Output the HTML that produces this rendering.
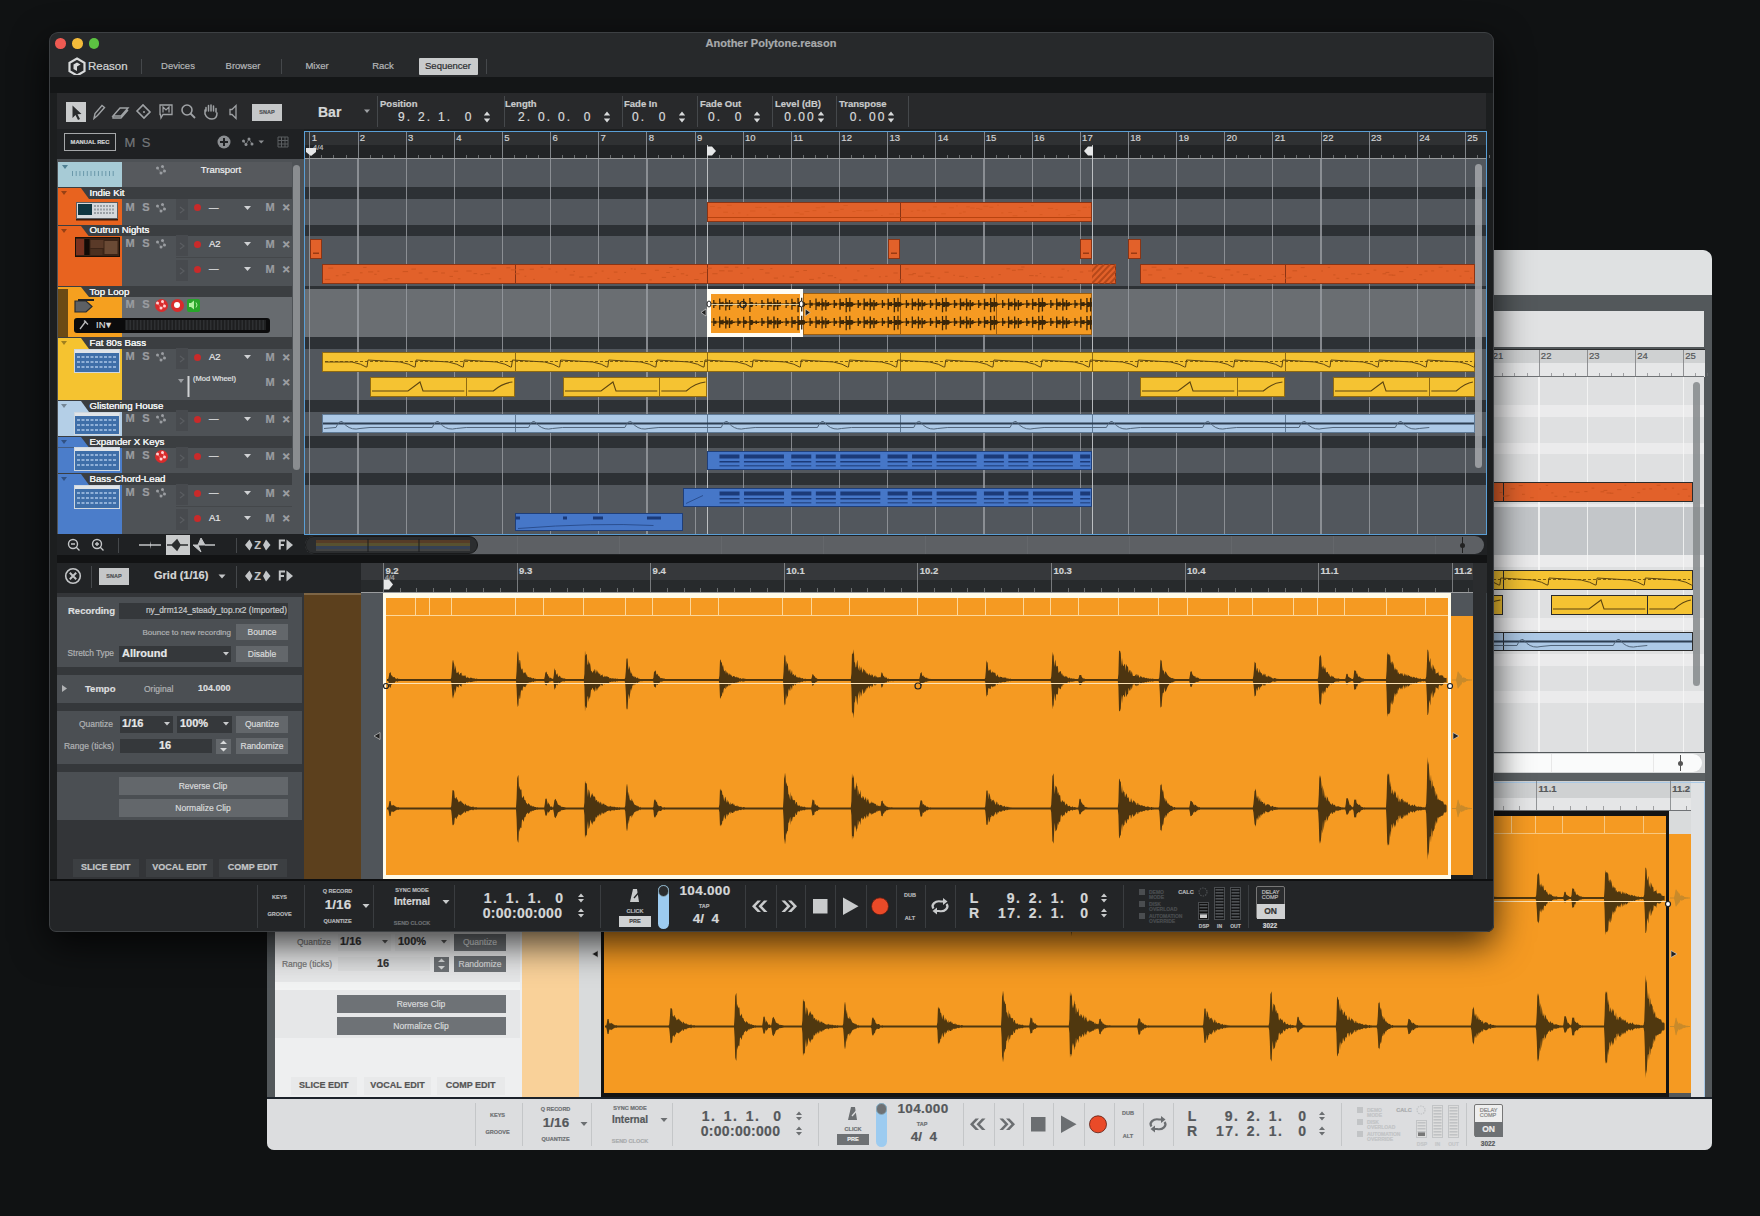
<!DOCTYPE html><html><head><meta charset="utf-8"><style>
*{margin:0;padding:0}
html,body{width:1760px;height:1216px;overflow:hidden;background:#101213;font-family:"Liberation Sans",sans-serif;}
.a{position:absolute}
.t{position:absolute;white-space:nowrap;-webkit-text-stroke:0.2px currentColor}
.t .c{position:absolute;left:0;transform:translateX(-50%);}
.win{position:absolute;overflow:hidden}
</style></head><body><svg width="0" height="0" style="position:absolute;left:0;top:0"><defs><path id="tl" d="M711.1 303.6h380.2v1h-380.2zM711.1 321.6h380.2v1h-380.2zM713.3 300.1h1.3v8.0h-1.3zM714.6 302.8h2v2.9h-2zM713.3 318.1h1.3v8.0h-1.3zM714.6 320.8h2v2.9h-2zM719.2 298.4h1.3v11.3h-1.3zM720.5 302.2h2v4.0h-2zM719.2 316.4h1.3v11.3h-1.3zM720.5 320.2h2v4.0h-2zM721.7 302.3h1.3v3.3h-1.3zM723.0 303.5h2v1.4h-2zM721.7 320.3h1.3v3.3h-1.3zM723.0 321.5h2v1.4h-2zM722.5 301.8h1.3v4.6h-1.3zM723.8 303.3h2v1.8h-2zM722.5 319.8h1.3v4.6h-1.3zM723.8 321.3h2v1.8h-2zM725.3 298.4h1.3v12.1h-1.3zM726.6 302.2h2v4.2h-2zM725.3 316.4h1.3v12.1h-1.3zM726.6 320.2h2v4.2h-2zM729.0 299.9h1.3v10.2h-1.3zM730.3 302.7h2v3.6h-2zM729.0 317.9h1.3v10.2h-1.3zM730.3 320.7h2v3.6h-2zM731.5 302.1h1.3v3.9h-1.3zM732.8 303.4h2v1.6h-2zM731.5 320.1h1.3v3.9h-1.3zM732.8 321.4h2v1.6h-2zM737.5 300.1h1.3v8.0h-1.3zM738.8 302.8h2v2.9h-2zM737.5 318.1h1.3v8.0h-1.3zM738.8 320.8h2v2.9h-2zM743.2 298.8h1.3v11.0h-1.3zM744.5 302.3h2v3.8h-2zM743.2 316.8h1.3v11.0h-1.3zM744.5 320.3h2v3.8h-2zM745.8 302.9h1.3v2.7h-1.3zM747.1 303.6h2v1.2h-2zM745.8 320.9h1.3v2.7h-1.3zM747.1 321.6h2v1.2h-2zM749.4 298.0h1.3v14.0h-1.3zM750.7 302.1h2v4.8h-2zM749.4 316.0h1.3v14.0h-1.3zM750.7 320.1h2v4.8h-2zM752.0 302.5h1.3v3.5h-1.3zM753.3 303.5h2v1.5h-2zM752.0 320.5h1.3v3.5h-1.3zM753.3 321.5h2v1.5h-2zM755.5 302.5h1.3v3.1h-1.3zM756.8 303.5h2v1.3h-2zM755.5 320.5h1.3v3.1h-1.3zM756.8 321.5h2v1.3h-2zM761.4 300.1h1.3v7.8h-1.3zM762.7 302.8h2v2.8h-2zM761.4 318.1h1.3v7.8h-1.3zM762.7 320.8h2v2.8h-2zM767.4 298.6h1.3v11.5h-1.3zM768.7 302.3h2v4.0h-2zM767.4 316.6h1.3v11.5h-1.3zM768.7 320.3h2v4.0h-2zM769.8 302.9h1.3v2.7h-1.3zM771.1 303.6h2v1.2h-2zM769.8 320.9h1.3v2.7h-1.3zM771.1 321.6h2v1.2h-2zM773.4 298.4h1.3v12.1h-1.3zM774.7 302.2h2v4.2h-2zM773.4 316.4h1.3v12.1h-1.3zM774.7 320.2h2v4.2h-2zM777.1 299.9h1.3v10.2h-1.3zM778.4 302.7h2v3.6h-2zM777.1 317.9h1.3v10.2h-1.3zM778.4 320.7h2v3.6h-2zM779.8 302.1h1.3v3.9h-1.3zM781.1 303.4h2v1.6h-2zM779.8 320.1h1.3v3.9h-1.3zM781.1 321.4h2v1.6h-2zM785.6 300.1h1.3v8.0h-1.3zM786.9 302.8h2v2.9h-2zM785.6 318.1h1.3v8.0h-1.3zM786.9 320.8h2v2.9h-2zM791.5 298.8h1.3v11.0h-1.3zM792.8 302.3h2v3.8h-2zM791.5 316.8h1.3v11.0h-1.3zM792.8 320.3h2v3.8h-2zM793.9 302.7h1.3v2.7h-1.3zM795.2 303.6h2v1.2h-2zM793.9 320.7h1.3v2.7h-1.3zM795.2 321.6h2v1.2h-2zM794.6 302.1h1.3v4.2h-1.3zM795.9 303.4h2v1.7h-2zM794.6 320.1h1.3v4.2h-1.3zM795.9 321.4h2v1.7h-2zM797.6 298.2h1.3v14.0h-1.3zM798.9 302.2h2v4.8h-2zM797.6 316.2h1.3v14.0h-1.3zM798.9 320.2h2v4.8h-2zM801.2 297.8h1.3v13.8h-1.3zM802.5 302.0h2v4.7h-2zM801.2 315.8h1.3v13.8h-1.3zM802.5 320.0h2v4.7h-2zM755.8 302.5h1.3v3.5h-1.3zM757.1 303.5h2v1.5h-2zM755.8 320.5h1.3v3.5h-1.3zM757.1 321.5h2v1.5h-2zM761.5 300.1h1.3v8.0h-1.3zM762.8 302.8h2v2.9h-2zM761.5 318.1h1.3v8.0h-1.3zM762.8 320.8h2v2.9h-2zM767.3 298.4h1.3v11.3h-1.3zM768.6 302.2h2v4.0h-2zM767.3 316.4h1.3v11.3h-1.3zM768.6 320.2h2v4.0h-2zM769.9 302.3h1.3v3.3h-1.3zM771.2 303.5h2v1.4h-2zM769.9 320.3h1.3v3.3h-1.3zM771.2 321.5h2v1.4h-2zM770.7 301.8h1.3v4.6h-1.3zM772.0 303.3h2v1.8h-2zM770.7 319.8h1.3v4.6h-1.3zM772.0 321.3h2v1.8h-2zM773.5 298.4h1.3v12.1h-1.3zM774.8 302.2h2v4.2h-2zM773.5 316.4h1.3v12.1h-1.3zM774.8 320.2h2v4.2h-2zM777.2 299.9h1.3v10.2h-1.3zM778.5 302.7h2v3.6h-2zM777.2 317.9h1.3v10.2h-1.3zM778.5 320.7h2v3.6h-2zM779.7 302.1h1.3v3.9h-1.3zM781.0 303.4h2v1.6h-2zM779.7 320.1h1.3v3.9h-1.3zM781.0 321.4h2v1.6h-2zM785.6 300.1h1.3v8.0h-1.3zM786.9 302.8h2v2.9h-2zM785.6 318.1h1.3v8.0h-1.3zM786.9 320.8h2v2.9h-2zM791.4 298.8h1.3v11.0h-1.3zM792.7 302.3h2v3.8h-2zM791.4 316.8h1.3v11.0h-1.3zM792.7 320.3h2v3.8h-2zM793.9 302.9h1.3v2.7h-1.3zM795.2 303.6h2v1.2h-2zM793.9 320.9h1.3v2.7h-1.3zM795.2 321.6h2v1.2h-2zM797.5 298.0h1.3v14.0h-1.3zM798.8 302.1h2v4.8h-2zM797.5 316.0h1.3v14.0h-1.3zM798.8 320.1h2v4.8h-2zM800.1 302.5h1.3v3.5h-1.3zM801.4 303.5h2v1.5h-2zM800.1 320.5h1.3v3.5h-1.3zM801.4 321.5h2v1.5h-2zM803.6 302.5h1.3v3.1h-1.3zM804.9 303.5h2v1.3h-2zM803.6 320.5h1.3v3.1h-1.3zM804.9 321.5h2v1.3h-2zM809.6 300.1h1.3v7.8h-1.3zM810.9 302.8h2v2.8h-2zM809.6 318.1h1.3v7.8h-1.3zM810.9 320.8h2v2.8h-2zM815.5 298.6h1.3v11.5h-1.3zM816.8 302.3h2v4.0h-2zM815.5 316.6h1.3v11.5h-1.3zM816.8 320.3h2v4.0h-2zM818.0 302.9h1.3v2.7h-1.3zM819.3 303.6h2v1.2h-2zM818.0 320.9h1.3v2.7h-1.3zM819.3 321.6h2v1.2h-2zM821.6 298.4h1.3v12.1h-1.3zM822.9 302.2h2v4.2h-2zM821.6 316.4h1.3v12.1h-1.3zM822.9 320.2h2v4.2h-2zM825.3 299.9h1.3v10.2h-1.3zM826.6 302.7h2v3.6h-2zM825.3 317.9h1.3v10.2h-1.3zM826.6 320.7h2v3.6h-2zM828.0 302.1h1.3v3.9h-1.3zM829.3 303.4h2v1.6h-2zM828.0 320.1h1.3v3.9h-1.3zM829.3 321.4h2v1.6h-2zM833.7 300.1h1.3v8.0h-1.3zM835.0 302.8h2v2.9h-2zM833.7 318.1h1.3v8.0h-1.3zM835.0 320.8h2v2.9h-2zM839.6 298.8h1.3v11.0h-1.3zM840.9 302.3h2v3.8h-2zM839.6 316.8h1.3v11.0h-1.3zM840.9 320.3h2v3.8h-2zM842.0 302.7h1.3v2.7h-1.3zM843.3 303.6h2v1.2h-2zM842.0 320.7h1.3v2.7h-1.3zM843.3 321.6h2v1.2h-2zM842.8 302.1h1.3v4.2h-1.3zM844.1 303.4h2v1.7h-2zM842.8 320.1h1.3v4.2h-1.3zM844.1 321.4h2v1.7h-2zM845.7 298.2h1.3v14.0h-1.3zM847.0 302.2h2v4.8h-2zM845.7 316.2h1.3v14.0h-1.3zM847.0 320.2h2v4.8h-2zM849.3 297.8h1.3v13.8h-1.3zM850.6 302.0h2v4.7h-2zM849.3 315.8h1.3v13.8h-1.3zM850.6 320.0h2v4.7h-2zM803.9 302.5h1.3v3.5h-1.3zM805.2 303.5h2v1.5h-2zM803.9 320.5h1.3v3.5h-1.3zM805.2 321.5h2v1.5h-2zM809.6 300.1h1.3v8.0h-1.3zM810.9 302.8h2v2.9h-2zM809.6 318.1h1.3v8.0h-1.3zM810.9 320.8h2v2.9h-2zM815.5 298.4h1.3v11.3h-1.3zM816.8 302.2h2v4.0h-2zM815.5 316.4h1.3v11.3h-1.3zM816.8 320.2h2v4.0h-2zM818.0 302.3h1.3v3.3h-1.3zM819.3 303.5h2v1.4h-2zM818.0 320.3h1.3v3.3h-1.3zM819.3 321.5h2v1.4h-2zM818.8 301.8h1.3v4.6h-1.3zM820.1 303.3h2v1.8h-2zM818.8 319.8h1.3v4.6h-1.3zM820.1 321.3h2v1.8h-2zM821.6 298.4h1.3v12.1h-1.3zM822.9 302.2h2v4.2h-2zM821.6 316.4h1.3v12.1h-1.3zM822.9 320.2h2v4.2h-2zM825.3 299.9h1.3v10.2h-1.3zM826.6 302.7h2v3.6h-2zM825.3 317.9h1.3v10.2h-1.3zM826.6 320.7h2v3.6h-2zM827.8 302.1h1.3v3.9h-1.3zM829.1 303.4h2v1.6h-2zM827.8 320.1h1.3v3.9h-1.3zM829.1 321.4h2v1.6h-2zM833.8 300.1h1.3v8.0h-1.3zM835.1 302.8h2v2.9h-2zM833.8 318.1h1.3v8.0h-1.3zM835.1 320.8h2v2.9h-2zM839.5 298.8h1.3v11.0h-1.3zM840.8 302.3h2v3.8h-2zM839.5 316.8h1.3v11.0h-1.3zM840.8 320.3h2v3.8h-2zM842.1 302.9h1.3v2.7h-1.3zM843.4 303.6h2v1.2h-2zM842.1 320.9h1.3v2.7h-1.3zM843.4 321.6h2v1.2h-2zM845.7 298.0h1.3v14.0h-1.3zM847.0 302.1h2v4.8h-2zM845.7 316.0h1.3v14.0h-1.3zM847.0 320.1h2v4.8h-2zM848.3 302.5h1.3v3.5h-1.3zM849.6 303.5h2v1.5h-2zM848.3 320.5h1.3v3.5h-1.3zM849.6 321.5h2v1.5h-2zM851.8 302.5h1.3v3.1h-1.3zM853.1 303.5h2v1.3h-2zM851.8 320.5h1.3v3.1h-1.3zM853.1 321.5h2v1.3h-2zM857.7 300.1h1.3v7.8h-1.3zM859.0 302.8h2v2.8h-2zM857.7 318.1h1.3v7.8h-1.3zM859.0 320.8h2v2.8h-2zM863.7 298.6h1.3v11.5h-1.3zM865.0 302.3h2v4.0h-2zM863.7 316.6h1.3v11.5h-1.3zM865.0 320.3h2v4.0h-2zM866.1 302.9h1.3v2.7h-1.3zM867.4 303.6h2v1.2h-2zM866.1 320.9h1.3v2.7h-1.3zM867.4 321.6h2v1.2h-2zM869.7 298.4h1.3v12.1h-1.3zM871.0 302.2h2v4.2h-2zM869.7 316.4h1.3v12.1h-1.3zM871.0 320.2h2v4.2h-2zM873.4 299.9h1.3v10.2h-1.3zM874.7 302.7h2v3.6h-2zM873.4 317.9h1.3v10.2h-1.3zM874.7 320.7h2v3.6h-2zM876.1 302.1h1.3v3.9h-1.3zM877.4 303.4h2v1.6h-2zM876.1 320.1h1.3v3.9h-1.3zM877.4 321.4h2v1.6h-2zM881.9 300.1h1.3v8.0h-1.3zM883.2 302.8h2v2.9h-2zM881.9 318.1h1.3v8.0h-1.3zM883.2 320.8h2v2.9h-2zM887.8 298.8h1.3v11.0h-1.3zM889.1 302.3h2v3.8h-2zM887.8 316.8h1.3v11.0h-1.3zM889.1 320.3h2v3.8h-2zM890.2 302.7h1.3v2.7h-1.3zM891.5 303.6h2v1.2h-2zM890.2 320.7h1.3v2.7h-1.3zM891.5 321.6h2v1.2h-2zM890.9 302.1h1.3v4.2h-1.3zM892.2 303.4h2v1.7h-2zM890.9 320.1h1.3v4.2h-1.3zM892.2 321.4h2v1.7h-2zM893.9 298.2h1.3v14.0h-1.3zM895.2 302.2h2v4.8h-2zM893.9 316.2h1.3v14.0h-1.3zM895.2 320.2h2v4.8h-2zM897.5 297.8h1.3v13.8h-1.3zM898.8 302.0h2v4.7h-2zM897.5 315.8h1.3v13.8h-1.3zM898.8 320.0h2v4.7h-2zM852.1 302.5h1.3v3.5h-1.3zM853.4 303.5h2v1.5h-2zM852.1 320.5h1.3v3.5h-1.3zM853.4 321.5h2v1.5h-2zM857.8 300.1h1.3v8.0h-1.3zM859.1 302.8h2v2.9h-2zM857.8 318.1h1.3v8.0h-1.3zM859.1 320.8h2v2.9h-2zM863.6 298.4h1.3v11.3h-1.3zM864.9 302.2h2v4.0h-2zM863.6 316.4h1.3v11.3h-1.3zM864.9 320.2h2v4.0h-2zM866.2 302.3h1.3v3.3h-1.3zM867.5 303.5h2v1.4h-2zM866.2 320.3h1.3v3.3h-1.3zM867.5 321.5h2v1.4h-2zM867.0 301.8h1.3v4.6h-1.3zM868.3 303.3h2v1.8h-2zM867.0 319.8h1.3v4.6h-1.3zM868.3 321.3h2v1.8h-2zM869.8 298.4h1.3v12.1h-1.3zM871.1 302.2h2v4.2h-2zM869.8 316.4h1.3v12.1h-1.3zM871.1 320.2h2v4.2h-2zM873.5 299.9h1.3v10.2h-1.3zM874.8 302.7h2v3.6h-2zM873.5 317.9h1.3v10.2h-1.3zM874.8 320.7h2v3.6h-2zM876.0 302.1h1.3v3.9h-1.3zM877.3 303.4h2v1.6h-2zM876.0 320.1h1.3v3.9h-1.3zM877.3 321.4h2v1.6h-2zM881.9 300.1h1.3v8.0h-1.3zM883.2 302.8h2v2.9h-2zM881.9 318.1h1.3v8.0h-1.3zM883.2 320.8h2v2.9h-2zM887.7 298.8h1.3v11.0h-1.3zM889.0 302.3h2v3.8h-2zM887.7 316.8h1.3v11.0h-1.3zM889.0 320.3h2v3.8h-2zM890.2 302.9h1.3v2.7h-1.3zM891.5 303.6h2v1.2h-2zM890.2 320.9h1.3v2.7h-1.3zM891.5 321.6h2v1.2h-2zM893.8 298.0h1.3v14.0h-1.3zM895.1 302.1h2v4.8h-2zM893.8 316.0h1.3v14.0h-1.3zM895.1 320.1h2v4.8h-2zM896.4 302.5h1.3v3.5h-1.3zM897.7 303.5h2v1.5h-2zM896.4 320.5h1.3v3.5h-1.3zM897.7 321.5h2v1.5h-2zM899.9 302.5h1.3v3.1h-1.3zM901.2 303.5h2v1.3h-2zM899.9 320.5h1.3v3.1h-1.3zM901.2 321.5h2v1.3h-2zM905.9 300.1h1.3v7.8h-1.3zM907.2 302.8h2v2.8h-2zM905.9 318.1h1.3v7.8h-1.3zM907.2 320.8h2v2.8h-2zM911.8 298.6h1.3v11.5h-1.3zM913.1 302.3h2v4.0h-2zM911.8 316.6h1.3v11.5h-1.3zM913.1 320.3h2v4.0h-2zM914.3 302.9h1.3v2.7h-1.3zM915.6 303.6h2v1.2h-2zM914.3 320.9h1.3v2.7h-1.3zM915.6 321.6h2v1.2h-2zM917.9 298.4h1.3v12.1h-1.3zM919.2 302.2h2v4.2h-2zM917.9 316.4h1.3v12.1h-1.3zM919.2 320.2h2v4.2h-2zM921.6 299.9h1.3v10.2h-1.3zM922.9 302.7h2v3.6h-2zM921.6 317.9h1.3v10.2h-1.3zM922.9 320.7h2v3.6h-2zM924.3 302.1h1.3v3.9h-1.3zM925.6 303.4h2v1.6h-2zM924.3 320.1h1.3v3.9h-1.3zM925.6 321.4h2v1.6h-2zM930.0 300.1h1.3v8.0h-1.3zM931.3 302.8h2v2.9h-2zM930.0 318.1h1.3v8.0h-1.3zM931.3 320.8h2v2.9h-2zM935.9 298.8h1.3v11.0h-1.3zM937.2 302.3h2v3.8h-2zM935.9 316.8h1.3v11.0h-1.3zM937.2 320.3h2v3.8h-2zM938.3 302.7h1.3v2.7h-1.3zM939.6 303.6h2v1.2h-2zM938.3 320.7h1.3v2.7h-1.3zM939.6 321.6h2v1.2h-2zM939.1 302.1h1.3v4.2h-1.3zM940.4 303.4h2v1.7h-2zM939.1 320.1h1.3v4.2h-1.3zM940.4 321.4h2v1.7h-2zM942.0 298.2h1.3v14.0h-1.3zM943.3 302.2h2v4.8h-2zM942.0 316.2h1.3v14.0h-1.3zM943.3 320.2h2v4.8h-2zM945.6 297.8h1.3v13.8h-1.3zM946.9 302.0h2v4.7h-2zM945.6 315.8h1.3v13.8h-1.3zM946.9 320.0h2v4.7h-2zM900.2 302.5h1.3v3.5h-1.3zM901.5 303.5h2v1.5h-2zM900.2 320.5h1.3v3.5h-1.3zM901.5 321.5h2v1.5h-2zM905.9 300.1h1.3v8.0h-1.3zM907.2 302.8h2v2.9h-2zM905.9 318.1h1.3v8.0h-1.3zM907.2 320.8h2v2.9h-2zM911.8 298.4h1.3v11.3h-1.3zM913.1 302.2h2v4.0h-2zM911.8 316.4h1.3v11.3h-1.3zM913.1 320.2h2v4.0h-2zM914.3 302.3h1.3v3.3h-1.3zM915.6 303.5h2v1.4h-2zM914.3 320.3h1.3v3.3h-1.3zM915.6 321.5h2v1.4h-2zM915.1 301.8h1.3v4.6h-1.3zM916.4 303.3h2v1.8h-2zM915.1 319.8h1.3v4.6h-1.3zM916.4 321.3h2v1.8h-2zM917.9 298.4h1.3v12.1h-1.3zM919.2 302.2h2v4.2h-2zM917.9 316.4h1.3v12.1h-1.3zM919.2 320.2h2v4.2h-2zM921.6 299.9h1.3v10.2h-1.3zM922.9 302.7h2v3.6h-2zM921.6 317.9h1.3v10.2h-1.3zM922.9 320.7h2v3.6h-2zM924.1 302.1h1.3v3.9h-1.3zM925.4 303.4h2v1.6h-2zM924.1 320.1h1.3v3.9h-1.3zM925.4 321.4h2v1.6h-2zM930.1 300.1h1.3v8.0h-1.3zM931.4 302.8h2v2.9h-2zM930.1 318.1h1.3v8.0h-1.3zM931.4 320.8h2v2.9h-2zM935.8 298.8h1.3v11.0h-1.3zM937.1 302.3h2v3.8h-2zM935.8 316.8h1.3v11.0h-1.3zM937.1 320.3h2v3.8h-2zM938.4 302.9h1.3v2.7h-1.3zM939.7 303.6h2v1.2h-2zM938.4 320.9h1.3v2.7h-1.3zM939.7 321.6h2v1.2h-2zM942.0 298.0h1.3v14.0h-1.3zM943.3 302.1h2v4.8h-2zM942.0 316.0h1.3v14.0h-1.3zM943.3 320.1h2v4.8h-2zM944.6 302.5h1.3v3.5h-1.3zM945.9 303.5h2v1.5h-2zM944.6 320.5h1.3v3.5h-1.3zM945.9 321.5h2v1.5h-2zM948.1 302.5h1.3v3.1h-1.3zM949.4 303.5h2v1.3h-2zM948.1 320.5h1.3v3.1h-1.3zM949.4 321.5h2v1.3h-2zM954.0 300.1h1.3v7.8h-1.3zM955.3 302.8h2v2.8h-2zM954.0 318.1h1.3v7.8h-1.3zM955.3 320.8h2v2.8h-2zM960.0 298.6h1.3v11.5h-1.3zM961.3 302.3h2v4.0h-2zM960.0 316.6h1.3v11.5h-1.3zM961.3 320.3h2v4.0h-2zM962.4 302.9h1.3v2.7h-1.3zM963.7 303.6h2v1.2h-2zM962.4 320.9h1.3v2.7h-1.3zM963.7 321.6h2v1.2h-2zM966.0 298.4h1.3v12.1h-1.3zM967.3 302.2h2v4.2h-2zM966.0 316.4h1.3v12.1h-1.3zM967.3 320.2h2v4.2h-2zM969.7 299.9h1.3v10.2h-1.3zM971.0 302.7h2v3.6h-2zM969.7 317.9h1.3v10.2h-1.3zM971.0 320.7h2v3.6h-2zM972.4 302.1h1.3v3.9h-1.3zM973.7 303.4h2v1.6h-2zM972.4 320.1h1.3v3.9h-1.3zM973.7 321.4h2v1.6h-2zM978.2 300.1h1.3v8.0h-1.3zM979.5 302.8h2v2.9h-2zM978.2 318.1h1.3v8.0h-1.3zM979.5 320.8h2v2.9h-2zM984.1 298.8h1.3v11.0h-1.3zM985.4 302.3h2v3.8h-2zM984.1 316.8h1.3v11.0h-1.3zM985.4 320.3h2v3.8h-2zM986.5 302.7h1.3v2.7h-1.3zM987.8 303.6h2v1.2h-2zM986.5 320.7h1.3v2.7h-1.3zM987.8 321.6h2v1.2h-2zM987.2 302.1h1.3v4.2h-1.3zM988.5 303.4h2v1.7h-2zM987.2 320.1h1.3v4.2h-1.3zM988.5 321.4h2v1.7h-2zM990.2 298.2h1.3v14.0h-1.3zM991.5 302.2h2v4.8h-2zM990.2 316.2h1.3v14.0h-1.3zM991.5 320.2h2v4.8h-2zM993.8 297.8h1.3v13.8h-1.3zM995.1 302.0h2v4.7h-2zM993.8 315.8h1.3v13.8h-1.3zM995.1 320.0h2v4.7h-2zM948.4 302.5h1.3v3.5h-1.3zM949.7 303.5h2v1.5h-2zM948.4 320.5h1.3v3.5h-1.3zM949.7 321.5h2v1.5h-2zM954.1 300.1h1.3v8.0h-1.3zM955.4 302.8h2v2.9h-2zM954.1 318.1h1.3v8.0h-1.3zM955.4 320.8h2v2.9h-2zM959.9 298.4h1.3v11.3h-1.3zM961.2 302.2h2v4.0h-2zM959.9 316.4h1.3v11.3h-1.3zM961.2 320.2h2v4.0h-2zM962.5 302.3h1.3v3.3h-1.3zM963.8 303.5h2v1.4h-2zM962.5 320.3h1.3v3.3h-1.3zM963.8 321.5h2v1.4h-2zM963.3 301.8h1.3v4.6h-1.3zM964.6 303.3h2v1.8h-2zM963.3 319.8h1.3v4.6h-1.3zM964.6 321.3h2v1.8h-2zM966.1 298.4h1.3v12.1h-1.3zM967.4 302.2h2v4.2h-2zM966.1 316.4h1.3v12.1h-1.3zM967.4 320.2h2v4.2h-2zM969.8 299.9h1.3v10.2h-1.3zM971.1 302.7h2v3.6h-2zM969.8 317.9h1.3v10.2h-1.3zM971.1 320.7h2v3.6h-2zM972.3 302.1h1.3v3.9h-1.3zM973.6 303.4h2v1.6h-2zM972.3 320.1h1.3v3.9h-1.3zM973.6 321.4h2v1.6h-2zM978.2 300.1h1.3v8.0h-1.3zM979.5 302.8h2v2.9h-2zM978.2 318.1h1.3v8.0h-1.3zM979.5 320.8h2v2.9h-2zM984.0 298.8h1.3v11.0h-1.3zM985.3 302.3h2v3.8h-2zM984.0 316.8h1.3v11.0h-1.3zM985.3 320.3h2v3.8h-2zM986.5 302.9h1.3v2.7h-1.3zM987.8 303.6h2v1.2h-2zM986.5 320.9h1.3v2.7h-1.3zM987.8 321.6h2v1.2h-2zM990.1 298.0h1.3v14.0h-1.3zM991.4 302.1h2v4.8h-2zM990.1 316.0h1.3v14.0h-1.3zM991.4 320.1h2v4.8h-2zM992.7 302.5h1.3v3.5h-1.3zM994.0 303.5h2v1.5h-2zM992.7 320.5h1.3v3.5h-1.3zM994.0 321.5h2v1.5h-2zM996.2 302.5h1.3v3.1h-1.3zM997.5 303.5h2v1.3h-2zM996.2 320.5h1.3v3.1h-1.3zM997.5 321.5h2v1.3h-2zM1002.2 300.1h1.3v7.8h-1.3zM1003.5 302.8h2v2.8h-2zM1002.2 318.1h1.3v7.8h-1.3zM1003.5 320.8h2v2.8h-2zM1008.1 298.6h1.3v11.5h-1.3zM1009.4 302.3h2v4.0h-2zM1008.1 316.6h1.3v11.5h-1.3zM1009.4 320.3h2v4.0h-2zM1010.6 302.9h1.3v2.7h-1.3zM1011.9 303.6h2v1.2h-2zM1010.6 320.9h1.3v2.7h-1.3zM1011.9 321.6h2v1.2h-2zM1014.2 298.4h1.3v12.1h-1.3zM1015.5 302.2h2v4.2h-2zM1014.2 316.4h1.3v12.1h-1.3zM1015.5 320.2h2v4.2h-2zM1017.9 299.9h1.3v10.2h-1.3zM1019.2 302.7h2v3.6h-2zM1017.9 317.9h1.3v10.2h-1.3zM1019.2 320.7h2v3.6h-2zM1020.6 302.1h1.3v3.9h-1.3zM1021.9 303.4h2v1.6h-2zM1020.6 320.1h1.3v3.9h-1.3zM1021.9 321.4h2v1.6h-2zM1026.3 300.1h1.3v8.0h-1.3zM1027.6 302.8h2v2.9h-2zM1026.3 318.1h1.3v8.0h-1.3zM1027.6 320.8h2v2.9h-2zM1032.2 298.8h1.3v11.0h-1.3zM1033.5 302.3h2v3.8h-2zM1032.2 316.8h1.3v11.0h-1.3zM1033.5 320.3h2v3.8h-2zM1034.6 302.7h1.3v2.7h-1.3zM1035.9 303.6h2v1.2h-2zM1034.6 320.7h1.3v2.7h-1.3zM1035.9 321.6h2v1.2h-2zM1035.4 302.1h1.3v4.2h-1.3zM1036.7 303.4h2v1.7h-2zM1035.4 320.1h1.3v4.2h-1.3zM1036.7 321.4h2v1.7h-2zM1038.3 298.2h1.3v14.0h-1.3zM1039.6 302.2h2v4.8h-2zM1038.3 316.2h1.3v14.0h-1.3zM1039.6 320.2h2v4.8h-2zM1041.9 297.8h1.3v13.8h-1.3zM1043.2 302.0h2v4.7h-2zM1041.9 315.8h1.3v13.8h-1.3zM1043.2 320.0h2v4.7h-2zM996.5 302.5h1.3v3.5h-1.3zM997.8 303.5h2v1.5h-2zM996.5 320.5h1.3v3.5h-1.3zM997.8 321.5h2v1.5h-2zM1002.2 300.1h1.3v8.0h-1.3zM1003.5 302.8h2v2.9h-2zM1002.2 318.1h1.3v8.0h-1.3zM1003.5 320.8h2v2.9h-2zM1008.1 298.4h1.3v11.3h-1.3zM1009.4 302.2h2v4.0h-2zM1008.1 316.4h1.3v11.3h-1.3zM1009.4 320.2h2v4.0h-2zM1010.6 302.3h1.3v3.3h-1.3zM1011.9 303.5h2v1.4h-2zM1010.6 320.3h1.3v3.3h-1.3zM1011.9 321.5h2v1.4h-2zM1011.4 301.8h1.3v4.6h-1.3zM1012.7 303.3h2v1.8h-2zM1011.4 319.8h1.3v4.6h-1.3zM1012.7 321.3h2v1.8h-2zM1014.2 298.4h1.3v12.1h-1.3zM1015.5 302.2h2v4.2h-2zM1014.2 316.4h1.3v12.1h-1.3zM1015.5 320.2h2v4.2h-2zM1017.9 299.9h1.3v10.2h-1.3zM1019.2 302.7h2v3.6h-2zM1017.9 317.9h1.3v10.2h-1.3zM1019.2 320.7h2v3.6h-2zM1020.4 302.1h1.3v3.9h-1.3zM1021.7 303.4h2v1.6h-2zM1020.4 320.1h1.3v3.9h-1.3zM1021.7 321.4h2v1.6h-2zM1026.4 300.1h1.3v8.0h-1.3zM1027.7 302.8h2v2.9h-2zM1026.4 318.1h1.3v8.0h-1.3zM1027.7 320.8h2v2.9h-2zM1032.1 298.8h1.3v11.0h-1.3zM1033.4 302.3h2v3.8h-2zM1032.1 316.8h1.3v11.0h-1.3zM1033.4 320.3h2v3.8h-2zM1034.7 302.9h1.3v2.7h-1.3zM1036.0 303.6h2v1.2h-2zM1034.7 320.9h1.3v2.7h-1.3zM1036.0 321.6h2v1.2h-2zM1038.3 298.0h1.3v14.0h-1.3zM1039.6 302.1h2v4.8h-2zM1038.3 316.0h1.3v14.0h-1.3zM1039.6 320.1h2v4.8h-2zM1040.9 302.5h1.3v3.5h-1.3zM1042.2 303.5h2v1.5h-2zM1040.9 320.5h1.3v3.5h-1.3zM1042.2 321.5h2v1.5h-2zM1044.4 302.5h1.3v3.1h-1.3zM1045.7 303.5h2v1.3h-2zM1044.4 320.5h1.3v3.1h-1.3zM1045.7 321.5h2v1.3h-2zM1050.3 300.1h1.3v7.8h-1.3zM1051.6 302.8h2v2.8h-2zM1050.3 318.1h1.3v7.8h-1.3zM1051.6 320.8h2v2.8h-2zM1056.3 298.6h1.3v11.5h-1.3zM1057.6 302.3h2v4.0h-2zM1056.3 316.6h1.3v11.5h-1.3zM1057.6 320.3h2v4.0h-2zM1058.7 302.9h1.3v2.7h-1.3zM1060.0 303.6h2v1.2h-2zM1058.7 320.9h1.3v2.7h-1.3zM1060.0 321.6h2v1.2h-2zM1062.3 298.4h1.3v12.1h-1.3zM1063.6 302.2h2v4.2h-2zM1062.3 316.4h1.3v12.1h-1.3zM1063.6 320.2h2v4.2h-2zM1066.0 299.9h1.3v10.2h-1.3zM1067.3 302.7h2v3.6h-2zM1066.0 317.9h1.3v10.2h-1.3zM1067.3 320.7h2v3.6h-2zM1068.7 302.1h1.3v3.9h-1.3zM1070.0 303.4h2v1.6h-2zM1068.7 320.1h1.3v3.9h-1.3zM1070.0 321.4h2v1.6h-2zM1074.5 300.1h1.3v8.0h-1.3zM1075.8 302.8h2v2.9h-2zM1074.5 318.1h1.3v8.0h-1.3zM1075.8 320.8h2v2.9h-2zM1080.4 298.8h1.3v11.0h-1.3zM1081.7 302.3h2v3.8h-2zM1080.4 316.8h1.3v11.0h-1.3zM1081.7 320.3h2v3.8h-2zM1082.8 302.7h1.3v2.7h-1.3zM1084.1 303.6h2v1.2h-2zM1082.8 320.7h1.3v2.7h-1.3zM1084.1 321.6h2v1.2h-2zM1083.5 302.1h1.3v4.2h-1.3zM1084.8 303.4h2v1.7h-2zM1083.5 320.1h1.3v4.2h-1.3zM1084.8 321.4h2v1.7h-2zM1086.5 298.2h1.3v14.0h-1.3zM1087.8 302.2h2v4.8h-2zM1086.5 316.2h1.3v14.0h-1.3zM1087.8 320.2h2v4.8h-2zM1090.1 297.8h1.3v13.8h-1.3zM1091.4 302.0h2v4.7h-2zM1090.1 315.8h1.3v13.8h-1.3zM1091.4 320.0h2v4.7h-2zM1044.7 302.5h1.3v3.5h-1.3zM1046.0 303.5h2v1.5h-2zM1044.7 320.5h1.3v3.5h-1.3zM1046.0 321.5h2v1.5h-2zM1050.4 300.1h1.3v8.0h-1.3zM1051.7 302.8h2v2.9h-2zM1050.4 318.1h1.3v8.0h-1.3zM1051.7 320.8h2v2.9h-2zM1056.2 298.4h1.3v11.3h-1.3zM1057.5 302.2h2v4.0h-2zM1056.2 316.4h1.3v11.3h-1.3zM1057.5 320.2h2v4.0h-2zM1058.8 302.3h1.3v3.3h-1.3zM1060.1 303.5h2v1.4h-2zM1058.8 320.3h1.3v3.3h-1.3zM1060.1 321.5h2v1.4h-2zM1059.6 301.8h1.3v4.6h-1.3zM1060.9 303.3h2v1.8h-2zM1059.6 319.8h1.3v4.6h-1.3zM1060.9 321.3h2v1.8h-2zM1062.4 298.4h1.3v12.1h-1.3zM1063.7 302.2h2v4.2h-2zM1062.4 316.4h1.3v12.1h-1.3zM1063.7 320.2h2v4.2h-2zM1066.1 299.9h1.3v10.2h-1.3zM1067.4 302.7h2v3.6h-2zM1066.1 317.9h1.3v10.2h-1.3zM1067.4 320.7h2v3.6h-2zM1068.6 302.1h1.3v3.9h-1.3zM1069.9 303.4h2v1.6h-2zM1068.6 320.1h1.3v3.9h-1.3zM1069.9 321.4h2v1.6h-2zM1074.5 300.1h1.3v8.0h-1.3zM1075.8 302.8h2v2.9h-2zM1074.5 318.1h1.3v8.0h-1.3zM1075.8 320.8h2v2.9h-2zM1080.3 298.8h1.3v11.0h-1.3zM1081.6 302.3h2v3.8h-2zM1080.3 316.8h1.3v11.0h-1.3zM1081.6 320.3h2v3.8h-2zM1082.8 302.9h1.3v2.7h-1.3zM1084.1 303.6h2v1.2h-2zM1082.8 320.9h1.3v2.7h-1.3zM1084.1 321.6h2v1.2h-2zM1086.4 298.0h1.3v14.0h-1.3zM1087.7 302.1h2v4.8h-2zM1086.4 316.0h1.3v14.0h-1.3zM1087.7 320.1h2v4.8h-2zM1089.0 302.5h1.3v3.5h-1.3zM1090.3 303.5h2v1.5h-2zM1089.0 320.5h1.3v3.5h-1.3zM1090.3 321.5h2v1.5h-2z"/><path id="w1" d="M387 680 L387 678.9 387.6 678.9 388.2 678.9 388.8 676.8 389.4 672.9 390 672.7 390.6 672.1 391.2 675.2 391.8 675.6 392.4 675.9 393 677.4 393.6 677 394.2 677.1 394.8 677.2 395.4 678.5 396 678.4 396.6 678.9 397.2 678.3 397.8 678.6 398.4 678.9 399 678.7 399.6 678.9 400.2 678.9 400.8 678.9 401.4 678.9 402 678.9 402.6 678.9 403.2 678.9 403.8 678.9 404.4 678.9 405 678.9 405.6 678.9 406.2 678.9 406.8 678.9 407.4 678.9 408 678.9 408.6 678.9 409.2 678.9 409.8 678.9 410.4 678.9 411 678.9 411.6 678.9 412.2 678.9 412.8 678.9 413.4 678.9 414 678.9 414.6 678.9 415.2 678.9 415.8 678.9 416.4 678.9 417 678.9 417.6 678.9 418.2 678.9 418.8 678.9 419.4 678.9 420 678.9 420.6 678.9 421.2 678.9 421.8 678.9 422.4 678.9 423 678.9 423.6 678.9 424.2 678.9 424.8 678.9 425.4 678.9 426 678.9 426.6 678.9 427.2 678.9 427.8 678.9 428.4 678.9 429 678.9 429.6 678.9 430.2 678.9 430.8 678.9 431.4 678.9 432 678.9 432.6 678.9 433.2 678.9 433.8 678.9 434.4 678.9 435 678.9 435.6 678.9 436.2 678.9 436.8 678.9 437.4 678.9 438 678.9 438.6 678.9 439.2 678.9 439.8 678.9 440.4 678.9 441 678.9 441.6 678.9 442.2 678.9 442.8 678.9 443.4 678.9 444 678.9 444.6 678.9 445.2 678.9 445.8 678.9 446.4 678.9 447 678.9 447.6 678.9 448.2 678.9 448.8 678.9 449.4 678.9 450 678.9 450.6 678.9 451.2 677.9 451.8 671.6 452.4 662.4 453 659.4 453.6 662.2 454.2 664.5 454.8 670.3 455.4 665.3 456 669.8 456.6 673.3 457.2 672.4 457.8 672.7 458.4 671.2 459 674.1 459.6 675 460.2 673 460.8 673.2 461.4 672.4 462 676.4 462.6 675.1 463.2 676.3 463.8 675.3 464.4 676.3 465 674.8 465.6 675.9 466.2 677.5 466.8 677.9 467.4 676.6 468 678.2 468.6 677.5 469.2 677.9 469.8 678.4 470.4 677.5 471 677.7 471.6 677.8 472.2 678.5 472.8 677.9 473.4 678.6 474 678.2 474.6 678.6 475.2 678.7 475.8 678.9 476.4 678.6 477 678.8 477.6 678.9 478.2 678.9 478.8 678.9 479.4 678.9 480 678.9 480.6 678.9 481.2 678.9 481.8 678.9 482.4 678.9 483 678.9 483.6 678.9 484.2 678.9 484.8 678.9 485.4 678.9 486 678.9 486.6 678.9 487.2 678.9 487.8 678.9 488.4 678.9 489 678.9 489.6 678.9 490.2 678.9 490.8 678.9 491.4 678.9 492 678.9 492.6 678.9 493.2 678.9 493.8 678.9 494.4 678.9 495 678.9 495.6 678.9 496.2 678.9 496.8 678.9 497.4 678.9 498 678.9 498.6 678.9 499.2 678.9 499.8 678.9 500.4 678.9 501 678.9 501.6 678.9 502.2 678.9 502.8 678.9 503.4 678.9 504 678.9 504.6 678.9 505.2 678.9 505.8 678.9 506.4 678.9 507 678.9 507.6 678.9 508.2 678.9 508.8 678.9 509.4 678.9 510 678.9 510.6 678.9 511.2 678.9 511.8 678.9 512.4 678.9 513 678.9 513.6 678.9 514.2 678.9 514.8 678.9 515.4 678.9 516 678.9 516.6 671 517.2 655.1 517.8 651 518.4 653 519 664.5 519.6 659.7 520.2 660.4 520.8 667 521.4 669.9 522 668.3 522.6 669.3 523.2 673.8 523.8 672.2 524.4 672.4 525 672.9 525.6 671.9 526.2 675.9 526.8 673.5 527.4 676.5 528 677 528.6 677.1 529.2 677.1 529.8 677.8 530.4 677.3 531 677.5 531.6 677.9 532.2 678.4 532.8 678.2 533.4 678 534 678.2 534.6 678.9 535.2 678.4 535.8 678.9 536.4 678.9 537 678.9 537.6 678.9 538.2 678.9 538.8 678.9 539.4 678.9 540 678.9 540.6 678.9 541.2 678.9 541.8 678.9 542.4 678.9 543 678.9 543.6 678.9 544.2 678.9 544.8 676.4 545.4 672.1 546 672.8 546.6 671.3 547.2 674.5 547.8 674.1 548.4 676.5 549 676.2 549.6 678.2 550.2 678 550.8 677.6 551.4 678.4 552 678.6 552.6 678.9 553.2 678.8 553.8 675.2 554.4 668.1 555 670.2 555.6 670 556.2 674.9 556.8 674.1 557.4 673.3 558 676.2 558.6 676.9 559.2 676.2 559.8 675.4 560.4 676.7 561 678.1 561.6 677.7 562.2 677.8 562.8 678.6 563.4 678.6 564 678.3 564.6 678.4 565.2 678.8 565.8 678.9 566.4 678.9 567 678.9 567.6 678.9 568.2 678.9 568.8 678.9 569.4 678.9 570 678.9 570.6 678.9 571.2 678.9 571.8 678.9 572.4 678.9 573 678.9 573.6 678.9 574.2 678.9 574.8 678.9 575.4 678.9 576 678.9 576.6 678.9 577.2 678.9 577.8 678.9 578.4 678.9 579 678.9 579.6 678.9 580.2 678.9 580.8 678.9 581.4 678.9 582 678.9 582.6 678.9 583.2 678.9 583.8 678.9 584.4 674 585 650.5 585.6 655.7 586.2 654.4 586.8 653.8 587.4 663.8 588 665.3 588.6 659.2 589.2 664.5 589.8 662 590.4 665.5 591 670.7 591.6 670.9 592.2 672.2 592.8 672.7 593.4 670.3 594 671.7 594.6 668.9 595.2 669.8 595.8 674 596.4 669.5 597 673 597.6 670.3 598.2 673.9 598.8 672 599.4 674.5 600 673.3 600.6 676.1 601.2 675.3 601.8 674.9 602.4 674.3 603 676.4 603.6 677.2 604.2 675.6 604.8 677.1 605.4 676.4 606 676.3 606.6 676.6 607.2 676.3 607.8 677.1 608.4 676.9 609 677.3 609.6 678.4 610.2 678.2 610.8 678 611.4 678.6 612 678.4 612.6 678.3 613.2 678.5 613.8 678.6 614.4 678.5 615 678.9 615.6 678.2 616.2 678.8 616.8 678.9 617.4 678.5 618 678.9 618.6 678.9 619.2 678.9 619.8 678.9 620.4 678.9 621 678.9 621.6 678.9 622.2 678.9 622.8 678.9 623.4 678.9 624 678.9 624.6 678.9 625.2 677.8 625.8 671.2 626.4 659.4 627 658.1 627.6 659.1 628.2 667.1 628.8 670.1 629.4 665.8 630 669.4 630.6 672.5 631.2 674.3 631.8 671.9 632.4 676.3 633 675.5 633.6 677.1 634.2 676.1 634.8 677.7 635.4 676.5 636 677.5 636.6 678.4 637.2 677.3 637.8 678 638.4 678.4 639 678.8 639.6 678.7 640.2 678.9 640.8 678.9 641.4 678.9 642 678.9 642.6 678.9 643.2 678.9 643.8 678.9 644.4 678.9 645 678.9 645.6 678.9 646.2 678.9 646.8 678.9 647.4 678.9 648 678.9 648.6 678.9 649.2 678.9 649.8 678.9 650.4 678.9 651 678.9 651.6 678.9 652.2 678.9 652.8 678.9 653.4 678 654 671.9 654.6 671.6 655.2 670.7 655.8 670.6 656.4 674.9 657 673.7 657.6 673.9 658.2 676.3 658.8 675.4 659.4 676.4 660 677.4 660.6 678.2 661.2 678.2 661.8 677.9 662.4 678.3 663 678.6 663.6 678.6 664.2 678.6 664.8 678.7 665.4 678.9 666 678.9 666.6 678.9 667.2 678.9 667.8 678.9 668.4 678.9 669 678.9 669.6 678.9 670.2 678.9 670.8 678.9 671.4 678.9 672 678.9 672.6 678.9 673.2 678.9 673.8 678.9 674.4 678.9 675 678.9 675.6 678.9 676.2 678.9 676.8 678.9 677.4 678.9 678 678.9 678.6 678.9 679.2 678.9 679.8 678.9 680.4 678.9 681 678.9 681.6 678.9 682.2 678.9 682.8 678.9 683.4 678.9 684 678.9 684.6 678.9 685.2 678.9 685.8 678.9 686.4 678.9 687 678.9 687.6 678.9 688.2 678.9 688.8 678.9 689.4 678.9 690 678.9 690.6 678.9 691.2 678.9 691.8 678.9 692.4 678.9 693 678.9 693.6 678.9 694.2 678.9 694.8 678.9 695.4 678.9 696 678.9 696.6 678.9 697.2 678.9 697.8 678.9 698.4 678.9 699 678.9 699.6 678.9 700.2 678.9 700.8 678.9 701.4 678.9 702 678.9 702.6 678.9 703.2 678.9 703.8 678.9 704.4 678.9 705 678.9 705.6 678.9 706.2 678.9 706.8 678.9 707.4 678.9 708 678.9 708.6 678.9 709.2 678.9 709.8 678.9 710.4 678.9 711 678.9 711.6 678.9 712.2 678.9 712.8 678.9 713.4 678.9 714 678.9 714.6 678.9 715.2 678.9 715.8 678.9 716.4 678.9 717 678.9 717.6 678.9 718.2 678.9 718.8 678.9 719.4 675.8 720 659.9 720.6 659.5 721.2 663 721.8 661.6 722.4 666.9 723 664.4 723.6 668.8 724.2 671.4 724.8 670.8 725.4 669.9 726 674.1 726.6 670.8 727.2 673.7 727.8 672.1 728.4 674 729 675.6 729.6 673.1 730.2 675.4 730.8 674 731.4 675.6 732 675.9 732.6 677.2 733.2 676 733.8 675.9 734.4 676.3 735 676.8 735.6 677.4 736.2 676.6 736.8 677.5 737.4 677 738 678.2 738.6 677.3 739.2 678.3 739.8 678.7 740.4 678.1 741 678.6 741.6 678.9 742.2 678.5 742.8 678.4 743.4 678.5 744 678.5 744.6 678.7 745.2 678.9 745.8 678.8 746.4 678.9 747 678.9 747.6 678.9 748.2 678.9 748.8 678.9 749.4 678.9 750 678.9 750.6 678.9 751.2 678.9 751.8 678.9 752.4 678.9 753 678.9 753.6 678.9 754.2 678.9 754.8 678.9 755.4 678.9 756 678.9 756.6 678.9 757.2 678.9 757.8 678.9 758.4 678.9 759 678.9 759.6 678.9 760.2 678.9 760.8 678.9 761.4 678.9 762 678.9 762.6 678.9 763.2 678.9 763.8 678.9 764.4 678.9 765 678.9 765.6 678.9 766.2 678.9 766.8 678.9 767.4 678.9 768 678.9 768.6 678.9 769.2 678.9 769.8 678.9 770.4 678.9 771 678.9 771.6 678.9 772.2 678.9 772.8 678.9 773.4 678.9 774 678.9 774.6 678.9 775.2 678.9 775.8 678.9 776.4 678.9 777 678.9 777.6 678.9 778.2 678.9 778.8 678.9 779.4 678.9 780 678.9 780.6 678.9 781.2 678.9 781.8 678.9 782.4 678.9 783 678.9 783.6 671.6 784.2 657.2 784.8 654.4 785.4 655.9 786 667.1 786.6 660.8 787.2 663.6 787.8 663.7 788.4 669.4 789 671.7 789.6 669.6 790.2 669.3 790.8 674 791.4 672 792 670 792.6 675.2 793.2 674 793.8 674.4 794.4 675.8 795 675.7 795.6 674.2 796.2 677.4 796.8 676.6 797.4 676.9 798 678 798.6 677.6 799.2 676.8 799.8 678 800.4 677.6 801 678.6 801.6 678.2 802.2 678.1 802.8 678.2 803.4 678.9 804 678.8 804.6 678.9 805.2 678.6 805.8 678.9 806.4 678.9 807 678.9 807.6 678.9 808.2 678.9 808.8 678.9 809.4 678.9 810 678.9 810.6 678.9 811.2 678.9 811.8 677.6 812.4 674.2 813 674.2 813.6 675.2 814.2 676.1 814.8 676.6 815.4 677.7 816 677.8 816.6 678.2 817.2 678.8 817.8 678.9 818.4 678.9 819 678.9 819.6 678.9 820.2 678.9 820.8 678.9 821.4 678.9 822 678.9 822.6 678.9 823.2 678.9 823.8 678.9 824.4 678.9 825 678.9 825.6 678.9 826.2 678.9 826.8 678.9 827.4 678.9 828 678.9 828.6 678.9 829.2 678.9 829.8 678.9 830.4 678.9 831 678.9 831.6 678.9 832.2 678.9 832.8 678.9 833.4 678.9 834 678.9 834.6 678.9 835.2 678.9 835.8 678.9 836.4 678.9 837 678.9 837.6 678.9 838.2 678.9 838.8 678.9 839.4 678.9 840 678.9 840.6 678.9 841.2 678.9 841.8 678.9 842.4 678.9 843 678.9 843.6 678.9 844.2 678.9 844.8 678.9 845.4 678.9 846 678.9 846.6 678.9 847.2 678.9 847.8 678.9 848.4 678.9 849 678.9 849.6 678.9 850.2 678.9 850.8 678.9 851.4 673.6 852 652.3 852.6 654.3 853.2 653.4 853.8 649.3 854.4 661.7 855 662.7 855.6 667.4 856.2 666.9 856.8 662.6 857.4 659.8 858 667.3 858.6 670.3 859.2 664.9 859.8 671.1 860.4 669.7 861 666.6 861.6 668.4 862.2 671.2 862.8 672.9 863.4 668.6 864 669.8 864.6 669.9 865.2 673 865.8 670.4 866.4 673 867 674 867.6 673 868.2 675.5 868.8 674.3 869.4 673.1 870 675.3 870.6 675.6 871.2 673.9 871.8 675.9 872.4 674.2 873 675.8 873.6 677.5 874.2 676.6 874.8 675.5 875.4 675.6 876 677.7 876.6 675.9 877.2 677.6 877.8 677.2 878.4 677.3 879 677.5 879.6 677 880.2 677.6 880.8 676.8 881.4 672.5 882 672.5 882.6 673.4 883.2 675.7 883.8 676 884.4 677.7 885 675.9 885.6 678 886.2 677.5 886.8 677.5 887.4 678.9 888 678.7 888.6 678.4 889.2 678.9 889.8 678.9 890.4 678.9 891 678.9 891.6 678.9 892.2 678.9 892.8 678.9 893.4 678.9 894 678.9 894.6 678.9 895.2 678.9 895.8 678.9 896.4 678.9 897 678.9 897.6 678.9 898.2 678.9 898.8 678.9 899.4 678.9 900 678.9 900.6 678.9 901.2 678.9 901.8 678.9 902.4 678.9 903 678.9 903.6 678.9 904.2 678.9 904.8 678.9 905.4 678.9 906 678.9 906.6 678.9 907.2 678.9 907.8 678.9 908.4 678.9 909 678.9 909.6 678.9 910.2 678.9 910.8 678.9 911.4 678.9 912 678.9 912.6 678.9 913.2 678.9 913.8 678.9 914.4 678.9 915 678.9 915.6 678.9 916.2 678.9 916.8 678.9 917.4 678.9 918 678.9 918.6 678.9 919.2 678.9 919.8 676.8 920.4 673.3 921 672.7 921.6 672 922.2 675.8 922.8 676.1 923.4 675.2 924 677.3 924.6 676.4 925.2 677.8 925.8 677.8 926.4 677.8 927 677.6 927.6 678.4 928.2 678.7 928.8 678.5 929.4 678.9 930 678.8 930.6 678.9 931.2 678.9 931.8 678.9 932.4 678.9 933 678.9 933.6 678.9 934.2 678.9 934.8 678.9 935.4 678.9 936 678.9 936.6 678.9 937.2 678.9 937.8 678.9 938.4 678.9 939 678.9 939.6 678.9 940.2 678.9 940.8 678.9 941.4 678.9 942 678.9 942.6 678.9 943.2 678.9 943.8 678.9 944.4 678.9 945 678.9 945.6 678.9 946.2 678.9 946.8 678.9 947.4 678.9 948 678.9 948.6 678.9 949.2 678.9 949.8 678.9 950.4 678.9 951 678.9 951.6 678.9 952.2 678.9 952.8 678.9 953.4 678.9 954 678.9 954.6 678.9 955.2 678.9 955.8 678.9 956.4 678.9 957 678.9 957.6 678.9 958.2 678.9 958.8 678.9 959.4 678.9 960 678.9 960.6 678.9 961.2 678.9 961.8 678.9 962.4 678.9 963 678.9 963.6 678.9 964.2 678.9 964.8 678.9 965.4 678.9 966 678.9 966.6 678.9 967.2 678.9 967.8 678.9 968.4 678.9 969 678.9 969.6 678.9 970.2 678.9 970.8 678.9 971.4 678.9 972 678.9 972.6 678.9 973.2 678.9 973.8 678.9 974.4 678.9 975 678.9 975.6 678.9 976.2 678.9 976.8 678.9 977.4 678.9 978 678.9 978.6 678.9 979.2 678.9 979.8 678.9 980.4 678.9 981 678.9 981.6 678.9 982.2 678.9 982.8 678.9 983.4 678.9 984 678.9 984.6 678.9 985.2 677.9 985.8 671.6 986.4 660.3 987 662.5 987.6 662.2 988.2 669.5 988.8 671 989.4 670.2 990 669.5 990.6 669.5 991.2 673.2 991.8 672.1 992.4 671.2 993 673 993.6 671.9 994.2 673.3 994.8 672.2 995.4 673.2 996 675.7 996.6 676.4 997.2 674.2 997.8 675.3 998.4 677.3 999 676.2 999.6 677.7 1000.2 676.4 1000.8 677 1001.4 677.1 1002 677.1 1002.6 677.8 1003.2 678 1003.8 677.3 1004.4 677.5 1005 677.7 1005.6 677.5 1006.2 677.8 1006.8 678.8 1007.4 678.6 1008 678.3 1008.6 678.7 1009.2 678.8 1009.8 678.9 1010.4 678.6 1011 678.9 1011.6 678.9 1012.2 678.9 1012.8 678.9 1013.4 678.9 1014 678.9 1014.6 678.9 1015.2 678.9 1015.8 678.9 1016.4 678.9 1017 678.9 1017.6 678.9 1018.2 678.9 1018.8 678.9 1019.4 678.9 1020 678.9 1020.6 678.9 1021.2 678.9 1021.8 678.9 1022.4 678.9 1023 678.9 1023.6 678.9 1024.2 678.9 1024.8 678.9 1025.4 678.9 1026 678.9 1026.6 678.9 1027.2 678.9 1027.8 678.9 1028.4 678.9 1029 678.9 1029.6 678.9 1030.2 678.9 1030.8 678.9 1031.4 678.9 1032 678.9 1032.6 678.9 1033.2 678.9 1033.8 678.9 1034.4 678.9 1035 678.9 1035.6 678.9 1036.2 678.9 1036.8 678.9 1037.4 678.9 1038 678.9 1038.6 678.9 1039.2 678.9 1039.8 678.9 1040.4 678.9 1041 678.9 1041.6 678.9 1042.2 678.9 1042.8 678.9 1043.4 678.9 1044 678.9 1044.6 678.9 1045.2 678.9 1045.8 678.9 1046.4 678.9 1047 678.9 1047.6 678.9 1048.2 678.9 1048.8 678.9 1049.4 678.9 1050 678.9 1050.6 678.9 1051.2 677.1 1051.8 668.4 1052.4 651.5 1053 656.2 1053.6 653.6 1054.2 667.1 1054.8 662 1055.4 659.4 1056 665.3 1056.6 666.7 1057.2 666.2 1057.8 665.7 1058.4 672.5 1059 672.7 1059.6 671.6 1060.2 671.6 1060.8 670.8 1061.4 674.7 1062 672.9 1062.6 675 1063.2 676.4 1063.8 675 1064.4 676.6 1065 677.3 1065.6 675.8 1066.2 676.8 1066.8 676.2 1067.4 677.2 1068 678.3 1068.6 678.3 1069.2 677.3 1069.8 678 1070.4 678.7 1071 678.1 1071.6 678.5 1072.2 678.4 1072.8 678.7 1073.4 678.6 1074 678.7 1074.6 678.8 1075.2 678.9 1075.8 678.9 1076.4 678.9 1077 678.9 1077.6 678.9 1078.2 678.9 1078.8 677.6 1079.4 674.9 1080 675.1 1080.6 674.9 1081.2 675.1 1081.8 677.1 1082.4 677.7 1083 678.6 1083.6 678.5 1084.2 678.2 1084.8 678.9 1085.4 678.9 1086 678.9 1086.6 678.9 1087.2 678.9 1087.8 678.9 1088.4 678.9 1089 678.9 1089.6 678.9 1090.2 678.9 1090.8 678.9 1091.4 678.9 1092 678.9 1092.6 678.9 1093.2 678.9 1093.8 678.9 1094.4 678.9 1095 678.9 1095.6 678.9 1096.2 678.9 1096.8 678.9 1097.4 678.9 1098 678.9 1098.6 678.9 1099.2 678.9 1099.8 678.9 1100.4 678.9 1101 678.9 1101.6 678.9 1102.2 678.9 1102.8 678.9 1103.4 678.9 1104 678.9 1104.6 678.9 1105.2 678.9 1105.8 678.9 1106.4 678.9 1107 678.9 1107.6 678.9 1108.2 678.9 1108.8 678.9 1109.4 678.9 1110 678.9 1110.6 678.9 1111.2 678.9 1111.8 678.9 1112.4 678.9 1113 678.9 1113.6 678.9 1114.2 678.9 1114.8 678.9 1115.4 678.9 1116 678.9 1116.6 678.9 1117.2 678.9 1117.8 678.9 1118.4 674 1119 651.3 1119.6 650.4 1120.2 651.3 1120.8 653.6 1121.4 666.4 1122 657.8 1122.6 664 1123.2 665.8 1123.8 666 1124.4 664.3 1125 663.8 1125.6 670.9 1126.2 663.8 1126.8 665.4 1127.4 666.7 1128 666.3 1128.6 672.7 1129.2 671.1 1129.8 669.8 1130.4 670.5 1131 674.2 1131.6 671 1132.2 672.8 1132.8 675.7 1133.4 675.9 1134 676.1 1134.6 676 1135.2 675.6 1135.8 674.4 1136.4 674.1 1137 676.7 1137.6 674.4 1138.2 674.7 1138.8 676 1139.4 677.6 1140 677.5 1140.6 675.8 1141.2 676.5 1141.8 677.1 1142.4 677.9 1143 676.7 1143.6 677.6 1144.2 677.6 1144.8 677.6 1145.4 678.2 1146 677.9 1146.6 677.7 1147.2 678.7 1147.8 678.1 1148.4 678.5 1149 678.2 1149.6 678.9 1150.2 678.4 1150.8 678.7 1151.4 678.9 1152 678.6 1152.6 678.7 1153.2 678.7 1153.8 678.9 1154.4 678.9 1155 678.9 1155.6 678.9 1156.2 678.9 1156.8 678.9 1157.4 678.9 1158 678.9 1158.6 678.9 1159.2 677.8 1159.8 671.2 1160.4 659.4 1161 660.7 1161.6 660.2 1162.2 667.1 1162.8 670.4 1163.4 670.2 1164 671.5 1164.6 674.7 1165.2 671.2 1165.8 671.8 1166.4 672.7 1167 673.9 1167.6 675 1168.2 675.8 1168.8 676.2 1169.4 677.1 1170 677.2 1170.6 677.4 1171.2 678.3 1171.8 678 1172.4 678.3 1173 678.1 1173.6 678.7 1174.2 678.9 1174.8 678.8 1175.4 678.9 1176 678.9 1176.6 678.9 1177.2 678.9 1177.8 678.9 1178.4 678.9 1179 678.9 1179.6 678.9 1180.2 678.9 1180.8 678.9 1181.4 678.9 1182 678.9 1182.6 678.9 1183.2 678.9 1183.8 678.9 1184.4 678.9 1185 678.9 1185.6 678.9 1186.2 678.9 1186.8 678.9 1187.4 678.9 1188 678.9 1188.6 678.9 1189.2 678.9 1189.8 676 1190.4 671.4 1191 671.7 1191.6 670.9 1192.2 673.8 1192.8 675.1 1193.4 675.7 1194 676 1194.6 676.5 1195.2 676.1 1195.8 677.7 1196.4 677.5 1197 677.8 1197.6 677.5 1198.2 677.8 1198.8 678.3 1199.4 678.8 1200 678.9 1200.6 678.8 1201.2 678.9 1201.8 678.9 1202.4 678.9 1203 678.9 1203.6 678.9 1204.2 678.9 1204.8 678.9 1205.4 678.9 1206 678.9 1206.6 678.9 1207.2 678.9 1207.8 678.9 1208.4 678.9 1209 678.9 1209.6 678.9 1210.2 678.9 1210.8 678.9 1211.4 678.9 1212 678.9 1212.6 678.9 1213.2 678.9 1213.8 678.9 1214.4 678.9 1215 678.9 1215.6 678.9 1216.2 678.9 1216.8 678.9 1217.4 678.9 1218 678.9 1218.6 678.9 1219.2 678.9 1219.8 678.9 1220.4 678.9 1221 678.9 1221.6 678.9 1222.2 678.9 1222.8 678.9 1223.4 678.9 1224 678.9 1224.6 678.9 1225.2 678.9 1225.8 678.9 1226.4 678.9 1227 678.9 1227.6 678.9 1228.2 678.9 1228.8 678.9 1229.4 678.9 1230 678.9 1230.6 678.9 1231.2 678.9 1231.8 678.9 1232.4 678.9 1233 678.9 1233.6 678.9 1234.2 678.9 1234.8 678.9 1235.4 678.9 1236 678.9 1236.6 678.9 1237.2 678.9 1237.8 678.9 1238.4 678.9 1239 678.9 1239.6 678.9 1240.2 678.9 1240.8 678.9 1241.4 678.9 1242 678.9 1242.6 678.9 1243.2 678.9 1243.8 678.9 1244.4 678.9 1245 678.9 1245.6 678.9 1246.2 678.9 1246.8 678.9 1247.4 678.9 1248 678.9 1248.6 678.9 1249.2 678.9 1249.8 678.9 1250.4 678.9 1251 678.9 1251.6 678.9 1252.2 678.9 1252.8 678.9 1253.4 675.8 1254 669.5 1254.6 661.5 1255.2 662.9 1255.8 662.5 1256.4 671.4 1257 668.1 1257.6 668.6 1258.2 673 1258.8 671.7 1259.4 668.8 1260 673.2 1260.6 671.3 1261.2 673.4 1261.8 673 1262.4 674.9 1263 675.8 1263.6 673.4 1264.2 675.4 1264.8 673.4 1265.4 674.2 1266 676.9 1266.6 676.4 1267.2 675.8 1267.8 677.6 1268.4 675.8 1269 675.8 1269.6 676.9 1270.2 676.6 1270.8 677.4 1271.4 677.6 1272 677.7 1272.6 678.6 1273.2 678.5 1273.8 678.6 1274.4 678 1275 678 1275.6 678.3 1276.2 678.9 1276.8 678.6 1277.4 678.9 1278 678.8 1278.6 678.9 1279.2 678.9 1279.8 678.9 1280.4 678.9 1281 678.9 1281.6 678.9 1282.2 678.9 1282.8 678.9 1283.4 678.9 1284 678.9 1284.6 678.9 1285.2 678.9 1285.8 678.9 1286.4 678.9 1287 678.9 1287.6 678.9 1288.2 678.9 1288.8 678.9 1289.4 678.9 1290 678.9 1290.6 678.9 1291.2 678.9 1291.8 678.9 1292.4 678.9 1293 678.9 1293.6 678.9 1294.2 678.9 1294.8 678.9 1295.4 678.9 1296 678.9 1296.6 678.9 1297.2 678.9 1297.8 678.9 1298.4 678.9 1299 678.9 1299.6 678.9 1300.2 678.9 1300.8 678.9 1301.4 678.9 1302 678.9 1302.6 678.9 1303.2 678.9 1303.8 678.9 1304.4 678.9 1305 678.9 1305.6 678.9 1306.2 678.9 1306.8 678.9 1307.4 678.9 1308 678.9 1308.6 678.9 1309.2 678.9 1309.8 678.9 1310.4 678.9 1311 678.9 1311.6 678.9 1312.2 678.9 1312.8 678.9 1313.4 678.9 1314 678.9 1314.6 678.9 1315.2 678.9 1315.8 678.9 1316.4 678.9 1317 678.9 1317.6 678.9 1318.2 677.2 1318.8 668.8 1319.4 656.2 1320 656.5 1320.6 654.4 1321.2 657.5 1321.8 667.5 1322.4 665.9 1323 669.7 1323.6 665 1324.2 669.6 1324.8 667.2 1325.4 667.7 1326 672 1326.6 672.5 1327.2 672.1 1327.8 671.7 1328.4 674.4 1329 673.2 1329.6 675.5 1330.2 676.3 1330.8 677.2 1331.4 675.1 1332 677.2 1332.6 676 1333.2 676.4 1333.8 677 1334.4 678 1335 678.1 1335.6 678.4 1336.2 678.6 1336.8 678.4 1337.4 678.7 1338 678.2 1338.6 678.4 1339.2 678.7 1339.8 678.9 1340.4 678.9 1341 678.9 1341.6 678.9 1342.2 678.9 1342.8 678.9 1343.4 678.9 1344 678.9 1344.6 678.9 1345.2 678.9 1345.8 677.2 1346.4 673.7 1347 674 1347.6 673.8 1348.2 676.5 1348.8 677 1349.4 677.2 1350 677.9 1350.6 678 1351.2 678.4 1351.8 678.9 1352.4 678.9 1353 678.9 1353.6 677 1354.2 670.2 1354.8 670.4 1355.4 670.8 1356 670.8 1356.6 674.1 1357.2 673.3 1357.8 675.5 1358.4 677.1 1359 676.6 1359.6 676.3 1360.2 678.1 1360.8 676.8 1361.4 678.5 1362 677.7 1362.6 678.7 1363.2 678.1 1363.8 678.9 1364.4 678.9 1365 678.7 1365.6 678.9 1366.2 678.9 1366.8 678.9 1367.4 678.9 1368 678.9 1368.6 678.9 1369.2 678.9 1369.8 678.9 1370.4 678.9 1371 678.9 1371.6 678.9 1372.2 678.9 1372.8 678.9 1373.4 678.9 1374 678.9 1374.6 678.9 1375.2 678.9 1375.8 678.9 1376.4 678.9 1377 678.9 1377.6 678.9 1378.2 678.9 1378.8 678.9 1379.4 678.9 1380 678.9 1380.6 678.9 1381.2 678.9 1381.8 678.9 1382.4 678.9 1383 678.9 1383.6 678.9 1384.2 678.9 1384.8 678.9 1385.4 678.9 1386 678.9 1386.6 670.7 1387.2 652.1 1387.8 654.7 1388.4 654.5 1389 653.8 1389.6 655.2 1390.2 655.8 1390.8 663.2 1391.4 661.5 1392 665.1 1392.6 661.1 1393.2 662.9 1393.8 665.5 1394.4 670.6 1395 667 1395.6 669.7 1396.2 668.7 1396.8 670.5 1397.4 669.4 1398 674 1398.6 671.7 1399.2 673.9 1399.8 674.3 1400.4 672.7 1401 674.5 1401.6 672.8 1402.2 675 1402.8 672.7 1403.4 675.9 1404 675.8 1404.6 673.1 1405.2 676.1 1405.8 673.8 1406.4 675.9 1407 674.1 1407.6 676.5 1408.2 674.9 1408.8 675.6 1409.4 675.9 1410 676.1 1410.6 677.1 1411.2 676.6 1411.8 676.9 1412.4 678.1 1413 676.6 1413.6 677.3 1414.2 677 1414.8 677.4 1415.4 678.3 1416 677.5 1416.6 677.6 1417.2 678 1417.8 678.4 1418.4 678.5 1419 678.6 1419.6 678.9 1420.2 678.1 1420.8 678.9 1421.4 678.9 1422 678.9 1422.6 678.9 1423.2 678.9 1423.8 678.8 1424.4 678.9 1425 678.9 1425.6 678.8 1426.2 676.7 1426.8 666.8 1427.4 649.7 1428 649.8 1428.6 652.4 1429.2 662.7 1429.8 660.8 1430.4 657.7 1431 669.3 1431.6 667.3 1432.2 664 1432.8 671.1 1433.4 664.7 1434 667.2 1434.6 669.2 1435.2 669.1 1435.8 674 1436.4 673.3 1437 672.9 1437.6 673 1438.2 671.4 1438.8 674.7 1439.4 675.6 1440 675.8 1440.6 674.9 1441.2 675.8 1441.8 674.7 1442.4 675.7 1443 675.6 1443.6 677.5 1444.2 677.8 1444.8 677.8 1445.4 678 1446 677.9 1446.6 677.7 1446.6 682.7 1446 682.4 1445.4 682.3 1444.8 682.5 1444.2 682.5 1443.6 682.8 1443 685 1442.4 684.9 1441.8 686.1 1441.2 684.9 1440.6 685.8 1440 684.8 1439.4 685 1438.8 686.1 1438.2 689.9 1437.6 688.1 1437 688.2 1436.4 687.7 1435.8 687 1435.2 692.6 1434.6 692.4 1434 694.7 1433.4 697.7 1432.8 690.3 1432.2 698.4 1431.6 694.6 1431 692.3 1430.4 705.7 1429.8 702.2 1429.2 700 1428.6 711.8 1428 714.8 1427.4 714.9 1426.8 695.2 1426.2 683.8 1425.6 681.6 1425 681.3 1424.4 681.1 1423.8 681.6 1423.2 681.2 1422.6 681.1 1422 681.2 1421.4 681.5 1420.8 681.2 1420.2 682.5 1419.6 681.4 1419 681.8 1418.4 682 1417.8 682.2 1417.2 682.6 1416.6 683.2 1416 683.3 1415.4 682.2 1414.8 683.4 1414.2 683.9 1413.6 683.6 1413 684.5 1412.4 682.6 1411.8 684.2 1411.2 684.5 1410.6 683.9 1410 685.1 1409.4 685.4 1408.8 685.9 1408.2 686.8 1407.6 684.7 1407 687.8 1406.4 685.4 1405.8 688.2 1405.2 685.1 1404.6 689.2 1404 685.6 1403.4 685.4 1402.8 689.7 1402.2 686.6 1401.6 689.6 1401 687.2 1400.4 689.6 1399.8 687.5 1399.2 688.1 1398.6 691 1398 687.9 1397.4 694.1 1396.8 692.6 1396.2 695 1395.6 693.6 1395 697.3 1394.4 692.4 1393.8 699.1 1393.2 702.7 1392.6 705 1392 699.7 1391.4 704.5 1390.8 702.2 1390.2 712.1 1389.6 712.9 1389 714.6 1388.4 713.7 1387.8 713.5 1387.2 716.9 1386.6 692.3 1386 681.1 1385.4 681.1 1384.8 681.1 1384.2 681.1 1383.6 681.1 1383 681.1 1382.4 681.1 1381.8 681.1 1381.2 681.1 1380.6 681.1 1380 681.1 1379.4 681.1 1378.8 681.1 1378.2 681.1 1377.6 681.1 1377 681.1 1376.4 681.1 1375.8 681.1 1375.2 681.1 1374.6 681.1 1374 681.1 1373.4 681.1 1372.8 681.1 1372.2 681.1 1371.6 681.1 1371 681.1 1370.4 681.1 1369.8 681.1 1369.2 681.1 1368.6 681.1 1368 681.1 1367.4 681.1 1366.8 681.1 1366.2 681.1 1365.6 681.1 1365 681.3 1364.4 681.1 1363.8 681.1 1363.2 681.9 1362.6 681.3 1362 682.3 1361.4 681.5 1360.8 683.2 1360.2 681.9 1359.6 683.7 1359 683.4 1358.4 682.9 1357.8 684.5 1357.2 686.7 1356.6 685.9 1356 689.2 1355.4 689.2 1354.8 689.6 1354.2 689.8 1353.6 683 1353 681.1 1352.4 681.1 1351.8 681.1 1351.2 681.1 1350.6 681.4 1350 681.5 1349.4 682 1348.8 682.1 1348.2 682.5 1347.6 684.4 1347 684.3 1346.4 684.5 1345.8 682 1345.2 681.1 1344.6 681.1 1344 681.1 1343.4 681.1 1342.8 681.1 1342.2 681.1 1341.6 681.1 1341 681.1 1340.4 681.1 1339.8 681.1 1339.2 681.3 1338.6 681.6 1338 681.8 1337.4 681.3 1336.8 681.6 1336.2 681.4 1335.6 681.6 1335 681.9 1334.4 682 1333.8 683 1333.2 683.6 1332.6 684 1332 682.8 1331.4 684.9 1330.8 682.8 1330.2 683.7 1329.6 684.5 1329 686.8 1328.4 685.6 1327.8 688.3 1327.2 687.9 1326.6 687.5 1326 688 1325.4 692.3 1324.8 692.8 1324.2 690.4 1323.6 695 1323 690.3 1322.4 694.1 1321.8 692.5 1321.2 702.5 1320.6 705.6 1320 703.5 1319.4 703.8 1318.8 691.2 1318.2 682.8 1317.6 681.1 1317 681.1 1316.4 681.1 1315.8 681.1 1315.2 681.1 1314.6 681.1 1314 681.1 1313.4 681.1 1312.8 681.1 1312.2 681.1 1311.6 681.1 1311 681.1 1310.4 681.1 1309.8 681.1 1309.2 681.1 1308.6 681.1 1308 681.1 1307.4 681.1 1306.8 681.1 1306.2 681.1 1305.6 681.1 1305 681.1 1304.4 681.1 1303.8 681.1 1303.2 681.1 1302.6 681.1 1302 681.1 1301.4 681.1 1300.8 681.1 1300.2 681.1 1299.6 681.1 1299 681.1 1298.4 681.1 1297.8 681.1 1297.2 681.1 1296.6 681.1 1296 681.1 1295.4 681.1 1294.8 681.1 1294.2 681.1 1293.6 681.1 1293 681.1 1292.4 681.1 1291.8 681.1 1291.2 681.1 1290.6 681.1 1290 681.1 1289.4 681.1 1288.8 681.1 1288.2 681.1 1287.6 681.1 1287 681.1 1286.4 681.1 1285.8 681.1 1285.2 681.1 1284.6 681.1 1284 681.1 1283.4 681.1 1282.8 681.1 1282.2 681.1 1281.6 681.1 1281 681.1 1280.4 681.1 1279.8 681.1 1279.2 681.1 1278.6 681.1 1278 681.1 1277.4 681.1 1276.8 681.3 1276.2 681.1 1275.6 681.5 1275 681.8 1274.4 681.8 1273.8 681.3 1273.2 681.4 1272.6 681.3 1272 682.1 1271.4 682.2 1270.8 682.4 1270.2 683.1 1269.6 682.8 1269 683.8 1268.4 683.8 1267.8 682.2 1267.2 683.8 1266.6 683.2 1266 682.8 1265.4 685.2 1264.8 685.9 1264.2 684.2 1263.6 686 1263 683.8 1262.4 684.6 1261.8 686.4 1261.2 686 1260.6 687.9 1260 686.2 1259.4 690.2 1258.8 687.5 1258.2 686.4 1257.6 690.3 1257 690.7 1256.4 687.7 1255.8 695.9 1255.2 695.5 1254.6 696.7 1254 689.5 1253.4 683.8 1252.8 681.1 1252.2 681.1 1251.6 681.1 1251 681.1 1250.4 681.1 1249.8 681.1 1249.2 681.1 1248.6 681.1 1248 681.1 1247.4 681.1 1246.8 681.1 1246.2 681.1 1245.6 681.1 1245 681.1 1244.4 681.1 1243.8 681.1 1243.2 681.1 1242.6 681.1 1242 681.1 1241.4 681.1 1240.8 681.1 1240.2 681.1 1239.6 681.1 1239 681.1 1238.4 681.1 1237.8 681.1 1237.2 681.1 1236.6 681.1 1236 681.1 1235.4 681.1 1234.8 681.1 1234.2 681.1 1233.6 681.1 1233 681.1 1232.4 681.1 1231.8 681.1 1231.2 681.1 1230.6 681.1 1230 681.1 1229.4 681.1 1228.8 681.1 1228.2 681.1 1227.6 681.1 1227 681.1 1226.4 681.1 1225.8 681.1 1225.2 681.1 1224.6 681.1 1224 681.1 1223.4 681.1 1222.8 681.1 1222.2 681.1 1221.6 681.1 1221 681.1 1220.4 681.1 1219.8 681.1 1219.2 681.1 1218.6 681.1 1218 681.1 1217.4 681.1 1216.8 681.1 1216.2 681.1 1215.6 681.1 1215 681.1 1214.4 681.1 1213.8 681.1 1213.2 681.1 1212.6 681.1 1212 681.1 1211.4 681.1 1210.8 681.1 1210.2 681.1 1209.6 681.1 1209 681.1 1208.4 681.1 1207.8 681.1 1207.2 681.1 1206.6 681.1 1206 681.1 1205.4 681.1 1204.8 681.1 1204.2 681.1 1203.6 681.1 1203 681.1 1202.4 681.1 1201.8 681.1 1201.2 681.1 1200.6 681.1 1200 681.1 1199.4 681.1 1198.8 681.4 1198.2 681.7 1197.6 682 1197 681.8 1196.4 682 1195.8 681.8 1195.2 683.1 1194.6 682.8 1194 683.2 1193.4 683.5 1192.8 683.9 1192.2 684.9 1191.6 687.3 1191 686.6 1190.4 686.9 1189.8 683.2 1189.2 681.1 1188.6 681.1 1188 681.1 1187.4 681.1 1186.8 681.1 1186.2 681.1 1185.6 681.1 1185 681.1 1184.4 681.1 1183.8 681.1 1183.2 681.1 1182.6 681.1 1182 681.1 1181.4 681.1 1180.8 681.1 1180.2 681.1 1179.6 681.1 1179 681.1 1178.4 681.1 1177.8 681.1 1177.2 681.1 1176.6 681.1 1176 681.1 1175.4 681.1 1174.8 681.6 1174.2 681.3 1173.6 681.8 1173 682.6 1172.4 682.3 1171.8 682.8 1171.2 682.3 1170.6 683.6 1170 683.8 1169.4 684 1168.8 685.1 1168.2 685.8 1167.6 686.8 1167 688.3 1166.4 690 1165.8 691.2 1165.2 692 1164.6 687.2 1164 691.6 1163.4 693.3 1162.8 693.1 1162.2 697.6 1161.6 706.9 1161 706.4 1160.4 708.1 1159.8 692 1159.2 683 1158.6 681.1 1158 681.1 1157.4 681.1 1156.8 681.1 1156.2 681.1 1155.6 681.1 1155 681.1 1154.4 681.1 1153.8 681.1 1153.2 681.4 1152.6 681.4 1152 681.5 1151.4 681.1 1150.8 681.4 1150.2 681.7 1149.6 681.1 1149 681.9 1148.4 681.7 1147.8 682.1 1147.2 681.3 1146.6 682.4 1146 682.2 1145.4 682 1144.8 682.6 1144.2 682.5 1143.6 682.6 1143 683.5 1142.4 682.2 1141.8 683.1 1141.2 683.7 1140.6 684.5 1140 682.7 1139.4 682.6 1138.8 684.2 1138.2 685.6 1137.6 685.9 1137 683.5 1136.4 686.3 1135.8 686 1135.2 684.7 1134.6 684.2 1134 684.2 1133.4 684.4 1132.8 684.6 1132.2 687.7 1131.6 689.6 1131 686.1 1130.4 690.1 1129.8 690.9 1129.2 689.5 1128.6 687.8 1128 694.6 1127.4 694.1 1126.8 695.6 1126.2 697.3 1125.6 689.7 1125 697.3 1124.4 696.7 1123.8 695 1123.2 695.2 1122.6 697 1122 703.7 1121.4 694.5 1120.8 708.2 1120.2 710.6 1119.6 711.6 1119 710.6 1118.4 686.4 1117.8 681.1 1117.2 681.1 1116.6 681.1 1116 681.1 1115.4 681.1 1114.8 681.1 1114.2 681.1 1113.6 681.1 1113 681.1 1112.4 681.1 1111.8 681.1 1111.2 681.1 1110.6 681.1 1110 681.1 1109.4 681.1 1108.8 681.1 1108.2 681.1 1107.6 681.1 1107 681.1 1106.4 681.1 1105.8 681.1 1105.2 681.1 1104.6 681.1 1104 681.1 1103.4 681.1 1102.8 681.1 1102.2 681.1 1101.6 681.1 1101 681.1 1100.4 681.1 1099.8 681.1 1099.2 681.1 1098.6 681.1 1098 681.1 1097.4 681.1 1096.8 681.1 1096.2 681.1 1095.6 681.1 1095 681.1 1094.4 681.1 1093.8 681.1 1093.2 681.1 1092.6 681.1 1092 681.1 1091.4 681.1 1090.8 681.1 1090.2 681.1 1089.6 681.1 1089 681.1 1088.4 681.1 1087.8 681.1 1087.2 681.1 1086.6 681.1 1086 681.1 1085.4 681.1 1084.8 681.1 1084.2 681.8 1083.6 681.5 1083 681.4 1082.4 682.3 1081.8 682.9 1081.2 684.9 1080.6 685.1 1080 684.9 1079.4 685.1 1078.8 682.4 1078.2 681.1 1077.6 681.1 1077 681.1 1076.4 681.1 1075.8 681.1 1075.2 681.1 1074.6 681.2 1074 681.3 1073.4 681.4 1072.8 681.4 1072.2 681.7 1071.6 681.5 1071 682 1070.4 681.3 1069.8 682 1069.2 682.8 1068.6 681.8 1068 681.8 1067.4 682.9 1066.8 683.9 1066.2 683.3 1065.6 684.3 1065 682.8 1064.4 683.5 1063.8 685.2 1063.2 683.7 1062.6 685.1 1062 687.3 1061.4 685.5 1060.8 689.5 1060.2 688.7 1059.6 688.7 1059 687.5 1058.4 687.8 1057.8 694.8 1057.2 694.3 1056.6 693.7 1056 695.2 1055.4 701.3 1054.8 698.6 1054.2 693.3 1053.6 707.3 1053 704.6 1052.4 709.4 1051.8 692 1051.2 683 1050.6 681.1 1050 681.1 1049.4 681.1 1048.8 681.1 1048.2 681.1 1047.6 681.1 1047 681.1 1046.4 681.1 1045.8 681.1 1045.2 681.1 1044.6 681.1 1044 681.1 1043.4 681.1 1042.8 681.1 1042.2 681.1 1041.6 681.1 1041 681.1 1040.4 681.1 1039.8 681.1 1039.2 681.1 1038.6 681.1 1038 681.1 1037.4 681.1 1036.8 681.1 1036.2 681.1 1035.6 681.1 1035 681.1 1034.4 681.1 1033.8 681.1 1033.2 681.1 1032.6 681.1 1032 681.1 1031.4 681.1 1030.8 681.1 1030.2 681.1 1029.6 681.1 1029 681.1 1028.4 681.1 1027.8 681.1 1027.2 681.1 1026.6 681.1 1026 681.1 1025.4 681.1 1024.8 681.1 1024.2 681.1 1023.6 681.1 1023 681.1 1022.4 681.1 1021.8 681.1 1021.2 681.1 1020.6 681.1 1020 681.1 1019.4 681.1 1018.8 681.1 1018.2 681.1 1017.6 681.1 1017 681.1 1016.4 681.1 1015.8 681.1 1015.2 681.1 1014.6 681.1 1014 681.1 1013.4 681.1 1012.8 681.1 1012.2 681.1 1011.6 681.1 1011 681.1 1010.4 681.2 1009.8 681.1 1009.2 681.1 1008.6 681.2 1008 681.5 1007.4 681.2 1006.8 681.1 1006.2 681.9 1005.6 682.1 1005 682 1004.4 682.2 1003.8 682.3 1003.2 681.7 1002.6 681.9 1002 682.5 1001.4 682.4 1000.8 682.6 1000.2 683.1 999.6 682 999 683.2 998.4 682.4 997.8 684 997.2 684.9 996.6 683.1 996 683.7 995.4 685.9 994.8 686.7 994.2 685.7 993.6 686.9 993 686 992.4 687.5 991.8 686.8 991.2 685.8 990.6 689 990 689 989.4 688.4 988.8 687.7 988.2 689 987.6 695.3 987 695 986.4 696.9 985.8 687.2 985.2 681.8 984.6 681.1 984 681.1 983.4 681.1 982.8 681.1 982.2 681.1 981.6 681.1 981 681.1 980.4 681.1 979.8 681.1 979.2 681.1 978.6 681.1 978 681.1 977.4 681.1 976.8 681.1 976.2 681.1 975.6 681.1 975 681.1 974.4 681.1 973.8 681.1 973.2 681.1 972.6 681.1 972 681.1 971.4 681.1 970.8 681.1 970.2 681.1 969.6 681.1 969 681.1 968.4 681.1 967.8 681.1 967.2 681.1 966.6 681.1 966 681.1 965.4 681.1 964.8 681.1 964.2 681.1 963.6 681.1 963 681.1 962.4 681.1 961.8 681.1 961.2 681.1 960.6 681.1 960 681.1 959.4 681.1 958.8 681.1 958.2 681.1 957.6 681.1 957 681.1 956.4 681.1 955.8 681.1 955.2 681.1 954.6 681.1 954 681.1 953.4 681.1 952.8 681.1 952.2 681.1 951.6 681.1 951 681.1 950.4 681.1 949.8 681.1 949.2 681.1 948.6 681.1 948 681.1 947.4 681.1 946.8 681.1 946.2 681.1 945.6 681.1 945 681.1 944.4 681.1 943.8 681.1 943.2 681.1 942.6 681.1 942 681.1 941.4 681.1 940.8 681.1 940.2 681.1 939.6 681.1 939 681.1 938.4 681.1 937.8 681.1 937.2 681.1 936.6 681.1 936 681.1 935.4 681.1 934.8 681.1 934.2 681.1 933.6 681.1 933 681.1 932.4 681.1 931.8 681.1 931.2 681.1 930.6 681.1 930 681.1 929.4 681.1 928.8 681.2 928.2 681.1 927.6 681.2 927 681.8 926.4 681.7 925.8 681.7 925.2 681.7 924.6 682.7 924 682 923.4 683.6 922.8 682.9 922.2 683.1 921.6 686 921 685.5 920.4 685 919.8 682.4 919.2 681.1 918.6 681.1 918 681.1 917.4 681.1 916.8 681.1 916.2 681.1 915.6 681.1 915 681.1 914.4 681.1 913.8 681.1 913.2 681.1 912.6 681.1 912 681.1 911.4 681.1 910.8 681.1 910.2 681.1 909.6 681.1 909 681.1 908.4 681.1 907.8 681.1 907.2 681.1 906.6 681.1 906 681.1 905.4 681.1 904.8 681.1 904.2 681.1 903.6 681.1 903 681.1 902.4 681.1 901.8 681.1 901.2 681.1 900.6 681.1 900 681.1 899.4 681.1 898.8 681.1 898.2 681.1 897.6 681.1 897 681.1 896.4 681.1 895.8 681.1 895.2 681.1 894.6 681.1 894 681.1 893.4 681.2 892.8 681.1 892.2 681.3 891.6 681.1 891 681.1 890.4 681.2 889.8 681.1 889.2 681.2 888.6 681.7 888 681.4 887.4 681.1 886.8 682.5 886.2 682.5 885.6 682.2 885 684.1 884.4 682.4 883.8 684 883.2 684.3 882.6 686.6 882 687.5 881.4 687.5 880.8 683.2 880.2 683.1 879.6 683.7 879 683.2 878.4 683.4 877.8 683.4 877.2 682.9 876.6 685.1 876 682.8 875.4 685.5 874.8 685.6 874.2 684.2 873.6 683.2 873 685.3 872.4 687.3 871.8 685.1 871.2 687.6 870.6 685.5 870 685.9 869.4 688.7 868.8 687.1 868.2 685.7 867.6 688.8 867 687.5 866.4 688.7 865.8 692 865.2 688.7 864.6 692.7 864 692.8 863.4 694.2 862.8 688.8 862.2 691 861.6 694.5 861 696.8 860.4 692.9 859.8 691.1 859.2 698.9 858.6 692.1 858 695.9 857.4 705.3 856.8 701.7 856.2 696.4 855.6 695.7 855 701.6 854.4 702.9 853.8 718.4 853.2 713.2 852.6 712.1 852 714.6 851.4 688 850.8 681.1 850.2 681.1 849.6 681.1 849 681.1 848.4 681.1 847.8 681.1 847.2 681.1 846.6 681.1 846 681.1 845.4 681.1 844.8 681.1 844.2 681.1 843.6 681.1 843 681.1 842.4 681.1 841.8 681.1 841.2 681.1 840.6 681.1 840 681.1 839.4 681.1 838.8 681.1 838.2 681.1 837.6 681.1 837 681.1 836.4 681.1 835.8 681.1 835.2 681.1 834.6 681.1 834 681.1 833.4 681.1 832.8 681.1 832.2 681.1 831.6 681.1 831 681.1 830.4 681.1 829.8 681.1 829.2 681.1 828.6 681.1 828 681.1 827.4 681.1 826.8 681.1 826.2 681.1 825.6 681.1 825 681.1 824.4 681.1 823.8 681.1 823.2 681.1 822.6 681.1 822 681.1 821.4 681.1 820.8 681.1 820.2 681.1 819.6 681.1 819 681.1 818.4 681.1 817.8 681.1 817.2 681.2 816.6 681.8 816 682.2 815.4 682.3 814.8 683.4 814.2 683.9 813.6 684.8 813 685.8 812.4 685.8 811.8 682.4 811.2 681.1 810.6 681.1 810 681.1 809.4 681.1 808.8 681.1 808.2 681.1 807.6 681.1 807 681.1 806.4 681.1 805.8 681.1 805.2 681.4 804.6 681.1 804 681.2 803.4 681.1 802.8 681.8 802.2 681.9 801.6 681.8 801 681.4 800.4 682.4 799.8 682 799.2 683.2 798.6 682.4 798 682 797.4 683.1 796.8 683.4 796.2 682.6 795.6 685.8 795 684.3 794.4 684.2 793.8 685.6 793.2 686 792.6 684.8 792 690 791.4 688 790.8 686 790.2 690.7 789.6 690.4 789 688.3 788.4 690.6 787.8 696.3 787.2 696.4 786.6 699.2 786 692.9 785.4 704.1 784.8 705.6 784.2 702.8 783.6 688.4 783 681.1 782.4 681.1 781.8 681.1 781.2 681.1 780.6 681.1 780 681.1 779.4 681.1 778.8 681.1 778.2 681.1 777.6 681.1 777 681.1 776.4 681.1 775.8 681.1 775.2 681.1 774.6 681.1 774 681.1 773.4 681.1 772.8 681.1 772.2 681.1 771.6 681.1 771 681.1 770.4 681.1 769.8 681.1 769.2 681.1 768.6 681.1 768 681.1 767.4 681.1 766.8 681.1 766.2 681.1 765.6 681.1 765 681.1 764.4 681.1 763.8 681.1 763.2 681.1 762.6 681.1 762 681.1 761.4 681.1 760.8 681.1 760.2 681.1 759.6 681.1 759 681.1 758.4 681.1 757.8 681.1 757.2 681.1 756.6 681.1 756 681.1 755.4 681.1 754.8 681.1 754.2 681.1 753.6 681.1 753 681.1 752.4 681.1 751.8 681.1 751.2 681.1 750.6 681.1 750 681.1 749.4 681.1 748.8 681.1 748.2 681.1 747.6 681.1 747 681.1 746.4 681.1 745.8 681.1 745.2 681.1 744.6 681.2 744 681.4 743.4 681.4 742.8 681.5 742.2 681.4 741.6 681.1 741 681.3 740.4 681.7 739.8 681.2 739.2 681.6 738.6 682.4 738 681.6 737.4 682.7 736.8 682.3 736.2 683.1 735.6 682.4 735 682.9 734.4 683.3 733.8 683.7 733.2 683.6 732.6 682.5 732 683.7 731.4 684 730.8 685.4 730.2 684.1 729.6 686.2 729 684 728.4 685.5 727.8 687.1 727.2 685.7 726.6 688.3 726 685.3 725.4 689.2 724.8 688.3 724.2 687.8 723.6 690.1 723 694.1 722.4 691.8 721.8 696.7 721.2 695.4 720.6 698.5 720 698.2 719.4 683.8 718.8 681.1 718.2 681.1 717.6 681.1 717 681.1 716.4 681.1 715.8 681.1 715.2 681.1 714.6 681.1 714 681.1 713.4 681.1 712.8 681.1 712.2 681.1 711.6 681.1 711 681.1 710.4 681.1 709.8 681.1 709.2 681.1 708.6 681.1 708 681.1 707.4 681.1 706.8 681.1 706.2 681.1 705.6 681.1 705 681.1 704.4 681.1 703.8 681.1 703.2 681.1 702.6 681.1 702 681.1 701.4 681.1 700.8 681.1 700.2 681.1 699.6 681.1 699 681.1 698.4 681.1 697.8 681.1 697.2 681.1 696.6 681.1 696 681.1 695.4 681.1 694.8 681.1 694.2 681.1 693.6 681.1 693 681.1 692.4 681.1 691.8 681.1 691.2 681.1 690.6 681.1 690 681.1 689.4 681.1 688.8 681.1 688.2 681.1 687.6 681.1 687 681.1 686.4 681.1 685.8 681.1 685.2 681.1 684.6 681.1 684 681.1 683.4 681.1 682.8 681.1 682.2 681.1 681.6 681.1 681 681.1 680.4 681.1 679.8 681.1 679.2 681.1 678.6 681.1 678 681.1 677.4 681.1 676.8 681.1 676.2 681.1 675.6 681.1 675 681.1 674.4 681.1 673.8 681.1 673.2 681.1 672.6 681.1 672 681.1 671.4 681.1 670.8 681.1 670.2 681.1 669.6 681.1 669 681.1 668.4 681.1 667.8 681.1 667.2 681.1 666.6 681.1 666 681.1 665.4 681.1 664.8 681.1 664.2 681.1 663.6 681.1 663 681.1 662.4 681.4 661.8 681.7 661.2 681.5 660.6 681.4 660 682.1 659.4 682.9 658.8 683.7 658.2 683 657.6 684.9 657 685.1 656.4 684.1 655.8 687.6 655.2 687.5 654.6 686.7 654 686.5 653.4 681.6 652.8 681.1 652.2 681.1 651.6 681.1 651 681.1 650.4 681.1 649.8 681.1 649.2 681.1 648.6 681.1 648 681.1 647.4 681.1 646.8 681.1 646.2 681.1 645.6 681.1 645 681.1 644.4 681.1 643.8 681.1 643.2 681.1 642.6 681.2 642 681.1 641.4 681.3 640.8 681.2 640.2 681.1 639.6 681.8 639 681.6 638.4 682.2 637.8 682.7 637.2 683.7 636.6 682.1 636 683.4 635.4 684.8 634.8 683.1 634.2 685.4 633.6 684 633 686.1 632.4 685.1 631.8 691 631.2 687.8 630.6 690.3 630 694.5 629.4 699.4 628.8 693.5 628.2 697.5 627.6 708.5 627 709.8 626.4 708.1 625.8 692 625.2 683 624.6 681.1 624 681.1 623.4 681.1 622.8 681.1 622.2 681.1 621.6 681.1 621 681.1 620.4 681.1 619.8 681.1 619.2 681.1 618.6 681.1 618 681.1 617.4 681.6 616.8 681.1 616.2 681.3 615.6 681.9 615 681.2 614.4 681.6 613.8 681.5 613.2 681.6 612.6 681.8 612 681.7 611.4 681.5 610.8 682.1 610.2 682 609.6 681.7 609 682.9 608.4 683.3 607.8 683.1 607.2 683.9 606.6 683.7 606 684 605.4 683.8 604.8 683.1 604.2 684.7 603.6 682.9 603 683.8 602.4 686.1 601.8 685.4 601.2 685 600.6 684.1 600 687.1 599.4 685.8 598.8 688.5 598.2 686.5 597.6 690.4 597 687.5 596.4 691.2 595.8 686.5 595.2 690.9 594.6 691.8 594 688.9 593.4 690.4 592.8 687.8 592.2 688.3 591.6 689.7 591 689.9 590.4 695.5 589.8 699.2 589.2 696.6 588.6 702.2 588 695.7 587.4 697.3 586.8 708 586.2 707.4 585.6 705.9 585 711.5 584.4 686.4 583.8 681.1 583.2 681.1 582.6 681.1 582 681.1 581.4 681.1 580.8 681.1 580.2 681.1 579.6 681.1 579 681.1 578.4 681.1 577.8 681.1 577.2 681.1 576.6 681.1 576 681.1 575.4 681.1 574.8 681.1 574.2 681.1 573.6 681.1 573 681.1 572.4 681.1 571.8 681.1 571.2 681.1 570.6 681.1 570 681.1 569.4 681.1 568.8 681.1 568.2 681.1 567.6 681.1 567 681.1 566.4 681.1 565.8 681.1 565.2 681.1 564.6 681.4 564 681.4 563.4 681.2 562.8 681.1 562.2 681.8 561.6 681.9 561 681.5 560.4 682.8 559.8 683.8 559.2 683.1 558.6 682.5 558 683.2 557.4 685.6 556.8 684.9 556.2 684.2 555.6 688.3 555 688.2 554.4 689.9 553.8 684 553.2 681.1 552.6 681.1 552 681.1 551.4 681.1 550.8 681.6 550.2 681.3 549.6 681.2 549 682.5 548.4 682.4 547.8 683.9 547.2 683.6 546.6 685.8 546 684.8 545.4 685.3 544.8 682.4 544.2 681.1 543.6 681.1 543 681.1 542.4 681.1 541.8 681.1 541.2 681.1 540.6 681.1 540 681.1 539.4 681.1 538.8 681.1 538.2 681.1 537.6 681.1 537 681.1 536.4 681.1 535.8 681.1 535.2 681.5 534.6 681.1 534 681.7 533.4 681.9 532.8 681.7 532.2 681.5 531.6 681.9 531 682.3 530.4 682.5 529.8 682 529.2 682.7 528.6 682.7 528 682.8 527.4 683.3 526.8 686 526.2 683.8 525.6 687.5 525 686.6 524.4 687.1 523.8 687.3 523.2 685.8 522.6 689.9 522 690.9 521.4 689.4 520.8 692.1 520.2 698.3 519.6 698.9 519 694.4 518.4 705.2 517.8 707.1 517.2 703.2 516.6 688.4 516 681.1 515.4 681.1 514.8 681.1 514.2 681.1 513.6 681.1 513 681.1 512.4 681.1 511.8 681.1 511.2 681.1 510.6 681.1 510 681.1 509.4 681.1 508.8 681.1 508.2 681.1 507.6 681.1 507 681.1 506.4 681.1 505.8 681.1 505.2 681.1 504.6 681.1 504 681.1 503.4 681.1 502.8 681.1 502.2 681.1 501.6 681.1 501 681.1 500.4 681.1 499.8 681.1 499.2 681.1 498.6 681.1 498 681.1 497.4 681.1 496.8 681.1 496.2 681.1 495.6 681.1 495 681.1 494.4 681.1 493.8 681.1 493.2 681.1 492.6 681.1 492 681.1 491.4 681.1 490.8 681.1 490.2 681.1 489.6 681.1 489 681.1 488.4 681.1 487.8 681.1 487.2 681.1 486.6 681.1 486 681.1 485.4 681.1 484.8 681.1 484.2 681.1 483.6 681.1 483 681.1 482.4 681.1 481.8 681.1 481.2 681.1 480.6 681.1 480 681.1 479.4 681.1 478.8 681.1 478.2 681.1 477.6 681.1 477 681.1 476.4 681.3 475.8 681.1 475.2 681.2 474.6 681.3 474 681.6 473.4 681.3 472.8 681.9 472.2 681.4 471.6 682 471 682.1 470.4 682.2 469.8 681.4 469.2 681.9 468.6 682.3 468 681.6 467.4 683.1 466.8 681.9 466.2 682.3 465.6 683.7 465 684.7 464.4 683.4 463.8 684.2 463.2 683.3 462.6 684.4 462 683.2 461.4 686.9 460.8 686.1 460.2 686.3 459.6 684.5 459 685.3 458.4 687.9 457.8 686.6 457.2 686.9 456.6 686.1 456 689.2 455.4 693.3 454.8 688.8 454.2 694 453.6 696.1 453 698.7 452.4 695.9 451.8 687.6 451.2 681.9 450.6 681.1 450 681.1 449.4 681.1 448.8 681.1 448.2 681.1 447.6 681.1 447 681.1 446.4 681.1 445.8 681.1 445.2 681.1 444.6 681.1 444 681.1 443.4 681.1 442.8 681.1 442.2 681.1 441.6 681.1 441 681.1 440.4 681.1 439.8 681.1 439.2 681.1 438.6 681.1 438 681.1 437.4 681.1 436.8 681.1 436.2 681.1 435.6 681.1 435 681.1 434.4 681.1 433.8 681.1 433.2 681.1 432.6 681.1 432 681.1 431.4 681.1 430.8 681.1 430.2 681.1 429.6 681.1 429 681.1 428.4 681.1 427.8 681.1 427.2 681.1 426.6 681.1 426 681.1 425.4 681.1 424.8 681.1 424.2 681.1 423.6 681.1 423 681.1 422.4 681.1 421.8 681.1 421.2 681.1 420.6 681.1 420 681.1 419.4 681.1 418.8 681.1 418.2 681.1 417.6 681.1 417 681.1 416.4 681.1 415.8 681.1 415.2 681.1 414.6 681.1 414 681.1 413.4 681.1 412.8 681.1 412.2 681.1 411.6 681.1 411 681.1 410.4 681.1 409.8 681.1 409.2 681.1 408.6 681.1 408 681.1 407.4 681.1 406.8 681.1 406.2 681.1 405.6 681.1 405 681.1 404.4 681.1 403.8 681.1 403.2 681.1 402.6 681.1 402 681.1 401.4 681.1 400.8 681.1 400.2 681.1 399.6 681.1 399 681.3 398.4 681.1 397.8 681.4 397.2 681.7 396.6 681.1 396 681.6 395.4 681.5 394.8 682.8 394.2 682.9 393.6 683 393 682.6 392.4 684.1 391.8 684.4 391.2 684.8 390.6 687.9 390 687.3 389.4 687.1 388.8 683.2 388.2 681.1 387.6 681.1 387 681.1Z"/><path id="w2" d="M387 808.5 L387 807.4 387.6 807.4 388.2 807.4 388.8 805.3 389.4 801.3 390 801 390.6 801 391.2 804.8 391.8 805.7 392.4 805 393 805.7 393.6 804.8 394.2 805.5 394.8 806 395.4 806.4 396 806.5 396.6 807.3 397.2 807.1 397.8 807.4 398.4 807.1 399 807.4 399.6 807.4 400.2 807.4 400.8 807.4 401.4 807.4 402 807.4 402.6 807.4 403.2 807.4 403.8 807.4 404.4 807.4 405 807.4 405.6 807.4 406.2 807.4 406.8 807.4 407.4 807.4 408 807.4 408.6 807.4 409.2 807.4 409.8 807.4 410.4 807.4 411 807.4 411.6 807.4 412.2 807.4 412.8 807.4 413.4 807.4 414 807.4 414.6 807.4 415.2 807.4 415.8 807.4 416.4 807.4 417 807.4 417.6 807.4 418.2 807.4 418.8 807.4 419.4 807.4 420 807.4 420.6 807.4 421.2 807.4 421.8 807.4 422.4 807.4 423 807.4 423.6 807.4 424.2 807.4 424.8 807.4 425.4 807.4 426 807.4 426.6 807.4 427.2 807.4 427.8 807.4 428.4 807.4 429 807.4 429.6 807.4 430.2 807.4 430.8 807.4 431.4 807.4 432 807.4 432.6 807.4 433.2 807.4 433.8 807.4 434.4 807.4 435 807.4 435.6 807.4 436.2 807.4 436.8 807.4 437.4 807.4 438 807.4 438.6 807.4 439.2 807.4 439.8 807.4 440.4 807.4 441 807.4 441.6 807.4 442.2 807.4 442.8 807.4 443.4 807.4 444 807.4 444.6 807.4 445.2 807.4 445.8 807.4 446.4 807.4 447 807.4 447.6 807.4 448.2 807.4 448.8 807.4 449.4 807.4 450 807.4 450.6 807.4 451.2 806.4 451.8 800.1 452.4 790.7 453 789.7 453.6 790.6 454.2 791.6 454.8 798 455.4 798.8 456 797.6 456.6 797 457.2 800.5 457.8 798.6 458.4 802.5 459 801.3 459.6 801.7 460.2 801.5 460.8 800.4 461.4 801.6 462 802.7 462.6 802.4 463.2 804.3 463.8 803.3 464.4 805.8 465 803.5 465.6 803.9 466.2 805 466.8 805.6 467.4 805.9 468 804.9 468.6 805.8 469.2 806.7 469.8 805.9 470.4 806.8 471 806.8 471.6 807.1 472.2 807 472.8 806.6 473.4 806.5 474 807.4 474.6 807.3 475.2 807.1 475.8 807.4 476.4 807.1 477 807.4 477.6 807.4 478.2 807.4 478.8 807.4 479.4 807.4 480 807.4 480.6 807.4 481.2 807.4 481.8 807.4 482.4 807.4 483 807.4 483.6 807.4 484.2 807.4 484.8 807.4 485.4 807.4 486 807.4 486.6 807.4 487.2 807.4 487.8 807.4 488.4 807.4 489 807.4 489.6 807.4 490.2 807.4 490.8 807.4 491.4 807.4 492 807.4 492.6 807.4 493.2 807.4 493.8 807.4 494.4 807.4 495 807.4 495.6 807.4 496.2 807.4 496.8 807.4 497.4 807.4 498 807.4 498.6 807.4 499.2 807.4 499.8 807.4 500.4 807.4 501 807.4 501.6 807.4 502.2 807.4 502.8 807.4 503.4 807.4 504 807.4 504.6 807.4 505.2 807.4 505.8 807.4 506.4 807.4 507 807.4 507.6 807.4 508.2 807.4 508.8 807.4 509.4 807.4 510 807.4 510.6 807.4 511.2 807.4 511.8 807.4 512.4 807.4 513 807.4 513.6 807.4 514.2 807.4 514.8 807.4 515.4 807.4 516 807.4 516.6 798 517.2 778.3 517.8 776.3 518.4 775.1 519 789.2 519.6 785.7 520.2 790.4 520.8 788.9 521.4 789.7 522 798 522.6 797.6 523.2 796.7 523.8 795.5 524.4 800.1 525 799.7 525.6 800.8 526.2 802.9 526.8 803.3 527.4 804.4 528 804.3 528.6 802.8 529.2 804.2 529.8 804.6 530.4 806.2 531 804.7 531.6 806 532.2 806.6 532.8 806.2 533.4 806 534 806.9 534.6 806.7 535.2 807.1 535.8 807.1 536.4 807.4 537 807.2 537.6 807.3 538.2 807.4 538.8 807.4 539.4 807.4 540 807.4 540.6 807.4 541.2 807.4 541.8 807.4 542.4 807.4 543 807.4 543.6 807.4 544.2 807.4 544.8 804.1 545.4 798.7 546 798.8 546.6 798.5 547.2 801.6 547.8 804.8 548.4 802.2 549 804 549.6 804.4 550.2 806.6 550.8 806.8 551.4 806.6 552 806.4 552.6 807.4 553.2 807.2 553.8 804.5 554.4 800.3 555 799.4 555.6 798.8 556.2 800.4 556.8 801.3 557.4 803.1 558 804.8 558.6 804.8 559.2 805.2 559.8 805.6 560.4 805.6 561 806.8 561.6 806.7 562.2 806.9 562.8 806.8 563.4 807 564 806.9 564.6 807.3 565.2 807.3 565.8 807.4 566.4 807.4 567 807.4 567.6 807.4 568.2 807.4 568.8 807.4 569.4 807.4 570 807.4 570.6 807.4 571.2 807.4 571.8 807.4 572.4 807.4 573 807.4 573.6 807.4 574.2 807.4 574.8 807.4 575.4 807.4 576 807.4 576.6 807.4 577.2 807.4 577.8 807.4 578.4 807.4 579 807.4 579.6 807.4 580.2 807.4 580.8 807.4 581.4 807.4 582 807.4 582.6 807.4 583.2 807.4 583.8 807.4 584.4 802.5 585 780.7 585.6 783.1 586.2 783.4 586.8 783.2 587.4 791.9 588 796.9 588.6 789.3 589.2 790.5 589.8 793.2 590.4 798.2 591 796.3 591.6 794.6 592.2 792.9 592.8 795.1 593.4 795.9 594 797.2 594.6 795.9 595.2 797.4 595.8 801.1 596.4 799.8 597 800.3 597.6 801.9 598.2 802.6 598.8 800.8 599.4 802.8 600 803.8 600.6 801.6 601.2 802.7 601.8 804.7 602.4 804.6 603 803.1 603.6 804.1 604.2 803.8 604.8 805.3 605.4 804.8 606 804.9 606.6 805.7 607.2 806.2 607.8 806.2 608.4 806.4 609 806.7 609.6 806.6 610.2 805.7 610.8 806.5 611.4 806.8 612 806.5 612.6 806.8 613.2 807.3 613.8 806.4 614.4 806.7 615 807 615.6 807.3 616.2 807.2 616.8 807.2 617.4 807 618 807.4 618.6 807.4 619.2 807.2 619.8 807.3 620.4 807.4 621 807.4 621.6 807.4 622.2 807.4 622.8 807.4 623.4 807.4 624 807.4 624.6 807.4 625.2 805.9 625.8 798.1 626.4 787.1 627 783.6 627.6 787.2 628.2 796.5 628.8 791.4 629.4 797.6 630 800.6 630.6 799.9 631.2 801.3 631.8 798.2 632.4 800.8 633 801.6 633.6 802.8 634.2 804.2 634.8 804.7 635.4 805.2 636 805 636.6 805.7 637.2 806.4 637.8 805.6 638.4 806.3 639 806.9 639.6 807.4 640.2 806.7 640.8 807.4 641.4 807.4 642 807.4 642.6 807.4 643.2 807.4 643.8 807.4 644.4 807.4 645 807.4 645.6 807.4 646.2 807.4 646.8 807.4 647.4 807.4 648 807.4 648.6 807.4 649.2 807.4 649.8 807.4 650.4 807.4 651 807.4 651.6 807.4 652.2 807.4 652.8 807.4 653.4 806.7 654 800.7 654.6 799.6 655.2 799.6 655.8 800.7 656.4 801.8 657 802.3 657.6 804.7 658.2 805.2 658.8 806.2 659.4 806.3 660 805.9 660.6 806.1 661.2 806.1 661.8 807.1 662.4 807.4 663 807.4 663.6 807.4 664.2 807.1 664.8 807.4 665.4 807.4 666 807.4 666.6 807.4 667.2 807.4 667.8 807.4 668.4 807.4 669 807.4 669.6 807.4 670.2 807.4 670.8 807.4 671.4 807.4 672 807.4 672.6 807.4 673.2 807.4 673.8 807.4 674.4 807.4 675 807.4 675.6 807.4 676.2 807.4 676.8 807.4 677.4 807.4 678 807.4 678.6 807.4 679.2 807.4 679.8 807.4 680.4 807.4 681 807.4 681.6 807.4 682.2 807.4 682.8 807.4 683.4 807.4 684 807.4 684.6 807.4 685.2 807.4 685.8 807.4 686.4 807.4 687 807.4 687.6 807.4 688.2 807.4 688.8 807.4 689.4 807.4 690 807.4 690.6 807.4 691.2 807.4 691.8 807.4 692.4 807.4 693 807.4 693.6 807.4 694.2 807.4 694.8 807.4 695.4 807.4 696 807.4 696.6 807.4 697.2 807.4 697.8 807.4 698.4 807.4 699 807.4 699.6 807.4 700.2 807.4 700.8 807.4 701.4 807.4 702 807.4 702.6 807.4 703.2 807.4 703.8 807.4 704.4 807.4 705 807.4 705.6 807.4 706.2 807.4 706.8 807.4 707.4 807.4 708 807.4 708.6 807.4 709.2 807.4 709.8 807.4 710.4 807.4 711 807.4 711.6 807.4 712.2 807.4 712.8 807.4 713.4 807.4 714 807.4 714.6 807.4 715.2 807.4 715.8 807.4 716.4 807.4 717 807.4 717.6 807.4 718.2 807.4 718.8 807.4 719.4 804.3 720 788.6 720.6 790 721.2 791.2 721.8 789.5 722.4 795.1 723 794.4 723.6 797.4 724.2 801.6 724.8 797.9 725.4 796.4 726 799.2 726.6 803 727.2 799.5 727.8 802.5 728.4 801.1 729 803.3 729.6 804.7 730.2 802.1 730.8 805 731.4 804.1 732 803.7 732.6 803.4 733.2 803.4 733.8 805.2 734.4 804.3 735 806.2 735.6 805.7 736.2 806.2 736.8 805.5 737.4 805.6 738 807 738.6 806.1 739.2 806.7 739.8 807.1 740.4 806.9 741 806.5 741.6 807.2 742.2 807.3 742.8 807.4 743.4 807.1 744 807 744.6 807.3 745.2 807.4 745.8 807.4 746.4 807.4 747 807.4 747.6 807.4 748.2 807.4 748.8 807.4 749.4 807.4 750 807.4 750.6 807.4 751.2 807.4 751.8 807.4 752.4 807.4 753 807.4 753.6 807.4 754.2 807.4 754.8 807.4 755.4 807.4 756 807.4 756.6 807.4 757.2 807.4 757.8 807.4 758.4 807.4 759 807.4 759.6 807.4 760.2 807.4 760.8 807.4 761.4 807.4 762 807.4 762.6 807.4 763.2 807.4 763.8 807.4 764.4 807.4 765 807.4 765.6 807.4 766.2 807.4 766.8 807.4 767.4 807.4 768 807.4 768.6 807.4 769.2 807.4 769.8 807.4 770.4 807.4 771 807.4 771.6 807.4 772.2 807.4 772.8 807.4 773.4 807.4 774 807.4 774.6 807.4 775.2 807.4 775.8 807.4 776.4 807.4 777 807.4 777.6 807.4 778.2 807.4 778.8 807.4 779.4 807.4 780 807.4 780.6 807.4 781.2 807.4 781.8 807.4 782.4 807.4 783 807.4 783.6 797.4 784.2 772.7 784.8 778.7 785.4 772.5 786 784.9 786.6 782 787.2 786 787.8 785.7 788.4 794.5 789 794.3 789.6 799 790.2 791.7 790.8 800.5 791.4 795.5 792 795.7 792.6 799.3 793.2 800.5 793.8 799.7 794.4 800.2 795 800.3 795.6 804.6 796.2 802.1 796.8 801.9 797.4 805 798 805.7 798.6 805.8 799.2 805 799.8 806.1 800.4 806.5 801 806.7 801.6 806.3 802.2 806.8 802.8 806.7 803.4 806.7 804 807.2 804.6 806.5 805.2 807 805.8 807.4 806.4 807.4 807 807.2 807.6 807.4 808.2 807.4 808.8 807.4 809.4 807.4 810 807.4 810.6 807.4 811.2 807.4 811.8 804.5 812.4 799.7 813 799.6 813.6 800.5 814.2 800.3 814.8 804.8 815.4 804 816 805.1 816.6 805.7 817.2 805.3 817.8 805.8 818.4 807 819 806.8 819.6 807.4 820.2 807.4 820.8 807.4 821.4 807.4 822 807.4 822.6 807.4 823.2 807.4 823.8 807.4 824.4 807.4 825 807.4 825.6 807.4 826.2 807.4 826.8 807.4 827.4 807.4 828 807.4 828.6 807.4 829.2 807.4 829.8 807.4 830.4 807.4 831 807.4 831.6 807.4 832.2 807.4 832.8 807.4 833.4 807.4 834 807.4 834.6 807.4 835.2 807.4 835.8 807.4 836.4 807.4 837 807.4 837.6 807.4 838.2 807.4 838.8 807.4 839.4 807.4 840 807.4 840.6 807.4 841.2 807.4 841.8 807.4 842.4 807.4 843 807.4 843.6 807.4 844.2 807.4 844.8 807.4 845.4 807.4 846 807.4 846.6 807.4 847.2 807.4 847.8 807.4 848.4 807.4 849 807.4 849.6 807.4 850.2 807.4 850.8 807.4 851.4 800.9 852 773.2 852.6 777.7 853.2 777.8 853.8 774.9 854.4 790.4 855 786.6 855.6 790.2 856.2 781.9 856.8 785.9 857.4 786.3 858 796.6 858.6 789.1 859.2 793.7 859.8 794.6 860.4 789.8 861 796.8 861.6 798 862.2 798.5 862.8 795.7 863.4 796.8 864 798 864.6 800.3 865.2 798.7 865.8 796.4 866.4 802.7 867 797.8 867.6 800.5 868.2 799.1 868.8 802 869.4 804.2 870 801.9 870.6 803.5 871.2 803 871.8 801.2 872.4 802.9 873 802.4 873.6 803.1 874.2 804 874.8 803.3 875.4 803.9 876 804.2 876.6 805.9 877.2 804.6 877.8 806.2 878.4 805.9 879 805.4 879.6 806.2 880.2 806.2 880.8 805.3 881.4 800.9 882 801.1 882.6 800.5 883.2 803.8 883.8 803.2 884.4 804.4 885 806.1 885.6 805.2 886.2 806.5 886.8 806.5 887.4 806.8 888 807.1 888.6 807.3 889.2 807.4 889.8 807.1 890.4 807.4 891 807.3 891.6 807.2 892.2 807.2 892.8 807.4 893.4 807.4 894 807.4 894.6 807.4 895.2 807.4 895.8 807.4 896.4 807.4 897 807.4 897.6 807.4 898.2 807.4 898.8 807.4 899.4 807.4 900 807.4 900.6 807.4 901.2 807.4 901.8 807.4 902.4 807.4 903 807.4 903.6 807.4 904.2 807.4 904.8 807.4 905.4 807.4 906 807.4 906.6 807.4 907.2 807.4 907.8 807.4 908.4 807.4 909 807.4 909.6 807.4 910.2 807.4 910.8 807.4 911.4 807.4 912 807.4 912.6 807.4 913.2 807.4 913.8 807.4 914.4 807.4 915 807.4 915.6 807.4 916.2 807.4 916.8 807.4 917.4 807.4 918 807.4 918.6 807.4 919.2 807.4 919.8 804.9 920.4 801 921 800 921.6 800.4 922.2 801.2 922.8 804.7 923.4 804 924 804.5 924.6 805.6 925.2 805.6 925.8 805.6 926.4 806.8 927 806.9 927.6 806.6 928.2 806.9 928.8 807.4 929.4 807.4 930 807.4 930.6 807.2 931.2 807.4 931.8 807.4 932.4 807.4 933 807.4 933.6 807.4 934.2 807.4 934.8 807.4 935.4 807.4 936 807.4 936.6 807.4 937.2 807.4 937.8 807.4 938.4 807.4 939 807.4 939.6 807.4 940.2 807.4 940.8 807.4 941.4 807.4 942 807.4 942.6 807.4 943.2 807.4 943.8 807.4 944.4 807.4 945 807.4 945.6 807.4 946.2 807.4 946.8 807.4 947.4 807.4 948 807.4 948.6 807.4 949.2 807.4 949.8 807.4 950.4 807.4 951 807.4 951.6 807.4 952.2 807.4 952.8 807.4 953.4 807.4 954 807.4 954.6 807.4 955.2 807.4 955.8 807.4 956.4 807.4 957 807.4 957.6 807.4 958.2 807.4 958.8 807.4 959.4 807.4 960 807.4 960.6 807.4 961.2 807.4 961.8 807.4 962.4 807.4 963 807.4 963.6 807.4 964.2 807.4 964.8 807.4 965.4 807.4 966 807.4 966.6 807.4 967.2 807.4 967.8 807.4 968.4 807.4 969 807.4 969.6 807.4 970.2 807.4 970.8 807.4 971.4 807.4 972 807.4 972.6 807.4 973.2 807.4 973.8 807.4 974.4 807.4 975 807.4 975.6 807.4 976.2 807.4 976.8 807.4 977.4 807.4 978 807.4 978.6 807.4 979.2 807.4 979.8 807.4 980.4 807.4 981 807.4 981.6 807.4 982.2 807.4 982.8 807.4 983.4 807.4 984 807.4 984.6 807.4 985.2 806.4 985.8 800.1 986.4 790.1 987 791.2 987.6 790 988.2 799.6 988.8 792.9 989.4 793.7 990 795.7 990.6 799.2 991.2 799 991.8 801.7 992.4 800 993 800.3 993.6 799.4 994.2 803 994.8 800.6 995.4 804.7 996 804 996.6 801.6 997.2 802.1 997.8 804.9 998.4 803.6 999 805.3 999.6 805.4 1000.2 804.8 1000.8 805.1 1001.4 805.3 1002 805.3 1002.6 806.4 1003.2 806.8 1003.8 805.9 1004.4 805.8 1005 806.4 1005.6 807.2 1006.2 806.2 1006.8 807.3 1007.4 806.9 1008 806.6 1008.6 807.3 1009.2 807.4 1009.8 807.1 1010.4 807.4 1011 807.2 1011.6 807.4 1012.2 807.4 1012.8 807.4 1013.4 807.4 1014 807.4 1014.6 807.4 1015.2 807.4 1015.8 807.4 1016.4 807.4 1017 807.4 1017.6 807.4 1018.2 807.4 1018.8 807.4 1019.4 807.4 1020 807.4 1020.6 807.4 1021.2 807.4 1021.8 807.4 1022.4 807.4 1023 807.4 1023.6 807.4 1024.2 807.4 1024.8 807.4 1025.4 807.4 1026 807.4 1026.6 807.4 1027.2 807.4 1027.8 807.4 1028.4 807.4 1029 807.4 1029.6 807.4 1030.2 807.4 1030.8 807.4 1031.4 807.4 1032 807.4 1032.6 807.4 1033.2 807.4 1033.8 807.4 1034.4 807.4 1035 807.4 1035.6 807.4 1036.2 807.4 1036.8 807.4 1037.4 807.4 1038 807.4 1038.6 807.4 1039.2 807.4 1039.8 807.4 1040.4 807.4 1041 807.4 1041.6 807.4 1042.2 807.4 1042.8 807.4 1043.4 807.4 1044 807.4 1044.6 807.4 1045.2 807.4 1045.8 807.4 1046.4 807.4 1047 807.4 1047.6 807.4 1048.2 807.4 1048.8 807.4 1049.4 807.4 1050 807.4 1050.6 807.4 1051.2 804.8 1051.8 793.7 1052.4 775.9 1053 774.9 1053.6 773.2 1054.2 787.2 1054.8 794.3 1055.4 785.6 1056 786.4 1056.6 786.8 1057.2 788.9 1057.8 794.1 1058.4 791.7 1059 795.9 1059.6 794.5 1060.2 795.6 1060.8 801.4 1061.4 802.4 1062 800.3 1062.6 800.6 1063.2 802 1063.8 801.4 1064.4 801.5 1065 803.4 1065.6 805.5 1066.2 804 1066.8 803.6 1067.4 804.7 1068 806.4 1068.6 806.1 1069.2 805.9 1069.8 805.5 1070.4 807 1071 806.8 1071.6 807.3 1072.2 806.4 1072.8 806.6 1073.4 807.2 1074 807.3 1074.6 807 1075.2 807.1 1075.8 807.4 1076.4 807.4 1077 807.4 1077.6 807.4 1078.2 807.4 1078.8 804.5 1079.4 798.6 1080 799.6 1080.6 798.6 1081.2 801.9 1081.8 802.8 1082.4 803.7 1083 804.7 1083.6 804.8 1084.2 805.3 1084.8 807.1 1085.4 807 1086 806.7 1086.6 807.3 1087.2 807.3 1087.8 807.4 1088.4 807.4 1089 807.4 1089.6 807.4 1090.2 807.4 1090.8 807.4 1091.4 807.4 1092 807.4 1092.6 807.4 1093.2 807.4 1093.8 807.4 1094.4 807.4 1095 807.4 1095.6 807.4 1096.2 807.4 1096.8 807.4 1097.4 807.4 1098 807.4 1098.6 807.4 1099.2 807.4 1099.8 807.4 1100.4 807.4 1101 807.4 1101.6 807.4 1102.2 807.4 1102.8 807.4 1103.4 807.4 1104 807.4 1104.6 807.4 1105.2 807.4 1105.8 807.4 1106.4 807.4 1107 807.4 1107.6 807.4 1108.2 807.4 1108.8 807.4 1109.4 807.4 1110 807.4 1110.6 807.4 1111.2 807.4 1111.8 807.4 1112.4 807.4 1113 807.4 1113.6 807.4 1114.2 807.4 1114.8 807.4 1115.4 807.4 1116 807.4 1116.6 807.4 1117.2 807.4 1117.8 807.4 1118.4 802.1 1119 779.7 1119.6 778.6 1120.2 782.2 1120.8 780.8 1121.4 793.3 1122 784.7 1122.6 793.7 1123.2 789.9 1123.8 792.2 1124.4 791.9 1125 797.4 1125.6 795.4 1126.2 793.2 1126.8 794.6 1127.4 797.5 1128 798.3 1128.6 796.8 1129.2 801 1129.8 802.1 1130.4 802.1 1131 797.9 1131.6 800.1 1132.2 803.1 1132.8 801.8 1133.4 799.9 1134 801.5 1134.6 801.1 1135.2 803.7 1135.8 801.7 1136.4 804.4 1137 805.2 1137.6 802.8 1138.2 803.3 1138.8 805.3 1139.4 804.5 1140 805 1140.6 805.8 1141.2 805 1141.8 805.6 1142.4 805.2 1143 806.3 1143.6 805.9 1144.2 805.8 1144.8 806.3 1145.4 807 1146 806.5 1146.6 806.9 1147.2 806.8 1147.8 806.3 1148.4 806.6 1149 807.2 1149.6 806.9 1150.2 807.4 1150.8 807.2 1151.4 807.1 1152 807.1 1152.6 807.4 1153.2 807.2 1153.8 807.4 1154.4 807.4 1155 807.4 1155.6 807.4 1156.2 807.4 1156.8 807.4 1157.4 807.4 1158 807.4 1158.6 807.4 1159.2 805.9 1159.8 798.1 1160.4 784.5 1161 785.4 1161.6 783.6 1162.2 792.2 1162.8 789.3 1163.4 792 1164 797.5 1164.6 798.5 1165.2 802.1 1165.8 798.5 1166.4 800.4 1167 801.8 1167.6 803.8 1168.2 802.9 1168.8 804.4 1169.4 804.8 1170 805 1170.6 805.9 1171.2 805.7 1171.8 806.1 1172.4 806.4 1173 807 1173.6 807.4 1174.2 807 1174.8 807 1175.4 807.4 1176 807.4 1176.6 807.4 1177.2 807.4 1177.8 807.4 1178.4 807.4 1179 807.4 1179.6 807.4 1180.2 807.4 1180.8 807.4 1181.4 807.4 1182 807.4 1182.6 807.4 1183.2 807.4 1183.8 807.4 1184.4 807.4 1185 807.4 1185.6 807.4 1186.2 807.4 1186.8 807.4 1187.4 807.4 1188 807.4 1188.6 807.4 1189.2 807.4 1189.8 804.9 1190.4 800.8 1191 800.9 1191.6 800.9 1192.2 802.4 1192.8 802 1193.4 804.9 1194 804 1194.6 805.7 1195.2 804.8 1195.8 805 1196.4 805.8 1197 806.6 1197.6 806.5 1198.2 807.4 1198.8 806.7 1199.4 807 1200 807.4 1200.6 807.4 1201.2 807.4 1201.8 807.4 1202.4 807.4 1203 807.4 1203.6 807.4 1204.2 807.4 1204.8 807.4 1205.4 807.4 1206 807.4 1206.6 807.4 1207.2 807.4 1207.8 807.4 1208.4 807.4 1209 807.4 1209.6 807.4 1210.2 807.4 1210.8 807.4 1211.4 807.4 1212 807.4 1212.6 807.4 1213.2 807.4 1213.8 807.4 1214.4 807.4 1215 807.4 1215.6 807.4 1216.2 807.4 1216.8 807.4 1217.4 807.4 1218 807.4 1218.6 807.4 1219.2 807.4 1219.8 807.4 1220.4 807.4 1221 807.4 1221.6 807.4 1222.2 807.4 1222.8 807.4 1223.4 807.4 1224 807.4 1224.6 807.4 1225.2 807.4 1225.8 807.4 1226.4 807.4 1227 807.4 1227.6 807.4 1228.2 807.4 1228.8 807.4 1229.4 807.4 1230 807.4 1230.6 807.4 1231.2 807.4 1231.8 807.4 1232.4 807.4 1233 807.4 1233.6 807.4 1234.2 807.4 1234.8 807.4 1235.4 807.4 1236 807.4 1236.6 807.4 1237.2 807.4 1237.8 807.4 1238.4 807.4 1239 807.4 1239.6 807.4 1240.2 807.4 1240.8 807.4 1241.4 807.4 1242 807.4 1242.6 807.4 1243.2 807.4 1243.8 807.4 1244.4 807.4 1245 807.4 1245.6 807.4 1246.2 807.4 1246.8 807.4 1247.4 807.4 1248 807.4 1248.6 807.4 1249.2 807.4 1249.8 807.4 1250.4 807.4 1251 807.4 1251.6 807.4 1252.2 807.4 1252.8 807.4 1253.4 804.3 1254 798 1254.6 791.1 1255.2 790.4 1255.8 788.4 1256.4 795.4 1257 798.5 1257.6 795.6 1258.2 801.7 1258.8 795.5 1259.4 800.9 1260 797.4 1260.6 802.2 1261.2 800.2 1261.8 802.2 1262.4 802.1 1263 802 1263.6 804.1 1264.2 804.1 1264.8 802.3 1265.4 805.4 1266 805.5 1266.6 804.6 1267.2 804.5 1267.8 804 1268.4 804.4 1269 804.5 1269.6 805.1 1270.2 805.9 1270.8 806.7 1271.4 806.8 1272 805.8 1272.6 806.1 1273.2 806.3 1273.8 807.3 1274.4 806.9 1275 806.7 1275.6 807 1276.2 806.9 1276.8 807.4 1277.4 807.2 1278 807.4 1278.6 807.4 1279.2 807.4 1279.8 807.4 1280.4 807.4 1281 807.4 1281.6 807.4 1282.2 807.4 1282.8 807.4 1283.4 807.4 1284 807.4 1284.6 807.4 1285.2 807.4 1285.8 807.4 1286.4 807.4 1287 807.4 1287.6 807.4 1288.2 807.4 1288.8 807.4 1289.4 807.4 1290 807.4 1290.6 807.4 1291.2 807.4 1291.8 807.4 1292.4 807.4 1293 807.4 1293.6 807.4 1294.2 807.4 1294.8 807.4 1295.4 807.4 1296 807.4 1296.6 807.4 1297.2 807.4 1297.8 807.4 1298.4 807.4 1299 807.4 1299.6 807.4 1300.2 807.4 1300.8 807.4 1301.4 807.4 1302 807.4 1302.6 807.4 1303.2 807.4 1303.8 807.4 1304.4 807.4 1305 807.4 1305.6 807.4 1306.2 807.4 1306.8 807.4 1307.4 807.4 1308 807.4 1308.6 807.4 1309.2 807.4 1309.8 807.4 1310.4 807.4 1311 807.4 1311.6 807.4 1312.2 807.4 1312.8 807.4 1313.4 807.4 1314 807.4 1314.6 807.4 1315.2 807.4 1315.8 807.4 1316.4 807.4 1317 807.4 1317.6 807.4 1318.2 805 1318.8 794.5 1319.4 775 1320 778.3 1320.6 775.3 1321.2 781.8 1321.8 788.7 1322.4 784.9 1323 797.1 1323.6 787.7 1324.2 792.8 1324.8 797.7 1325.4 797.8 1326 794.9 1326.6 801.3 1327.2 796.5 1327.8 798 1328.4 800.4 1329 801.4 1329.6 801.6 1330.2 803.8 1330.8 803.6 1331.4 805.2 1332 803.4 1332.6 803.2 1333.2 805.5 1333.8 804.5 1334.4 804.7 1335 804.9 1335.6 806.5 1336.2 806.5 1336.8 806.4 1337.4 806.5 1338 806 1338.6 806.6 1339.2 806.5 1339.8 807.1 1340.4 806.9 1341 807.1 1341.6 807.4 1342.2 807.4 1342.8 807.3 1343.4 807.4 1344 807.4 1344.6 807.4 1345.2 807.3 1345.8 803.7 1346.4 797.8 1347 798.8 1347.6 797.8 1348.2 799.4 1348.8 801.6 1349.4 804.1 1350 805.4 1350.6 804.6 1351.2 806.3 1351.8 806.6 1352.4 807 1353 807.4 1353.6 805.5 1354.2 799.6 1354.8 799.7 1355.4 799.9 1356 799 1356.6 802.7 1357.2 803.8 1357.8 804 1358.4 804.9 1359 804.7 1359.6 804.5 1360.2 805.2 1360.8 806.4 1361.4 806.7 1362 807 1362.6 807 1363.2 807.4 1363.8 807.4 1364.4 807.3 1365 807.4 1365.6 807.4 1366.2 807.4 1366.8 807.4 1367.4 807.4 1368 807.4 1368.6 807.4 1369.2 807.4 1369.8 807.4 1370.4 807.4 1371 807.4 1371.6 807.4 1372.2 807.4 1372.8 807.4 1373.4 807.4 1374 807.4 1374.6 807.4 1375.2 807.4 1375.8 807.4 1376.4 807.4 1377 807.4 1377.6 807.4 1378.2 807.4 1378.8 807.4 1379.4 807.4 1380 807.4 1380.6 807.4 1381.2 807.4 1381.8 807.4 1382.4 807.4 1383 807.4 1383.6 807.4 1384.2 807.4 1384.8 807.4 1385.4 807.4 1386 807.4 1386.6 797.1 1387.2 776.4 1387.8 773.4 1388.4 774.9 1389 773.1 1389.6 781.7 1390.2 787.5 1390.8 781 1391.4 792.5 1392 793.9 1392.6 789 1393.2 792.4 1393.8 795.2 1394.4 790.3 1395 793.5 1395.6 790.9 1396.2 797 1396.8 797.7 1397.4 798.8 1398 794.1 1398.6 801.4 1399.2 801.8 1399.8 798.3 1400.4 802.5 1401 799 1401.6 799.2 1402.2 798.3 1402.8 800.5 1403.4 800 1404 803.1 1404.6 800.7 1405.2 802.8 1405.8 801 1406.4 803.2 1407 801.4 1407.6 802.5 1408.2 803.9 1408.8 804.9 1409.4 803.4 1410 805.2 1410.6 805.9 1411.2 805.1 1411.8 805.7 1412.4 804.5 1413 805.3 1413.6 806.3 1414.2 804.6 1414.8 804.8 1415.4 806 1416 806.4 1416.6 806.4 1417.2 806.8 1417.8 806.8 1418.4 806.4 1419 806.6 1419.6 807.1 1420.2 806.6 1420.8 806.9 1421.4 806.9 1422 806.8 1422.6 807.4 1423.2 807.4 1423.8 807.1 1424.4 807.4 1425 807.2 1425.6 807.1 1426.2 803.3 1426.8 787.7 1427.4 756.9 1428 765.1 1428.6 761.2 1429.2 772.3 1429.8 780.2 1430.4 780.9 1431 774.4 1431.6 789.2 1432.2 779.4 1432.8 786.6 1433.4 785.4 1434 787.2 1434.6 788.6 1435.2 797.1 1435.8 790.6 1436.4 796.1 1437 793.2 1437.6 800.1 1438.2 798.3 1438.8 799.9 1439.4 800.3 1440 799.4 1440.6 800.7 1441.2 801.1 1441.8 801.2 1442.4 801.5 1443 801.3 1443.6 803 1444.2 805.3 1444.8 803.7 1445.4 804.7 1446 804.5 1446.6 805.7 1446.6 811.3 1446 812.5 1445.4 812.3 1444.8 813.3 1444.2 811.7 1443.6 814 1443 815.7 1442.4 815.5 1441.8 815.8 1441.2 815.9 1440.6 816.3 1440 817.6 1439.4 816.7 1438.8 817.1 1438.2 818.7 1437.6 816.9 1437 823.8 1436.4 820.9 1435.8 826.4 1435.2 819.9 1434.6 828.4 1434 829.8 1433.4 831.6 1432.8 830.4 1432.2 837.6 1431.6 827.8 1431 842.6 1430.4 836.1 1429.8 836.8 1429.2 844.7 1428.6 855.8 1428 851.9 1427.4 860.1 1426.8 829.3 1426.2 813.7 1425.6 810 1425 809.8 1424.4 809.7 1423.8 810 1423.2 809.7 1422.6 809.7 1422 810.3 1421.4 810.2 1420.8 810.2 1420.2 810.5 1419.6 810 1419 810.4 1418.4 810.7 1417.8 810.3 1417.2 810.3 1416.6 810.7 1416 810.8 1415.4 811.2 1414.8 812.3 1414.2 812.6 1413.6 810.8 1413 811.9 1412.4 812.7 1411.8 811.4 1411.2 812.1 1410.6 811.3 1410 811.9 1409.4 813.8 1408.8 812.3 1408.2 813.3 1407.6 814.8 1407 816 1406.4 814 1405.8 816.4 1405.2 814.5 1404.6 816.7 1404 814.2 1403.4 817.5 1402.8 816.9 1402.2 819.3 1401.6 818.3 1401 818.5 1400.4 814.9 1399.8 819.3 1399.2 815.6 1398.6 815.9 1398 823.6 1397.4 818.7 1396.8 819.9 1396.2 820.7 1395.6 827 1395 824.3 1394.4 827.7 1393.8 822.5 1393.2 825.4 1392.6 829.1 1392 823.8 1391.4 825.4 1390.8 837.5 1390.2 830.6 1389.6 836.7 1389 845.7 1388.4 843.9 1387.8 845.4 1387.2 842.3 1386.6 820.5 1386 809.6 1385.4 809.6 1384.8 809.6 1384.2 809.6 1383.6 809.6 1383 809.6 1382.4 809.6 1381.8 809.6 1381.2 809.6 1380.6 809.6 1380 809.6 1379.4 809.6 1378.8 809.6 1378.2 809.6 1377.6 809.6 1377 809.6 1376.4 809.6 1375.8 809.6 1375.2 809.6 1374.6 809.6 1374 809.6 1373.4 809.6 1372.8 809.6 1372.2 809.6 1371.6 809.6 1371 809.6 1370.4 809.6 1369.8 809.6 1369.2 809.6 1368.6 809.6 1368 809.6 1367.4 809.6 1366.8 809.6 1366.2 809.6 1365.6 809.6 1365 809.6 1364.4 809.7 1363.8 809.6 1363.2 809.6 1362.6 810 1362 810 1361.4 810.3 1360.8 810.6 1360.2 811.8 1359.6 812.5 1359 812.3 1358.4 812.1 1357.8 813 1357.2 813.2 1356.6 814.3 1356 818 1355.4 817.1 1354.8 817.3 1354.2 817.4 1353.6 811.5 1353 809.6 1352.4 809.6 1351.8 809.6 1351.2 809.8 1350.6 810.8 1350 810.3 1349.4 811.1 1348.8 812.5 1348.2 813.8 1347.6 814.7 1347 814.2 1346.4 814.7 1345.8 811.3 1345.2 809.6 1344.6 809.6 1344 809.6 1343.4 809.6 1342.8 809.7 1342.2 809.6 1341.6 809.6 1341 809.9 1340.4 810.2 1339.8 810 1339.2 810.6 1338.6 810.5 1338 811.1 1337.4 810.6 1336.8 810.7 1336.2 810.6 1335.6 810.6 1335 812.3 1334.4 812.5 1333.8 812.7 1333.2 811.7 1332.6 814.1 1332 813.9 1331.4 812 1330.8 813.7 1330.2 813.4 1329.6 815.8 1329 816 1328.4 817.1 1327.8 819.6 1327.2 821.1 1326.6 816.1 1326 822.9 1325.4 819.8 1324.8 819.9 1324.2 825.1 1323.6 830.5 1323 820.6 1322.4 833.5 1321.8 829.4 1321.2 836.7 1320.6 843.6 1320 840.5 1319.4 844 1318.8 823.3 1318.2 812.2 1317.6 809.6 1317 809.6 1316.4 809.6 1315.8 809.6 1315.2 809.6 1314.6 809.6 1314 809.6 1313.4 809.6 1312.8 809.6 1312.2 809.6 1311.6 809.6 1311 809.6 1310.4 809.6 1309.8 809.6 1309.2 809.6 1308.6 809.6 1308 809.6 1307.4 809.6 1306.8 809.6 1306.2 809.6 1305.6 809.6 1305 809.6 1304.4 809.6 1303.8 809.6 1303.2 809.6 1302.6 809.6 1302 809.6 1301.4 809.6 1300.8 809.6 1300.2 809.6 1299.6 809.6 1299 809.6 1298.4 809.6 1297.8 809.6 1297.2 809.6 1296.6 809.6 1296 809.6 1295.4 809.6 1294.8 809.6 1294.2 809.6 1293.6 809.6 1293 809.6 1292.4 809.6 1291.8 809.6 1291.2 809.6 1290.6 809.6 1290 809.6 1289.4 809.6 1288.8 809.6 1288.2 809.6 1287.6 809.6 1287 809.6 1286.4 809.6 1285.8 809.6 1285.2 809.6 1284.6 809.6 1284 809.6 1283.4 809.6 1282.8 809.6 1282.2 809.6 1281.6 809.6 1281 809.6 1280.4 809.6 1279.8 809.6 1279.2 809.6 1278.6 809.6 1278 809.6 1277.4 809.7 1276.8 809.6 1276.2 809.9 1275.6 809.8 1275 810.1 1274.4 809.9 1273.8 809.6 1273.2 810.5 1272.6 810.7 1272 810.9 1271.4 810 1270.8 810.2 1270.2 810.9 1269.6 811.6 1269 812.1 1268.4 812.2 1267.8 812.5 1267.2 812.1 1266.6 812 1266 811.2 1265.4 811.3 1264.8 814.2 1264.2 812.5 1263.6 812.4 1263 814.4 1262.4 814.3 1261.8 814.2 1261.2 816 1260.6 814.2 1260 818.5 1259.4 815.3 1258.8 820.2 1258.2 814.7 1257.6 820.2 1257 817.5 1256.4 820.3 1255.8 826.7 1255.2 824.9 1254.6 824.2 1254 818 1253.4 812.3 1252.8 809.6 1252.2 809.6 1251.6 809.6 1251 809.6 1250.4 809.6 1249.8 809.6 1249.2 809.6 1248.6 809.6 1248 809.6 1247.4 809.6 1246.8 809.6 1246.2 809.6 1245.6 809.6 1245 809.6 1244.4 809.6 1243.8 809.6 1243.2 809.6 1242.6 809.6 1242 809.6 1241.4 809.6 1240.8 809.6 1240.2 809.6 1239.6 809.6 1239 809.6 1238.4 809.6 1237.8 809.6 1237.2 809.6 1236.6 809.6 1236 809.6 1235.4 809.6 1234.8 809.6 1234.2 809.6 1233.6 809.6 1233 809.6 1232.4 809.6 1231.8 809.6 1231.2 809.6 1230.6 809.6 1230 809.6 1229.4 809.6 1228.8 809.6 1228.2 809.6 1227.6 809.6 1227 809.6 1226.4 809.6 1225.8 809.6 1225.2 809.6 1224.6 809.6 1224 809.6 1223.4 809.6 1222.8 809.6 1222.2 809.6 1221.6 809.6 1221 809.6 1220.4 809.6 1219.8 809.6 1219.2 809.6 1218.6 809.6 1218 809.6 1217.4 809.6 1216.8 809.6 1216.2 809.6 1215.6 809.6 1215 809.6 1214.4 809.6 1213.8 809.6 1213.2 809.6 1212.6 809.6 1212 809.6 1211.4 809.6 1210.8 809.6 1210.2 809.6 1209.6 809.6 1209 809.6 1208.4 809.6 1207.8 809.6 1207.2 809.6 1206.6 809.6 1206 809.6 1205.4 809.6 1204.8 809.6 1204.2 809.6 1203.6 809.6 1203 809.6 1202.4 809.6 1201.8 809.6 1201.2 809.6 1200.6 809.6 1200 809.6 1199.4 810 1198.8 810.3 1198.2 809.6 1197.6 810.5 1197 810.4 1196.4 811.2 1195.8 812 1195.2 812.2 1194.6 811.3 1194 813 1193.4 812.1 1192.8 815 1192.2 814.6 1191.6 816.1 1191 816.1 1190.4 816.2 1189.8 812.1 1189.2 809.6 1188.6 809.6 1188 809.6 1187.4 809.6 1186.8 809.6 1186.2 809.6 1185.6 809.6 1185 809.6 1184.4 809.6 1183.8 809.6 1183.2 809.6 1182.6 809.6 1182 809.6 1181.4 809.6 1180.8 809.6 1180.2 809.6 1179.6 809.6 1179 809.6 1178.4 809.6 1177.8 809.6 1177.2 809.6 1176.6 809.6 1176 809.6 1175.4 809.6 1174.8 809.8 1174.2 809.9 1173.6 809.6 1173 809.9 1172.4 810.4 1171.8 810.7 1171.2 811 1170.6 810.9 1170 811.8 1169.4 811.9 1168.8 812.3 1168.2 813.7 1167.6 812.9 1167 814.7 1166.4 816 1165.8 817.7 1165.2 814.4 1164.6 817.7 1164 818.6 1163.4 823.7 1162.8 826.2 1162.2 823.5 1161.6 831.5 1161 829.8 1160.4 830.6 1159.8 818.1 1159.2 810.9 1158.6 809.6 1158 809.6 1157.4 809.6 1156.8 809.6 1156.2 809.6 1155.6 809.6 1155 809.6 1154.4 809.6 1153.8 809.6 1153.2 809.8 1152.6 809.6 1152 809.9 1151.4 809.9 1150.8 809.8 1150.2 809.6 1149.6 810.1 1149 809.8 1148.4 810.4 1147.8 810.7 1147.2 810.2 1146.6 810.1 1146 810.5 1145.4 810 1144.8 810.7 1144.2 811.2 1143.6 811.1 1143 810.7 1142.4 811.8 1141.8 811.4 1141.2 812 1140.6 811.2 1140 812 1139.4 812.5 1138.8 811.7 1138.2 813.7 1137.6 814.2 1137 811.8 1136.4 812.6 1135.8 815.3 1135.2 813.3 1134.6 815.9 1134 815.5 1133.4 817.1 1132.8 815.2 1132.2 813.9 1131.6 816.9 1131 819.1 1130.4 814.9 1129.8 814.9 1129.2 816 1128.6 820.2 1128 818.7 1127.4 819.5 1126.8 822.4 1126.2 823.8 1125.6 821.6 1125 819.6 1124.4 825.1 1123.8 824.8 1123.2 827.1 1122.6 823.3 1122 832.3 1121.4 823.7 1120.8 836.2 1120.2 834.8 1119.6 838.4 1119 837.3 1118.4 814.9 1117.8 809.6 1117.2 809.6 1116.6 809.6 1116 809.6 1115.4 809.6 1114.8 809.6 1114.2 809.6 1113.6 809.6 1113 809.6 1112.4 809.6 1111.8 809.6 1111.2 809.6 1110.6 809.6 1110 809.6 1109.4 809.6 1108.8 809.6 1108.2 809.6 1107.6 809.6 1107 809.6 1106.4 809.6 1105.8 809.6 1105.2 809.6 1104.6 809.6 1104 809.6 1103.4 809.6 1102.8 809.6 1102.2 809.6 1101.6 809.6 1101 809.6 1100.4 809.6 1099.8 809.6 1099.2 809.6 1098.6 809.6 1098 809.6 1097.4 809.6 1096.8 809.6 1096.2 809.6 1095.6 809.6 1095 809.6 1094.4 809.6 1093.8 809.6 1093.2 809.6 1092.6 809.6 1092 809.6 1091.4 809.6 1090.8 809.6 1090.2 809.6 1089.6 809.6 1089 809.6 1088.4 809.6 1087.8 809.6 1087.2 809.6 1086.6 809.6 1086 809.6 1085.4 809.6 1084.8 809.6 1084.2 810.4 1083.6 810.7 1083 810.8 1082.4 811.4 1081.8 811.9 1081.2 812.5 1080.6 814.5 1080 813.9 1079.4 814.4 1078.8 810.9 1078.2 809.6 1077.6 809.6 1077 809.6 1076.4 809.6 1075.8 809.6 1075.2 809.9 1074.6 810 1074 809.7 1073.4 809.8 1072.8 810.4 1072.2 810.6 1071.6 809.7 1071 810.2 1070.4 810 1069.8 811.5 1069.2 811.1 1068.6 810.9 1068 810.6 1067.4 812.3 1066.8 813.4 1066.2 813 1065.6 811.5 1065 813.6 1064.4 815.5 1063.8 815.6 1063.2 815 1062.6 816.4 1062 816.7 1061.4 814.6 1060.8 815.6 1060.2 821.4 1059.6 822.5 1059 821.1 1058.4 825.3 1057.8 822.9 1057.2 828.1 1056.6 830.2 1056 830.6 1055.4 831.4 1054.8 822.7 1054.2 829.8 1053.6 843.8 1053 842.1 1052.4 841.1 1051.8 823.3 1051.2 812.2 1050.6 809.6 1050 809.6 1049.4 809.6 1048.8 809.6 1048.2 809.6 1047.6 809.6 1047 809.6 1046.4 809.6 1045.8 809.6 1045.2 809.6 1044.6 809.6 1044 809.6 1043.4 809.6 1042.8 809.6 1042.2 809.6 1041.6 809.6 1041 809.6 1040.4 809.6 1039.8 809.6 1039.2 809.6 1038.6 809.6 1038 809.6 1037.4 809.6 1036.8 809.6 1036.2 809.6 1035.6 809.6 1035 809.6 1034.4 809.6 1033.8 809.6 1033.2 809.6 1032.6 809.6 1032 809.6 1031.4 809.6 1030.8 809.6 1030.2 809.6 1029.6 809.6 1029 809.6 1028.4 809.6 1027.8 809.6 1027.2 809.6 1026.6 809.6 1026 809.6 1025.4 809.6 1024.8 809.6 1024.2 809.6 1023.6 809.6 1023 809.6 1022.4 809.6 1021.8 809.6 1021.2 809.6 1020.6 809.6 1020 809.6 1019.4 809.6 1018.8 809.6 1018.2 809.6 1017.6 809.6 1017 809.6 1016.4 809.6 1015.8 809.6 1015.2 809.6 1014.6 809.6 1014 809.6 1013.4 809.6 1012.8 809.6 1012.2 809.6 1011.6 809.6 1011 809.6 1010.4 809.6 1009.8 809.8 1009.2 809.6 1008.6 809.6 1008 810.2 1007.4 809.9 1006.8 809.6 1006.2 810.6 1005.6 809.7 1005 810.4 1004.4 811 1003.8 810.9 1003.2 810 1002.6 810.4 1002 811.4 1001.4 811.4 1000.8 811.5 1000.2 811.8 999.6 811.3 999 811.4 998.4 812.9 997.8 811.7 997.2 814.3 996.6 814.7 996 812.5 995.4 811.9 994.8 815.7 994.2 813.4 993.6 816.7 993 815.9 992.4 816.2 991.8 814.7 991.2 817.1 990.6 816.9 990 820.1 989.4 821.9 988.8 822.6 988.2 816.6 987.6 825.3 987 824.2 986.4 825.2 985.8 816.1 985.2 810.4 984.6 809.6 984 809.6 983.4 809.6 982.8 809.6 982.2 809.6 981.6 809.6 981 809.6 980.4 809.6 979.8 809.6 979.2 809.6 978.6 809.6 978 809.6 977.4 809.6 976.8 809.6 976.2 809.6 975.6 809.6 975 809.6 974.4 809.6 973.8 809.6 973.2 809.6 972.6 809.6 972 809.6 971.4 809.6 970.8 809.6 970.2 809.6 969.6 809.6 969 809.6 968.4 809.6 967.8 809.6 967.2 809.6 966.6 809.6 966 809.6 965.4 809.6 964.8 809.6 964.2 809.6 963.6 809.6 963 809.6 962.4 809.6 961.8 809.6 961.2 809.6 960.6 809.6 960 809.6 959.4 809.6 958.8 809.6 958.2 809.6 957.6 809.6 957 809.6 956.4 809.6 955.8 809.6 955.2 809.6 954.6 809.6 954 809.6 953.4 809.6 952.8 809.6 952.2 809.6 951.6 809.6 951 809.6 950.4 809.6 949.8 809.6 949.2 809.6 948.6 809.6 948 809.6 947.4 809.6 946.8 809.6 946.2 809.6 945.6 809.6 945 809.6 944.4 809.6 943.8 809.6 943.2 809.6 942.6 809.6 942 809.6 941.4 809.6 940.8 809.6 940.2 809.6 939.6 809.6 939 809.6 938.4 809.6 937.8 809.6 937.2 809.6 936.6 809.6 936 809.6 935.4 809.6 934.8 809.6 934.2 809.6 933.6 809.6 933 809.6 932.4 809.6 931.8 809.6 931.2 809.6 930.6 809.8 930 809.6 929.4 809.6 928.8 809.6 928.2 810.1 927.6 810.4 927 810.1 926.4 810.2 925.8 811.4 925.2 811.4 924.6 811.4 924 812.5 923.4 813 922.8 812.3 922.2 815.8 921.6 816.6 921 817 920.4 816 919.8 812.1 919.2 809.6 918.6 809.6 918 809.6 917.4 809.6 916.8 809.6 916.2 809.6 915.6 809.6 915 809.6 914.4 809.6 913.8 809.6 913.2 809.6 912.6 809.6 912 809.6 911.4 809.6 910.8 809.6 910.2 809.6 909.6 809.6 909 809.6 908.4 809.6 907.8 809.6 907.2 809.6 906.6 809.6 906 809.6 905.4 809.6 904.8 809.6 904.2 809.6 903.6 809.6 903 809.6 902.4 809.6 901.8 809.6 901.2 809.6 900.6 809.6 900 809.6 899.4 809.6 898.8 809.6 898.2 809.6 897.6 809.6 897 809.6 896.4 809.6 895.8 809.6 895.2 809.6 894.6 809.6 894 809.6 893.4 809.6 892.8 809.6 892.2 809.6 891.6 809.6 891 809.6 890.4 809.6 889.8 809.7 889.2 809.6 888.6 809.7 888 809.9 887.4 810.2 886.8 810.2 886.2 810.3 885.6 811.8 885 810.9 884.4 812.6 883.8 813.8 883.2 813.2 882.6 816.5 882 815.9 881.4 816.1 880.8 811.7 880.2 810.5 879.6 810.6 879 811.3 878.4 810.8 877.8 810.6 877.2 812 876.6 810.9 876 812.4 875.4 812.6 874.8 813.1 874.2 812.5 873.6 813.3 873 814 872.4 813.5 871.8 815 871.2 813.5 870.6 813 870 814.4 869.4 812.3 868.8 814.3 868.2 816.9 867.6 815.6 867 818.1 866.4 813.7 865.8 819.3 865.2 817.3 864.6 815.8 864 817.9 863.4 818.9 862.8 819.9 862.2 817.5 861.6 817.9 861 818.9 860.4 825.3 859.8 820.9 859.2 821.8 858.6 825.9 858 819.2 857.4 828.4 856.8 828.8 856.2 832.3 855.6 824.9 855 828.1 854.4 824.7 853.8 838.6 853.2 836 852.6 836.1 852 840.1 851.4 815.3 850.8 809.6 850.2 809.6 849.6 809.6 849 809.6 848.4 809.6 847.8 809.6 847.2 809.6 846.6 809.6 846 809.6 845.4 809.6 844.8 809.6 844.2 809.6 843.6 809.6 843 809.6 842.4 809.6 841.8 809.6 841.2 809.6 840.6 809.6 840 809.6 839.4 809.6 838.8 809.6 838.2 809.6 837.6 809.6 837 809.6 836.4 809.6 835.8 809.6 835.2 809.6 834.6 809.6 834 809.6 833.4 809.6 832.8 809.6 832.2 809.6 831.6 809.6 831 809.6 830.4 809.6 829.8 809.6 829.2 809.6 828.6 809.6 828 809.6 827.4 809.6 826.8 809.6 826.2 809.6 825.6 809.6 825 809.6 824.4 809.6 823.8 809.6 823.2 809.6 822.6 809.6 822 809.6 821.4 809.6 820.8 809.6 820.2 809.6 819.6 809.6 819 809.8 818.4 809.7 817.8 810.7 817.2 811.1 816.6 810.7 816 811.2 815.4 812.1 814.8 811.5 814.2 815.1 813.6 814.9 813 815.6 812.4 815.6 811.8 811.7 811.2 809.6 810.6 809.6 810 809.6 809.4 809.6 808.8 809.6 808.2 809.6 807.6 809.6 807 809.8 806.4 809.6 805.8 809.6 805.2 810 804.6 810.5 804 809.8 803.4 810.3 802.8 810.3 802.2 810.2 801.6 810.7 801 810.3 800.4 810.5 799.8 810.9 799.2 812 798.6 811.2 798 811.3 797.4 812 796.8 815.1 796.2 814.9 795.6 812.4 795 816.7 794.4 816.8 793.8 817.3 793.2 816.5 792.6 817.7 792 821.3 791.4 821.5 790.8 816.5 790.2 825.3 789.6 818 789 822.7 788.4 822.5 787.8 831.3 787.2 831 786.6 835 786 832.1 785.4 844.5 784.8 838.3 784.2 844.3 783.6 819.6 783 809.6 782.4 809.6 781.8 809.6 781.2 809.6 780.6 809.6 780 809.6 779.4 809.6 778.8 809.6 778.2 809.6 777.6 809.6 777 809.6 776.4 809.6 775.8 809.6 775.2 809.6 774.6 809.6 774 809.6 773.4 809.6 772.8 809.6 772.2 809.6 771.6 809.6 771 809.6 770.4 809.6 769.8 809.6 769.2 809.6 768.6 809.6 768 809.6 767.4 809.6 766.8 809.6 766.2 809.6 765.6 809.6 765 809.6 764.4 809.6 763.8 809.6 763.2 809.6 762.6 809.6 762 809.6 761.4 809.6 760.8 809.6 760.2 809.6 759.6 809.6 759 809.6 758.4 809.6 757.8 809.6 757.2 809.6 756.6 809.6 756 809.6 755.4 809.6 754.8 809.6 754.2 809.6 753.6 809.6 753 809.6 752.4 809.6 751.8 809.6 751.2 809.6 750.6 809.6 750 809.6 749.4 809.6 748.8 809.6 748.2 809.6 747.6 809.6 747 809.6 746.4 809.6 745.8 809.6 745.2 809.6 744.6 809.6 744 809.8 743.4 809.7 742.8 809.6 742.2 809.6 741.6 809.7 741 810.3 740.4 809.9 739.8 809.8 739.2 810.1 738.6 810.7 738 809.9 737.4 811.1 736.8 811.2 736.2 810.5 735.6 811 735 810.6 734.4 812.3 733.8 811.5 733.2 813.1 732.6 813.1 732 812.9 731.4 812.5 730.8 811.6 730.2 814.3 729.6 812 729 813.2 728.4 815.2 727.8 814 727.2 816.7 726.6 813.5 726 817 725.4 819.4 724.8 818.1 724.2 814.7 723.6 818.5 723 821.3 722.4 820.6 721.8 825.7 721.2 824.1 720.6 825.3 720 826.5 719.4 812.3 718.8 809.6 718.2 809.6 717.6 809.6 717 809.6 716.4 809.6 715.8 809.6 715.2 809.6 714.6 809.6 714 809.6 713.4 809.6 712.8 809.6 712.2 809.6 711.6 809.6 711 809.6 710.4 809.6 709.8 809.6 709.2 809.6 708.6 809.6 708 809.6 707.4 809.6 706.8 809.6 706.2 809.6 705.6 809.6 705 809.6 704.4 809.6 703.8 809.6 703.2 809.6 702.6 809.6 702 809.6 701.4 809.6 700.8 809.6 700.2 809.6 699.6 809.6 699 809.6 698.4 809.6 697.8 809.6 697.2 809.6 696.6 809.6 696 809.6 695.4 809.6 694.8 809.6 694.2 809.6 693.6 809.6 693 809.6 692.4 809.6 691.8 809.6 691.2 809.6 690.6 809.6 690 809.6 689.4 809.6 688.8 809.6 688.2 809.6 687.6 809.6 687 809.6 686.4 809.6 685.8 809.6 685.2 809.6 684.6 809.6 684 809.6 683.4 809.6 682.8 809.6 682.2 809.6 681.6 809.6 681 809.6 680.4 809.6 679.8 809.6 679.2 809.6 678.6 809.6 678 809.6 677.4 809.6 676.8 809.6 676.2 809.6 675.6 809.6 675 809.6 674.4 809.6 673.8 809.6 673.2 809.6 672.6 809.6 672 809.6 671.4 809.6 670.8 809.6 670.2 809.6 669.6 809.6 669 809.6 668.4 809.6 667.8 809.6 667.2 809.6 666.6 809.6 666 809.6 665.4 809.6 664.8 809.6 664.2 809.9 663.6 809.6 663 809.6 662.4 809.6 661.8 809.9 661.2 810.9 660.6 810.9 660 811.1 659.4 810.7 658.8 810.8 658.2 811.8 657.6 812.3 657 814.7 656.4 815.2 655.8 816.3 655.2 817.4 654.6 817.4 654 816.3 653.4 810.3 652.8 809.6 652.2 809.6 651.6 809.6 651 809.6 650.4 809.6 649.8 809.6 649.2 809.6 648.6 809.6 648 809.6 647.4 809.6 646.8 809.6 646.2 809.6 645.6 809.6 645 809.6 644.4 809.6 643.8 809.6 643.2 809.6 642.6 809.6 642 809.6 641.4 809.6 640.8 809.6 640.2 810.2 639.6 809.6 639 809.9 638.4 810.5 637.8 811.2 637.2 810.5 636.6 811.1 636 811.7 635.4 811.5 634.8 812 634.2 812.5 633.6 813.7 633 814.9 632.4 815.6 631.8 818 631.2 815.1 630.6 816.5 630 815.8 629.4 818.6 628.8 824.3 628.2 819.6 627.6 828.2 627 831.5 626.4 828.2 625.8 818.1 625.2 810.9 624.6 809.6 624 809.6 623.4 809.6 622.8 809.6 622.2 809.6 621.6 809.6 621 809.6 620.4 809.6 619.8 809.8 619.2 809.9 618.6 809.7 618 809.7 617.4 810.1 616.8 809.9 616.2 809.9 615.6 809.8 615 810.1 614.4 810.4 613.8 810.8 613.2 809.8 612.6 810.3 612 810.6 611.4 810.3 610.8 810.7 610.2 811.5 609.6 810.5 609 810.4 608.4 810.8 607.8 810.9 607.2 810.9 606.6 811.5 606 812.3 605.4 812.5 604.8 811.9 604.2 813.5 603.6 813.2 603 814.3 602.4 812.7 601.8 812.5 601.2 814.7 600.6 815.8 600 813.5 599.4 814.5 598.8 816.7 598.2 814.8 597.6 815.5 597 817.2 596.4 817.8 595.8 816.4 595.2 820.3 594.6 821.9 594 820.6 593.4 822 592.8 822.8 592.2 825.1 591.6 823.3 591 821.6 590.4 819.5 589.8 824.9 589.2 827.7 588.6 829 588 820.9 587.4 826.2 586.8 835.5 586.2 835.3 585.6 835.6 585 838.1 584.4 814.9 583.8 809.6 583.2 809.6 582.6 809.6 582 809.6 581.4 809.6 580.8 809.6 580.2 809.6 579.6 809.6 579 809.6 578.4 809.6 577.8 809.6 577.2 809.6 576.6 809.6 576 809.6 575.4 809.6 574.8 809.6 574.2 809.6 573.6 809.6 573 809.6 572.4 809.6 571.8 809.6 571.2 809.6 570.6 809.6 570 809.6 569.4 809.6 568.8 809.6 568.2 809.6 567.6 809.6 567 809.6 566.4 809.6 565.8 809.6 565.2 809.7 564.6 809.7 564 810.1 563.4 810 562.8 810.2 562.2 810.1 561.6 810.3 561 810.2 560.4 811.4 559.8 811.4 559.2 811.8 558.6 812.2 558 812.2 557.4 813.9 556.8 815.7 556.2 816.6 555.6 818.2 555 817.6 554.4 816.7 553.8 812.5 553.2 809.6 552.6 809.6 552 810 551.4 809.9 550.8 809.7 550.2 809.9 549.6 811.5 549 811.8 548.4 813.1 547.8 811.2 547.2 813.5 546.6 815.8 546 815.5 545.4 815.6 544.8 811.7 544.2 809.6 543.6 809.6 543 809.6 542.4 809.6 541.8 809.6 541.2 809.6 540.6 809.6 540 809.6 539.4 809.6 538.8 809.6 538.2 809.6 537.6 809.8 537 809.8 536.4 809.6 535.8 809.9 535.2 809.9 534.6 810.3 534 810.1 533.4 811.1 532.8 810.9 532.2 810.4 531.6 811 531 812.5 530.4 810.8 529.8 812.5 529.2 812.9 528.6 814.3 528 812.8 527.4 812.7 526.8 813.8 526.2 814.3 525.6 816.4 525 817.5 524.4 817.1 523.8 821.9 523.2 820.6 522.6 819.7 522 819.3 521.4 827.8 520.8 828.6 520.2 827.1 519.6 831.9 519 828.3 518.4 842.8 517.8 841.7 517.2 839.6 516.6 819.3 516 809.6 515.4 809.6 514.8 809.6 514.2 809.6 513.6 809.6 513 809.6 512.4 809.6 511.8 809.6 511.2 809.6 510.6 809.6 510 809.6 509.4 809.6 508.8 809.6 508.2 809.6 507.6 809.6 507 809.6 506.4 809.6 505.8 809.6 505.2 809.6 504.6 809.6 504 809.6 503.4 809.6 502.8 809.6 502.2 809.6 501.6 809.6 501 809.6 500.4 809.6 499.8 809.6 499.2 809.6 498.6 809.6 498 809.6 497.4 809.6 496.8 809.6 496.2 809.6 495.6 809.6 495 809.6 494.4 809.6 493.8 809.6 493.2 809.6 492.6 809.6 492 809.6 491.4 809.6 490.8 809.6 490.2 809.6 489.6 809.6 489 809.6 488.4 809.6 487.8 809.6 487.2 809.6 486.6 809.6 486 809.6 485.4 809.6 484.8 809.6 484.2 809.6 483.6 809.6 483 809.6 482.4 809.6 481.8 809.6 481.2 809.6 480.6 809.6 480 809.6 479.4 809.6 478.8 809.6 478.2 809.6 477.6 809.6 477 809.6 476.4 809.8 475.8 809.6 475.2 809.7 474.6 809.6 474 809.6 473.4 810.3 472.8 810.2 472.2 809.8 471.6 809.7 471 810 470.4 810.1 469.8 810.8 469.2 810.1 468.6 810.9 468 811.8 467.4 810.9 466.8 811.1 466.2 811.6 465.6 812.7 465 813 464.4 811 463.8 813.2 463.2 812.3 462.6 814.1 462 813.7 461.4 814.8 460.8 815.8 460.2 814.8 459.6 814.7 459 815 458.4 814 457.8 817.5 457.2 815.7 456.6 818.9 456 818.4 455.4 817.3 454.8 818 454.2 823.8 453.6 824.7 453 825.5 452.4 824.6 451.8 816.1 451.2 810.4 450.6 809.6 450 809.6 449.4 809.6 448.8 809.6 448.2 809.6 447.6 809.6 447 809.6 446.4 809.6 445.8 809.6 445.2 809.6 444.6 809.6 444 809.6 443.4 809.6 442.8 809.6 442.2 809.6 441.6 809.6 441 809.6 440.4 809.6 439.8 809.6 439.2 809.6 438.6 809.6 438 809.6 437.4 809.6 436.8 809.6 436.2 809.6 435.6 809.6 435 809.6 434.4 809.6 433.8 809.6 433.2 809.6 432.6 809.6 432 809.6 431.4 809.6 430.8 809.6 430.2 809.6 429.6 809.6 429 809.6 428.4 809.6 427.8 809.6 427.2 809.6 426.6 809.6 426 809.6 425.4 809.6 424.8 809.6 424.2 809.6 423.6 809.6 423 809.6 422.4 809.6 421.8 809.6 421.2 809.6 420.6 809.6 420 809.6 419.4 809.6 418.8 809.6 418.2 809.6 417.6 809.6 417 809.6 416.4 809.6 415.8 809.6 415.2 809.6 414.6 809.6 414 809.6 413.4 809.6 412.8 809.6 412.2 809.6 411.6 809.6 411 809.6 410.4 809.6 409.8 809.6 409.2 809.6 408.6 809.6 408 809.6 407.4 809.6 406.8 809.6 406.2 809.6 405.6 809.6 405 809.6 404.4 809.6 403.8 809.6 403.2 809.6 402.6 809.6 402 809.6 401.4 809.6 400.8 809.6 400.2 809.6 399.6 809.6 399 809.6 398.4 809.9 397.8 809.6 397.2 809.9 396.6 809.7 396 810.5 395.4 810.6 394.8 811 394.2 811.5 393.6 812.2 393 811.3 392.4 812 391.8 811.3 391.2 812.2 390.6 816 390 816 389.4 815.7 388.8 811.7 388.2 809.6 387.6 809.6 387 809.6Z"/><path id="g1" d="M1452 680 L1452 679.5 1452.8 679.5 1453.6 679.5 1454.4 679.5 1455.2 679.5 1456 679.5 1456.8 676.4 1457.6 671.7 1458.4 671.5 1459.2 673.3 1460 673.8 1460.8 675.3 1461.6 675.6 1462.4 678.1 1463.2 677.6 1464 677.3 1464.8 678.1 1465.6 678.1 1466.4 679.1 1467.2 679 1468 679.3 1468.8 679.2 1469.6 679.3 1470.4 679.5 1471.2 679.5 1472 679.5 1472 680.5 1471.2 680.5 1470.4 680.5 1469.6 680.7 1468.8 680.8 1468 680.7 1467.2 681 1466.4 680.9 1465.6 681.9 1464.8 681.9 1464 682.7 1463.2 682.4 1462.4 681.9 1461.6 684.4 1460.8 684.7 1460 686.2 1459.2 686.7 1458.4 688.5 1457.6 688.3 1456.8 683.6 1456 680.5 1455.2 680.5 1454.4 680.5 1453.6 680.5 1452.8 680.5 1452 680.5Z"/><path id="g2" d="M1452 808.5 L1452 808 1452.8 808 1453.6 808 1454.4 808 1455.2 808 1456 808 1456.8 804.9 1457.6 799.9 1458.4 799.8 1459.2 803 1460 804.6 1460.8 805.9 1461.6 804.7 1462.4 805.7 1463.2 805.6 1464 806.6 1464.8 806.4 1465.6 807.3 1466.4 807 1467.2 807.3 1468 807.7 1468.8 807.7 1469.6 807.8 1470.4 808 1471.2 808 1472 808 1472 809 1471.2 809 1470.4 809 1469.6 809.2 1468.8 809.3 1468 809.3 1467.2 809.7 1466.4 810 1465.6 809.7 1464.8 810.6 1464 810.4 1463.2 811.4 1462.4 811.3 1461.6 812.3 1460.8 811.1 1460 812.4 1459.2 814 1458.4 817.2 1457.6 817.1 1456.8 812.1 1456 809 1455.2 809 1454.4 809 1453.6 809 1452.8 809 1452 809Z"/></defs></svg>
<div class="win" style="left:267px;top:250px;width:1445px;height:900px;border-radius:9px 9px 7px 7px;">
<div class="a" style="left:0;top:0;width:1445px;height:900px;"><div class="a" style="left:0px;top:0px;width:1445px;height:900px;background:#53585b;"></div>
<div class="a" style="left:0px;top:0px;width:1445px;height:45px;background:#dfe1e2;"></div>
<div class="a" style="left:0px;top:45px;width:1445px;height:16px;background:#53585b;"></div>
<div class="a" style="left:8px;top:61px;width:1429px;height:36px;background:#e1e2e3;"></div>
<div class="a" style="left:17px;top:70px;width:20px;height:20px;background:#c9cbcc;"></div>
<svg class="a" style="left:17px;top:70px;" width="20" height="20" viewBox="66 102 20 20"><path d="M72.5 105.5 L72.5 118 L75.5 115 L78 120 L80 119 L77.5 114.3 L81.5 114 Z" fill="#2a2c2e"/></svg>
<svg class="a" style="left:41px;top:71px;" width="16" height="18" viewBox="90 103 16 18"><path d="M94 118.5 L95 113.5 L102 105.5 L104.5 107.5 L97.5 115.5 Z" fill="none" stroke="#6b6e71" stroke-width="1.4"/></svg>
<svg class="a" style="left:62px;top:71px;" width="19" height="18" viewBox="111 103 19 18"><path d="M113 116 L120 108 L128 108 L121 116 Z M113 116 L113 118 L121 118 L128 110" fill="none" stroke="#6b6e71" stroke-width="1.4"/></svg>
<svg class="a" style="left:85px;top:71px;" width="19" height="18" viewBox="134 103 19 18"><path d="M137 111 L143 105 L150 112 L144 118 Z" fill="none" stroke="#6b6e71" stroke-width="1.6"/><circle cx="144" cy="112" r="1" fill="#6b6e71"/></svg>
<svg class="a" style="left:108px;top:71px;" width="19" height="18" viewBox="157 103 19 18"><path d="M160 105 L172 105 L172 114.5 L163 114.5 L161 118 L160.5 114.5 L160 114.5 Z" fill="none" stroke="#6b6e71" stroke-width="1.3"/><path d="M163 112.5 L163 107 L166 110 L169 107 L169 112.5" fill="none" stroke="#6b6e71" stroke-width="1.2"/></svg>
<svg class="a" style="left:131px;top:71px;" width="18" height="18" viewBox="180 103 18 18"><circle cx="187" cy="110" r="5" fill="none" stroke="#6b6e71" stroke-width="1.6"/><path d="M190.5 113.5 L195 118" stroke="#6b6e71" stroke-width="1.8"/></svg>
<svg class="a" style="left:153px;top:71px;" width="19" height="18" viewBox="202 103 19 18"><path d="M206 111 L206 107.5 M208.5 111 L208.5 105.5 M211 111 L211 105 M213.5 111 L213.5 106 M216 112 L216 108.5 M205 110 L205 114 Q207 119 212 119 Q217 119 217 113" fill="none" stroke="#6b6e71" stroke-width="1.5" stroke-linecap="round"/></svg>
<svg class="a" style="left:177px;top:71px;" width="16" height="18" viewBox="226 103 16 18"><path d="M230 109.5 L232 109.5 L236 105.5 L236 118.5 L232 114.5 L230 114.5 Z" fill="none" stroke="#6b6e71" stroke-width="1.3"/></svg>
<div class="a" style="left:203px;top:72px;width:30px;height:16.5px;background:#c5c7c8;"></div>
<div class="t" style="top:77px;font-size:5.5px;line-height:6.6px;height:6.6px;color:#505356;font-weight:700;left:218px;width:0;"><span class="c">SNAP</span></div>
<div class="t" style="top:71.6px;font-size:14px;line-height:16.8px;height:16.8px;color:#333;font-weight:700;left:269px;">Bar</div>
<svg class="a" style="left:313px;top:76px;" width="10" height="6" viewBox="362 108 10 6"><path d="M364 109.5 L370 109.5 L367 113 Z" fill="#6b6e71"/></svg>
<div class="a" style="left:328px;top:64px;width:1px;height:31px;background:#b8babc;"></div>
<div class="a" style="left:454.5px;top:64px;width:1px;height:31px;background:#b8babc;"></div>
<div class="a" style="left:573px;top:64px;width:1px;height:31px;background:#b8babc;"></div>
<div class="a" style="left:648px;top:64px;width:1px;height:31px;background:#b8babc;"></div>
<div class="a" style="left:723px;top:64px;width:1px;height:31px;background:#b8babc;"></div>
<div class="a" style="left:787px;top:64px;width:1px;height:31px;background:#b8babc;"></div>
<div class="a" style="left:859px;top:64px;width:1px;height:31px;background:#b8babc;"></div>
<div class="t" style="top:65.6px;font-size:9.5px;line-height:11.4px;height:11.4px;color:#444;font-weight:700;left:331px;">Position</div>
<div class="t" style="top:65.6px;font-size:9.5px;line-height:11.4px;height:11.4px;color:#444;font-weight:700;left:456px;">Length</div>
<div class="t" style="top:65.6px;font-size:9.5px;line-height:11.4px;height:11.4px;color:#444;font-weight:700;left:575px;">Fade In</div>
<div class="t" style="top:65.6px;font-size:9.5px;line-height:11.4px;height:11.4px;color:#444;font-weight:700;left:651px;">Fade Out</div>
<div class="t" style="top:65.6px;font-size:9.5px;line-height:11.4px;height:11.4px;color:#444;font-weight:700;left:726px;">Level (dB)</div>
<div class="t" style="top:65.6px;font-size:9.5px;line-height:11.4px;height:11.4px;color:#444;font-weight:700;left:790px;">Transpose</div>
<div class="t" style="top:78.1px;font-size:12px;line-height:14.4px;height:14.4px;color:#333;left:356px;width:0;letter-spacing:2px;"><span class="c">9.</span></div>
<div class="t" style="top:78.1px;font-size:12px;line-height:14.4px;height:14.4px;color:#333;left:376px;width:0;letter-spacing:2px;"><span class="c">2.</span></div>
<div class="t" style="top:78.1px;font-size:12px;line-height:14.4px;height:14.4px;color:#333;left:396px;width:0;letter-spacing:2px;"><span class="c">1.</span></div>
<div class="t" style="top:78.1px;font-size:12px;line-height:14.4px;height:14.4px;color:#333;left:420px;width:0;letter-spacing:2px;"><span class="c">0</span></div>
<div class="t" style="top:78.1px;font-size:12px;line-height:14.4px;height:14.4px;color:#333;left:476px;width:0;letter-spacing:2px;"><span class="c">2.</span></div>
<div class="t" style="top:78.1px;font-size:12px;line-height:14.4px;height:14.4px;color:#333;left:496px;width:0;letter-spacing:2px;"><span class="c">0.</span></div>
<div class="t" style="top:78.1px;font-size:12px;line-height:14.4px;height:14.4px;color:#333;left:516px;width:0;letter-spacing:2px;"><span class="c">0.</span></div>
<div class="t" style="top:78.1px;font-size:12px;line-height:14.4px;height:14.4px;color:#333;left:539px;width:0;letter-spacing:2px;"><span class="c">0</span></div>
<div class="t" style="top:78.1px;font-size:12px;line-height:14.4px;height:14.4px;color:#333;left:590px;width:0;letter-spacing:2px;"><span class="c">0.</span></div>
<div class="t" style="top:78.1px;font-size:12px;line-height:14.4px;height:14.4px;color:#333;left:614px;width:0;letter-spacing:2px;"><span class="c">0</span></div>
<div class="t" style="top:78.1px;font-size:12px;line-height:14.4px;height:14.4px;color:#333;left:666px;width:0;letter-spacing:2px;"><span class="c">0.</span></div>
<div class="t" style="top:78.1px;font-size:12px;line-height:14.4px;height:14.4px;color:#333;left:690px;width:0;letter-spacing:2px;"><span class="c">0</span></div>
<div class="t" style="top:78.1px;font-size:12px;line-height:14.4px;height:14.4px;color:#333;left:751px;width:0;letter-spacing:2px;"><span class="c">0.00</span></div>
<div class="t" style="top:78.1px;font-size:12px;line-height:14.4px;height:14.4px;color:#333;left:819px;width:0;letter-spacing:2px;"><span class="c">0. 00</span></div>
<svg class="a" style="left:434px;top:78px;" width="8" height="15" viewBox="483 110 8 15"><path d="M483.8 115.5 L487 111.5 L490.2 115.5 Z M483.8 118.5 L487 122.5 L490.2 118.5 Z" fill="#333"/></svg>
<svg class="a" style="left:553.5px;top:78px;" width="8" height="15" viewBox="602.5 110 8 15"><path d="M603.3 115.5 L606.5 111.5 L609.7 115.5 Z M603.3 118.5 L606.5 122.5 L609.7 118.5 Z" fill="#333"/></svg>
<svg class="a" style="left:628.5px;top:78px;" width="8" height="15" viewBox="677.5 110 8 15"><path d="M678.3 115.5 L681.5 111.5 L684.7 115.5 Z M678.3 118.5 L681.5 122.5 L684.7 118.5 Z" fill="#333"/></svg>
<svg class="a" style="left:704px;top:78px;" width="8" height="15" viewBox="753 110 8 15"><path d="M753.8 115.5 L757 111.5 L760.2 115.5 Z M753.8 118.5 L757 122.5 L760.2 118.5 Z" fill="#333"/></svg>
<svg class="a" style="left:767.5px;top:78px;" width="8" height="15" viewBox="816.5 110 8 15"><path d="M817.3 115.5 L820.5 111.5 L823.7 115.5 Z M817.3 118.5 L820.5 122.5 L823.7 118.5 Z" fill="#333"/></svg>
<svg class="a" style="left:838px;top:78px;" width="8" height="15" viewBox="887 110 8 15"><path d="M887.8 115.5 L891 111.5 L894.2 115.5 Z M887.8 118.5 L891 122.5 L894.2 118.5 Z" fill="#333"/></svg>
<div class="a" style="left:8px;top:97px;width:247px;height:30px;background:#e3e4e5;"></div>
<div class="a" style="left:15px;top:101px;width:52px;height:18px;border:1px solid #a5a7a9;box-sizing:border-box;"></div>
<div class="t" style="top:106.82px;font-size:5.8px;line-height:6.96px;height:6.96px;color:#d0d2d3;font-weight:700;left:41px;width:0;"><span class="c">MANUAL REC</span></div>
<div class="t" style="top:102.7px;font-size:13px;line-height:15.6px;height:15.6px;color:#74777a;left:81px;width:0;"><span class="c">M</span></div>
<div class="t" style="top:102.7px;font-size:13px;line-height:15.6px;height:15.6px;color:#74777a;left:97px;width:0;"><span class="c">S</span></div>
<svg class="a" style="left:165px;top:100px;" width="20" height="20" viewBox="214 132 20 20"><circle cx="224" cy="142" r="6.5" fill="#888"/><path d="M220 142 L228 142 M224 138 L224 146" stroke="#1f2123" stroke-width="2"/></svg>
<svg class="a" style="left:189px;top:102px;" width="30" height="16" viewBox="238 134 30 16"><path d="M243.5 141 L246 144.5 L249 139 L252 144" stroke="#888" stroke-width="0.7" fill="none"/><circle cx="243.5" cy="141" r="1.5" fill="#888"/><circle cx="246" cy="144.5" r="1.5" fill="#888"/><circle cx="249" cy="139" r="1.5" fill="#888"/><circle cx="252" cy="144" r="1.5" fill="#888"/><path d="M258.5 140.5 L264 140.5 L261.2 143.5 Z" fill="#888"/></svg>
<svg class="a" style="left:227px;top:103px;" width="14" height="14" viewBox="276 135 14 14"><path d="M278 137 L288 137 L288 147 L278 147 Z M278 140.5 L288 140.5 M278 144 L288 144 M281.5 137 L281.5 147 M285 137 L285 147" fill="none" stroke="#5b5e61" stroke-width="1"/></svg>
<div class="a" style="left:255px;top:99px;width:1183px;height:28px;background:#e6e7e8;"></div>
<div class="a" style="left:255px;top:99px;width:1183px;height:14px;background:#cfd1d2;"></div>
<div class="a" style="left:256px;top:126px;width:1181px;height:1px;background:#6f7275;"></div>
<div class="a" style="left:256px;top:127px;width:1181px;height:28px;background:#dfe0e1;"></div>
<div class="a" style="left:256px;top:155px;width:1181px;height:12px;background:#ebebec;"></div>
<div class="a" style="left:256px;top:167px;width:1181px;height:25.5px;background:#dfe0e1;"></div>
<div class="a" style="left:256px;top:192.5px;width:1181px;height:11.5px;background:#ebebec;"></div>
<div class="a" style="left:256px;top:204px;width:1181px;height:50px;background:#dfe0e1;"></div>
<div class="a" style="left:256px;top:254px;width:1181px;height:3px;background:#ebebec;"></div>
<div class="a" style="left:256px;top:257px;width:1181px;height:48px;background:#c3c6c9;"></div>
<div class="a" style="left:256px;top:305px;width:1181px;height:12px;background:#ebebec;"></div>
<div class="a" style="left:256px;top:317px;width:1181px;height:51px;background:#dfe0e1;"></div>
<div class="a" style="left:256px;top:368px;width:1181px;height:12px;background:#ebebec;"></div>
<div class="a" style="left:256px;top:380px;width:1181px;height:24px;background:#dfe0e1;"></div>
<div class="a" style="left:256px;top:404px;width:1181px;height:11.5px;background:#ebebec;"></div>
<div class="a" style="left:256px;top:415.5px;width:1181px;height:25.5px;background:#dfe0e1;"></div>
<div class="a" style="left:256px;top:441px;width:1181px;height:12px;background:#ebebec;"></div>
<div class="a" style="left:256px;top:453px;width:1181px;height:49px;background:#dfe0e1;"></div>
<div class="a" style="left:260.3px;top:127px;width:1.2px;height:375px;background:#f7f7f7;opacity:0.8;"></div>
<div class="a" style="left:260.4px;top:100px;width:1px;height:27px;background:#7a7c7e;opacity:0.8;"></div>
<div class="t" style="top:100.3px;font-size:9.5px;line-height:11.4px;height:11.4px;color:#555759;left:262.7px;">1</div>
<div class="a" style="left:272.44px;top:123px;width:1px;height:3px;background:#6f7275;opacity:0.6;"></div>
<div class="a" style="left:284.47px;top:123px;width:1px;height:3px;background:#6f7275;opacity:0.6;"></div>
<div class="a" style="left:296.51px;top:123px;width:1px;height:3px;background:#6f7275;opacity:0.6;"></div>
<div class="a" style="left:308.45px;top:127px;width:1.2px;height:375px;background:#f7f7f7;opacity:0.8;"></div>
<div class="a" style="left:308.55px;top:100px;width:1px;height:27px;background:#7a7c7e;opacity:0.8;"></div>
<div class="t" style="top:100.3px;font-size:9.5px;line-height:11.4px;height:11.4px;color:#555759;left:310.85px;">2</div>
<div class="a" style="left:320.59px;top:123px;width:1px;height:3px;background:#6f7275;opacity:0.6;"></div>
<div class="a" style="left:332.62px;top:123px;width:1px;height:3px;background:#6f7275;opacity:0.6;"></div>
<div class="a" style="left:344.66px;top:123px;width:1px;height:3px;background:#6f7275;opacity:0.6;"></div>
<div class="a" style="left:356.6px;top:127px;width:1.2px;height:375px;background:#f7f7f7;opacity:0.8;"></div>
<div class="a" style="left:356.7px;top:100px;width:1px;height:27px;background:#7a7c7e;opacity:0.8;"></div>
<div class="t" style="top:100.3px;font-size:9.5px;line-height:11.4px;height:11.4px;color:#555759;left:359px;">3</div>
<div class="a" style="left:368.74px;top:123px;width:1px;height:3px;background:#6f7275;opacity:0.6;"></div>
<div class="a" style="left:380.77px;top:123px;width:1px;height:3px;background:#6f7275;opacity:0.6;"></div>
<div class="a" style="left:392.81px;top:123px;width:1px;height:3px;background:#6f7275;opacity:0.6;"></div>
<div class="a" style="left:404.75px;top:127px;width:1.2px;height:375px;background:#f7f7f7;opacity:0.8;"></div>
<div class="a" style="left:404.85px;top:100px;width:1px;height:27px;background:#7a7c7e;opacity:0.8;"></div>
<div class="t" style="top:100.3px;font-size:9.5px;line-height:11.4px;height:11.4px;color:#555759;left:407.15px;">4</div>
<div class="a" style="left:416.89px;top:123px;width:1px;height:3px;background:#6f7275;opacity:0.6;"></div>
<div class="a" style="left:428.92px;top:123px;width:1px;height:3px;background:#6f7275;opacity:0.6;"></div>
<div class="a" style="left:440.96px;top:123px;width:1px;height:3px;background:#6f7275;opacity:0.6;"></div>
<div class="a" style="left:452.9px;top:127px;width:1.2px;height:375px;background:#f7f7f7;opacity:0.8;"></div>
<div class="a" style="left:453px;top:100px;width:1px;height:27px;background:#7a7c7e;opacity:0.8;"></div>
<div class="t" style="top:100.3px;font-size:9.5px;line-height:11.4px;height:11.4px;color:#555759;left:455.3px;">5</div>
<div class="a" style="left:465.04px;top:123px;width:1px;height:3px;background:#6f7275;opacity:0.6;"></div>
<div class="a" style="left:477.08px;top:123px;width:1px;height:3px;background:#6f7275;opacity:0.6;"></div>
<div class="a" style="left:489.11px;top:123px;width:1px;height:3px;background:#6f7275;opacity:0.6;"></div>
<div class="a" style="left:501.05px;top:127px;width:1.2px;height:375px;background:#f7f7f7;opacity:0.8;"></div>
<div class="a" style="left:501.15px;top:100px;width:1px;height:27px;background:#7a7c7e;opacity:0.8;"></div>
<div class="t" style="top:100.3px;font-size:9.5px;line-height:11.4px;height:11.4px;color:#555759;left:503.45px;">6</div>
<div class="a" style="left:513.19px;top:123px;width:1px;height:3px;background:#6f7275;opacity:0.6;"></div>
<div class="a" style="left:525.23px;top:123px;width:1px;height:3px;background:#6f7275;opacity:0.6;"></div>
<div class="a" style="left:537.26px;top:123px;width:1px;height:3px;background:#6f7275;opacity:0.6;"></div>
<div class="a" style="left:549.2px;top:127px;width:1.2px;height:375px;background:#f7f7f7;opacity:0.8;"></div>
<div class="a" style="left:549.3px;top:100px;width:1px;height:27px;background:#7a7c7e;opacity:0.8;"></div>
<div class="t" style="top:100.3px;font-size:9.5px;line-height:11.4px;height:11.4px;color:#555759;left:551.6px;">7</div>
<div class="a" style="left:561.34px;top:123px;width:1px;height:3px;background:#6f7275;opacity:0.6;"></div>
<div class="a" style="left:573.38px;top:123px;width:1px;height:3px;background:#6f7275;opacity:0.6;"></div>
<div class="a" style="left:585.41px;top:123px;width:1px;height:3px;background:#6f7275;opacity:0.6;"></div>
<div class="a" style="left:597.35px;top:127px;width:1.2px;height:375px;background:#f7f7f7;opacity:0.8;"></div>
<div class="a" style="left:597.45px;top:100px;width:1px;height:27px;background:#7a7c7e;opacity:0.8;"></div>
<div class="t" style="top:100.3px;font-size:9.5px;line-height:11.4px;height:11.4px;color:#555759;left:599.75px;">8</div>
<div class="a" style="left:609.49px;top:123px;width:1px;height:3px;background:#6f7275;opacity:0.6;"></div>
<div class="a" style="left:621.53px;top:123px;width:1px;height:3px;background:#6f7275;opacity:0.6;"></div>
<div class="a" style="left:633.56px;top:123px;width:1px;height:3px;background:#6f7275;opacity:0.6;"></div>
<div class="a" style="left:645.5px;top:127px;width:1.2px;height:375px;background:#f7f7f7;opacity:0.8;"></div>
<div class="a" style="left:645.6px;top:100px;width:1px;height:27px;background:#7a7c7e;opacity:0.8;"></div>
<div class="t" style="top:100.3px;font-size:9.5px;line-height:11.4px;height:11.4px;color:#555759;left:647.9px;">9</div>
<div class="a" style="left:657.64px;top:123px;width:1px;height:3px;background:#6f7275;opacity:0.6;"></div>
<div class="a" style="left:669.67px;top:123px;width:1px;height:3px;background:#6f7275;opacity:0.6;"></div>
<div class="a" style="left:681.71px;top:123px;width:1px;height:3px;background:#6f7275;opacity:0.6;"></div>
<div class="a" style="left:693.65px;top:127px;width:1.2px;height:375px;background:#f7f7f7;opacity:0.8;"></div>
<div class="a" style="left:693.75px;top:100px;width:1px;height:27px;background:#7a7c7e;opacity:0.8;"></div>
<div class="t" style="top:100.3px;font-size:9.5px;line-height:11.4px;height:11.4px;color:#555759;left:696.05px;">10</div>
<div class="a" style="left:705.79px;top:123px;width:1px;height:3px;background:#6f7275;opacity:0.6;"></div>
<div class="a" style="left:717.83px;top:123px;width:1px;height:3px;background:#6f7275;opacity:0.6;"></div>
<div class="a" style="left:729.86px;top:123px;width:1px;height:3px;background:#6f7275;opacity:0.6;"></div>
<div class="a" style="left:741.8px;top:127px;width:1.2px;height:375px;background:#f7f7f7;opacity:0.8;"></div>
<div class="a" style="left:741.9px;top:100px;width:1px;height:27px;background:#7a7c7e;opacity:0.8;"></div>
<div class="t" style="top:100.3px;font-size:9.5px;line-height:11.4px;height:11.4px;color:#555759;left:744.2px;">11</div>
<div class="a" style="left:753.94px;top:123px;width:1px;height:3px;background:#6f7275;opacity:0.6;"></div>
<div class="a" style="left:765.98px;top:123px;width:1px;height:3px;background:#6f7275;opacity:0.6;"></div>
<div class="a" style="left:778.01px;top:123px;width:1px;height:3px;background:#6f7275;opacity:0.6;"></div>
<div class="a" style="left:789.95px;top:127px;width:1.2px;height:375px;background:#f7f7f7;opacity:0.8;"></div>
<div class="a" style="left:790.05px;top:100px;width:1px;height:27px;background:#7a7c7e;opacity:0.8;"></div>
<div class="t" style="top:100.3px;font-size:9.5px;line-height:11.4px;height:11.4px;color:#555759;left:792.35px;">12</div>
<div class="a" style="left:802.09px;top:123px;width:1px;height:3px;background:#6f7275;opacity:0.6;"></div>
<div class="a" style="left:814.12px;top:123px;width:1px;height:3px;background:#6f7275;opacity:0.6;"></div>
<div class="a" style="left:826.16px;top:123px;width:1px;height:3px;background:#6f7275;opacity:0.6;"></div>
<div class="a" style="left:838.1px;top:127px;width:1.2px;height:375px;background:#f7f7f7;opacity:0.8;"></div>
<div class="a" style="left:838.2px;top:100px;width:1px;height:27px;background:#7a7c7e;opacity:0.8;"></div>
<div class="t" style="top:100.3px;font-size:9.5px;line-height:11.4px;height:11.4px;color:#555759;left:840.5px;">13</div>
<div class="a" style="left:850.24px;top:123px;width:1px;height:3px;background:#6f7275;opacity:0.6;"></div>
<div class="a" style="left:862.27px;top:123px;width:1px;height:3px;background:#6f7275;opacity:0.6;"></div>
<div class="a" style="left:874.31px;top:123px;width:1px;height:3px;background:#6f7275;opacity:0.6;"></div>
<div class="a" style="left:886.25px;top:127px;width:1.2px;height:375px;background:#f7f7f7;opacity:0.8;"></div>
<div class="a" style="left:886.35px;top:100px;width:1px;height:27px;background:#7a7c7e;opacity:0.8;"></div>
<div class="t" style="top:100.3px;font-size:9.5px;line-height:11.4px;height:11.4px;color:#555759;left:888.65px;">14</div>
<div class="a" style="left:898.39px;top:123px;width:1px;height:3px;background:#6f7275;opacity:0.6;"></div>
<div class="a" style="left:910.42px;top:123px;width:1px;height:3px;background:#6f7275;opacity:0.6;"></div>
<div class="a" style="left:922.46px;top:123px;width:1px;height:3px;background:#6f7275;opacity:0.6;"></div>
<div class="a" style="left:934.4px;top:127px;width:1.2px;height:375px;background:#f7f7f7;opacity:0.8;"></div>
<div class="a" style="left:934.5px;top:100px;width:1px;height:27px;background:#7a7c7e;opacity:0.8;"></div>
<div class="t" style="top:100.3px;font-size:9.5px;line-height:11.4px;height:11.4px;color:#555759;left:936.8px;">15</div>
<div class="a" style="left:946.54px;top:123px;width:1px;height:3px;background:#6f7275;opacity:0.6;"></div>
<div class="a" style="left:958.58px;top:123px;width:1px;height:3px;background:#6f7275;opacity:0.6;"></div>
<div class="a" style="left:970.61px;top:123px;width:1px;height:3px;background:#6f7275;opacity:0.6;"></div>
<div class="a" style="left:982.55px;top:127px;width:1.2px;height:375px;background:#f7f7f7;opacity:0.8;"></div>
<div class="a" style="left:982.65px;top:100px;width:1px;height:27px;background:#7a7c7e;opacity:0.8;"></div>
<div class="t" style="top:100.3px;font-size:9.5px;line-height:11.4px;height:11.4px;color:#555759;left:984.95px;">16</div>
<div class="a" style="left:994.69px;top:123px;width:1px;height:3px;background:#6f7275;opacity:0.6;"></div>
<div class="a" style="left:1006.73px;top:123px;width:1px;height:3px;background:#6f7275;opacity:0.6;"></div>
<div class="a" style="left:1018.76px;top:123px;width:1px;height:3px;background:#6f7275;opacity:0.6;"></div>
<div class="a" style="left:1030.7px;top:127px;width:1.2px;height:375px;background:#f7f7f7;opacity:0.8;"></div>
<div class="a" style="left:1030.8px;top:100px;width:1px;height:27px;background:#7a7c7e;opacity:0.8;"></div>
<div class="t" style="top:100.3px;font-size:9.5px;line-height:11.4px;height:11.4px;color:#555759;left:1033.1px;">17</div>
<div class="a" style="left:1042.84px;top:123px;width:1px;height:3px;background:#6f7275;opacity:0.6;"></div>
<div class="a" style="left:1054.88px;top:123px;width:1px;height:3px;background:#6f7275;opacity:0.6;"></div>
<div class="a" style="left:1066.91px;top:123px;width:1px;height:3px;background:#6f7275;opacity:0.6;"></div>
<div class="a" style="left:1078.85px;top:127px;width:1.2px;height:375px;background:#f7f7f7;opacity:0.8;"></div>
<div class="a" style="left:1078.95px;top:100px;width:1px;height:27px;background:#7a7c7e;opacity:0.8;"></div>
<div class="t" style="top:100.3px;font-size:9.5px;line-height:11.4px;height:11.4px;color:#555759;left:1081.25px;">18</div>
<div class="a" style="left:1090.99px;top:123px;width:1px;height:3px;background:#6f7275;opacity:0.6;"></div>
<div class="a" style="left:1103.02px;top:123px;width:1px;height:3px;background:#6f7275;opacity:0.6;"></div>
<div class="a" style="left:1115.06px;top:123px;width:1px;height:3px;background:#6f7275;opacity:0.6;"></div>
<div class="a" style="left:1127px;top:127px;width:1.2px;height:375px;background:#f7f7f7;opacity:0.8;"></div>
<div class="a" style="left:1127.1px;top:100px;width:1px;height:27px;background:#7a7c7e;opacity:0.8;"></div>
<div class="t" style="top:100.3px;font-size:9.5px;line-height:11.4px;height:11.4px;color:#555759;left:1129.4px;">19</div>
<div class="a" style="left:1139.14px;top:123px;width:1px;height:3px;background:#6f7275;opacity:0.6;"></div>
<div class="a" style="left:1151.17px;top:123px;width:1px;height:3px;background:#6f7275;opacity:0.6;"></div>
<div class="a" style="left:1163.21px;top:123px;width:1px;height:3px;background:#6f7275;opacity:0.6;"></div>
<div class="a" style="left:1175.15px;top:127px;width:1.2px;height:375px;background:#f7f7f7;opacity:0.8;"></div>
<div class="a" style="left:1175.25px;top:100px;width:1px;height:27px;background:#7a7c7e;opacity:0.8;"></div>
<div class="t" style="top:100.3px;font-size:9.5px;line-height:11.4px;height:11.4px;color:#555759;left:1177.55px;">20</div>
<div class="a" style="left:1187.29px;top:123px;width:1px;height:3px;background:#6f7275;opacity:0.6;"></div>
<div class="a" style="left:1199.33px;top:123px;width:1px;height:3px;background:#6f7275;opacity:0.6;"></div>
<div class="a" style="left:1211.36px;top:123px;width:1px;height:3px;background:#6f7275;opacity:0.6;"></div>
<div class="a" style="left:1223.3px;top:127px;width:1.2px;height:375px;background:#f7f7f7;opacity:0.8;"></div>
<div class="a" style="left:1223.4px;top:100px;width:1px;height:27px;background:#7a7c7e;opacity:0.8;"></div>
<div class="t" style="top:100.3px;font-size:9.5px;line-height:11.4px;height:11.4px;color:#555759;left:1225.7px;">21</div>
<div class="a" style="left:1235.44px;top:123px;width:1px;height:3px;background:#6f7275;opacity:0.6;"></div>
<div class="a" style="left:1247.48px;top:123px;width:1px;height:3px;background:#6f7275;opacity:0.6;"></div>
<div class="a" style="left:1259.51px;top:123px;width:1px;height:3px;background:#6f7275;opacity:0.6;"></div>
<div class="a" style="left:1271.45px;top:127px;width:1.2px;height:375px;background:#f7f7f7;opacity:0.8;"></div>
<div class="a" style="left:1271.55px;top:100px;width:1px;height:27px;background:#7a7c7e;opacity:0.8;"></div>
<div class="t" style="top:100.3px;font-size:9.5px;line-height:11.4px;height:11.4px;color:#555759;left:1273.85px;">22</div>
<div class="a" style="left:1283.59px;top:123px;width:1px;height:3px;background:#6f7275;opacity:0.6;"></div>
<div class="a" style="left:1295.62px;top:123px;width:1px;height:3px;background:#6f7275;opacity:0.6;"></div>
<div class="a" style="left:1307.66px;top:123px;width:1px;height:3px;background:#6f7275;opacity:0.6;"></div>
<div class="a" style="left:1319.6px;top:127px;width:1.2px;height:375px;background:#f7f7f7;opacity:0.8;"></div>
<div class="a" style="left:1319.7px;top:100px;width:1px;height:27px;background:#7a7c7e;opacity:0.8;"></div>
<div class="t" style="top:100.3px;font-size:9.5px;line-height:11.4px;height:11.4px;color:#555759;left:1322px;">23</div>
<div class="a" style="left:1331.74px;top:123px;width:1px;height:3px;background:#6f7275;opacity:0.6;"></div>
<div class="a" style="left:1343.77px;top:123px;width:1px;height:3px;background:#6f7275;opacity:0.6;"></div>
<div class="a" style="left:1355.81px;top:123px;width:1px;height:3px;background:#6f7275;opacity:0.6;"></div>
<div class="a" style="left:1367.75px;top:127px;width:1.2px;height:375px;background:#f7f7f7;opacity:0.8;"></div>
<div class="a" style="left:1367.85px;top:100px;width:1px;height:27px;background:#7a7c7e;opacity:0.8;"></div>
<div class="t" style="top:100.3px;font-size:9.5px;line-height:11.4px;height:11.4px;color:#555759;left:1370.15px;">24</div>
<div class="a" style="left:1379.89px;top:123px;width:1px;height:3px;background:#6f7275;opacity:0.6;"></div>
<div class="a" style="left:1391.92px;top:123px;width:1px;height:3px;background:#6f7275;opacity:0.6;"></div>
<div class="a" style="left:1403.96px;top:123px;width:1px;height:3px;background:#6f7275;opacity:0.6;"></div>
<div class="a" style="left:1415.9px;top:127px;width:1.2px;height:375px;background:#f7f7f7;opacity:0.8;"></div>
<div class="a" style="left:1416px;top:100px;width:1px;height:27px;background:#7a7c7e;opacity:0.8;"></div>
<div class="t" style="top:100.3px;font-size:9.5px;line-height:11.4px;height:11.4px;color:#555759;left:1418.3px;">25</div>
<div class="a" style="left:1428.04px;top:123px;width:1px;height:3px;background:#6f7275;opacity:0.6;"></div>
<div class="a" style="left:1440.08px;top:123px;width:1px;height:3px;background:#6f7275;opacity:0.6;"></div>
<div class="a" style="left:1452.11px;top:123px;width:1px;height:3px;background:#6f7275;opacity:0.6;"></div>
<div class="t" style="top:111px;font-size:7.5px;line-height:9px;height:9px;color:#666;left:264px;">4/4</div>
<div class="a" style="left:657.64px;top:113px;width:1.2px;height:389px;background:#fff;opacity:0.85;"></div>
<div class="a" style="left:1042.84px;top:113px;width:1.2px;height:389px;background:#fff;opacity:0.85;"></div>
<svg class="a" style="left:651.14px;top:112px;" width="20" height="14" viewBox="700.14 144 20 14"><path d="M707.1375 146.5 L712.1375 146.5 L716.1375 151 L712.1375 155.5 L707.1375 155.5 Z" fill="#444"/></svg>
<svg class="a" style="left:1030.34px;top:112px;" width="20" height="14" viewBox="1079.34 144 20 14"><path d="M1093.3375 146.5 L1088.3375 146.5 L1084.3375 151 L1088.3375 155.5 L1093.3375 155.5 Z" fill="#444"/></svg>
<svg class="a" style="left:256px;top:112px;" width="15" height="14" viewBox="305 144 15 14"><path d="M306 148 L316 148 L316 152 L311 156 L306 152 Z" fill="#444"/></svg>
<div class="a" style="left:1425.5px;top:132px;width:7.5px;height:304px;background:#85888b;border-radius:4px;opacity:0.85;"></div>
<div class="a" style="left:255px;top:98.5px;width:1183px;height:1px;background:#2a2b2c;"></div>
<div class="a" style="left:658.14px;top:169.5px;width:385.2px;height:20.5px;background:#e2612a;box-sizing:border-box;border:1px solid #2b2b2b;"></div>
<div class="a" style="left:850.74px;top:169.5px;width:1px;height:20.5px;background:#2b2b2b;"></div>
<div class="a" style="left:659.14px;top:185px;width:383.2px;height:1.3px;background:#b8430f;"></div>
<svg class="a" style="left:658.14px;top:169.5px;" width="385.2" height="20.5" viewBox="707.14 201.5 385.2 20.5"><rect x="710.1" y="205.5" width="4.9" height="1" fill="#d85a22"/><rect x="717.7" y="206.8" width="3.5" height="1" fill="#d85a22"/><rect x="723.4" y="211.2" width="4.7" height="1" fill="#d85a22"/><rect x="727.0" y="204.3" width="4.8" height="1" fill="#d85a22"/><rect x="732.6" y="212.4" width="1.5" height="1" fill="#d85a22"/><rect x="738.2" y="211.9" width="2.4" height="1" fill="#d85a22"/><rect x="746.9" y="213.9" width="1.6" height="1" fill="#d85a22"/><rect x="750.1" y="210.0" width="5.3" height="1" fill="#d85a22"/><rect x="755.4" y="206.4" width="3.2" height="1" fill="#d85a22"/><rect x="758.5" y="206.4" width="3.3" height="1" fill="#d85a22"/><rect x="764.5" y="206.6" width="2.4" height="1" fill="#d85a22"/><rect x="768.8" y="209.1" width="2.7" height="1" fill="#d85a22"/><rect x="772.0" y="213.2" width="3.7" height="1" fill="#d85a22"/><rect x="778.8" y="206.0" width="5.5" height="1" fill="#d85a22"/><rect x="787.0" y="205.3" width="2.8" height="1" fill="#d85a22"/><rect x="794.3" y="211.8" width="5.2" height="1" fill="#d85a22"/><rect x="799.8" y="213.1" width="4.2" height="1" fill="#d85a22"/><rect x="804.6" y="210.5" width="5.0" height="1" fill="#d85a22"/><rect x="812.7" y="209.6" width="3.9" height="1" fill="#d85a22"/><rect x="815.9" y="206.7" width="4.7" height="1" fill="#d85a22"/><rect x="821.4" y="205.9" width="3.7" height="1" fill="#d85a22"/><rect x="828.6" y="211.4" width="3.0" height="1" fill="#d85a22"/><rect x="834.3" y="209.6" width="4.6" height="1" fill="#d85a22"/><rect x="840.4" y="208.3" width="3.5" height="1" fill="#d85a22"/><rect x="843.6" y="204.5" width="4.3" height="1" fill="#d85a22"/><rect x="852.5" y="210.5" width="3.1" height="1" fill="#d85a22"/><rect x="856.5" y="209.5" width="5.4" height="1" fill="#d85a22"/><rect x="864.1" y="209.9" width="4.9" height="1" fill="#d85a22"/><rect x="868.5" y="209.7" width="5.3" height="1" fill="#d85a22"/><rect x="875.0" y="209.1" width="2.6" height="1" fill="#d85a22"/><rect x="881.3" y="214.5" width="1.5" height="1" fill="#d85a22"/><rect x="889.0" y="213.0" width="5.0" height="1" fill="#d85a22"/><rect x="896.4" y="212.9" width="3.6" height="1" fill="#d85a22"/><rect x="902.8" y="208.7" width="1.7" height="1" fill="#d85a22"/><rect x="911.0" y="210.3" width="2.3" height="1" fill="#d85a22"/><rect x="917.0" y="209.3" width="2.9" height="1" fill="#d85a22"/><rect x="922.1" y="209.9" width="4.0" height="1" fill="#d85a22"/><rect x="928.8" y="209.0" width="1.6" height="1" fill="#d85a22"/><rect x="933.2" y="205.9" width="3.8" height="1" fill="#d85a22"/><rect x="941.3" y="212.8" width="4.7" height="1" fill="#d85a22"/><rect x="949.2" y="206.8" width="4.9" height="1" fill="#d85a22"/><rect x="956.3" y="204.9" width="1.6" height="1" fill="#d85a22"/><rect x="959.3" y="212.3" width="2.5" height="1" fill="#d85a22"/><rect x="963.0" y="210.9" width="2.9" height="1" fill="#d85a22"/><rect x="966.4" y="205.8" width="3.6" height="1" fill="#d85a22"/><rect x="970.4" y="207.0" width="4.3" height="1" fill="#d85a22"/><rect x="976.2" y="207.5" width="3.4" height="1" fill="#d85a22"/><rect x="979.3" y="208.3" width="3.2" height="1" fill="#d85a22"/><rect x="983.4" y="205.2" width="5.1" height="1" fill="#d85a22"/><rect x="989.5" y="206.3" width="3.9" height="1" fill="#d85a22"/><rect x="997.4" y="204.2" width="1.6" height="1" fill="#d85a22"/><rect x="1001.3" y="211.9" width="2.1" height="1" fill="#d85a22"/><rect x="1008.5" y="211.5" width="3.7" height="1" fill="#d85a22"/><rect x="1012.8" y="214.7" width="4.7" height="1" fill="#d85a22"/><rect x="1018.9" y="206.5" width="4.1" height="1" fill="#d85a22"/><rect x="1024.3" y="210.3" width="2.8" height="1" fill="#d85a22"/><rect x="1031.1" y="204.6" width="2.7" height="1" fill="#d85a22"/><rect x="1039.9" y="213.6" width="2.7" height="1" fill="#d85a22"/><rect x="1048.0" y="207.4" width="5.3" height="1" fill="#d85a22"/><rect x="1055.5" y="208.6" width="2.5" height="1" fill="#d85a22"/><rect x="1058.5" y="213.7" width="1.7" height="1" fill="#d85a22"/><rect x="1066.5" y="214.6" width="3.8" height="1" fill="#d85a22"/><rect x="1070.5" y="213.5" width="5.4" height="1" fill="#d85a22"/><rect x="1077.7" y="209.6" width="3.0" height="1" fill="#d85a22"/><rect x="1082.8" y="206.3" width="4.2" height="1" fill="#d85a22"/><rect x="1088.4" y="206.1" width="1.9" height="1" fill="#d85a22"/></svg>
<div class="a" style="left:260.9px;top:206.5px;width:12.2px;height:20px;background:#e2612a;box-sizing:border-box;border:1px solid #2b2b2b;"></div>
<svg class="a" style="left:260.9px;top:206.5px;" width="12" height="20" viewBox="309.9 238.5 12 20"><rect x="312.9" y="252" width="6" height="1.5" fill="#9a3a12"/></svg>
<div class="a" style="left:838.7px;top:206.5px;width:12.2px;height:20px;background:#e2612a;box-sizing:border-box;border:1px solid #2b2b2b;"></div>
<svg class="a" style="left:838.7px;top:206.5px;" width="12" height="20" viewBox="887.7 238.5 12 20"><rect x="890.6999999999999" y="252" width="6" height="1.5" fill="#9a3a12"/></svg>
<div class="a" style="left:1031.3px;top:206.5px;width:12.2px;height:20px;background:#e2612a;box-sizing:border-box;border:1px solid #2b2b2b;"></div>
<svg class="a" style="left:1031.3px;top:206.5px;" width="12" height="20" viewBox="1080.3 238.5 12 20"><rect x="1083.3" y="252" width="6" height="1.5" fill="#9a3a12"/></svg>
<div class="a" style="left:1079.45px;top:206.5px;width:12.2px;height:20px;background:#e2612a;box-sizing:border-box;border:1px solid #2b2b2b;"></div>
<svg class="a" style="left:1079.45px;top:206.5px;" width="12" height="20" viewBox="1128.45 238.5 12 20"><rect x="1131.4499999999998" y="252" width="6" height="1.5" fill="#9a3a12"/></svg>
<div class="a" style="left:272.94px;top:231.5px;width:794.47px;height:20px;background:#e2612a;box-sizing:border-box;border:1px solid #2b2b2b;"></div>
<div class="a" style="left:465.54px;top:231.5px;width:1px;height:20px;background:#2b2b2b;"></div>
<div class="a" style="left:658.14px;top:231.5px;width:1px;height:20px;background:#2b2b2b;"></div>
<div class="a" style="left:850.74px;top:231.5px;width:1px;height:20px;background:#2b2b2b;"></div>
<svg class="a" style="left:272.94px;top:231.5px;" width="794.47" height="20" viewBox="321.94 263.5 794.47 20"><rect x="324.9" y="278.4" width="5.3" height="1" fill="#cc5520"/><rect x="328.3" y="267.1" width="4.8" height="1" fill="#cc5520"/><rect x="335.7" y="274.7" width="2.7" height="1" fill="#cc5520"/><rect x="342.3" y="273.9" width="3.8" height="1" fill="#cc5520"/><rect x="346.3" y="271.6" width="3.1" height="1" fill="#cc5520"/><rect x="353.6" y="278.9" width="5.3" height="1" fill="#cc5520"/><rect x="359.9" y="271.8" width="2.6" height="1" fill="#cc5520"/><rect x="363.1" y="266.4" width="3.4" height="1" fill="#cc5520"/><rect x="368.0" y="270.9" width="5.1" height="1" fill="#cc5520"/><rect x="374.2" y="273.3" width="2.4" height="1" fill="#cc5520"/><rect x="377.3" y="270.2" width="2.0" height="1" fill="#cc5520"/><rect x="383.4" y="279.0" width="4.2" height="1" fill="#cc5520"/><rect x="387.5" y="277.6" width="4.7" height="1" fill="#cc5520"/><rect x="394.9" y="277.8" width="4.6" height="1" fill="#cc5520"/><rect x="402.6" y="270.6" width="5.4" height="1" fill="#cc5520"/><rect x="411.4" y="268.1" width="4.5" height="1" fill="#cc5520"/><rect x="418.7" y="272.0" width="3.6" height="1" fill="#cc5520"/><rect x="424.6" y="278.0" width="3.5" height="1" fill="#cc5520"/><rect x="432.6" y="270.6" width="5.0" height="1" fill="#cc5520"/><rect x="441.0" y="272.0" width="3.8" height="1" fill="#cc5520"/><rect x="449.5" y="275.4" width="3.4" height="1" fill="#cc5520"/><rect x="453.8" y="270.2" width="4.3" height="1" fill="#cc5520"/><rect x="457.8" y="277.8" width="2.6" height="1" fill="#cc5520"/><rect x="466.3" y="270.0" width="5.3" height="1" fill="#cc5520"/><rect x="473.5" y="272.6" width="3.6" height="1" fill="#cc5520"/><rect x="480.5" y="273.6" width="2.7" height="1" fill="#cc5520"/><rect x="484.7" y="272.7" width="5.2" height="1" fill="#cc5520"/><rect x="491.4" y="267.0" width="4.8" height="1" fill="#cc5520"/><rect x="498.8" y="277.8" width="2.3" height="1" fill="#cc5520"/><rect x="506.3" y="266.8" width="4.1" height="1" fill="#cc5520"/><rect x="510.9" y="268.9" width="5.0" height="1" fill="#cc5520"/><rect x="514.5" y="272.8" width="4.9" height="1" fill="#cc5520"/><rect x="519.0" y="268.7" width="5.0" height="1" fill="#cc5520"/><rect x="524.5" y="275.3" width="1.6" height="1" fill="#cc5520"/><rect x="529.7" y="268.2" width="4.2" height="1" fill="#cc5520"/><rect x="533.2" y="278.4" width="1.6" height="1" fill="#cc5520"/><rect x="540.6" y="266.3" width="2.5" height="1" fill="#cc5520"/><rect x="548.5" y="268.0" width="2.2" height="1" fill="#cc5520"/><rect x="555.6" y="271.0" width="1.7" height="1" fill="#cc5520"/><rect x="564.6" y="268.0" width="1.6" height="1" fill="#cc5520"/><rect x="569.6" y="274.0" width="4.5" height="1" fill="#cc5520"/><rect x="573.3" y="270.4" width="1.6" height="1" fill="#cc5520"/><rect x="579.0" y="276.0" width="4.5" height="1" fill="#cc5520"/><rect x="587.4" y="275.8" width="4.9" height="1" fill="#cc5520"/><rect x="594.6" y="272.1" width="2.4" height="1" fill="#cc5520"/><rect x="601.6" y="270.1" width="1.9" height="1" fill="#cc5520"/><rect x="607.3" y="277.4" width="2.0" height="1" fill="#cc5520"/><rect x="613.8" y="271.1" width="3.6" height="1" fill="#cc5520"/><rect x="617.7" y="278.5" width="2.5" height="1" fill="#cc5520"/><rect x="624.3" y="271.5" width="1.6" height="1" fill="#cc5520"/><rect x="630.7" y="267.8" width="1.7" height="1" fill="#cc5520"/><rect x="633.9" y="268.1" width="1.9" height="1" fill="#cc5520"/><rect x="640.7" y="272.6" width="5.4" height="1" fill="#cc5520"/><rect x="649.3" y="278.9" width="2.4" height="1" fill="#cc5520"/><rect x="654.9" y="269.3" width="3.9" height="1" fill="#cc5520"/><rect x="661.7" y="276.4" width="4.3" height="1" fill="#cc5520"/><rect x="666.2" y="271.5" width="3.6" height="1" fill="#cc5520"/><rect x="669.3" y="266.5" width="3.1" height="1" fill="#cc5520"/><rect x="672.9" y="275.4" width="2.5" height="1" fill="#cc5520"/><rect x="676.5" y="268.4" width="2.4" height="1" fill="#cc5520"/><rect x="680.8" y="272.8" width="3.4" height="1" fill="#cc5520"/><rect x="685.7" y="274.3" width="2.3" height="1" fill="#cc5520"/><rect x="694.1" y="278.5" width="4.4" height="1" fill="#cc5520"/><rect x="699.7" y="272.6" width="3.8" height="1" fill="#cc5520"/><rect x="703.0" y="271.4" width="3.6" height="1" fill="#cc5520"/><rect x="707.1" y="267.2" width="4.7" height="1" fill="#cc5520"/><rect x="712.3" y="272.7" width="5.2" height="1" fill="#cc5520"/><rect x="719.0" y="269.8" width="5.4" height="1" fill="#cc5520"/><rect x="724.2" y="266.2" width="4.2" height="1" fill="#cc5520"/><rect x="727.8" y="270.0" width="4.9" height="1" fill="#cc5520"/><rect x="734.9" y="266.2" width="3.3" height="1" fill="#cc5520"/><rect x="740.3" y="272.3" width="2.3" height="1" fill="#cc5520"/><rect x="746.9" y="267.0" width="2.6" height="1" fill="#cc5520"/><rect x="752.1" y="278.2" width="1.8" height="1" fill="#cc5520"/><rect x="759.6" y="268.5" width="3.8" height="1" fill="#cc5520"/><rect x="765.0" y="272.0" width="4.5" height="1" fill="#cc5520"/><rect x="770.3" y="267.6" width="2.0" height="1" fill="#cc5520"/><rect x="773.8" y="277.1" width="4.1" height="1" fill="#cc5520"/><rect x="782.6" y="275.0" width="1.6" height="1" fill="#cc5520"/><rect x="789.5" y="276.1" width="4.4" height="1" fill="#cc5520"/><rect x="795.5" y="270.6" width="3.3" height="1" fill="#cc5520"/><rect x="803.3" y="269.5" width="3.6" height="1" fill="#cc5520"/><rect x="809.2" y="278.4" width="4.7" height="1" fill="#cc5520"/><rect x="817.8" y="276.9" width="2.7" height="1" fill="#cc5520"/><rect x="822.2" y="272.4" width="2.5" height="1" fill="#cc5520"/><rect x="827.7" y="274.8" width="5.2" height="1" fill="#cc5520"/><rect x="834.2" y="276.6" width="1.9" height="1" fill="#cc5520"/><rect x="839.4" y="279.0" width="2.1" height="1" fill="#cc5520"/><rect x="844.9" y="266.9" width="1.8" height="1" fill="#cc5520"/><rect x="853.3" y="278.9" width="4.1" height="1" fill="#cc5520"/><rect x="857.0" y="269.9" width="2.4" height="1" fill="#cc5520"/><rect x="864.0" y="274.9" width="3.3" height="1" fill="#cc5520"/><rect x="870.2" y="267.5" width="3.7" height="1" fill="#cc5520"/><rect x="878.9" y="275.8" width="1.9" height="1" fill="#cc5520"/><rect x="885.0" y="275.3" width="2.5" height="1" fill="#cc5520"/><rect x="893.4" y="272.0" width="4.3" height="1" fill="#cc5520"/><rect x="898.8" y="278.9" width="4.6" height="1" fill="#cc5520"/><rect x="905.2" y="267.9" width="3.3" height="1" fill="#cc5520"/><rect x="908.4" y="273.7" width="5.0" height="1" fill="#cc5520"/><rect x="912.5" y="272.6" width="3.4" height="1" fill="#cc5520"/><rect x="917.9" y="275.2" width="5.2" height="1" fill="#cc5520"/><rect x="925.1" y="272.1" width="5.3" height="1" fill="#cc5520"/><rect x="930.1" y="275.7" width="4.1" height="1" fill="#cc5520"/><rect x="937.7" y="277.1" width="2.4" height="1" fill="#cc5520"/><rect x="944.4" y="271.2" width="4.2" height="1" fill="#cc5520"/><rect x="953.3" y="274.3" width="1.5" height="1" fill="#cc5520"/><rect x="959.1" y="275.3" width="5.0" height="1" fill="#cc5520"/><rect x="966.0" y="276.6" width="1.6" height="1" fill="#cc5520"/><rect x="974.6" y="275.5" width="3.9" height="1" fill="#cc5520"/><rect x="983.1" y="277.5" width="1.9" height="1" fill="#cc5520"/><rect x="991.0" y="276.0" width="2.3" height="1" fill="#cc5520"/><rect x="998.4" y="273.6" width="2.3" height="1" fill="#cc5520"/><rect x="1006.3" y="267.8" width="3.9" height="1" fill="#cc5520"/><rect x="1011.9" y="269.3" width="3.8" height="1" fill="#cc5520"/><rect x="1017.7" y="268.7" width="5.4" height="1" fill="#cc5520"/><rect x="1021.1" y="266.0" width="3.4" height="1" fill="#cc5520"/><rect x="1029.1" y="274.6" width="4.5" height="1" fill="#cc5520"/><rect x="1035.0" y="274.8" width="2.8" height="1" fill="#cc5520"/><rect x="1039.6" y="272.5" width="1.6" height="1" fill="#cc5520"/><rect x="1043.1" y="275.8" width="2.2" height="1" fill="#cc5520"/><rect x="1050.6" y="276.2" width="3.1" height="1" fill="#cc5520"/><rect x="1057.7" y="276.2" width="5.0" height="1" fill="#cc5520"/><rect x="1061.5" y="268.1" width="3.0" height="1" fill="#cc5520"/><rect x="1067.3" y="269.8" width="1.5" height="1" fill="#cc5520"/><rect x="1073.6" y="278.6" width="3.0" height="1" fill="#cc5520"/><rect x="1079.8" y="271.0" width="3.3" height="1" fill="#cc5520"/><rect x="1088.1" y="270.0" width="4.1" height="1" fill="#cc5520"/></svg>
<svg class="a" style="left:1043.34px;top:231.5px;" width="24.07" height="20" viewBox="1092.34 263.5 24.07 20"><path d="M1074.3375 283 L1092.3375 264" stroke="#b5481a" stroke-width="2"/><path d="M1080.3375 283 L1098.3375 264" stroke="#b5481a" stroke-width="2"/><path d="M1086.3375 283 L1104.3375 264" stroke="#b5481a" stroke-width="2"/><path d="M1092.3375 283 L1110.3375 264" stroke="#b5481a" stroke-width="2"/><path d="M1098.3375 283 L1116.3375 264" stroke="#b5481a" stroke-width="2"/><path d="M1104.3375 283 L1122.3375 264" stroke="#b5481a" stroke-width="2"/><path d="M1110.3375 283 L1128.3375 264" stroke="#b5481a" stroke-width="2"/><path d="M1116.3375 283 L1134.3375 264" stroke="#b5481a" stroke-width="2"/></svg>
<div class="a" style="left:1091.49px;top:231.5px;width:334.51px;height:20px;background:#e2612a;box-sizing:border-box;border:1px solid #2b2b2b;"></div>
<div class="a" style="left:1235.94px;top:231.5px;width:1px;height:20px;background:#2b2b2b;"></div>
<svg class="a" style="left:1091.49px;top:231.5px;" width="334.51" height="20" viewBox="1140.49 263.5 334.51 20"><rect x="1143.5" y="269.1" width="3.7" height="1" fill="#cc5520"/><rect x="1148.7" y="273.9" width="4.0" height="1" fill="#cc5520"/><rect x="1152.1" y="266.2" width="4.8" height="1" fill="#cc5520"/><rect x="1156.7" y="269.0" width="5.5" height="1" fill="#cc5520"/><rect x="1162.5" y="276.9" width="3.4" height="1" fill="#cc5520"/><rect x="1169.3" y="268.0" width="4.0" height="1" fill="#cc5520"/><rect x="1177.5" y="272.8" width="4.5" height="1" fill="#cc5520"/><rect x="1184.5" y="266.8" width="4.5" height="1" fill="#cc5520"/><rect x="1191.1" y="269.9" width="1.6" height="1" fill="#cc5520"/><rect x="1199.3" y="272.1" width="4.4" height="1" fill="#cc5520"/><rect x="1207.6" y="275.3" width="5.2" height="1" fill="#cc5520"/><rect x="1212.9" y="276.4" width="3.3" height="1" fill="#cc5520"/><rect x="1221.5" y="277.4" width="1.9" height="1" fill="#cc5520"/><rect x="1225.4" y="268.8" width="5.4" height="1" fill="#cc5520"/><rect x="1231.0" y="274.1" width="2.7" height="1" fill="#cc5520"/><rect x="1237.0" y="271.0" width="2.9" height="1" fill="#cc5520"/><rect x="1243.5" y="273.6" width="5.1" height="1" fill="#cc5520"/><rect x="1250.6" y="278.1" width="4.9" height="1" fill="#cc5520"/><rect x="1259.6" y="274.7" width="2.2" height="1" fill="#cc5520"/><rect x="1267.7" y="278.5" width="5.1" height="1" fill="#cc5520"/><rect x="1274.1" y="275.3" width="2.3" height="1" fill="#cc5520"/><rect x="1282.1" y="273.5" width="2.6" height="1" fill="#cc5520"/><rect x="1285.5" y="277.1" width="5.5" height="1" fill="#cc5520"/><rect x="1289.0" y="276.4" width="3.1" height="1" fill="#cc5520"/><rect x="1293.0" y="269.8" width="4.6" height="1" fill="#cc5520"/><rect x="1301.2" y="266.6" width="4.0" height="1" fill="#cc5520"/><rect x="1304.5" y="275.3" width="2.8" height="1" fill="#cc5520"/><rect x="1312.7" y="278.7" width="3.5" height="1" fill="#cc5520"/><rect x="1321.7" y="270.0" width="1.8" height="1" fill="#cc5520"/><rect x="1328.3" y="266.4" width="2.3" height="1" fill="#cc5520"/><rect x="1333.8" y="273.9" width="2.1" height="1" fill="#cc5520"/><rect x="1337.0" y="277.3" width="2.8" height="1" fill="#cc5520"/><rect x="1345.8" y="277.7" width="3.0" height="1" fill="#cc5520"/><rect x="1351.6" y="272.8" width="4.1" height="1" fill="#cc5520"/><rect x="1358.1" y="273.3" width="4.0" height="1" fill="#cc5520"/><rect x="1366.8" y="272.6" width="3.2" height="1" fill="#cc5520"/><rect x="1374.1" y="269.1" width="2.7" height="1" fill="#cc5520"/><rect x="1383.0" y="272.8" width="3.7" height="1" fill="#cc5520"/><rect x="1386.0" y="271.4" width="3.8" height="1" fill="#cc5520"/><rect x="1389.1" y="274.0" width="4.0" height="1" fill="#cc5520"/><rect x="1392.5" y="274.2" width="3.4" height="1" fill="#cc5520"/><rect x="1399.6" y="270.6" width="4.3" height="1" fill="#cc5520"/><rect x="1407.0" y="266.3" width="1.7" height="1" fill="#cc5520"/><rect x="1414.1" y="278.5" width="2.5" height="1" fill="#cc5520"/><rect x="1419.8" y="273.7" width="2.8" height="1" fill="#cc5520"/><rect x="1425.0" y="270.1" width="3.0" height="1" fill="#cc5520"/><rect x="1431.6" y="269.9" width="3.0" height="1" fill="#cc5520"/><rect x="1439.2" y="266.3" width="3.8" height="1" fill="#cc5520"/><rect x="1446.6" y="270.0" width="2.4" height="1" fill="#cc5520"/><rect x="1454.4" y="269.1" width="2.2" height="1" fill="#cc5520"/><rect x="1460.0" y="275.1" width="1.9" height="1" fill="#cc5520"/><rect x="1465.0" y="270.3" width="4.8" height="1" fill="#cc5520"/><rect x="1470.6" y="277.1" width="2.2" height="1" fill="#cc5520"/></svg>
<div class="a" style="left:272.94px;top:320px;width:1153.06px;height:19.5px;background:#f5c332;box-sizing:border-box;border:1px solid #2b2b2b;"></div>
<div class="a" style="left:465.54px;top:320px;width:1px;height:19.5px;background:#2b2b2b;"></div>
<div class="a" style="left:658.14px;top:320px;width:1px;height:19.5px;background:#2b2b2b;"></div>
<div class="a" style="left:850.74px;top:320px;width:1px;height:19.5px;background:#2b2b2b;"></div>
<div class="a" style="left:1043.34px;top:320px;width:1px;height:19.5px;background:#2b2b2b;"></div>
<div class="a" style="left:1235.94px;top:320px;width:1px;height:19.5px;background:#2b2b2b;"></div>
<svg class="a" style="left:272.94px;top:320px;" width="1153.06" height="19.5" viewBox="321.94 352 1153.06 19.5"><path d="M324.9375 361.5 L1472 361.5" stroke="#7a5c10" stroke-width="1" stroke-dasharray="3 2"/><path d="M324.9375 362 L351.9375 362 Q361.9375 364 365.9375 367 L366.9375 367 L367.9375 360 L400.0875 362 Q410.0875 364 414.0875 367 L415.0875 367 L416.0875 360 L448.23749999999995 362 Q458.23749999999995 364 462.23749999999995 367 L463.23749999999995 367 L464.23749999999995 360 L496.38749999999993 362 Q506.38749999999993 364 510.38749999999993 367 L511.38749999999993 367 L512.3874999999999 360 L544.5374999999999 362 Q554.5374999999999 364 558.5374999999999 367 L559.5374999999999 367 L560.5374999999999 360 L592.6874999999999 362 Q602.6874999999999 364 606.6874999999999 367 L607.6874999999999 367 L608.6874999999999 360 L640.8374999999999 362 Q650.8374999999999 364 654.8374999999999 367 L655.8374999999999 367 L656.8374999999999 360 L688.9874999999998 362 Q698.9874999999998 364 702.9874999999998 367 L703.9874999999998 367 L704.9874999999998 360 L737.1374999999998 362 Q747.1374999999998 364 751.1374999999998 367 L752.1374999999998 367 L753.1374999999998 360 L785.2874999999998 362 Q795.2874999999998 364 799.2874999999998 367 L800.2874999999998 367 L801.2874999999998 360 L833.4374999999998 362 Q843.4374999999998 364 847.4374999999998 367 L848.4374999999998 367 L849.4374999999998 360 L881.5874999999997 362 Q891.5874999999997 364 895.5874999999997 367 L896.5874999999997 367 L897.5874999999997 360 L929.7374999999997 362 Q939.7374999999997 364 943.7374999999997 367 L944.7374999999997 367 L945.7374999999997 360 L977.8874999999997 362 Q987.8874999999997 364 991.8874999999997 367 L992.8874999999997 367 L993.8874999999997 360 L1026.0374999999997 362 Q1036.0374999999997 364 1040.0374999999997 367 L1041.0374999999997 367 L1042.0374999999997 360 L1074.1874999999998 362 Q1084.1874999999998 364 1088.1874999999998 367 L1089.1874999999998 367 L1090.1874999999998 360 L1122.3374999999999 362 Q1132.3374999999999 364 1136.3374999999999 367 L1137.3374999999999 367 L1138.3374999999999 360 L1170.4875 362 Q1180.4875 364 1184.4875 367 L1185.4875 367 L1186.4875 360 L1218.6375 362 Q1228.6375 364 1232.6375 367 L1233.6375 367 L1234.6375 360 L1266.7875000000001 362 Q1276.7875000000001 364 1280.7875000000001 367 L1281.7875000000001 367 L1282.7875000000001 360 L1314.9375000000002 362 Q1324.9375000000002 364 1328.9375000000002 367 L1329.9375000000002 367 L1330.9375000000002 360 L1363.0875000000003 362 Q1373.0875000000003 364 1377.0875000000003 367 L1378.0875000000003 367 L1379.0875000000003 360 L1411.2375000000004 362 Q1421.2375000000004 364 1425.2375000000004 367 L1426.2375000000004 367 L1427.2375000000004 360 L1459.3875000000005 362 Q1469.3875000000005 364 1473.3875000000005 367 L1474.3875000000005 367 L1475.3875000000005 360" fill="none" stroke="#5d4510" stroke-width="1"/></svg>
<div class="a" style="left:321.09px;top:345px;width:144.45px;height:19.5px;background:#f5c332;box-sizing:border-box;border:1px solid #2b2b2b;"></div>
<div class="a" style="left:417.39px;top:345px;width:1px;height:19.5px;background:#2b2b2b;"></div>
<svg class="a" style="left:321.09px;top:345px;" width="144.45" height="19.5" viewBox="370.09 377 144.45 19.5"><path d="M372.0875 391 L408.0875 391 L420.0875 382 L423.0875 391 L464.38749999999993 391" fill="none" stroke="#5d4510" stroke-width="1.1"/><path d="M468.38749999999993 391 L493.38749999999993 391 Q502.38749999999993 383 512.5374999999999 382" fill="none" stroke="#5d4510" stroke-width="1.1"/></svg>
<div class="a" style="left:513.69px;top:345px;width:144.45px;height:19.5px;background:#f5c332;box-sizing:border-box;border:1px solid #2b2b2b;"></div>
<div class="a" style="left:609.99px;top:345px;width:1px;height:19.5px;background:#2b2b2b;"></div>
<svg class="a" style="left:513.69px;top:345px;" width="144.45" height="19.5" viewBox="562.69 377 144.45 19.5"><path d="M564.6875 391 L600.6875 391 L612.6875 382 L615.6875 391 L656.9875 391" fill="none" stroke="#5d4510" stroke-width="1.1"/><path d="M660.9875 391 L685.9875 391 Q694.9875 383 705.1375 382" fill="none" stroke="#5d4510" stroke-width="1.1"/></svg>
<div class="a" style="left:1091.49px;top:345px;width:144.45px;height:19.5px;background:#f5c332;box-sizing:border-box;border:1px solid #2b2b2b;"></div>
<div class="a" style="left:1187.79px;top:345px;width:1px;height:19.5px;background:#2b2b2b;"></div>
<svg class="a" style="left:1091.49px;top:345px;" width="144.45" height="19.5" viewBox="1140.49 377 144.45 19.5"><path d="M1142.4875 391 L1178.4875 391 L1190.4875 382 L1193.4875 391 L1234.7875 391" fill="none" stroke="#5d4510" stroke-width="1.1"/><path d="M1238.7875 391 L1263.7875 391 Q1272.7875 383 1282.9375 382" fill="none" stroke="#5d4510" stroke-width="1.1"/></svg>
<div class="a" style="left:1284.09px;top:345px;width:141.91px;height:19.5px;background:#f5c332;box-sizing:border-box;border:1px solid #2b2b2b;"></div>
<div class="a" style="left:1380.39px;top:345px;width:1px;height:19.5px;background:#2b2b2b;"></div>
<svg class="a" style="left:1284.09px;top:345px;" width="141.91" height="19.5" viewBox="1333.09 377 141.91 19.5"><path d="M1335.0875 391 L1371.0875 391 L1383.0875 382 L1386.0875 391 L1427.3874999999998 391" fill="none" stroke="#5d4510" stroke-width="1.1"/><path d="M1431.3874999999998 391 L1456.3874999999998 391 Q1465.3874999999998 383 1473 382" fill="none" stroke="#5d4510" stroke-width="1.1"/></svg>
<div class="a" style="left:272.94px;top:381.5px;width:1153.06px;height:19px;background:#adc9e6;box-sizing:border-box;border:1px solid #2b2b2b;"></div>
<div class="a" style="left:465.54px;top:381.5px;width:1px;height:19px;background:#2b2b2b;"></div>
<div class="a" style="left:658.14px;top:381.5px;width:1px;height:19px;background:#2b2b2b;"></div>
<div class="a" style="left:850.74px;top:381.5px;width:1px;height:19px;background:#2b2b2b;"></div>
<div class="a" style="left:1043.34px;top:381.5px;width:1px;height:19px;background:#2b2b2b;"></div>
<div class="a" style="left:1235.94px;top:381.5px;width:1px;height:19px;background:#2b2b2b;"></div>
<svg class="a" style="left:272.94px;top:381.5px;" width="1153.06" height="19" viewBox="321.94 413.5 1153.06 19"><rect x="322.9375" y="422" width="1151.0625" height="2" fill="#2e3f52"/><path d="M323.9375 428 L335.9375 427 Q338.9375 420 341.9375 421 L345.9375 425 Q351.9375 430 359.9375 428 L369.9375 427 L432.2375 427 Q435.2375 420 438.2375 421 L442.2375 425 Q448.2375 430 456.2375 428 L466.2375 427 L528.5375 427 Q531.5375 420 534.5375 421 L538.5375 425 Q544.5375 430 552.5375 428 L562.5375 427 L624.8375 427 Q627.8375 420 630.8375 421 L634.8375 425 Q640.8375 430 648.8375 428 L658.8375 427 L721.1374999999999 427 Q724.1374999999999 420 727.1374999999999 421 L731.1374999999999 425 Q737.1374999999999 430 745.1374999999999 428 L755.1374999999999 427 L817.4374999999999 427 Q820.4374999999999 420 823.4374999999999 421 L827.4374999999999 425 Q833.4374999999999 430 841.4374999999999 428 L851.4374999999999 427 L913.7374999999998 427 Q916.7374999999998 420 919.7374999999998 421 L923.7374999999998 425 Q929.7374999999998 430 937.7374999999998 428 L947.7374999999998 427 L1010.0374999999998 427 Q1013.0374999999998 420 1016.0374999999998 421 L1020.0374999999998 425 Q1026.0375 430 1034.0375 428 L1044.0375 427 L1106.3374999999999 427 Q1109.3374999999999 420 1112.3374999999999 421 L1116.3374999999999 425 Q1122.3374999999999 430 1130.3374999999999 428 L1140.3374999999999 427 L1202.6374999999998 427 Q1205.6374999999998 420 1208.6374999999998 421 L1212.6374999999998 425 Q1218.6374999999998 430 1226.6374999999998 428 L1236.6374999999998 427 L1298.9374999999998 427 Q1301.9374999999998 420 1304.9374999999998 421 L1308.9374999999998 425 Q1314.9374999999998 430 1322.9374999999998 428 L1332.9374999999998 427 L1395.2374999999997 427 Q1398.2374999999997 420 1401.2374999999997 421 L1405.2374999999997 425 Q1411.2374999999997 430 1419.2374999999997 428 L1429.2374999999997 427" fill="none" stroke="#51657a" stroke-width="1"/></svg>
<div class="a" style="left:658.14px;top:418.5px;width:385.2px;height:19.5px;background:#4677c8;box-sizing:border-box;border:1px solid #2b2b2b;"></div>
<svg class="a" style="left:658.14px;top:418.5px;" width="385.2" height="19.5" viewBox="707.14 450.5 385.2 19.5"><rect x="719.6" y="454.0" width="20.0" height="4" fill="#1b3a78"/><rect x="719.6" y="460.5" width="20.0" height="1.5" fill="#1b3a78"/><rect x="719.6" y="464.5" width="20.0" height="1.5" fill="#2a4e90"/><rect x="744.1" y="454.0" width="40.0" height="4" fill="#1b3a78"/><rect x="744.1" y="460.5" width="40.0" height="1.5" fill="#1b3a78"/><rect x="744.1" y="464.5" width="40.0" height="1.5" fill="#2a4e90"/><rect x="791.4" y="454.0" width="20.0" height="4" fill="#1b3a78"/><rect x="791.4" y="460.5" width="20.0" height="1.5" fill="#1b3a78"/><rect x="791.4" y="464.5" width="20.0" height="1.5" fill="#2a4e90"/><rect x="815.9" y="454.0" width="20.0" height="4" fill="#1b3a78"/><rect x="815.9" y="460.5" width="20.0" height="1.5" fill="#1b3a78"/><rect x="815.9" y="464.5" width="20.0" height="1.5" fill="#2a4e90"/><rect x="840.4" y="454.0" width="40.0" height="4" fill="#1b3a78"/><rect x="840.4" y="460.5" width="40.0" height="1.5" fill="#1b3a78"/><rect x="840.4" y="464.5" width="40.0" height="1.5" fill="#2a4e90"/><rect x="887.7" y="454.0" width="20.0" height="4" fill="#1b3a78"/><rect x="887.7" y="460.5" width="20.0" height="1.5" fill="#1b3a78"/><rect x="887.7" y="464.5" width="20.0" height="1.5" fill="#2a4e90"/><rect x="912.2" y="454.0" width="20.0" height="4" fill="#1b3a78"/><rect x="912.2" y="460.5" width="20.0" height="1.5" fill="#1b3a78"/><rect x="912.2" y="464.5" width="20.0" height="1.5" fill="#2a4e90"/><rect x="936.7" y="454.0" width="40.0" height="4" fill="#1b3a78"/><rect x="936.7" y="460.5" width="40.0" height="1.5" fill="#1b3a78"/><rect x="936.7" y="464.5" width="40.0" height="1.5" fill="#2a4e90"/><rect x="984.0" y="454.0" width="20.0" height="4" fill="#1b3a78"/><rect x="984.0" y="460.5" width="20.0" height="1.5" fill="#1b3a78"/><rect x="984.0" y="464.5" width="20.0" height="1.5" fill="#2a4e90"/><rect x="1008.5" y="454.0" width="20.0" height="4" fill="#1b3a78"/><rect x="1008.5" y="460.5" width="20.0" height="1.5" fill="#1b3a78"/><rect x="1008.5" y="464.5" width="20.0" height="1.5" fill="#2a4e90"/><rect x="1033.0" y="454.0" width="40.0" height="4" fill="#1b3a78"/><rect x="1033.0" y="460.5" width="40.0" height="1.5" fill="#1b3a78"/><rect x="1033.0" y="464.5" width="40.0" height="1.5" fill="#2a4e90"/><rect x="1080.3" y="454.0" width="10.0" height="4" fill="#1b3a78"/><rect x="1080.3" y="460.5" width="10.0" height="1.5" fill="#1b3a78"/><rect x="1080.3" y="464.5" width="10.0" height="1.5" fill="#2a4e90"/></svg>
<div class="a" style="left:634.06px;top:455.5px;width:409.28px;height:19.5px;background:#4677c8;box-sizing:border-box;border:1px solid #2b2b2b;"></div>
<svg class="a" style="left:634.06px;top:455.5px;" width="409.28" height="19.5" viewBox="683.06 487.5 409.28 19.5"><rect x="719.6" y="491.0" width="20.0" height="4" fill="#1b3a78"/><rect x="719.6" y="497.5" width="20.0" height="1.5" fill="#1b3a78"/><rect x="719.6" y="501.5" width="20.0" height="1.5" fill="#2a4e90"/><rect x="744.1" y="491.0" width="40.0" height="4" fill="#1b3a78"/><rect x="744.1" y="497.5" width="40.0" height="1.5" fill="#1b3a78"/><rect x="744.1" y="501.5" width="40.0" height="1.5" fill="#2a4e90"/><rect x="791.4" y="491.0" width="20.0" height="4" fill="#1b3a78"/><rect x="791.4" y="497.5" width="20.0" height="1.5" fill="#1b3a78"/><rect x="791.4" y="501.5" width="20.0" height="1.5" fill="#2a4e90"/><rect x="815.9" y="491.0" width="20.0" height="4" fill="#1b3a78"/><rect x="815.9" y="497.5" width="20.0" height="1.5" fill="#1b3a78"/><rect x="815.9" y="501.5" width="20.0" height="1.5" fill="#2a4e90"/><rect x="840.4" y="491.0" width="40.0" height="4" fill="#1b3a78"/><rect x="840.4" y="497.5" width="40.0" height="1.5" fill="#1b3a78"/><rect x="840.4" y="501.5" width="40.0" height="1.5" fill="#2a4e90"/><rect x="887.7" y="491.0" width="20.0" height="4" fill="#1b3a78"/><rect x="887.7" y="497.5" width="20.0" height="1.5" fill="#1b3a78"/><rect x="887.7" y="501.5" width="20.0" height="1.5" fill="#2a4e90"/><rect x="912.2" y="491.0" width="20.0" height="4" fill="#1b3a78"/><rect x="912.2" y="497.5" width="20.0" height="1.5" fill="#1b3a78"/><rect x="912.2" y="501.5" width="20.0" height="1.5" fill="#2a4e90"/><rect x="936.7" y="491.0" width="40.0" height="4" fill="#1b3a78"/><rect x="936.7" y="497.5" width="40.0" height="1.5" fill="#1b3a78"/><rect x="936.7" y="501.5" width="40.0" height="1.5" fill="#2a4e90"/><rect x="984.0" y="491.0" width="20.0" height="4" fill="#1b3a78"/><rect x="984.0" y="497.5" width="20.0" height="1.5" fill="#1b3a78"/><rect x="984.0" y="501.5" width="20.0" height="1.5" fill="#2a4e90"/><rect x="1008.5" y="491.0" width="20.0" height="4" fill="#1b3a78"/><rect x="1008.5" y="497.5" width="20.0" height="1.5" fill="#1b3a78"/><rect x="1008.5" y="501.5" width="20.0" height="1.5" fill="#2a4e90"/><rect x="1033.0" y="491.0" width="40.0" height="4" fill="#1b3a78"/><rect x="1033.0" y="497.5" width="40.0" height="1.5" fill="#1b3a78"/><rect x="1033.0" y="501.5" width="40.0" height="1.5" fill="#2a4e90"/><rect x="1080.3" y="491.0" width="10.0" height="4" fill="#1b3a78"/><rect x="1080.3" y="497.5" width="10.0" height="1.5" fill="#1b3a78"/><rect x="1080.3" y="501.5" width="10.0" height="1.5" fill="#2a4e90"/><path d="M686.0625 503 L703.0625 495" stroke="#2a4e90" stroke-width="1"/></svg>
<div class="a" style="left:465.54px;top:480.5px;width:168.53px;height:18.5px;background:#4677c8;box-sizing:border-box;border:1px solid #2b2b2b;"></div>
<svg class="a" style="left:465.54px;top:480.5px;" width="168.53" height="18.5" viewBox="514.54 512.5 168.53 18.5"><rect x="515.5374999999999" y="516" width="4" height="3" fill="#1b3a78"/><rect x="562.5374999999999" y="516" width="4" height="3" fill="#1b3a78"/><rect x="592.5374999999999" y="516" width="10" height="3" fill="#1b3a78"/><rect x="646.5374999999999" y="516" width="14" height="3" fill="#1b3a78"/><path d="M517.5374999999999 528 Q594.5374999999999 522 653.0625 525" fill="none" stroke="#2a4e90"/></svg>
<div class="a" style="left:754.44px;top:260.5px;width:288.9px;height:42.5px;background:#f59a22;box-sizing:border-box;border:1px solid #9b5d10;"></div>
<div class="a" style="left:850.74px;top:260.5px;width:1px;height:42.5px;background:#9b5d10;"></div>
<div class="a" style="left:947.04px;top:260.5px;width:1px;height:42.5px;background:#9b5d10;"></div>
<div class="a" style="left:658.14px;top:257px;width:96.3px;height:48px;background:#fffdf5;"></div>
<div class="a" style="left:662.14px;top:261.5px;width:88.8px;height:39px;background:#f59a22;"></div>
<svg class="a" style="left:658.14px;top:257px;" width="385.2" height="48" viewBox="707.14 289 385.2 48"><use href="#tl" fill="#3b2608"/><line x1="711.1375" y1="304.5" x2="800.4375" y2="304.5" stroke="#fff3c4" stroke-width="0.8"/></svg>
<svg class="a" style="left:650.14px;top:264px;" width="112.3" height="22" viewBox="699.14 296 112.3 22"><ellipse cx="709.1375" cy="304" rx="2" ry="3" fill="#fff" stroke="#222" stroke-width="1"/><circle cx="743.1375" cy="304.5" r="3" fill="none" stroke="#222" stroke-width="1.2"/><ellipse cx="801.4375" cy="304" rx="2" ry="3" fill="#fff" stroke="#222" stroke-width="1"/><path d="M701.1375 312.5 L706.1375 309 L706.1375 316 Z" fill="#222" stroke="#ddd" stroke-width="0.6"/><path d="M810.4375 312.5 L805.4375 309 L805.4375 316 Z" fill="#222" stroke="#ddd" stroke-width="0.6"/></svg>
<div class="a" style="left:8px;top:127px;width:247px;height:375px;background:#d9dadc;"></div>
<div class="a" style="left:9px;top:130px;width:64px;height:25px;background:#c7dde4;"></div>
<div class="a" style="left:73px;top:130px;width:170px;height:25px;background:#d3d5d7;"></div>
<svg class="a" style="left:11px;top:131px;" width="60" height="17" viewBox="60 163 60 17"><path d="M62 165 L68 165 L65 169 Z" fill="#4f7f93"/><rect x="72.0" y="171" width="1" height="5" fill="#6a98aa"/><rect x="75.7" y="171" width="1" height="5" fill="#6a98aa"/><rect x="79.4" y="171" width="1" height="5" fill="#6a98aa"/><rect x="83.1" y="171" width="1" height="5" fill="#6a98aa"/><rect x="86.8" y="171" width="1" height="5" fill="#6a98aa"/><rect x="90.5" y="171" width="1" height="5" fill="#6a98aa"/><rect x="94.2" y="171" width="1" height="5" fill="#6a98aa"/><rect x="97.9" y="171" width="1" height="5" fill="#6a98aa"/><rect x="101.6" y="171" width="1" height="5" fill="#6a98aa"/><rect x="105.30000000000001" y="171" width="1" height="5" fill="#6a98aa"/><rect x="109.0" y="171" width="1" height="5" fill="#6a98aa"/><rect x="112.7" y="171" width="1" height="5" fill="#6a98aa"/></svg>
<div class="t" style="top:131.8px;font-size:9.5px;line-height:11.4px;height:11.4px;color:#333;left:172px;width:0;"><span class="c">Transport</span></div>
<svg class="a" style="left:106px;top:131.5px;" width="12" height="12" viewBox="155 163.5 12 12"><path d="M157.5 167.5 L161 172.5 L164.5 170.5 L162.5 166.0" stroke="#888" stroke-width="0.6" fill="none" opacity="0.6"/><circle cx="157.5" cy="167.5" r="1.5" fill="#888"/><circle cx="161" cy="172.5" r="1.5" fill="#888"/><circle cx="164.5" cy="170.5" r="1.5" fill="#888"/><circle cx="162.5" cy="166.0" r="1.5" fill="#888"/></svg>
<div class="a" style="left:9px;top:155px;width:234px;height:12px;background:#c9cbcd;"></div>
<div class="a" style="left:9px;top:167px;width:64px;height:25.5px;background:#e8631f;"></div>
<svg class="a" style="left:9px;top:155px;" width="42" height="12" viewBox="58 187 42 12"><path d="M58 188 L81 188 L89 199 L58 199 Z" fill="#e8631f"/><path d="M61 191 L67 191 L64 195 Z" fill="rgba(0,0,0,0.35)"/></svg>
<div class="t" style="top:154.98px;font-size:9.7px;line-height:11.64px;height:11.64px;color:#333;left:40.5px;text-shadow:0 0 0.4px #333;">Indie Kit</div>
<div class="a" style="left:73px;top:167px;width:170px;height:25.5px;background:#d9dadc;"></div>
<div class="a" style="left:27px;top:170px;width:42px;height:16.5px;background:#d5d9dc;border:1px solid #5a5e62;box-sizing:border-box;box-shadow:0 1.5px 0 #3a1a0a;"></div>
<div class="a" style="left:28.5px;top:172px;width:14.5px;height:10.5px;background:#0f3540;"></div>
<svg class="a" style="left:44px;top:171px;" width="24" height="14" viewBox="93 203 24 14"><rect x="94" y="205.0" width="2" height="2" fill="#9aa0a5"/><rect x="94" y="208.5" width="2" height="2" fill="#9aa0a5"/><rect x="94" y="212.0" width="2" height="2" fill="#9aa0a5"/><rect x="97" y="205.0" width="2" height="2" fill="#9aa0a5"/><rect x="97" y="208.5" width="2" height="2" fill="#9aa0a5"/><rect x="97" y="212.0" width="2" height="2" fill="#9aa0a5"/><rect x="100" y="205.0" width="2" height="2" fill="#9aa0a5"/><rect x="100" y="208.5" width="2" height="2" fill="#9aa0a5"/><rect x="100" y="212.0" width="2" height="2" fill="#9aa0a5"/><rect x="103" y="205.0" width="2" height="2" fill="#9aa0a5"/><rect x="103" y="208.5" width="2" height="2" fill="#9aa0a5"/><rect x="103" y="212.0" width="2" height="2" fill="#9aa0a5"/><rect x="106" y="205.0" width="2" height="2" fill="#9aa0a5"/><rect x="106" y="208.5" width="2" height="2" fill="#9aa0a5"/><rect x="106" y="212.0" width="2" height="2" fill="#9aa0a5"/><rect x="109" y="205.0" width="2" height="2" fill="#9aa0a5"/><rect x="109" y="208.5" width="2" height="2" fill="#9aa0a5"/><rect x="109" y="212.0" width="2" height="2" fill="#9aa0a5"/><rect x="112" y="205.0" width="2" height="2" fill="#9aa0a5"/><rect x="112" y="208.5" width="2" height="2" fill="#9aa0a5"/><rect x="112" y="212.0" width="2" height="2" fill="#9aa0a5"/></svg>
<div class="t" style="top:168.9px;font-size:11px;line-height:13.2px;height:13.2px;color:#888;font-weight:700;left:81px;width:0;"><span class="c">M</span></div>
<div class="t" style="top:168.9px;font-size:11px;line-height:13.2px;height:13.2px;color:#888;font-weight:700;left:97px;width:0;"><span class="c">S</span></div>
<svg class="a" style="left:106px;top:169.5px;" width="12" height="12" viewBox="155 201.5 12 12"><path d="M157.5 205.5 L161 210.5 L164.5 208.5 L162.5 204.0" stroke="#888" stroke-width="0.6" fill="none" opacity="0.6"/><circle cx="157.5" cy="205.5" r="1.5" fill="#888"/><circle cx="161" cy="210.5" r="1.5" fill="#888"/><circle cx="164.5" cy="208.5" r="1.5" fill="#888"/><circle cx="162.5" cy="204.0" r="1.5" fill="#888"/></svg>
<div class="a" style="left:126.5px;top:166.5px;width:12px;height:21px;background:#ccc;"></div>
<svg class="a" style="left:127px;top:166.5px;" width="12" height="21" viewBox="176 198.5 12 21"><path d="M180 206.5 L184 209.5 L180 212.5" fill="none" stroke="#5a5d61" stroke-width="1.2"/></svg>
<div class="a" style="left:145px;top:172px;width:7px;height:7px;background:#c92a2a;border-radius:50%;"></div>
<div class="t" style="top:169.8px;font-size:9.5px;line-height:11.4px;height:11.4px;color:#e6e7e8;left:160px;">&#8212;</div>
<svg class="a" style="left:194px;top:172.5px;" width="9" height="6" viewBox="243 204.5 9 6"><path d="M244 205.5 L251 205.5 L247.5 209.5 Z" fill="#d0d2d4"/></svg>
<div class="t" style="top:169.4px;font-size:11px;line-height:13.2px;height:13.2px;color:#888;font-weight:700;left:221px;width:0;"><span class="c">M</span></div>
<div class="t" style="top:170px;font-size:10px;line-height:12px;height:12px;color:#888;font-weight:700;left:237px;width:0;"><span class="c">&#10005;</span></div>
<div class="a" style="left:9px;top:192.5px;width:234px;height:11.5px;background:#c9cbcd;"></div>
<div class="a" style="left:9px;top:204px;width:64px;height:50px;background:#e8631f;"></div>
<svg class="a" style="left:9px;top:192.5px;" width="42" height="11.5" viewBox="58 224.5 42 11.5"><path d="M58 225.5 L81 225.5 L89 236 L58 236 Z" fill="#e8631f"/><path d="M61 228.5 L67 228.5 L64 232.5 Z" fill="rgba(0,0,0,0.35)"/></svg>
<div class="t" style="top:192.48px;font-size:9.7px;line-height:11.64px;height:11.64px;color:#333;left:40.5px;text-shadow:0 0 0.4px #333;">Outrun Nights</div>
<div class="a" style="left:73px;top:204px;width:170px;height:50px;background:#d9dadc;"></div>
<div class="a" style="left:25.5px;top:205px;width:45px;height:20px;background:#3b2417;border:1px solid #1a1008;box-sizing:border-box;"></div>
<svg class="a" style="left:25.5px;top:205px;" width="45" height="20" viewBox="74.5 237 45 20"><rect x="76" y="239" width="1" height="16" fill="#b8402a"/><rect x="78" y="239" width="1" height="16" fill="#b8402a"/><rect x="80" y="239" width="1" height="16" fill="#b8402a"/><rect x="82" y="239" width="1" height="16" fill="#b8402a"/><rect x="84" y="239" width="5" height="16" fill="#120a06"/><rect x="90" y="240" width="13" height="8" fill="#5a3a28"/><rect x="104" y="241" width="13" height="13" fill="#6a4a35"/><rect x="90" y="249" width="12" height="6" fill="#4a3020"/></svg>
<div class="t" style="top:205.4px;font-size:11px;line-height:13.2px;height:13.2px;color:#888;font-weight:700;left:81px;width:0;"><span class="c">M</span></div>
<div class="t" style="top:205.4px;font-size:11px;line-height:13.2px;height:13.2px;color:#888;font-weight:700;left:97px;width:0;"><span class="c">S</span></div>
<svg class="a" style="left:106px;top:206px;" width="12" height="12" viewBox="155 238 12 12"><path d="M157.5 242 L161 247 L164.5 245 L162.5 240.5" stroke="#888" stroke-width="0.6" fill="none" opacity="0.6"/><circle cx="157.5" cy="242" r="1.5" fill="#888"/><circle cx="161" cy="247" r="1.5" fill="#888"/><circle cx="164.5" cy="245" r="1.5" fill="#888"/><circle cx="162.5" cy="240.5" r="1.5" fill="#888"/></svg>
<div class="a" style="left:126.5px;top:203px;width:12px;height:21px;background:#ccc;"></div>
<svg class="a" style="left:127px;top:203px;" width="12" height="21" viewBox="176 235 12 21"><path d="M180 243 L184 246 L180 249" fill="none" stroke="#5a5d61" stroke-width="1.2"/></svg>
<div class="a" style="left:145px;top:208.5px;width:7px;height:7px;background:#c92a2a;border-radius:50%;"></div>
<div class="t" style="top:206.3px;font-size:9.5px;line-height:11.4px;height:11.4px;color:#e6e7e8;left:160px;">A2</div>
<svg class="a" style="left:194px;top:209px;" width="9" height="6" viewBox="243 241 9 6"><path d="M244 242 L251 242 L247.5 246 Z" fill="#d0d2d4"/></svg>
<div class="t" style="top:205.9px;font-size:11px;line-height:13.2px;height:13.2px;color:#888;font-weight:700;left:221px;width:0;"><span class="c">M</span></div>
<div class="t" style="top:206.5px;font-size:10px;line-height:12px;height:12px;color:#888;font-weight:700;left:237px;width:0;"><span class="c">&#10005;</span></div>
<div class="a" style="left:126.5px;top:228px;width:12px;height:21px;background:#ccc;"></div>
<svg class="a" style="left:127px;top:228px;" width="12" height="21" viewBox="176 260 12 21"><path d="M180 268 L184 271 L180 274" fill="none" stroke="#5a5d61" stroke-width="1.2"/></svg>
<div class="a" style="left:127px;top:225px;width:116px;height:1px;background:#44474a;"></div>
<div class="a" style="left:145px;top:233.5px;width:7px;height:7px;background:#c92a2a;border-radius:50%;"></div>
<div class="t" style="top:231.3px;font-size:9.5px;line-height:11.4px;height:11.4px;color:#e6e7e8;left:160px;">&#8212;</div>
<svg class="a" style="left:194px;top:234px;" width="9" height="6" viewBox="243 266 9 6"><path d="M244 267 L251 267 L247.5 271 Z" fill="#d0d2d4"/></svg>
<div class="t" style="top:230.9px;font-size:11px;line-height:13.2px;height:13.2px;color:#888;font-weight:700;left:221px;width:0;"><span class="c">M</span></div>
<div class="t" style="top:231.5px;font-size:10px;line-height:12px;height:12px;color:#888;font-weight:700;left:237px;width:0;"><span class="c">&#10005;</span></div>
<div class="a" style="left:9px;top:254px;width:234px;height:11px;background:#c9cbcd;"></div>
<div class="a" style="left:9px;top:265px;width:64px;height:40px;background:#f5a01f;"></div>
<svg class="a" style="left:9px;top:254px;" width="42" height="11" viewBox="58 286 42 11"><path d="M58 287 L81 287 L89 297 L58 297 Z" fill="#f5a01f"/><path d="M61 290 L67 290 L64 294 Z" fill="rgba(0,0,0,0.35)"/></svg>
<div class="t" style="top:253.98px;font-size:9.7px;line-height:11.64px;height:11.64px;color:#333;left:40.5px;text-shadow:0 0 0.4px #333;">Top Loop</div>
<div class="a" style="left:73px;top:265px;width:170px;height:40px;background:#c5c8ca;"></div>
<div class="a" style="left:9px;top:257px;width:10px;height:48px;background:#6b4a14;"></div>
<svg class="a" style="left:21px;top:265px;" width="30" height="19" viewBox="70 297 30 19"><path d="M75 301 L86 301 L92 306.5 L86 312 L75 312 Z" fill="#5d6064" stroke="#2a2c2e" stroke-width="1.2"/><rect x="78" y="299" width="16" height="2" fill="#222"/></svg>
<div class="t" style="top:266.4px;font-size:11px;line-height:13.2px;height:13.2px;color:#888;font-weight:700;left:81px;width:0;"><span class="c">M</span></div>
<div class="t" style="top:266.4px;font-size:11px;line-height:13.2px;height:13.2px;color:#888;font-weight:700;left:97px;width:0;"><span class="c">S</span></div>
<div class="a" style="left:105.5px;top:266.5px;width:13px;height:13px;background:#d92b2b;border-radius:50%;"></div>
<svg class="a" style="left:106px;top:267px;" width="12" height="12" viewBox="155 299 12 12"><path d="M157.5 303 L161 308 L164.5 306 L162.5 301.5" stroke="#ffd0d0" stroke-width="0.6" fill="none" opacity="0.6"/><circle cx="157.5" cy="303" r="1.5" fill="#ffd0d0"/><circle cx="161" cy="308" r="1.5" fill="#ffd0d0"/><circle cx="164.5" cy="306" r="1.5" fill="#ffd0d0"/><circle cx="162.5" cy="301.5" r="1.5" fill="#ffd0d0"/></svg>
<div class="a" style="left:121.5px;top:266.5px;width:13px;height:13px;background:#d92b2b;border-radius:50%;"></div>
<div class="a" style="left:125px;top:270px;width:6px;height:6px;background:#fff;border-radius:50%;"></div>
<div class="a" style="left:137.5px;top:266.5px;width:13.5px;height:13px;background:#27a52a;border-radius:2px;"></div>
<svg class="a" style="left:137px;top:266px;" width="14" height="14" viewBox="186 298 14 14"><path d="M189 303 L191 303 L194 300.5 L194 309.5 L191 307 L189 307 Z" fill="#aef0a0"/><path d="M196 302.5 Q198 305 196 307.5" stroke="#aef0a0" fill="none"/></svg>
<div class="a" style="left:25px;top:285.5px;width:196px;height:15px;background:#0b0b0c;border-radius:3px;"></div>
<svg class="a" style="left:27px;top:286px;" width="20" height="14" viewBox="76 318 20 14"><path d="M80 329 L86 321 M84 320.5 L88 324.5" stroke="#bbb" stroke-width="1.3"/></svg>
<div class="t" style="top:287.3px;font-size:9.5px;line-height:11.4px;height:11.4px;color:#d8d8d8;left:47px;">IN&#9662;</div>
<div class="a" style="left:76px;top:288px;width:141px;height:10px;background:#1e1f20;"></div>
<svg class="a" style="left:76px;top:288px;" width="141" height="10" viewBox="125 320 141 10"><rect x="126.0" y="320" width="1.5" height="10" fill="#2e3032"/><rect x="129.5" y="320" width="1.5" height="10" fill="#2e3032"/><rect x="133.0" y="320" width="1.5" height="10" fill="#2e3032"/><rect x="136.5" y="320" width="1.5" height="10" fill="#2e3032"/><rect x="140.0" y="320" width="1.5" height="10" fill="#2e3032"/><rect x="143.5" y="320" width="1.5" height="10" fill="#2e3032"/><rect x="147.0" y="320" width="1.5" height="10" fill="#2e3032"/><rect x="150.5" y="320" width="1.5" height="10" fill="#2e3032"/><rect x="154.0" y="320" width="1.5" height="10" fill="#2e3032"/><rect x="157.5" y="320" width="1.5" height="10" fill="#2e3032"/><rect x="161.0" y="320" width="1.5" height="10" fill="#2e3032"/><rect x="164.5" y="320" width="1.5" height="10" fill="#2e3032"/><rect x="168.0" y="320" width="1.5" height="10" fill="#2e3032"/><rect x="171.5" y="320" width="1.5" height="10" fill="#2e3032"/><rect x="175.0" y="320" width="1.5" height="10" fill="#2e3032"/><rect x="178.5" y="320" width="1.5" height="10" fill="#2e3032"/><rect x="182.0" y="320" width="1.5" height="10" fill="#2e3032"/><rect x="185.5" y="320" width="1.5" height="10" fill="#2e3032"/><rect x="189.0" y="320" width="1.5" height="10" fill="#2e3032"/><rect x="192.5" y="320" width="1.5" height="10" fill="#2e3032"/><rect x="196.0" y="320" width="1.5" height="10" fill="#2e3032"/><rect x="199.5" y="320" width="1.5" height="10" fill="#2e3032"/><rect x="203.0" y="320" width="1.5" height="10" fill="#2e3032"/><rect x="206.5" y="320" width="1.5" height="10" fill="#2e3032"/><rect x="210.0" y="320" width="1.5" height="10" fill="#2e3032"/><rect x="213.5" y="320" width="1.5" height="10" fill="#2e3032"/><rect x="217.0" y="320" width="1.5" height="10" fill="#2e3032"/><rect x="220.5" y="320" width="1.5" height="10" fill="#2e3032"/><rect x="224.0" y="320" width="1.5" height="10" fill="#2e3032"/><rect x="227.5" y="320" width="1.5" height="10" fill="#2e3032"/><rect x="231.0" y="320" width="1.5" height="10" fill="#2e3032"/><rect x="234.5" y="320" width="1.5" height="10" fill="#2e3032"/><rect x="238.0" y="320" width="1.5" height="10" fill="#2e3032"/><rect x="241.5" y="320" width="1.5" height="10" fill="#2e3032"/><rect x="245.0" y="320" width="1.5" height="10" fill="#2e3032"/><rect x="248.5" y="320" width="1.5" height="10" fill="#2e3032"/><rect x="252.0" y="320" width="1.5" height="10" fill="#2e3032"/><rect x="255.5" y="320" width="1.5" height="10" fill="#2e3032"/><rect x="259.0" y="320" width="1.5" height="10" fill="#2e3032"/><rect x="262.5" y="320" width="1.5" height="10" fill="#2e3032"/></svg>
<div class="a" style="left:9px;top:305px;width:234px;height:12px;background:#c9cbcd;"></div>
<div class="a" style="left:9px;top:317px;width:64px;height:51px;background:#f5c330;"></div>
<svg class="a" style="left:9px;top:305px;" width="42" height="12" viewBox="58 337 42 12"><path d="M58 338 L81 338 L89 349 L58 349 Z" fill="#f5c330"/><path d="M61 341 L67 341 L64 345 Z" fill="rgba(0,0,0,0.35)"/></svg>
<div class="t" style="top:304.98px;font-size:9.7px;line-height:11.64px;height:11.64px;color:#333;left:40.5px;text-shadow:0 0 0.4px #333;">Fat 80s Bass</div>
<div class="a" style="left:73px;top:317px;width:170px;height:51px;background:#d9dadc;"></div>
<div class="a" style="left:25px;top:316.5px;width:45.5px;height:24px;background:#3e6ea8;border:1px solid #d0d8e0;box-sizing:border-box;"></div>
<svg class="a" style="left:25px;top:316.5px;" width="46" height="24" viewBox="74 348.5 46 24"><rect x="75" y="349.5" width="44" height="3" fill="#e0e4e8"/><rect x="77.0" y="355.5" width="3" height="2" fill="#8fb0d8"/><rect x="77.0" y="360.5" width="3" height="2" fill="#8fb0d8"/><rect x="77.0" y="365.5" width="3" height="2" fill="#8fb0d8"/><rect x="81.5" y="355.5" width="3" height="2" fill="#8fb0d8"/><rect x="81.5" y="360.5" width="3" height="2" fill="#8fb0d8"/><rect x="81.5" y="365.5" width="3" height="2" fill="#8fb0d8"/><rect x="86.0" y="355.5" width="3" height="2" fill="#8fb0d8"/><rect x="86.0" y="360.5" width="3" height="2" fill="#8fb0d8"/><rect x="86.0" y="365.5" width="3" height="2" fill="#8fb0d8"/><rect x="90.5" y="355.5" width="3" height="2" fill="#8fb0d8"/><rect x="90.5" y="360.5" width="3" height="2" fill="#8fb0d8"/><rect x="90.5" y="365.5" width="3" height="2" fill="#8fb0d8"/><rect x="95.0" y="355.5" width="3" height="2" fill="#8fb0d8"/><rect x="95.0" y="360.5" width="3" height="2" fill="#8fb0d8"/><rect x="95.0" y="365.5" width="3" height="2" fill="#8fb0d8"/><rect x="99.5" y="355.5" width="3" height="2" fill="#8fb0d8"/><rect x="99.5" y="360.5" width="3" height="2" fill="#8fb0d8"/><rect x="99.5" y="365.5" width="3" height="2" fill="#8fb0d8"/><rect x="104.0" y="355.5" width="3" height="2" fill="#8fb0d8"/><rect x="104.0" y="360.5" width="3" height="2" fill="#8fb0d8"/><rect x="104.0" y="365.5" width="3" height="2" fill="#8fb0d8"/><rect x="108.5" y="355.5" width="3" height="2" fill="#8fb0d8"/><rect x="108.5" y="360.5" width="3" height="2" fill="#8fb0d8"/><rect x="108.5" y="365.5" width="3" height="2" fill="#8fb0d8"/><rect x="113.0" y="355.5" width="3" height="2" fill="#8fb0d8"/><rect x="113.0" y="360.5" width="3" height="2" fill="#8fb0d8"/><rect x="113.0" y="365.5" width="3" height="2" fill="#8fb0d8"/></svg>
<div class="t" style="top:318.4px;font-size:11px;line-height:13.2px;height:13.2px;color:#888;font-weight:700;left:81px;width:0;"><span class="c">M</span></div>
<div class="t" style="top:318.4px;font-size:11px;line-height:13.2px;height:13.2px;color:#888;font-weight:700;left:97px;width:0;"><span class="c">S</span></div>
<svg class="a" style="left:106px;top:319px;" width="12" height="12" viewBox="155 351 12 12"><path d="M157.5 355 L161 360 L164.5 358 L162.5 353.5" stroke="#888" stroke-width="0.6" fill="none" opacity="0.6"/><circle cx="157.5" cy="355" r="1.5" fill="#888"/><circle cx="161" cy="360" r="1.5" fill="#888"/><circle cx="164.5" cy="358" r="1.5" fill="#888"/><circle cx="162.5" cy="353.5" r="1.5" fill="#888"/></svg>
<div class="a" style="left:126.5px;top:316px;width:12px;height:21px;background:#ccc;"></div>
<svg class="a" style="left:127px;top:316px;" width="12" height="21" viewBox="176 348 12 21"><path d="M180 356 L184 359 L180 362" fill="none" stroke="#5a5d61" stroke-width="1.2"/></svg>
<div class="a" style="left:145px;top:321.5px;width:7px;height:7px;background:#c92a2a;border-radius:50%;"></div>
<div class="t" style="top:319.3px;font-size:9.5px;line-height:11.4px;height:11.4px;color:#e6e7e8;left:160px;">A2</div>
<svg class="a" style="left:194px;top:322px;" width="9" height="6" viewBox="243 354 9 6"><path d="M244 355 L251 355 L247.5 359 Z" fill="#d0d2d4"/></svg>
<div class="t" style="top:318.9px;font-size:11px;line-height:13.2px;height:13.2px;color:#888;font-weight:700;left:221px;width:0;"><span class="c">M</span></div>
<div class="t" style="top:319.5px;font-size:10px;line-height:12px;height:12px;color:#888;font-weight:700;left:237px;width:0;"><span class="c">&#10005;</span></div>
<svg class="a" style="left:127px;top:344px;" width="24" height="22" viewBox="176 376 24 22"><path d="M178 379 L184 379 L181 383 Z" fill="#888"/><rect x="187.5" y="375" width="2" height="22" fill="#d0d2d4"/></svg>
<div class="t" style="top:341.5px;font-size:7.5px;line-height:9px;height:9px;color:#e0e2e3;left:144px;">(Mod Wheel)</div>
<div class="t" style="top:343.9px;font-size:11px;line-height:13.2px;height:13.2px;color:#888;font-weight:700;left:221px;width:0;"><span class="c">M</span></div>
<div class="t" style="top:344.5px;font-size:10px;line-height:12px;height:12px;color:#888;font-weight:700;left:237px;width:0;"><span class="c">&#10005;</span></div>
<div class="a" style="left:9px;top:368px;width:234px;height:12px;background:#c9cbcd;"></div>
<div class="a" style="left:9px;top:380px;width:64px;height:24px;background:#b4cfe7;"></div>
<svg class="a" style="left:9px;top:368px;" width="42" height="12" viewBox="58 400 42 12"><path d="M58 401 L81 401 L89 412 L58 412 Z" fill="#b4cfe7"/><path d="M61 404 L67 404 L64 408 Z" fill="rgba(0,0,0,0.35)"/></svg>
<div class="t" style="top:367.98px;font-size:9.7px;line-height:11.64px;height:11.64px;color:#333;left:40.5px;text-shadow:0 0 0.4px #333;">Glistening House</div>
<div class="a" style="left:73px;top:380px;width:170px;height:24px;background:#d9dadc;"></div>
<div class="a" style="left:25px;top:379.5px;width:45.5px;height:23.5px;background:#3e6ea8;border:1px solid #d0d8e0;box-sizing:border-box;"></div>
<svg class="a" style="left:25px;top:379.5px;" width="46" height="24" viewBox="74 411.5 46 24"><rect x="75" y="412.5" width="44" height="3" fill="#e0e4e8"/><rect x="77.0" y="418.5" width="3" height="2" fill="#8fb0d8"/><rect x="77.0" y="423.5" width="3" height="2" fill="#8fb0d8"/><rect x="77.0" y="428.5" width="3" height="2" fill="#8fb0d8"/><rect x="81.5" y="418.5" width="3" height="2" fill="#8fb0d8"/><rect x="81.5" y="423.5" width="3" height="2" fill="#8fb0d8"/><rect x="81.5" y="428.5" width="3" height="2" fill="#8fb0d8"/><rect x="86.0" y="418.5" width="3" height="2" fill="#8fb0d8"/><rect x="86.0" y="423.5" width="3" height="2" fill="#8fb0d8"/><rect x="86.0" y="428.5" width="3" height="2" fill="#8fb0d8"/><rect x="90.5" y="418.5" width="3" height="2" fill="#8fb0d8"/><rect x="90.5" y="423.5" width="3" height="2" fill="#8fb0d8"/><rect x="90.5" y="428.5" width="3" height="2" fill="#8fb0d8"/><rect x="95.0" y="418.5" width="3" height="2" fill="#8fb0d8"/><rect x="95.0" y="423.5" width="3" height="2" fill="#8fb0d8"/><rect x="95.0" y="428.5" width="3" height="2" fill="#8fb0d8"/><rect x="99.5" y="418.5" width="3" height="2" fill="#8fb0d8"/><rect x="99.5" y="423.5" width="3" height="2" fill="#8fb0d8"/><rect x="99.5" y="428.5" width="3" height="2" fill="#8fb0d8"/><rect x="104.0" y="418.5" width="3" height="2" fill="#8fb0d8"/><rect x="104.0" y="423.5" width="3" height="2" fill="#8fb0d8"/><rect x="104.0" y="428.5" width="3" height="2" fill="#8fb0d8"/><rect x="108.5" y="418.5" width="3" height="2" fill="#8fb0d8"/><rect x="108.5" y="423.5" width="3" height="2" fill="#8fb0d8"/><rect x="108.5" y="428.5" width="3" height="2" fill="#8fb0d8"/><rect x="113.0" y="418.5" width="3" height="2" fill="#8fb0d8"/><rect x="113.0" y="423.5" width="3" height="2" fill="#8fb0d8"/><rect x="113.0" y="428.5" width="3" height="2" fill="#8fb0d8"/></svg>
<div class="t" style="top:380.4px;font-size:11px;line-height:13.2px;height:13.2px;color:#888;font-weight:700;left:81px;width:0;"><span class="c">M</span></div>
<div class="t" style="top:380.4px;font-size:11px;line-height:13.2px;height:13.2px;color:#888;font-weight:700;left:97px;width:0;"><span class="c">S</span></div>
<svg class="a" style="left:106px;top:381px;" width="12" height="12" viewBox="155 413 12 12"><path d="M157.5 417 L161 422 L164.5 420 L162.5 415.5" stroke="#888" stroke-width="0.6" fill="none" opacity="0.6"/><circle cx="157.5" cy="417" r="1.5" fill="#888"/><circle cx="161" cy="422" r="1.5" fill="#888"/><circle cx="164.5" cy="420" r="1.5" fill="#888"/><circle cx="162.5" cy="415.5" r="1.5" fill="#888"/></svg>
<div class="a" style="left:126.5px;top:378px;width:12px;height:21px;background:#ccc;"></div>
<svg class="a" style="left:127px;top:378px;" width="12" height="21" viewBox="176 410 12 21"><path d="M180 418 L184 421 L180 424" fill="none" stroke="#5a5d61" stroke-width="1.2"/></svg>
<div class="a" style="left:145px;top:383.5px;width:7px;height:7px;background:#c92a2a;border-radius:50%;"></div>
<div class="t" style="top:381.3px;font-size:9.5px;line-height:11.4px;height:11.4px;color:#e6e7e8;left:160px;">&#8212;</div>
<svg class="a" style="left:194px;top:384px;" width="9" height="6" viewBox="243 416 9 6"><path d="M244 417 L251 417 L247.5 421 Z" fill="#d0d2d4"/></svg>
<div class="t" style="top:380.9px;font-size:11px;line-height:13.2px;height:13.2px;color:#888;font-weight:700;left:221px;width:0;"><span class="c">M</span></div>
<div class="t" style="top:381.5px;font-size:10px;line-height:12px;height:12px;color:#888;font-weight:700;left:237px;width:0;"><span class="c">&#10005;</span></div>
<div class="a" style="left:9px;top:404px;width:234px;height:11.5px;background:#c9cbcd;"></div>
<div class="a" style="left:9px;top:415.5px;width:64px;height:25.5px;background:#4b7dca;"></div>
<svg class="a" style="left:9px;top:404px;" width="42" height="11.5" viewBox="58 436 42 11.5"><path d="M58 437 L81 437 L89 447.5 L58 447.5 Z" fill="#4b7dca"/><path d="M61 440 L67 440 L64 444 Z" fill="rgba(0,0,0,0.35)"/></svg>
<div class="t" style="top:403.98px;font-size:9.7px;line-height:11.64px;height:11.64px;color:#333;left:40.5px;text-shadow:0 0 0.4px #333;">Expander X Keys</div>
<div class="a" style="left:73px;top:415.5px;width:170px;height:25.5px;background:#d9dadc;"></div>
<div class="a" style="left:25px;top:415px;width:45.5px;height:24px;background:#3e6ea8;border:1px solid #d0d8e0;box-sizing:border-box;"></div>
<svg class="a" style="left:25px;top:415px;" width="46" height="24" viewBox="74 447 46 24"><rect x="75" y="448.0" width="44" height="3" fill="#e0e4e8"/><rect x="77.0" y="454.0" width="3" height="2" fill="#8fb0d8"/><rect x="77.0" y="459.0" width="3" height="2" fill="#8fb0d8"/><rect x="77.0" y="464.0" width="3" height="2" fill="#8fb0d8"/><rect x="81.5" y="454.0" width="3" height="2" fill="#8fb0d8"/><rect x="81.5" y="459.0" width="3" height="2" fill="#8fb0d8"/><rect x="81.5" y="464.0" width="3" height="2" fill="#8fb0d8"/><rect x="86.0" y="454.0" width="3" height="2" fill="#8fb0d8"/><rect x="86.0" y="459.0" width="3" height="2" fill="#8fb0d8"/><rect x="86.0" y="464.0" width="3" height="2" fill="#8fb0d8"/><rect x="90.5" y="454.0" width="3" height="2" fill="#8fb0d8"/><rect x="90.5" y="459.0" width="3" height="2" fill="#8fb0d8"/><rect x="90.5" y="464.0" width="3" height="2" fill="#8fb0d8"/><rect x="95.0" y="454.0" width="3" height="2" fill="#8fb0d8"/><rect x="95.0" y="459.0" width="3" height="2" fill="#8fb0d8"/><rect x="95.0" y="464.0" width="3" height="2" fill="#8fb0d8"/><rect x="99.5" y="454.0" width="3" height="2" fill="#8fb0d8"/><rect x="99.5" y="459.0" width="3" height="2" fill="#8fb0d8"/><rect x="99.5" y="464.0" width="3" height="2" fill="#8fb0d8"/><rect x="104.0" y="454.0" width="3" height="2" fill="#8fb0d8"/><rect x="104.0" y="459.0" width="3" height="2" fill="#8fb0d8"/><rect x="104.0" y="464.0" width="3" height="2" fill="#8fb0d8"/><rect x="108.5" y="454.0" width="3" height="2" fill="#8fb0d8"/><rect x="108.5" y="459.0" width="3" height="2" fill="#8fb0d8"/><rect x="108.5" y="464.0" width="3" height="2" fill="#8fb0d8"/><rect x="113.0" y="454.0" width="3" height="2" fill="#8fb0d8"/><rect x="113.0" y="459.0" width="3" height="2" fill="#8fb0d8"/><rect x="113.0" y="464.0" width="3" height="2" fill="#8fb0d8"/></svg>
<div class="t" style="top:417.4px;font-size:11px;line-height:13.2px;height:13.2px;color:#888;font-weight:700;left:81px;width:0;"><span class="c">M</span></div>
<div class="t" style="top:417.4px;font-size:11px;line-height:13.2px;height:13.2px;color:#888;font-weight:700;left:97px;width:0;"><span class="c">S</span></div>
<div class="a" style="left:105.5px;top:417.5px;width:13px;height:13px;background:#d92b2b;border-radius:50%;"></div>
<svg class="a" style="left:106px;top:418px;" width="12" height="12" viewBox="155 450 12 12"><path d="M157.5 454 L161 459 L164.5 457 L162.5 452.5" stroke="#ffd0d0" stroke-width="0.6" fill="none" opacity="0.6"/><circle cx="157.5" cy="454" r="1.5" fill="#ffd0d0"/><circle cx="161" cy="459" r="1.5" fill="#ffd0d0"/><circle cx="164.5" cy="457" r="1.5" fill="#ffd0d0"/><circle cx="162.5" cy="452.5" r="1.5" fill="#ffd0d0"/></svg>
<div class="a" style="left:126.5px;top:415px;width:12px;height:21px;background:#ccc;"></div>
<svg class="a" style="left:127px;top:415px;" width="12" height="21" viewBox="176 447 12 21"><path d="M180 455 L184 458 L180 461" fill="none" stroke="#5a5d61" stroke-width="1.2"/></svg>
<div class="a" style="left:145px;top:420.5px;width:7px;height:7px;background:#c92a2a;border-radius:50%;"></div>
<div class="t" style="top:418.3px;font-size:9.5px;line-height:11.4px;height:11.4px;color:#e6e7e8;left:160px;">&#8212;</div>
<svg class="a" style="left:194px;top:421px;" width="9" height="6" viewBox="243 453 9 6"><path d="M244 454 L251 454 L247.5 458 Z" fill="#d0d2d4"/></svg>
<div class="t" style="top:417.9px;font-size:11px;line-height:13.2px;height:13.2px;color:#888;font-weight:700;left:221px;width:0;"><span class="c">M</span></div>
<div class="t" style="top:418.5px;font-size:10px;line-height:12px;height:12px;color:#888;font-weight:700;left:237px;width:0;"><span class="c">&#10005;</span></div>
<div class="a" style="left:9px;top:441px;width:234px;height:12px;background:#c9cbcd;"></div>
<div class="a" style="left:9px;top:453px;width:64px;height:49px;background:#4b7dca;"></div>
<svg class="a" style="left:9px;top:441px;" width="42" height="12" viewBox="58 473 42 12"><path d="M58 474 L81 474 L89 485 L58 485 Z" fill="#4b7dca"/><path d="M61 477 L67 477 L64 481 Z" fill="rgba(0,0,0,0.35)"/></svg>
<div class="t" style="top:440.98px;font-size:9.7px;line-height:11.64px;height:11.64px;color:#333;left:40.5px;text-shadow:0 0 0.4px #333;">Bass-Chord-Lead</div>
<div class="a" style="left:73px;top:453px;width:170px;height:49px;background:#d9dadc;"></div>
<div class="a" style="left:25px;top:452.5px;width:45.5px;height:24px;background:#3e6ea8;border:1px solid #d0d8e0;box-sizing:border-box;"></div>
<svg class="a" style="left:25px;top:452.5px;" width="46" height="24" viewBox="74 484.5 46 24"><rect x="75" y="485.5" width="44" height="3" fill="#e0e4e8"/><rect x="77.0" y="491.5" width="3" height="2" fill="#8fb0d8"/><rect x="77.0" y="496.5" width="3" height="2" fill="#8fb0d8"/><rect x="77.0" y="501.5" width="3" height="2" fill="#8fb0d8"/><rect x="81.5" y="491.5" width="3" height="2" fill="#8fb0d8"/><rect x="81.5" y="496.5" width="3" height="2" fill="#8fb0d8"/><rect x="81.5" y="501.5" width="3" height="2" fill="#8fb0d8"/><rect x="86.0" y="491.5" width="3" height="2" fill="#8fb0d8"/><rect x="86.0" y="496.5" width="3" height="2" fill="#8fb0d8"/><rect x="86.0" y="501.5" width="3" height="2" fill="#8fb0d8"/><rect x="90.5" y="491.5" width="3" height="2" fill="#8fb0d8"/><rect x="90.5" y="496.5" width="3" height="2" fill="#8fb0d8"/><rect x="90.5" y="501.5" width="3" height="2" fill="#8fb0d8"/><rect x="95.0" y="491.5" width="3" height="2" fill="#8fb0d8"/><rect x="95.0" y="496.5" width="3" height="2" fill="#8fb0d8"/><rect x="95.0" y="501.5" width="3" height="2" fill="#8fb0d8"/><rect x="99.5" y="491.5" width="3" height="2" fill="#8fb0d8"/><rect x="99.5" y="496.5" width="3" height="2" fill="#8fb0d8"/><rect x="99.5" y="501.5" width="3" height="2" fill="#8fb0d8"/><rect x="104.0" y="491.5" width="3" height="2" fill="#8fb0d8"/><rect x="104.0" y="496.5" width="3" height="2" fill="#8fb0d8"/><rect x="104.0" y="501.5" width="3" height="2" fill="#8fb0d8"/><rect x="108.5" y="491.5" width="3" height="2" fill="#8fb0d8"/><rect x="108.5" y="496.5" width="3" height="2" fill="#8fb0d8"/><rect x="108.5" y="501.5" width="3" height="2" fill="#8fb0d8"/><rect x="113.0" y="491.5" width="3" height="2" fill="#8fb0d8"/><rect x="113.0" y="496.5" width="3" height="2" fill="#8fb0d8"/><rect x="113.0" y="501.5" width="3" height="2" fill="#8fb0d8"/></svg>
<div class="t" style="top:454.4px;font-size:11px;line-height:13.2px;height:13.2px;color:#888;font-weight:700;left:81px;width:0;"><span class="c">M</span></div>
<div class="t" style="top:454.4px;font-size:11px;line-height:13.2px;height:13.2px;color:#888;font-weight:700;left:97px;width:0;"><span class="c">S</span></div>
<svg class="a" style="left:106px;top:455px;" width="12" height="12" viewBox="155 487 12 12"><path d="M157.5 491 L161 496 L164.5 494 L162.5 489.5" stroke="#888" stroke-width="0.6" fill="none" opacity="0.6"/><circle cx="157.5" cy="491" r="1.5" fill="#888"/><circle cx="161" cy="496" r="1.5" fill="#888"/><circle cx="164.5" cy="494" r="1.5" fill="#888"/><circle cx="162.5" cy="489.5" r="1.5" fill="#888"/></svg>
<div class="a" style="left:126.5px;top:452px;width:12px;height:21px;background:#ccc;"></div>
<svg class="a" style="left:127px;top:452px;" width="12" height="21" viewBox="176 484 12 21"><path d="M180 492 L184 495 L180 498" fill="none" stroke="#5a5d61" stroke-width="1.2"/></svg>
<div class="a" style="left:145px;top:457.5px;width:7px;height:7px;background:#c92a2a;border-radius:50%;"></div>
<div class="t" style="top:455.3px;font-size:9.5px;line-height:11.4px;height:11.4px;color:#e6e7e8;left:160px;">&#8212;</div>
<svg class="a" style="left:194px;top:458px;" width="9" height="6" viewBox="243 490 9 6"><path d="M244 491 L251 491 L247.5 495 Z" fill="#d0d2d4"/></svg>
<div class="t" style="top:454.9px;font-size:11px;line-height:13.2px;height:13.2px;color:#888;font-weight:700;left:221px;width:0;"><span class="c">M</span></div>
<div class="t" style="top:455.5px;font-size:10px;line-height:12px;height:12px;color:#888;font-weight:700;left:237px;width:0;"><span class="c">&#10005;</span></div>
<div class="a" style="left:126.5px;top:477px;width:12px;height:21px;background:#ccc;"></div>
<svg class="a" style="left:127px;top:477px;" width="12" height="21" viewBox="176 509 12 21"><path d="M180 517 L184 520 L180 523" fill="none" stroke="#5a5d61" stroke-width="1.2"/></svg>
<div class="a" style="left:127px;top:474px;width:116px;height:1px;background:#44474a;"></div>
<div class="a" style="left:145px;top:482.5px;width:7px;height:7px;background:#c92a2a;border-radius:50%;"></div>
<div class="t" style="top:480.3px;font-size:9.5px;line-height:11.4px;height:11.4px;color:#e6e7e8;left:160px;">A1</div>
<svg class="a" style="left:194px;top:483px;" width="9" height="6" viewBox="243 515 9 6"><path d="M244 516 L251 516 L247.5 520 Z" fill="#d0d2d4"/></svg>
<div class="t" style="top:479.9px;font-size:11px;line-height:13.2px;height:13.2px;color:#888;font-weight:700;left:221px;width:0;"><span class="c">M</span></div>
<div class="t" style="top:480.5px;font-size:10px;line-height:12px;height:12px;color:#888;font-weight:700;left:237px;width:0;"><span class="c">&#10005;</span></div>
<div class="a" style="left:243.5px;top:133px;width:7.5px;height:305px;background:#8a8d90;border-radius:4px;"></div>
<div class="a" style="left:8px;top:502px;width:247px;height:21px;background:#d5d7d8;"></div>
<div class="a" style="left:255px;top:503px;width:1183px;height:20px;background:#d5d7d8;"></div>
<div class="a" style="left:256px;top:503.5px;width:1179px;height:18.5px;background:#fafbfb;border-radius:9px;"></div>
<div class="a" style="left:468px;top:504px;width:1px;height:18px;background:#e8e8e8;"></div>
<div class="a" style="left:570px;top:504px;width:1px;height:18px;background:#e8e8e8;"></div>
<div class="a" style="left:672px;top:504px;width:1px;height:18px;background:#e8e8e8;"></div>
<div class="a" style="left:774px;top:504px;width:1px;height:18px;background:#e8e8e8;"></div>
<div class="a" style="left:876px;top:504px;width:1px;height:18px;background:#e8e8e8;"></div>
<div class="a" style="left:978px;top:504px;width:1px;height:18px;background:#e8e8e8;"></div>
<div class="a" style="left:1080px;top:504px;width:1px;height:18px;background:#e8e8e8;"></div>
<div class="a" style="left:1182px;top:504px;width:1px;height:18px;background:#e8e8e8;"></div>
<div class="a" style="left:1284px;top:504px;width:1px;height:18px;background:#e8e8e8;"></div>
<div class="a" style="left:1386px;top:504px;width:1px;height:18px;background:#e8e8e8;"></div>
<div class="a" style="left:1412.5px;top:505px;width:1px;height:16px;background:#555;"></div>
<div class="a" style="left:1410.5px;top:511px;width:5px;height:5px;background:#555;border-radius:50%;"></div>
<div class="a" style="left:256px;top:503.5px;width:173px;height:18.5px;background:#c8cacc;border-radius:9px;border:1.5px solid #191a1b;box-sizing:border-box;"></div>
<svg class="a" style="left:261px;top:507px;" width="164" height="13" viewBox="310 539 164 13"><g opacity="0.55"><rect x="316" y="540" width="154" height="3" fill="#7a4a22"/><rect x="316" y="543" width="154" height="3" fill="#7d7031"/><rect x="316" y="546" width="154" height="3" fill="#3f5272"/><rect x="316" y="549" width="154" height="2" fill="#555"/><line x1="368" y1="539" x2="368" y2="552" stroke="#111"/><line x1="419" y1="539" x2="419" y2="552" stroke="#111"/></g></svg>
<svg class="a" style="left:17px;top:504px;" width="42" height="18" viewBox="66 536 42 18"><circle cx="73" cy="544" r="4.5" fill="none" stroke="#6b6e71" stroke-width="1.4"/><path d="M76 547 L79.5 550.5 M71 544 L75 544" stroke="#6b6e71" stroke-width="1.4"/><circle cx="97" cy="544" r="4.5" fill="none" stroke="#6b6e71" stroke-width="1.4"/><path d="M100 547 L103.5 550.5 M95 544 L99 544 M97 542 L97 546" stroke="#6b6e71" stroke-width="1.4"/></svg>
<div class="a" style="left:69px;top:506px;width:1px;height:15px;background:#b8babc;"></div>
<div class="a" style="left:116.5px;top:503px;width:24.5px;height:20px;background:#c9cbcc;"></div>
<svg class="a" style="left:89px;top:504px;" width="80" height="18" viewBox="138 536 80 18"><path d="M139 545 L161 545" stroke="#6b6e71" stroke-width="1.5"/><path d="M150 541 L151 545 L150 549 Z" fill="#6b6e71"/><path d="M167 545 L188 545 M172 545 L177 540 L180 545 L177 550 Z" stroke="#2a2c2e" fill="#2a2c2e" stroke-width="1.5"/><path d="M193 545 L215 545 L205 545 L201 538 L198 545 L201 552 Z" fill="#6b6e71" stroke="#6b6e71" stroke-width="1"/></svg>
<div class="a" style="left:187px;top:506px;width:1px;height:15px;background:#b8babc;"></div>
<div class="a" style="left:8px;top:523px;width:1430px;height:7.5px;background:#5b6063;"></div>
<div class="a" style="left:8px;top:530.5px;width:304px;height:30.5px;background:#dcdddf;"></div>
<svg class="a" style="left:14px;top:534px;" width="20" height="20" viewBox="63 566 20 20"><circle cx="73" cy="576" r="7.3" fill="none" stroke="#6b6e71" stroke-width="1.6"/><path d="M69.8 572.8 L76.2 579.2 M76.2 572.8 L69.8 579.2" stroke="#6b6e71" stroke-width="2"/></svg>
<div class="a" style="left:41.5px;top:534px;width:1px;height:22px;background:#b8babc;"></div>
<div class="a" style="left:50px;top:536px;width:30px;height:16.5px;background:#c5c7c8;"></div>
<div class="t" style="top:541px;font-size:5.5px;line-height:6.6px;height:6.6px;color:#505356;font-weight:700;left:65px;width:0;"><span class="c">SNAP</span></div>
<div class="t" style="top:537.4px;font-size:11px;line-height:13.2px;height:13.2px;color:#333;font-weight:700;left:105px;">Grid (1/16)</div>
<svg class="a" style="left:168px;top:541px;" width="10" height="6" viewBox="217 573 10 6"><path d="M218.5 574.5 L225.5 574.5 L222 578.5 Z" fill="#6b6e71"/></svg>
<div class="a" style="left:187px;top:534px;width:1px;height:22px;background:#b8babc;"></div>
<svg class="a" style="left:194px;top:506px;" width="53" height="14" viewBox="243 538 53 14"><path d="M245 545 L249.5 539.5 L252.5 545 L249.5 550.5 Z M270.5 545 L266 539.5 L263 545 L266 550.5 Z" fill="#6b6e71"/><path d="M279.8 549.5 L279.8 540.5 L285 540.5 M279.8 545 L284 545" fill="none" stroke="#6b6e71" stroke-width="2"/><path d="M286.5 539.5 L293 545 L286.5 550.5 Z" fill="#6b6e71"/></svg>
<div class="t" style="top:506.7px;font-size:11px;line-height:13.2px;height:13.2px;color:#6b6e71;font-weight:700;left:208.7px;width:0;"><span class="c">Z</span></div>
<svg class="a" style="left:194px;top:537px;" width="53" height="14" viewBox="243 569 53 14"><path d="M245 576 L249.5 570.5 L252.5 576 L249.5 581.5 Z M270.5 576 L266 570.5 L263 576 L266 581.5 Z" fill="#6b6e71"/><path d="M279.8 580.5 L279.8 571.5 L285 571.5 M279.8 576 L284 576" fill="none" stroke="#6b6e71" stroke-width="2"/><path d="M286.5 570.5 L293 576 L286.5 581.5 Z" fill="#6b6e71"/></svg>
<div class="t" style="top:537.7px;font-size:11px;line-height:13.2px;height:13.2px;color:#6b6e71;font-weight:700;left:208.7px;width:0;"><span class="c">Z</span></div>
<div class="a" style="left:312px;top:531px;width:1112px;height:30px;background:#e5e6e7;"></div>
<div class="a" style="left:312px;top:531px;width:1112px;height:17px;background:#cfd1d2;"></div>
<div class="a" style="left:312px;top:560px;width:1112px;height:1px;background:#6f7275;"></div>
<div class="a" style="left:1424px;top:530.5px;width:14px;height:317.5px;background:#dfe1e3;"></div>
<div class="a" style="left:312px;top:531.5px;width:1126px;height:1.5px;background:#a9c9e6;"></div>
<div class="a" style="left:1436.5px;top:531.5px;width:1.5px;height:316.5px;background:#a9c9e6;"></div>
<div class="a" style="left:333.9px;top:531px;width:1px;height:30px;background:#6f7275;opacity:0.7;"></div>
<div class="t" style="top:533.3px;font-size:9.5px;line-height:11.4px;height:11.4px;color:#555759;font-weight:700;left:336.4px;">9.2</div>
<div class="a" style="left:350.6px;top:556px;width:1px;height:4px;background:#6f7275;opacity:0.6;"></div>
<div class="a" style="left:367.3px;top:556px;width:1px;height:4px;background:#6f7275;opacity:0.6;"></div>
<div class="a" style="left:384px;top:556px;width:1px;height:4px;background:#6f7275;opacity:0.6;"></div>
<div class="a" style="left:400.7px;top:556px;width:1px;height:4px;background:#6f7275;opacity:0.6;"></div>
<div class="a" style="left:417.4px;top:556px;width:1px;height:4px;background:#6f7275;opacity:0.6;"></div>
<div class="a" style="left:434.1px;top:556px;width:1px;height:4px;background:#6f7275;opacity:0.6;"></div>
<div class="a" style="left:450.8px;top:556px;width:1px;height:4px;background:#6f7275;opacity:0.6;"></div>
<div class="a" style="left:467.5px;top:531px;width:1px;height:30px;background:#6f7275;opacity:0.7;"></div>
<div class="t" style="top:533.3px;font-size:9.5px;line-height:11.4px;height:11.4px;color:#555759;font-weight:700;left:470px;">9.3</div>
<div class="a" style="left:484.2px;top:556px;width:1px;height:4px;background:#6f7275;opacity:0.6;"></div>
<div class="a" style="left:500.9px;top:556px;width:1px;height:4px;background:#6f7275;opacity:0.6;"></div>
<div class="a" style="left:517.6px;top:556px;width:1px;height:4px;background:#6f7275;opacity:0.6;"></div>
<div class="a" style="left:534.3px;top:556px;width:1px;height:4px;background:#6f7275;opacity:0.6;"></div>
<div class="a" style="left:551px;top:556px;width:1px;height:4px;background:#6f7275;opacity:0.6;"></div>
<div class="a" style="left:567.7px;top:556px;width:1px;height:4px;background:#6f7275;opacity:0.6;"></div>
<div class="a" style="left:584.4px;top:556px;width:1px;height:4px;background:#6f7275;opacity:0.6;"></div>
<div class="a" style="left:601.1px;top:531px;width:1px;height:30px;background:#6f7275;opacity:0.7;"></div>
<div class="t" style="top:533.3px;font-size:9.5px;line-height:11.4px;height:11.4px;color:#555759;font-weight:700;left:603.6px;">9.4</div>
<div class="a" style="left:617.8px;top:556px;width:1px;height:4px;background:#6f7275;opacity:0.6;"></div>
<div class="a" style="left:634.5px;top:556px;width:1px;height:4px;background:#6f7275;opacity:0.6;"></div>
<div class="a" style="left:651.2px;top:556px;width:1px;height:4px;background:#6f7275;opacity:0.6;"></div>
<div class="a" style="left:667.9px;top:556px;width:1px;height:4px;background:#6f7275;opacity:0.6;"></div>
<div class="a" style="left:684.6px;top:556px;width:1px;height:4px;background:#6f7275;opacity:0.6;"></div>
<div class="a" style="left:701.3px;top:556px;width:1px;height:4px;background:#6f7275;opacity:0.6;"></div>
<div class="a" style="left:718px;top:556px;width:1px;height:4px;background:#6f7275;opacity:0.6;"></div>
<div class="a" style="left:734.7px;top:531px;width:1px;height:30px;background:#6f7275;opacity:0.7;"></div>
<div class="t" style="top:533.3px;font-size:9.5px;line-height:11.4px;height:11.4px;color:#555759;font-weight:700;left:737.2px;">10.1</div>
<div class="a" style="left:751.4px;top:556px;width:1px;height:4px;background:#6f7275;opacity:0.6;"></div>
<div class="a" style="left:768.1px;top:556px;width:1px;height:4px;background:#6f7275;opacity:0.6;"></div>
<div class="a" style="left:784.8px;top:556px;width:1px;height:4px;background:#6f7275;opacity:0.6;"></div>
<div class="a" style="left:801.5px;top:556px;width:1px;height:4px;background:#6f7275;opacity:0.6;"></div>
<div class="a" style="left:818.2px;top:556px;width:1px;height:4px;background:#6f7275;opacity:0.6;"></div>
<div class="a" style="left:834.9px;top:556px;width:1px;height:4px;background:#6f7275;opacity:0.6;"></div>
<div class="a" style="left:851.6px;top:556px;width:1px;height:4px;background:#6f7275;opacity:0.6;"></div>
<div class="a" style="left:868.3px;top:531px;width:1px;height:30px;background:#6f7275;opacity:0.7;"></div>
<div class="t" style="top:533.3px;font-size:9.5px;line-height:11.4px;height:11.4px;color:#555759;font-weight:700;left:870.8px;">10.2</div>
<div class="a" style="left:885px;top:556px;width:1px;height:4px;background:#6f7275;opacity:0.6;"></div>
<div class="a" style="left:901.7px;top:556px;width:1px;height:4px;background:#6f7275;opacity:0.6;"></div>
<div class="a" style="left:918.4px;top:556px;width:1px;height:4px;background:#6f7275;opacity:0.6;"></div>
<div class="a" style="left:935.1px;top:556px;width:1px;height:4px;background:#6f7275;opacity:0.6;"></div>
<div class="a" style="left:951.8px;top:556px;width:1px;height:4px;background:#6f7275;opacity:0.6;"></div>
<div class="a" style="left:968.5px;top:556px;width:1px;height:4px;background:#6f7275;opacity:0.6;"></div>
<div class="a" style="left:985.2px;top:556px;width:1px;height:4px;background:#6f7275;opacity:0.6;"></div>
<div class="a" style="left:1001.9px;top:531px;width:1px;height:30px;background:#6f7275;opacity:0.7;"></div>
<div class="t" style="top:533.3px;font-size:9.5px;line-height:11.4px;height:11.4px;color:#555759;font-weight:700;left:1004.4px;">10.3</div>
<div class="a" style="left:1018.6px;top:556px;width:1px;height:4px;background:#6f7275;opacity:0.6;"></div>
<div class="a" style="left:1035.3px;top:556px;width:1px;height:4px;background:#6f7275;opacity:0.6;"></div>
<div class="a" style="left:1052px;top:556px;width:1px;height:4px;background:#6f7275;opacity:0.6;"></div>
<div class="a" style="left:1068.7px;top:556px;width:1px;height:4px;background:#6f7275;opacity:0.6;"></div>
<div class="a" style="left:1085.4px;top:556px;width:1px;height:4px;background:#6f7275;opacity:0.6;"></div>
<div class="a" style="left:1102.1px;top:556px;width:1px;height:4px;background:#6f7275;opacity:0.6;"></div>
<div class="a" style="left:1118.8px;top:556px;width:1px;height:4px;background:#6f7275;opacity:0.6;"></div>
<div class="a" style="left:1135.5px;top:531px;width:1px;height:30px;background:#6f7275;opacity:0.7;"></div>
<div class="t" style="top:533.3px;font-size:9.5px;line-height:11.4px;height:11.4px;color:#555759;font-weight:700;left:1138px;">10.4</div>
<div class="a" style="left:1152.2px;top:556px;width:1px;height:4px;background:#6f7275;opacity:0.6;"></div>
<div class="a" style="left:1168.9px;top:556px;width:1px;height:4px;background:#6f7275;opacity:0.6;"></div>
<div class="a" style="left:1185.6px;top:556px;width:1px;height:4px;background:#6f7275;opacity:0.6;"></div>
<div class="a" style="left:1202.3px;top:556px;width:1px;height:4px;background:#6f7275;opacity:0.6;"></div>
<div class="a" style="left:1219px;top:556px;width:1px;height:4px;background:#6f7275;opacity:0.6;"></div>
<div class="a" style="left:1235.7px;top:556px;width:1px;height:4px;background:#6f7275;opacity:0.6;"></div>
<div class="a" style="left:1252.4px;top:556px;width:1px;height:4px;background:#6f7275;opacity:0.6;"></div>
<div class="a" style="left:1269.1px;top:531px;width:1px;height:30px;background:#6f7275;opacity:0.7;"></div>
<div class="t" style="top:533.3px;font-size:9.5px;line-height:11.4px;height:11.4px;color:#555759;font-weight:700;left:1271.6px;">11.1</div>
<div class="a" style="left:1285.8px;top:556px;width:1px;height:4px;background:#6f7275;opacity:0.6;"></div>
<div class="a" style="left:1302.5px;top:556px;width:1px;height:4px;background:#6f7275;opacity:0.6;"></div>
<div class="a" style="left:1319.2px;top:556px;width:1px;height:4px;background:#6f7275;opacity:0.6;"></div>
<div class="a" style="left:1335.9px;top:556px;width:1px;height:4px;background:#6f7275;opacity:0.6;"></div>
<div class="a" style="left:1352.6px;top:556px;width:1px;height:4px;background:#6f7275;opacity:0.6;"></div>
<div class="a" style="left:1369.3px;top:556px;width:1px;height:4px;background:#6f7275;opacity:0.6;"></div>
<div class="a" style="left:1386px;top:556px;width:1px;height:4px;background:#6f7275;opacity:0.6;"></div>
<div class="a" style="left:1402.7px;top:531px;width:1px;height:30px;background:#6f7275;opacity:0.7;"></div>
<div class="t" style="top:533.3px;font-size:9.5px;line-height:11.4px;height:11.4px;color:#555759;font-weight:700;left:1405.2px;">11.2</div>
<div class="a" style="left:1419.4px;top:556px;width:1px;height:4px;background:#6f7275;opacity:0.6;"></div>
<div class="t" style="top:542.3px;font-size:7px;line-height:8.4px;height:8.4px;color:#666;left:336px;">4/4</div>
<svg class="a" style="left:334px;top:546px;" width="14" height="13" viewBox="383 578 14 13"><path d="M384 579.5 L389 579.5 L393 584.5 L389 589.5 L384 589.5 Z" fill="#333"/></svg>
<div class="a" style="left:8px;top:561px;width:247px;height:287px;background:#eeeff0;"></div>
<div class="a" style="left:8px;top:564.5px;width:245px;height:70px;background:#e6e7e8;"></div>
<div class="a" style="left:8px;top:634.5px;width:245px;height:8.5px;background:#f2f3f3;"></div>
<div class="a" style="left:8px;top:643px;width:245px;height:27.5px;background:#e6e7e8;"></div>
<div class="a" style="left:8px;top:670.5px;width:245px;height:8px;background:#f2f3f3;"></div>
<div class="a" style="left:8px;top:678.5px;width:245px;height:53.5px;background:#e6e7e8;"></div>
<div class="a" style="left:8px;top:732px;width:245px;height:8px;background:#f2f3f3;"></div>
<div class="a" style="left:8px;top:740px;width:245px;height:48px;background:#e6e7e8;"></div>
<div class="t" style="top:572.8px;font-size:9.5px;line-height:11.4px;height:11.4px;color:#444;font-weight:700;left:19px;">Recording</div>
<div class="a" style="left:70px;top:571px;width:169px;height:15.5px;background:#dfe0e1;"></div>
<div class="t" style="top:573.82px;font-size:8.3px;line-height:9.96px;height:9.96px;color:#555;right:1207px;">ny_drm124_steady_top.rx2 (Imported)</div>
<div class="t" style="top:595.5px;font-size:8px;line-height:9.6px;height:9.6px;color:#777;right:1263px;">Bounce to new recording</div>
<div class="a" style="left:187px;top:592px;width:52px;height:16px;background:#6e7276;"></div>
<div class="t" style="top:595.2px;font-size:8.5px;line-height:10.2px;height:10.2px;color:#d8dadb;left:213px;width:0;"><span class="c">Bounce</span></div>
<div class="t" style="top:617.32px;font-size:8.3px;line-height:9.96px;height:9.96px;color:#777;right:1380px;">Stretch Type</div>
<div class="a" style="left:70px;top:613.8px;width:112px;height:16.2px;background:#dfe0e1;"></div>
<div class="t" style="top:615.2px;font-size:11px;line-height:13.2px;height:13.2px;color:#333;font-weight:700;left:73px;">Allround</div>
<svg class="a" style="left:172px;top:619px;" width="10" height="6" viewBox="221 651 10 6"><path d="M223 652 L229 652 L226 655.5 Z" fill="#555"/></svg>
<div class="a" style="left:187px;top:614px;width:52px;height:16px;background:#6e7276;"></div>
<div class="t" style="top:617.2px;font-size:8.5px;line-height:10.2px;height:10.2px;color:#d8dadb;left:213px;width:0;"><span class="c">Disable</span></div>
<svg class="a" style="left:11px;top:652px;" width="8" height="8" viewBox="60 684 8 8"><path d="M62 685 L67 688.5 L62 692 Z" fill="#777"/></svg>
<div class="t" style="top:650.8px;font-size:9.5px;line-height:11.4px;height:11.4px;color:#444;font-weight:700;left:36px;">Tempo</div>
<div class="t" style="top:651.9px;font-size:8.5px;line-height:10.2px;height:10.2px;color:#777;left:95px;">Original</div>
<div class="t" style="top:651.1px;font-size:9px;line-height:10.8px;height:10.8px;color:#444;font-weight:700;left:149px;">104.000</div>
<div class="t" style="top:687.3px;font-size:8.5px;line-height:10.2px;height:10.2px;color:#777;right:1381px;">Quantize</div>
<div class="a" style="left:70.5px;top:684px;width:53.5px;height:16.5px;background:#dfe0e1;"></div>
<div class="t" style="top:685.4px;font-size:11px;line-height:13.2px;height:13.2px;color:#333;font-weight:700;left:73px;">1/16</div>
<svg class="a" style="left:114px;top:689px;" width="8" height="6" viewBox="163 721 8 6"><path d="M164 722 L170 722 L167 725.5 Z" fill="#555"/></svg>
<div class="a" style="left:128.3px;top:684px;width:54.7px;height:16.5px;background:#dfe0e1;"></div>
<div class="t" style="top:685.4px;font-size:11px;line-height:13.2px;height:13.2px;color:#333;font-weight:700;left:131px;">100%</div>
<svg class="a" style="left:173px;top:689px;" width="8" height="6" viewBox="222 721 8 6"><path d="M223 722 L229 722 L226 725.5 Z" fill="#555"/></svg>
<div class="a" style="left:186.5px;top:684px;width:52.5px;height:16.5px;background:#6e7276;"></div>
<div class="t" style="top:687.3px;font-size:8.5px;line-height:10.2px;height:10.2px;color:#d8dadb;left:213px;width:0;"><span class="c">Quantize</span></div>
<div class="t" style="top:708.9px;font-size:8.5px;line-height:10.2px;height:10.2px;color:#777;right:1380px;">Range (ticks)</div>
<div class="a" style="left:70.5px;top:707px;width:92.5px;height:13.5px;background:#dfe0e1;"></div>
<div class="t" style="top:706.9px;font-size:11px;line-height:13.2px;height:13.2px;color:#333;font-weight:700;left:116px;width:0;"><span class="c">16</span></div>
<div class="a" style="left:167px;top:706.5px;width:15px;height:15px;background:#6e7276;"></div>
<svg class="a" style="left:167px;top:706px;" width="15" height="16" viewBox="216 738 15 16"><path d="M220 744 L223.5 740.5 L227 744 Z M220 748 L223.5 751.5 L227 748 Z" fill="#d8dadb"/></svg>
<div class="a" style="left:186.5px;top:706px;width:52.5px;height:16px;background:#6e7276;"></div>
<div class="t" style="top:708.9px;font-size:8.5px;line-height:10.2px;height:10.2px;color:#d8dadb;left:213px;width:0;"><span class="c">Randomize</span></div>
<div class="a" style="left:70px;top:744.5px;width:169px;height:18px;background:#6e7276;"></div>
<div class="t" style="top:748.9px;font-size:8.5px;line-height:10.2px;height:10.2px;color:#d8dadb;left:154px;width:0;"><span class="c">Reverse Clip</span></div>
<div class="a" style="left:70px;top:767px;width:169px;height:17.5px;background:#6e7276;"></div>
<div class="t" style="top:770.9px;font-size:8.5px;line-height:10.2px;height:10.2px;color:#d8dadb;left:154px;width:0;"><span class="c">Normalize Clip</span></div>
<div class="a" style="left:23.6px;top:827px;width:66.4px;height:18px;background:#e8e9ea;"></div>
<div class="t" style="top:830.1px;font-size:9px;line-height:10.8px;height:10.8px;color:#555;font-weight:700;left:56.8px;width:0;"><span class="c">SLICE EDIT</span></div>
<div class="a" style="left:97px;top:827px;width:67px;height:18px;background:#e8e9ea;"></div>
<div class="t" style="top:830.1px;font-size:9px;line-height:10.8px;height:10.8px;color:#555;font-weight:700;left:130.5px;width:0;"><span class="c">VOCAL EDIT</span></div>
<div class="a" style="left:169.7px;top:827px;width:68px;height:18px;background:#e8e9ea;"></div>
<div class="t" style="top:830.1px;font-size:9px;line-height:10.8px;height:10.8px;color:#555;font-weight:700;left:203.7px;width:0;"><span class="c">COMP EDIT</span></div>
<div class="a" style="left:255px;top:561px;width:57px;height:287px;background:#f9d199;"></div>
<div class="a" style="left:312px;top:561px;width:22px;height:287px;background:#d9dbdc;"></div>
<div class="a" style="left:1402px;top:561px;width:22px;height:22.5px;background:#d9dbdc;"></div>
<div class="a" style="left:1402px;top:583.5px;width:21.5px;height:259.5px;background:#f59a22;"></div>
<div class="a" style="left:334px;top:561px;width:1068px;height:286px;background:#141414;"></div>
<div class="a" style="left:337px;top:565.5px;width:1062px;height:277.5px;background:#f59a22;"></div>
<div class="a" style="left:337px;top:582.5px;width:1062px;height:1.2px;background:#f8c77e;"></div>
<div class="a" style="left:365.5px;top:566px;width:1px;height:17px;background:#f8c77e;"></div>
<div class="a" style="left:380px;top:566px;width:1px;height:17px;background:#f8c77e;"></div>
<div class="a" style="left:402px;top:566px;width:1px;height:17px;background:#f8c77e;"></div>
<div class="a" style="left:466px;top:566px;width:1px;height:17px;background:#f8c77e;"></div>
<div class="a" style="left:494px;top:566px;width:1px;height:17px;background:#f8c77e;"></div>
<div class="a" style="left:534px;top:566px;width:1px;height:17px;background:#f8c77e;"></div>
<div class="a" style="left:575.5px;top:566px;width:1px;height:17px;background:#f8c77e;"></div>
<div class="a" style="left:603px;top:566px;width:1px;height:17px;background:#f8c77e;"></div>
<div class="a" style="left:641px;top:566px;width:1px;height:17px;background:#f8c77e;"></div>
<div class="a" style="left:669px;top:566px;width:1px;height:17px;background:#f8c77e;"></div>
<div class="a" style="left:733px;top:566px;width:1px;height:17px;background:#f8c77e;"></div>
<div class="a" style="left:761.6px;top:566px;width:1px;height:17px;background:#f8c77e;"></div>
<div class="a" style="left:800px;top:566px;width:1px;height:17px;background:#f8c77e;"></div>
<div class="a" style="left:868px;top:566px;width:1px;height:17px;background:#f8c77e;"></div>
<div class="a" style="left:908px;top:566px;width:1px;height:17px;background:#f8c77e;"></div>
<div class="a" style="left:936px;top:566px;width:1px;height:17px;background:#f8c77e;"></div>
<div class="a" style="left:974px;top:566px;width:1px;height:17px;background:#f8c77e;"></div>
<div class="a" style="left:1001px;top:566px;width:1px;height:17px;background:#f8c77e;"></div>
<div class="a" style="left:1029px;top:566px;width:1px;height:17px;background:#f8c77e;"></div>
<div class="a" style="left:1069px;top:566px;width:1px;height:17px;background:#f8c77e;"></div>
<div class="a" style="left:1109px;top:566px;width:1px;height:17px;background:#f8c77e;"></div>
<div class="a" style="left:1138px;top:566px;width:1px;height:17px;background:#f8c77e;"></div>
<div class="a" style="left:1179px;top:566px;width:1px;height:17px;background:#f8c77e;"></div>
<div class="a" style="left:1203px;top:566px;width:1px;height:17px;background:#f8c77e;"></div>
<div class="a" style="left:1244px;top:566px;width:1px;height:17px;background:#f8c77e;"></div>
<div class="a" style="left:1268px;top:566px;width:1px;height:17px;background:#f8c77e;"></div>
<div class="a" style="left:1295px;top:566px;width:1px;height:17px;background:#f8c77e;"></div>
<div class="a" style="left:1337px;top:566px;width:1px;height:17px;background:#f8c77e;"></div>
<div class="a" style="left:1376px;top:566px;width:1px;height:17px;background:#f8c77e;"></div>
<svg class="a" style="left:334px;top:562px;" width="1090" height="285" viewBox="383 594 1090 285"><use href="#w1" fill="#50380f"/><use href="#w2" fill="#50380f"/><use href="#g1" fill="#c98a2a"/><use href="#g2" fill="#c98a2a"/><rect x="386" y="683" width="1062" height="1" fill="#fde3b5"/></svg>
<svg class="a" style="left:321px;top:648px;" width="1092" height="65" viewBox="370 680 1092 65"><circle cx="386" cy="686" r="2.5" fill="none" stroke="#222" stroke-width="1.2"/><circle cx="918" cy="686" r="3" fill="none" stroke="#222" stroke-width="1.2"/><circle cx="1450" cy="686" r="2.5" fill="#fff" stroke="#222" stroke-width="1.2"/><path d="M374 736 L380 732.5 L380 739.5 Z" fill="#222" stroke="#ddd" stroke-width="0.6"/><path d="M1459 736 L1453 732.5 L1453 739.5 Z" fill="#222" stroke="#ddd" stroke-width="0.6"/></svg>
<div class="a" style="left:0px;top:847px;width:1445px;height:2px;background:#1c222a;"></div>
<div class="a" style="left:0px;top:849px;width:1445px;height:1px;background:#8fb3d3;"></div>
<div class="a" style="left:0px;top:849px;width:1445px;height:51px;background:#dcdddf;"></div>
<div class="a" style="left:207.7px;top:853px;width:1px;height:43px;background:#c4c6c8;"></div>
<div class="a" style="left:254.6px;top:853px;width:1px;height:43px;background:#c4c6c8;"></div>
<div class="a" style="left:323.6px;top:853px;width:1px;height:43px;background:#c4c6c8;"></div>
<div class="a" style="left:404.5px;top:853px;width:1px;height:43px;background:#c4c6c8;"></div>
<div class="a" style="left:551px;top:853px;width:1px;height:43px;background:#c4c6c8;"></div>
<div class="a" style="left:695.8px;top:853px;width:1px;height:43px;background:#c4c6c8;"></div>
<div class="a" style="left:726.5px;top:853px;width:1px;height:43px;background:#c4c6c8;"></div>
<div class="a" style="left:756px;top:853px;width:1px;height:43px;background:#c4c6c8;"></div>
<div class="a" style="left:786px;top:853px;width:1px;height:43px;background:#c4c6c8;"></div>
<div class="a" style="left:816.5px;top:853px;width:1px;height:43px;background:#c4c6c8;"></div>
<div class="a" style="left:846.6px;top:853px;width:1px;height:43px;background:#c4c6c8;"></div>
<div class="a" style="left:876.2px;top:853px;width:1px;height:43px;background:#c4c6c8;"></div>
<div class="a" style="left:906px;top:853px;width:1px;height:43px;background:#c4c6c8;"></div>
<div class="a" style="left:1074.4px;top:853px;width:1px;height:43px;background:#c4c6c8;"></div>
<div class="a" style="left:1198.6px;top:853px;width:1px;height:43px;background:#c4c6c8;"></div>
<div class="t" style="top:861.7px;font-size:5.5px;line-height:6.6px;height:6.6px;color:#6e7174;font-weight:700;left:230.5px;width:0;"><span class="c">KEYS</span></div>
<div class="t" style="top:879.2px;font-size:5.5px;line-height:6.6px;height:6.6px;color:#6e7174;font-weight:700;left:230.5px;width:0;"><span class="c">GROOVE</span></div>
<div class="t" style="top:856px;font-size:5.5px;line-height:6.6px;height:6.6px;color:#6e7174;font-weight:700;left:288.5px;width:0;"><span class="c">Q RECORD</span></div>
<div class="t" style="top:865.4px;font-size:13.5px;line-height:16.2px;height:16.2px;color:#55585b;font-weight:700;left:289px;width:0;"><span class="c">1/16</span></div>
<div class="t" style="top:885.7px;font-size:5.5px;line-height:6.6px;height:6.6px;color:#6e7174;font-weight:700;left:288.5px;width:0;"><span class="c">QUANTIZE</span></div>
<svg class="a" style="left:312px;top:870px;" width="10" height="7" viewBox="361 902 10 7"><path d="M362.5 904 L369.5 904 L366 908 Z" fill="#6b6e71"/></svg>
<div class="t" style="top:854.7px;font-size:5.5px;line-height:6.6px;height:6.6px;color:#6e7174;font-weight:700;left:363px;width:0;"><span class="c">SYNC MODE</span></div>
<div class="t" style="top:863.5px;font-size:10px;line-height:12px;height:12px;color:#55585b;font-weight:700;left:363px;width:0;"><span class="c">Internal</span></div>
<div class="t" style="top:887.7px;font-size:5.5px;line-height:6.6px;height:6.6px;color:#a9abad;font-weight:700;left:363px;width:0;"><span class="c">SEND CLOCK</span></div>
<svg class="a" style="left:392px;top:866px;" width="10" height="7" viewBox="441 898 10 7"><path d="M442.5 900 L449.5 900 L446 904 Z" fill="#6b6e71"/></svg>
<div class="t" style="top:857.6px;font-size:14px;line-height:16.8px;height:16.8px;color:#55585b;font-weight:700;left:442px;width:0;letter-spacing:1.5px;"><span class="c">1.</span></div>
<div class="t" style="top:857.6px;font-size:14px;line-height:16.8px;height:16.8px;color:#55585b;font-weight:700;left:464px;width:0;letter-spacing:1.5px;"><span class="c">1.</span></div>
<div class="t" style="top:857.6px;font-size:14px;line-height:16.8px;height:16.8px;color:#55585b;font-weight:700;left:486px;width:0;letter-spacing:1.5px;"><span class="c">1.</span></div>
<div class="t" style="top:857.6px;font-size:14px;line-height:16.8px;height:16.8px;color:#55585b;font-weight:700;left:511px;width:0;letter-spacing:1.5px;"><span class="c">0</span></div>
<div class="t" style="top:872.6px;font-size:14px;line-height:16.8px;height:16.8px;color:#55585b;font-weight:700;left:473.5px;width:0;letter-spacing:0.3px;"><span class="c">0:00:00:000</span></div>
<svg class="a" style="left:526px;top:860px;" width="12" height="12" viewBox="575 892 12 12"><path d="M578 897 L581 893.5 L584 897 Z M578 899 L581 902.5 L584 899 Z" fill="#6b6e71"/></svg>
<svg class="a" style="left:526px;top:875px;" width="12" height="12" viewBox="575 907 12 12"><path d="M578 912 L581 908.5 L584 912 Z M578 914 L581 917.5 L584 914 Z" fill="#6b6e71"/></svg>
<svg class="a" style="left:577px;top:854px;" width="18" height="18" viewBox="626 886 18 18"><path d="M630 902 L633 889 L637 889 L639 902 Z" fill="#6b6e71"/><path d="M634 898 L641 890" stroke="#dcdddf" stroke-width="1.3"/></svg>
<div class="t" style="top:875.5px;font-size:5.5px;line-height:6.6px;height:6.6px;color:#6e7174;font-weight:700;left:586px;width:0;"><span class="c">CLICK</span></div>
<div class="a" style="left:570px;top:884px;width:32px;height:11px;background:#6e7174;"></div>
<div class="t" style="top:886.4px;font-size:5.5px;line-height:6.6px;height:6.6px;color:#eee;font-weight:700;left:586px;width:0;"><span class="c">PRE</span></div>
<div class="a" style="left:609.3px;top:853px;width:11.2px;height:44px;background:#9ccbf0;border-radius:6px;"></div>
<div class="a" style="left:609.3px;top:853px;width:11.2px;height:11.5px;background:#6e7174;border-radius:6px;border:1px solid #8ab;box-sizing:border-box;"></div>
<div class="t" style="top:851.2px;font-size:13.5px;line-height:16.2px;height:16.2px;color:#55585b;font-weight:700;left:656px;width:0;letter-spacing:0.3px;"><span class="c">104.000</span></div>
<div class="t" style="top:871px;font-size:5.5px;line-height:6.6px;height:6.6px;color:#6e7174;font-weight:700;left:655px;width:0;"><span class="c">TAP</span></div>
<div class="t" style="top:879.2px;font-size:13.5px;line-height:16.2px;height:16.2px;color:#55585b;font-weight:700;left:657px;width:0;"><span class="c">4/&nbsp; 4</span></div>
<svg class="a" style="left:699px;top:861px;" width="212" height="27" viewBox="748 893 212 27"><path d="M752 906.3 L757.5 900.5 L761 900.5 L755.5 906.3 L761 912 L757.5 912 Z M758.5 906.3 L764 900.5 L767.5 900.5 L762 906.3 L767.5 912 L764 912 Z" fill="#6b6e71"/><path d="M797 906.3 L791.5 900.5 L788 900.5 L793.5 906.3 L788 912 L791.5 912 Z M790.5 906.3 L785 900.5 L781.5 900.5 L787 906.3 L781.5 912 L785 912 Z" fill="#6b6e71"/><rect x="813" y="899" width="14.5" height="14.5" fill="#6b6e71"/><path d="M843 897.5 L858.5 906.3 L843 915 Z" fill="#6b6e71"/><circle cx="880" cy="906.3" r="8.5" fill="#ea4a28" stroke="#5a1a10" stroke-width="0.8"/><path d="M933.5 908.5 A6.5 4.8 0 0 1 941 901.5 L944 901.5" fill="none" stroke="#6b6e71" stroke-width="2.2"/><path d="M943 898 L947.5 901.5 L943 905 Z" fill="#6b6e71"/><path d="M946.5 904 A6.5 4.8 0 0 1 939 911 L936 911" fill="none" stroke="#6b6e71" stroke-width="2.2"/><path d="M937 907.5 L932.5 911 L937 914.5 Z" fill="#6b6e71"/></svg>
<div class="t" style="top:860.2px;font-size:5.5px;line-height:6.6px;height:6.6px;color:#6e7174;font-weight:700;left:861px;width:0;"><span class="c">DUB</span></div>
<div class="t" style="top:883.2px;font-size:5.5px;line-height:6.6px;height:6.6px;color:#6e7174;font-weight:700;left:861px;width:0;"><span class="c">ALT</span></div>
<div class="t" style="top:857.6px;font-size:14px;line-height:16.8px;height:16.8px;color:#55585b;font-weight:700;left:925px;width:0;"><span class="c">L</span></div>
<div class="t" style="top:872.6px;font-size:14px;line-height:16.8px;height:16.8px;color:#55585b;font-weight:700;left:925px;width:0;"><span class="c">R</span></div>
<div class="t" style="top:857.6px;font-size:14px;line-height:16.8px;height:16.8px;color:#55585b;font-weight:700;left:965px;width:0;letter-spacing:1.5px;"><span class="c">9.</span></div>
<div class="t" style="top:857.6px;font-size:14px;line-height:16.8px;height:16.8px;color:#55585b;font-weight:700;left:987px;width:0;letter-spacing:1.5px;"><span class="c">2.</span></div>
<div class="t" style="top:857.6px;font-size:14px;line-height:16.8px;height:16.8px;color:#55585b;font-weight:700;left:1009px;width:0;letter-spacing:1.5px;"><span class="c">1.</span></div>
<div class="t" style="top:857.6px;font-size:14px;line-height:16.8px;height:16.8px;color:#55585b;font-weight:700;left:1036px;width:0;letter-spacing:1.5px;"><span class="c">0</span></div>
<div class="t" style="top:872.6px;font-size:14px;line-height:16.8px;height:16.8px;color:#55585b;font-weight:700;left:961px;width:0;letter-spacing:1.5px;"><span class="c">17.</span></div>
<div class="t" style="top:872.6px;font-size:14px;line-height:16.8px;height:16.8px;color:#55585b;font-weight:700;left:987px;width:0;letter-spacing:1.5px;"><span class="c">2.</span></div>
<div class="t" style="top:872.6px;font-size:14px;line-height:16.8px;height:16.8px;color:#55585b;font-weight:700;left:1009px;width:0;letter-spacing:1.5px;"><span class="c">1.</span></div>
<div class="t" style="top:872.6px;font-size:14px;line-height:16.8px;height:16.8px;color:#55585b;font-weight:700;left:1036px;width:0;letter-spacing:1.5px;"><span class="c">0</span></div>
<svg class="a" style="left:1049px;top:860px;" width="12" height="12" viewBox="1098 892 12 12"><path d="M1101 897 L1104 893.5 L1107 897 Z M1101 899 L1104 902.5 L1107 899 Z" fill="#6b6e71"/></svg>
<svg class="a" style="left:1049px;top:875px;" width="12" height="12" viewBox="1098 907 12 12"><path d="M1101 912 L1104 908.5 L1107 912 Z M1101 914 L1104 917.5 L1107 914 Z" fill="#6b6e71"/></svg>
<div class="a" style="left:1090px;top:857px;width:6px;height:6px;background:#c2c4c6;"></div>
<div class="a" style="left:1090px;top:869px;width:6px;height:6px;background:#c2c4c6;"></div>
<div class="a" style="left:1090px;top:881px;width:6px;height:6px;background:#c2c4c6;"></div>
<div class="t" style="top:858px;font-size:5px;line-height:6px;height:6px;color:#c2c4c6;font-weight:700;left:1100px;line-height:5px;">DEMO<br>MODE</div>
<div class="t" style="top:870px;font-size:5px;line-height:6px;height:6px;color:#c2c4c6;font-weight:700;left:1100px;line-height:5px;">DISK<br>OVERLOAD</div>
<div class="t" style="top:882px;font-size:5px;line-height:6px;height:6px;color:#c2c4c6;font-weight:700;left:1100px;line-height:5px;">AUTOMATION<br>OVERRIDE</div>
<div class="t" style="top:857.2px;font-size:5.5px;line-height:6.6px;height:6.6px;color:#a9abad;font-weight:700;left:1137px;width:0;"><span class="c">CALC</span></div>
<svg class="a" style="left:1148px;top:854px;" width="12" height="12" viewBox="1197 886 12 12"><circle cx="1203" cy="892" r="4" fill="none" stroke="#c2c4c6" stroke-width="1.2" stroke-dasharray="1.5 1"/></svg>
<div class="a" style="left:1149px;top:870px;width:11px;height:18px;background:#ddd;border:1px solid #c2c4c6;box-sizing:border-box;"></div>
<div class="a" style="left:1151px;top:882px;width:7px;height:4px;background:#777;"></div>
<div class="a" style="left:1165px;top:855px;width:11px;height:33px;background:#ddd;border:1px solid #c2c4c6;box-sizing:border-box;"></div>
<div class="a" style="left:1181px;top:855px;width:11px;height:33px;background:#ddd;border:1px solid #c2c4c6;box-sizing:border-box;"></div>
<svg class="a" style="left:1149px;top:854px;" width="44" height="35" viewBox="1198 886 44 35"><rect x="1215.5" y="889" width="8" height="1.6" fill="#c0c2c4"/><rect x="1231.5" y="889" width="8" height="1.6" fill="#c0c2c4"/><rect x="1215.5" y="892" width="8" height="1.6" fill="#c0c2c4"/><rect x="1231.5" y="892" width="8" height="1.6" fill="#c0c2c4"/><rect x="1215.5" y="895" width="8" height="1.6" fill="#c0c2c4"/><rect x="1231.5" y="895" width="8" height="1.6" fill="#c0c2c4"/><rect x="1215.5" y="898" width="8" height="1.6" fill="#c0c2c4"/><rect x="1231.5" y="898" width="8" height="1.6" fill="#c0c2c4"/><rect x="1215.5" y="901" width="8" height="1.6" fill="#c0c2c4"/><rect x="1231.5" y="901" width="8" height="1.6" fill="#c0c2c4"/><rect x="1215.5" y="904" width="8" height="1.6" fill="#c0c2c4"/><rect x="1231.5" y="904" width="8" height="1.6" fill="#c0c2c4"/><rect x="1215.5" y="907" width="8" height="1.6" fill="#c0c2c4"/><rect x="1231.5" y="907" width="8" height="1.6" fill="#c0c2c4"/><rect x="1215.5" y="910" width="8" height="1.6" fill="#c0c2c4"/><rect x="1231.5" y="910" width="8" height="1.6" fill="#c0c2c4"/><rect x="1215.5" y="913" width="8" height="1.6" fill="#c0c2c4"/><rect x="1231.5" y="913" width="8" height="1.6" fill="#c0c2c4"/><rect x="1215.5" y="916" width="8" height="1.6" fill="#c0c2c4"/><rect x="1231.5" y="916" width="8" height="1.6" fill="#c0c2c4"/><rect x="1199.5" y="904" width="8" height="1.5" fill="#c0c2c4"/><rect x="1199.5" y="907" width="8" height="1.5" fill="#c0c2c4"/><rect x="1199.5" y="910" width="8" height="1.5" fill="#c0c2c4"/><rect x="1199.5" y="913" width="8" height="1.5" fill="#c0c2c4"/></svg>
<div class="t" style="top:890.5px;font-size:5px;line-height:6px;height:6px;color:#c4c6c8;font-weight:700;left:1155px;width:0;"><span class="c">DSP</span></div>
<div class="t" style="top:890.5px;font-size:5px;line-height:6px;height:6px;color:#c4c6c8;font-weight:700;left:1170.5px;width:0;"><span class="c">IN</span></div>
<div class="t" style="top:890.5px;font-size:5px;line-height:6px;height:6px;color:#c4c6c8;font-weight:700;left:1186.5px;width:0;"><span class="c">OUT</span></div>
<div class="a" style="left:1206.8px;top:854px;width:29.6px;height:33px;background:#eee;border:1px solid #777;border-radius:2px;box-sizing:border-box;"></div>
<div class="a" style="left:1207.5px;top:871.5px;width:28.2px;height:15px;background:#6e7174;"></div>
<div class="t" style="top:857.7px;font-size:5.5px;line-height:6.6px;height:6.6px;color:#888;left:1221.5px;width:0;line-height:5.5px;"><span class="c">DELAY<br>COMP</span></div>
<div class="t" style="top:874.2px;font-size:8.5px;line-height:10.2px;height:10.2px;color:#eee;font-weight:700;left:1221.5px;width:0;"><span class="c">ON</span></div>
<div class="t" style="top:889.6px;font-size:6.5px;line-height:7.8px;height:7.8px;color:#55585b;font-weight:700;left:1221px;width:0;"><span class="c">3022</span></div></div></div>
<div class="win" style="left:49px;top:32px;width:1445px;height:900px;border-radius:9px 9px 7px 7px;box-shadow:0 12px 36px rgba(0,0,0,0.75);">
<div class="a" style="left:0px;top:0px;width:1445px;height:900px;background:#1c1e1f;"></div>
<div class="a" style="left:0px;top:0px;width:1445px;height:45px;background:#27292b;"></div>
<div class="a" style="left:6.4px;top:6.1px;width:10.6px;height:10.6px;background:#ee5a52;border-radius:50%;"></div>
<div class="a" style="left:23.1px;top:6.1px;width:10.6px;height:10.6px;background:#f4bb3a;border-radius:50%;"></div>
<div class="a" style="left:39.7px;top:6.1px;width:10.6px;height:10.6px;background:#5cc342;border-radius:50%;"></div>
<div class="t" style="top:4.9px;font-size:11px;line-height:13.2px;height:13.2px;color:#a8aaac;font-weight:700;left:722px;width:0;"><span class="c">Another Polytone.reason</span></div>
<svg class="a" style="left:19px;top:25px;" width="18" height="18" viewBox="68 57 18 18"><path d="M77 58.5 L84.5 62.8 L84.5 71.2 L77 75.5 L69.5 71.2 L69.5 62.8 Z" fill="none" stroke="#d8dadb" stroke-width="2.2"/><path d="M73.5 64.5 L77 62.5 L80.5 64.5 L77 66.5 L77 71 L73.5 69 Z" fill="#d8dadb"/></svg>
<div class="t" style="top:27.6px;font-size:11.5px;line-height:13.8px;height:13.8px;color:#d4d6d7;left:39px;">Reason</div>
<div class="a" style="left:91.5px;top:27px;width:1px;height:15px;background:#45484b;"></div>
<div class="a" style="left:232px;top:27px;width:1px;height:15px;background:#45484b;"></div>
<div class="a" style="left:437px;top:27px;width:1px;height:15px;background:#45484b;"></div>
<div class="t" style="top:28.3px;font-size:9.5px;line-height:11.4px;height:11.4px;color:#b5b7b9;left:129px;width:0;"><span class="c">Devices</span></div>
<div class="t" style="top:28.3px;font-size:9.5px;line-height:11.4px;height:11.4px;color:#b5b7b9;left:194px;width:0;"><span class="c">Browser</span></div>
<div class="t" style="top:28.3px;font-size:9.5px;line-height:11.4px;height:11.4px;color:#b5b7b9;left:268px;width:0;"><span class="c">Mixer</span></div>
<div class="t" style="top:28.3px;font-size:9.5px;line-height:11.4px;height:11.4px;color:#b5b7b9;left:334px;width:0;"><span class="c">Rack</span></div>
<div class="a" style="left:369.5px;top:26px;width:59px;height:16.5px;background:#c9cbcc;border-radius:1px;"></div>
<div class="t" style="top:28.3px;font-size:9.5px;line-height:11.4px;height:11.4px;color:#2b2d2f;left:399px;width:0;"><span class="c">Sequencer</span></div>
<div class="a" style="left:0px;top:45px;width:1445px;height:16px;background:#141617;"></div>
<div class="a" style="left:8px;top:61px;width:1429px;height:36px;background:#28292b;"></div>
<div class="a" style="left:17px;top:70px;width:20px;height:20px;background:#c9cbcc;"></div>
<svg class="a" style="left:17px;top:70px;" width="20" height="20" viewBox="66 102 20 20"><path d="M72.5 105.5 L72.5 118 L75.5 115 L78 120 L80 119 L77.5 114.3 L81.5 114 Z" fill="#2a2c2e"/></svg>
<svg class="a" style="left:41px;top:71px;" width="16" height="18" viewBox="90 103 16 18"><path d="M94 118.5 L95 113.5 L102 105.5 L104.5 107.5 L97.5 115.5 Z" fill="none" stroke="#9fa2a5" stroke-width="1.4"/></svg>
<svg class="a" style="left:62px;top:71px;" width="19" height="18" viewBox="111 103 19 18"><path d="M113 116 L120 108 L128 108 L121 116 Z M113 116 L113 118 L121 118 L128 110" fill="none" stroke="#9fa2a5" stroke-width="1.4"/></svg>
<svg class="a" style="left:85px;top:71px;" width="19" height="18" viewBox="134 103 19 18"><path d="M137 111 L143 105 L150 112 L144 118 Z" fill="none" stroke="#9fa2a5" stroke-width="1.6"/><circle cx="144" cy="112" r="1" fill="#9fa2a5"/></svg>
<svg class="a" style="left:108px;top:71px;" width="19" height="18" viewBox="157 103 19 18"><path d="M160 105 L172 105 L172 114.5 L163 114.5 L161 118 L160.5 114.5 L160 114.5 Z" fill="none" stroke="#9fa2a5" stroke-width="1.3"/><path d="M163 112.5 L163 107 L166 110 L169 107 L169 112.5" fill="none" stroke="#9fa2a5" stroke-width="1.2"/></svg>
<svg class="a" style="left:131px;top:71px;" width="18" height="18" viewBox="180 103 18 18"><circle cx="187" cy="110" r="5" fill="none" stroke="#9fa2a5" stroke-width="1.6"/><path d="M190.5 113.5 L195 118" stroke="#9fa2a5" stroke-width="1.8"/></svg>
<svg class="a" style="left:153px;top:71px;" width="19" height="18" viewBox="202 103 19 18"><path d="M206 111 L206 107.5 M208.5 111 L208.5 105.5 M211 111 L211 105 M213.5 111 L213.5 106 M216 112 L216 108.5 M205 110 L205 114 Q207 119 212 119 Q217 119 217 113" fill="none" stroke="#9fa2a5" stroke-width="1.5" stroke-linecap="round"/></svg>
<svg class="a" style="left:177px;top:71px;" width="16" height="18" viewBox="226 103 16 18"><path d="M230 109.5 L232 109.5 L236 105.5 L236 118.5 L232 114.5 L230 114.5 Z" fill="none" stroke="#9fa2a5" stroke-width="1.3"/></svg>
<div class="a" style="left:203px;top:72px;width:30px;height:16.5px;background:#c5c7c8;"></div>
<div class="t" style="top:77px;font-size:5.5px;line-height:6.6px;height:6.6px;color:#505356;font-weight:700;left:218px;width:0;"><span class="c">SNAP</span></div>
<div class="t" style="top:71.6px;font-size:14px;line-height:16.8px;height:16.8px;color:#d5d7d8;font-weight:700;left:269px;">Bar</div>
<svg class="a" style="left:313px;top:76px;" width="10" height="6" viewBox="362 108 10 6"><path d="M364 109.5 L370 109.5 L367 113 Z" fill="#9fa2a5"/></svg>
<div class="a" style="left:328px;top:64px;width:1px;height:31px;background:#45484b;"></div>
<div class="a" style="left:454.5px;top:64px;width:1px;height:31px;background:#45484b;"></div>
<div class="a" style="left:573px;top:64px;width:1px;height:31px;background:#45484b;"></div>
<div class="a" style="left:648px;top:64px;width:1px;height:31px;background:#45484b;"></div>
<div class="a" style="left:723px;top:64px;width:1px;height:31px;background:#45484b;"></div>
<div class="a" style="left:787px;top:64px;width:1px;height:31px;background:#45484b;"></div>
<div class="a" style="left:859px;top:64px;width:1px;height:31px;background:#45484b;"></div>
<div class="t" style="top:65.6px;font-size:9.5px;line-height:11.4px;height:11.4px;color:#c9cbcc;font-weight:700;left:331px;">Position</div>
<div class="t" style="top:65.6px;font-size:9.5px;line-height:11.4px;height:11.4px;color:#c9cbcc;font-weight:700;left:456px;">Length</div>
<div class="t" style="top:65.6px;font-size:9.5px;line-height:11.4px;height:11.4px;color:#c9cbcc;font-weight:700;left:575px;">Fade In</div>
<div class="t" style="top:65.6px;font-size:9.5px;line-height:11.4px;height:11.4px;color:#c9cbcc;font-weight:700;left:651px;">Fade Out</div>
<div class="t" style="top:65.6px;font-size:9.5px;line-height:11.4px;height:11.4px;color:#c9cbcc;font-weight:700;left:726px;">Level (dB)</div>
<div class="t" style="top:65.6px;font-size:9.5px;line-height:11.4px;height:11.4px;color:#c9cbcc;font-weight:700;left:790px;">Transpose</div>
<div class="t" style="top:78.1px;font-size:12px;line-height:14.4px;height:14.4px;color:#d8dadb;left:356px;width:0;letter-spacing:2px;"><span class="c">9.</span></div>
<div class="t" style="top:78.1px;font-size:12px;line-height:14.4px;height:14.4px;color:#d8dadb;left:376px;width:0;letter-spacing:2px;"><span class="c">2.</span></div>
<div class="t" style="top:78.1px;font-size:12px;line-height:14.4px;height:14.4px;color:#d8dadb;left:396px;width:0;letter-spacing:2px;"><span class="c">1.</span></div>
<div class="t" style="top:78.1px;font-size:12px;line-height:14.4px;height:14.4px;color:#d8dadb;left:420px;width:0;letter-spacing:2px;"><span class="c">0</span></div>
<div class="t" style="top:78.1px;font-size:12px;line-height:14.4px;height:14.4px;color:#d8dadb;left:476px;width:0;letter-spacing:2px;"><span class="c">2.</span></div>
<div class="t" style="top:78.1px;font-size:12px;line-height:14.4px;height:14.4px;color:#d8dadb;left:496px;width:0;letter-spacing:2px;"><span class="c">0.</span></div>
<div class="t" style="top:78.1px;font-size:12px;line-height:14.4px;height:14.4px;color:#d8dadb;left:516px;width:0;letter-spacing:2px;"><span class="c">0.</span></div>
<div class="t" style="top:78.1px;font-size:12px;line-height:14.4px;height:14.4px;color:#d8dadb;left:539px;width:0;letter-spacing:2px;"><span class="c">0</span></div>
<div class="t" style="top:78.1px;font-size:12px;line-height:14.4px;height:14.4px;color:#d8dadb;left:590px;width:0;letter-spacing:2px;"><span class="c">0.</span></div>
<div class="t" style="top:78.1px;font-size:12px;line-height:14.4px;height:14.4px;color:#d8dadb;left:614px;width:0;letter-spacing:2px;"><span class="c">0</span></div>
<div class="t" style="top:78.1px;font-size:12px;line-height:14.4px;height:14.4px;color:#d8dadb;left:666px;width:0;letter-spacing:2px;"><span class="c">0.</span></div>
<div class="t" style="top:78.1px;font-size:12px;line-height:14.4px;height:14.4px;color:#d8dadb;left:690px;width:0;letter-spacing:2px;"><span class="c">0</span></div>
<div class="t" style="top:78.1px;font-size:12px;line-height:14.4px;height:14.4px;color:#d8dadb;left:751px;width:0;letter-spacing:2px;"><span class="c">0.00</span></div>
<div class="t" style="top:78.1px;font-size:12px;line-height:14.4px;height:14.4px;color:#d8dadb;left:819px;width:0;letter-spacing:2px;"><span class="c">0. 00</span></div>
<svg class="a" style="left:434px;top:78px;" width="8" height="15" viewBox="483 110 8 15"><path d="M483.8 115.5 L487 111.5 L490.2 115.5 Z M483.8 118.5 L487 122.5 L490.2 118.5 Z" fill="#d8dadb"/></svg>
<svg class="a" style="left:553.5px;top:78px;" width="8" height="15" viewBox="602.5 110 8 15"><path d="M603.3 115.5 L606.5 111.5 L609.7 115.5 Z M603.3 118.5 L606.5 122.5 L609.7 118.5 Z" fill="#d8dadb"/></svg>
<svg class="a" style="left:628.5px;top:78px;" width="8" height="15" viewBox="677.5 110 8 15"><path d="M678.3 115.5 L681.5 111.5 L684.7 115.5 Z M678.3 118.5 L681.5 122.5 L684.7 118.5 Z" fill="#d8dadb"/></svg>
<svg class="a" style="left:704px;top:78px;" width="8" height="15" viewBox="753 110 8 15"><path d="M753.8 115.5 L757 111.5 L760.2 115.5 Z M753.8 118.5 L757 122.5 L760.2 118.5 Z" fill="#d8dadb"/></svg>
<svg class="a" style="left:767.5px;top:78px;" width="8" height="15" viewBox="816.5 110 8 15"><path d="M817.3 115.5 L820.5 111.5 L823.7 115.5 Z M817.3 118.5 L820.5 122.5 L823.7 118.5 Z" fill="#d8dadb"/></svg>
<svg class="a" style="left:838px;top:78px;" width="8" height="15" viewBox="887 110 8 15"><path d="M887.8 115.5 L891 111.5 L894.2 115.5 Z M887.8 118.5 L891 122.5 L894.2 118.5 Z" fill="#d8dadb"/></svg>
<div class="a" style="left:8px;top:97px;width:247px;height:30px;background:#1f2123;"></div>
<div class="a" style="left:15px;top:101px;width:52px;height:18px;border:1px solid #a5a7a9;box-sizing:border-box;"></div>
<div class="t" style="top:106.82px;font-size:5.8px;line-height:6.96px;height:6.96px;color:#d0d2d3;font-weight:700;left:41px;width:0;"><span class="c">MANUAL REC</span></div>
<div class="t" style="top:102.7px;font-size:13px;line-height:15.6px;height:15.6px;color:#74777a;left:81px;width:0;"><span class="c">M</span></div>
<div class="t" style="top:102.7px;font-size:13px;line-height:15.6px;height:15.6px;color:#74777a;left:97px;width:0;"><span class="c">S</span></div>
<svg class="a" style="left:165px;top:100px;" width="20" height="20" viewBox="214 132 20 20"><circle cx="224" cy="142" r="6.5" fill="#8b8e91"/><path d="M220 142 L228 142 M224 138 L224 146" stroke="#1f2123" stroke-width="2"/></svg>
<svg class="a" style="left:189px;top:102px;" width="30" height="16" viewBox="238 134 30 16"><path d="M243.5 141 L246 144.5 L249 139 L252 144" stroke="#8b8e91" stroke-width="0.7" fill="none"/><circle cx="243.5" cy="141" r="1.5" fill="#8b8e91"/><circle cx="246" cy="144.5" r="1.5" fill="#8b8e91"/><circle cx="249" cy="139" r="1.5" fill="#8b8e91"/><circle cx="252" cy="144" r="1.5" fill="#8b8e91"/><path d="M258.5 140.5 L264 140.5 L261.2 143.5 Z" fill="#8b8e91"/></svg>
<svg class="a" style="left:227px;top:103px;" width="14" height="14" viewBox="276 135 14 14"><path d="M278 137 L288 137 L288 147 L278 147 Z M278 140.5 L288 140.5 M278 144 L288 144 M281.5 137 L281.5 147 M285 137 L285 147" fill="none" stroke="#5b5e61" stroke-width="1"/></svg>
<div class="a" style="left:255px;top:99px;width:1183px;height:28px;background:#222426;"></div>
<div class="a" style="left:255px;top:99px;width:1183px;height:14px;background:#2f3133;"></div>
<div class="a" style="left:256px;top:126px;width:1181px;height:1px;background:#9a9c9e;"></div>
<div class="a" style="left:256px;top:127px;width:1181px;height:28px;background:#52575d;"></div>
<div class="a" style="left:256px;top:155px;width:1181px;height:12px;background:#2d3135;"></div>
<div class="a" style="left:256px;top:167px;width:1181px;height:25.5px;background:#52575d;"></div>
<div class="a" style="left:256px;top:192.5px;width:1181px;height:11.5px;background:#2d3135;"></div>
<div class="a" style="left:256px;top:204px;width:1181px;height:50px;background:#52575d;"></div>
<div class="a" style="left:256px;top:254px;width:1181px;height:3px;background:#2d3135;"></div>
<div class="a" style="left:256px;top:257px;width:1181px;height:48px;background:#6a6e72;"></div>
<div class="a" style="left:256px;top:305px;width:1181px;height:12px;background:#2d3135;"></div>
<div class="a" style="left:256px;top:317px;width:1181px;height:51px;background:#52575d;"></div>
<div class="a" style="left:256px;top:368px;width:1181px;height:12px;background:#2d3135;"></div>
<div class="a" style="left:256px;top:380px;width:1181px;height:24px;background:#52575d;"></div>
<div class="a" style="left:256px;top:404px;width:1181px;height:11.5px;background:#2d3135;"></div>
<div class="a" style="left:256px;top:415.5px;width:1181px;height:25.5px;background:#52575d;"></div>
<div class="a" style="left:256px;top:441px;width:1181px;height:12px;background:#2d3135;"></div>
<div class="a" style="left:256px;top:453px;width:1181px;height:49px;background:#52575d;"></div>
<div class="a" style="left:260.3px;top:127px;width:1.2px;height:375px;background:#9a9ea2;opacity:0.8;"></div>
<div class="a" style="left:260.4px;top:100px;width:1px;height:27px;background:#9a9ea2;opacity:0.8;"></div>
<div class="t" style="top:100.3px;font-size:9.5px;line-height:11.4px;height:11.4px;color:#d0d2d3;left:262.7px;">1</div>
<div class="a" style="left:272.44px;top:123px;width:1px;height:3px;background:#9a9c9e;opacity:0.6;"></div>
<div class="a" style="left:284.47px;top:123px;width:1px;height:3px;background:#9a9c9e;opacity:0.6;"></div>
<div class="a" style="left:296.51px;top:123px;width:1px;height:3px;background:#9a9c9e;opacity:0.6;"></div>
<div class="a" style="left:308.45px;top:127px;width:1.2px;height:375px;background:#9a9ea2;opacity:0.8;"></div>
<div class="a" style="left:308.55px;top:100px;width:1px;height:27px;background:#9a9ea2;opacity:0.8;"></div>
<div class="t" style="top:100.3px;font-size:9.5px;line-height:11.4px;height:11.4px;color:#d0d2d3;left:310.85px;">2</div>
<div class="a" style="left:320.59px;top:123px;width:1px;height:3px;background:#9a9c9e;opacity:0.6;"></div>
<div class="a" style="left:332.62px;top:123px;width:1px;height:3px;background:#9a9c9e;opacity:0.6;"></div>
<div class="a" style="left:344.66px;top:123px;width:1px;height:3px;background:#9a9c9e;opacity:0.6;"></div>
<div class="a" style="left:356.6px;top:127px;width:1.2px;height:375px;background:#9a9ea2;opacity:0.8;"></div>
<div class="a" style="left:356.7px;top:100px;width:1px;height:27px;background:#9a9ea2;opacity:0.8;"></div>
<div class="t" style="top:100.3px;font-size:9.5px;line-height:11.4px;height:11.4px;color:#d0d2d3;left:359px;">3</div>
<div class="a" style="left:368.74px;top:123px;width:1px;height:3px;background:#9a9c9e;opacity:0.6;"></div>
<div class="a" style="left:380.77px;top:123px;width:1px;height:3px;background:#9a9c9e;opacity:0.6;"></div>
<div class="a" style="left:392.81px;top:123px;width:1px;height:3px;background:#9a9c9e;opacity:0.6;"></div>
<div class="a" style="left:404.75px;top:127px;width:1.2px;height:375px;background:#9a9ea2;opacity:0.8;"></div>
<div class="a" style="left:404.85px;top:100px;width:1px;height:27px;background:#9a9ea2;opacity:0.8;"></div>
<div class="t" style="top:100.3px;font-size:9.5px;line-height:11.4px;height:11.4px;color:#d0d2d3;left:407.15px;">4</div>
<div class="a" style="left:416.89px;top:123px;width:1px;height:3px;background:#9a9c9e;opacity:0.6;"></div>
<div class="a" style="left:428.92px;top:123px;width:1px;height:3px;background:#9a9c9e;opacity:0.6;"></div>
<div class="a" style="left:440.96px;top:123px;width:1px;height:3px;background:#9a9c9e;opacity:0.6;"></div>
<div class="a" style="left:452.9px;top:127px;width:1.2px;height:375px;background:#9a9ea2;opacity:0.8;"></div>
<div class="a" style="left:453px;top:100px;width:1px;height:27px;background:#9a9ea2;opacity:0.8;"></div>
<div class="t" style="top:100.3px;font-size:9.5px;line-height:11.4px;height:11.4px;color:#d0d2d3;left:455.3px;">5</div>
<div class="a" style="left:465.04px;top:123px;width:1px;height:3px;background:#9a9c9e;opacity:0.6;"></div>
<div class="a" style="left:477.08px;top:123px;width:1px;height:3px;background:#9a9c9e;opacity:0.6;"></div>
<div class="a" style="left:489.11px;top:123px;width:1px;height:3px;background:#9a9c9e;opacity:0.6;"></div>
<div class="a" style="left:501.05px;top:127px;width:1.2px;height:375px;background:#9a9ea2;opacity:0.8;"></div>
<div class="a" style="left:501.15px;top:100px;width:1px;height:27px;background:#9a9ea2;opacity:0.8;"></div>
<div class="t" style="top:100.3px;font-size:9.5px;line-height:11.4px;height:11.4px;color:#d0d2d3;left:503.45px;">6</div>
<div class="a" style="left:513.19px;top:123px;width:1px;height:3px;background:#9a9c9e;opacity:0.6;"></div>
<div class="a" style="left:525.23px;top:123px;width:1px;height:3px;background:#9a9c9e;opacity:0.6;"></div>
<div class="a" style="left:537.26px;top:123px;width:1px;height:3px;background:#9a9c9e;opacity:0.6;"></div>
<div class="a" style="left:549.2px;top:127px;width:1.2px;height:375px;background:#9a9ea2;opacity:0.8;"></div>
<div class="a" style="left:549.3px;top:100px;width:1px;height:27px;background:#9a9ea2;opacity:0.8;"></div>
<div class="t" style="top:100.3px;font-size:9.5px;line-height:11.4px;height:11.4px;color:#d0d2d3;left:551.6px;">7</div>
<div class="a" style="left:561.34px;top:123px;width:1px;height:3px;background:#9a9c9e;opacity:0.6;"></div>
<div class="a" style="left:573.38px;top:123px;width:1px;height:3px;background:#9a9c9e;opacity:0.6;"></div>
<div class="a" style="left:585.41px;top:123px;width:1px;height:3px;background:#9a9c9e;opacity:0.6;"></div>
<div class="a" style="left:597.35px;top:127px;width:1.2px;height:375px;background:#9a9ea2;opacity:0.8;"></div>
<div class="a" style="left:597.45px;top:100px;width:1px;height:27px;background:#9a9ea2;opacity:0.8;"></div>
<div class="t" style="top:100.3px;font-size:9.5px;line-height:11.4px;height:11.4px;color:#d0d2d3;left:599.75px;">8</div>
<div class="a" style="left:609.49px;top:123px;width:1px;height:3px;background:#9a9c9e;opacity:0.6;"></div>
<div class="a" style="left:621.53px;top:123px;width:1px;height:3px;background:#9a9c9e;opacity:0.6;"></div>
<div class="a" style="left:633.56px;top:123px;width:1px;height:3px;background:#9a9c9e;opacity:0.6;"></div>
<div class="a" style="left:645.5px;top:127px;width:1.2px;height:375px;background:#9a9ea2;opacity:0.8;"></div>
<div class="a" style="left:645.6px;top:100px;width:1px;height:27px;background:#9a9ea2;opacity:0.8;"></div>
<div class="t" style="top:100.3px;font-size:9.5px;line-height:11.4px;height:11.4px;color:#d0d2d3;left:647.9px;">9</div>
<div class="a" style="left:657.64px;top:123px;width:1px;height:3px;background:#9a9c9e;opacity:0.6;"></div>
<div class="a" style="left:669.67px;top:123px;width:1px;height:3px;background:#9a9c9e;opacity:0.6;"></div>
<div class="a" style="left:681.71px;top:123px;width:1px;height:3px;background:#9a9c9e;opacity:0.6;"></div>
<div class="a" style="left:693.65px;top:127px;width:1.2px;height:375px;background:#9a9ea2;opacity:0.8;"></div>
<div class="a" style="left:693.75px;top:100px;width:1px;height:27px;background:#9a9ea2;opacity:0.8;"></div>
<div class="t" style="top:100.3px;font-size:9.5px;line-height:11.4px;height:11.4px;color:#d0d2d3;left:696.05px;">10</div>
<div class="a" style="left:705.79px;top:123px;width:1px;height:3px;background:#9a9c9e;opacity:0.6;"></div>
<div class="a" style="left:717.83px;top:123px;width:1px;height:3px;background:#9a9c9e;opacity:0.6;"></div>
<div class="a" style="left:729.86px;top:123px;width:1px;height:3px;background:#9a9c9e;opacity:0.6;"></div>
<div class="a" style="left:741.8px;top:127px;width:1.2px;height:375px;background:#9a9ea2;opacity:0.8;"></div>
<div class="a" style="left:741.9px;top:100px;width:1px;height:27px;background:#9a9ea2;opacity:0.8;"></div>
<div class="t" style="top:100.3px;font-size:9.5px;line-height:11.4px;height:11.4px;color:#d0d2d3;left:744.2px;">11</div>
<div class="a" style="left:753.94px;top:123px;width:1px;height:3px;background:#9a9c9e;opacity:0.6;"></div>
<div class="a" style="left:765.98px;top:123px;width:1px;height:3px;background:#9a9c9e;opacity:0.6;"></div>
<div class="a" style="left:778.01px;top:123px;width:1px;height:3px;background:#9a9c9e;opacity:0.6;"></div>
<div class="a" style="left:789.95px;top:127px;width:1.2px;height:375px;background:#9a9ea2;opacity:0.8;"></div>
<div class="a" style="left:790.05px;top:100px;width:1px;height:27px;background:#9a9ea2;opacity:0.8;"></div>
<div class="t" style="top:100.3px;font-size:9.5px;line-height:11.4px;height:11.4px;color:#d0d2d3;left:792.35px;">12</div>
<div class="a" style="left:802.09px;top:123px;width:1px;height:3px;background:#9a9c9e;opacity:0.6;"></div>
<div class="a" style="left:814.12px;top:123px;width:1px;height:3px;background:#9a9c9e;opacity:0.6;"></div>
<div class="a" style="left:826.16px;top:123px;width:1px;height:3px;background:#9a9c9e;opacity:0.6;"></div>
<div class="a" style="left:838.1px;top:127px;width:1.2px;height:375px;background:#9a9ea2;opacity:0.8;"></div>
<div class="a" style="left:838.2px;top:100px;width:1px;height:27px;background:#9a9ea2;opacity:0.8;"></div>
<div class="t" style="top:100.3px;font-size:9.5px;line-height:11.4px;height:11.4px;color:#d0d2d3;left:840.5px;">13</div>
<div class="a" style="left:850.24px;top:123px;width:1px;height:3px;background:#9a9c9e;opacity:0.6;"></div>
<div class="a" style="left:862.27px;top:123px;width:1px;height:3px;background:#9a9c9e;opacity:0.6;"></div>
<div class="a" style="left:874.31px;top:123px;width:1px;height:3px;background:#9a9c9e;opacity:0.6;"></div>
<div class="a" style="left:886.25px;top:127px;width:1.2px;height:375px;background:#9a9ea2;opacity:0.8;"></div>
<div class="a" style="left:886.35px;top:100px;width:1px;height:27px;background:#9a9ea2;opacity:0.8;"></div>
<div class="t" style="top:100.3px;font-size:9.5px;line-height:11.4px;height:11.4px;color:#d0d2d3;left:888.65px;">14</div>
<div class="a" style="left:898.39px;top:123px;width:1px;height:3px;background:#9a9c9e;opacity:0.6;"></div>
<div class="a" style="left:910.42px;top:123px;width:1px;height:3px;background:#9a9c9e;opacity:0.6;"></div>
<div class="a" style="left:922.46px;top:123px;width:1px;height:3px;background:#9a9c9e;opacity:0.6;"></div>
<div class="a" style="left:934.4px;top:127px;width:1.2px;height:375px;background:#9a9ea2;opacity:0.8;"></div>
<div class="a" style="left:934.5px;top:100px;width:1px;height:27px;background:#9a9ea2;opacity:0.8;"></div>
<div class="t" style="top:100.3px;font-size:9.5px;line-height:11.4px;height:11.4px;color:#d0d2d3;left:936.8px;">15</div>
<div class="a" style="left:946.54px;top:123px;width:1px;height:3px;background:#9a9c9e;opacity:0.6;"></div>
<div class="a" style="left:958.58px;top:123px;width:1px;height:3px;background:#9a9c9e;opacity:0.6;"></div>
<div class="a" style="left:970.61px;top:123px;width:1px;height:3px;background:#9a9c9e;opacity:0.6;"></div>
<div class="a" style="left:982.55px;top:127px;width:1.2px;height:375px;background:#9a9ea2;opacity:0.8;"></div>
<div class="a" style="left:982.65px;top:100px;width:1px;height:27px;background:#9a9ea2;opacity:0.8;"></div>
<div class="t" style="top:100.3px;font-size:9.5px;line-height:11.4px;height:11.4px;color:#d0d2d3;left:984.95px;">16</div>
<div class="a" style="left:994.69px;top:123px;width:1px;height:3px;background:#9a9c9e;opacity:0.6;"></div>
<div class="a" style="left:1006.73px;top:123px;width:1px;height:3px;background:#9a9c9e;opacity:0.6;"></div>
<div class="a" style="left:1018.76px;top:123px;width:1px;height:3px;background:#9a9c9e;opacity:0.6;"></div>
<div class="a" style="left:1030.7px;top:127px;width:1.2px;height:375px;background:#9a9ea2;opacity:0.8;"></div>
<div class="a" style="left:1030.8px;top:100px;width:1px;height:27px;background:#9a9ea2;opacity:0.8;"></div>
<div class="t" style="top:100.3px;font-size:9.5px;line-height:11.4px;height:11.4px;color:#d0d2d3;left:1033.1px;">17</div>
<div class="a" style="left:1042.84px;top:123px;width:1px;height:3px;background:#9a9c9e;opacity:0.6;"></div>
<div class="a" style="left:1054.88px;top:123px;width:1px;height:3px;background:#9a9c9e;opacity:0.6;"></div>
<div class="a" style="left:1066.91px;top:123px;width:1px;height:3px;background:#9a9c9e;opacity:0.6;"></div>
<div class="a" style="left:1078.85px;top:127px;width:1.2px;height:375px;background:#9a9ea2;opacity:0.8;"></div>
<div class="a" style="left:1078.95px;top:100px;width:1px;height:27px;background:#9a9ea2;opacity:0.8;"></div>
<div class="t" style="top:100.3px;font-size:9.5px;line-height:11.4px;height:11.4px;color:#d0d2d3;left:1081.25px;">18</div>
<div class="a" style="left:1090.99px;top:123px;width:1px;height:3px;background:#9a9c9e;opacity:0.6;"></div>
<div class="a" style="left:1103.02px;top:123px;width:1px;height:3px;background:#9a9c9e;opacity:0.6;"></div>
<div class="a" style="left:1115.06px;top:123px;width:1px;height:3px;background:#9a9c9e;opacity:0.6;"></div>
<div class="a" style="left:1127px;top:127px;width:1.2px;height:375px;background:#9a9ea2;opacity:0.8;"></div>
<div class="a" style="left:1127.1px;top:100px;width:1px;height:27px;background:#9a9ea2;opacity:0.8;"></div>
<div class="t" style="top:100.3px;font-size:9.5px;line-height:11.4px;height:11.4px;color:#d0d2d3;left:1129.4px;">19</div>
<div class="a" style="left:1139.14px;top:123px;width:1px;height:3px;background:#9a9c9e;opacity:0.6;"></div>
<div class="a" style="left:1151.17px;top:123px;width:1px;height:3px;background:#9a9c9e;opacity:0.6;"></div>
<div class="a" style="left:1163.21px;top:123px;width:1px;height:3px;background:#9a9c9e;opacity:0.6;"></div>
<div class="a" style="left:1175.15px;top:127px;width:1.2px;height:375px;background:#9a9ea2;opacity:0.8;"></div>
<div class="a" style="left:1175.25px;top:100px;width:1px;height:27px;background:#9a9ea2;opacity:0.8;"></div>
<div class="t" style="top:100.3px;font-size:9.5px;line-height:11.4px;height:11.4px;color:#d0d2d3;left:1177.55px;">20</div>
<div class="a" style="left:1187.29px;top:123px;width:1px;height:3px;background:#9a9c9e;opacity:0.6;"></div>
<div class="a" style="left:1199.33px;top:123px;width:1px;height:3px;background:#9a9c9e;opacity:0.6;"></div>
<div class="a" style="left:1211.36px;top:123px;width:1px;height:3px;background:#9a9c9e;opacity:0.6;"></div>
<div class="a" style="left:1223.3px;top:127px;width:1.2px;height:375px;background:#9a9ea2;opacity:0.8;"></div>
<div class="a" style="left:1223.4px;top:100px;width:1px;height:27px;background:#9a9ea2;opacity:0.8;"></div>
<div class="t" style="top:100.3px;font-size:9.5px;line-height:11.4px;height:11.4px;color:#d0d2d3;left:1225.7px;">21</div>
<div class="a" style="left:1235.44px;top:123px;width:1px;height:3px;background:#9a9c9e;opacity:0.6;"></div>
<div class="a" style="left:1247.48px;top:123px;width:1px;height:3px;background:#9a9c9e;opacity:0.6;"></div>
<div class="a" style="left:1259.51px;top:123px;width:1px;height:3px;background:#9a9c9e;opacity:0.6;"></div>
<div class="a" style="left:1271.45px;top:127px;width:1.2px;height:375px;background:#9a9ea2;opacity:0.8;"></div>
<div class="a" style="left:1271.55px;top:100px;width:1px;height:27px;background:#9a9ea2;opacity:0.8;"></div>
<div class="t" style="top:100.3px;font-size:9.5px;line-height:11.4px;height:11.4px;color:#d0d2d3;left:1273.85px;">22</div>
<div class="a" style="left:1283.59px;top:123px;width:1px;height:3px;background:#9a9c9e;opacity:0.6;"></div>
<div class="a" style="left:1295.62px;top:123px;width:1px;height:3px;background:#9a9c9e;opacity:0.6;"></div>
<div class="a" style="left:1307.66px;top:123px;width:1px;height:3px;background:#9a9c9e;opacity:0.6;"></div>
<div class="a" style="left:1319.6px;top:127px;width:1.2px;height:375px;background:#9a9ea2;opacity:0.8;"></div>
<div class="a" style="left:1319.7px;top:100px;width:1px;height:27px;background:#9a9ea2;opacity:0.8;"></div>
<div class="t" style="top:100.3px;font-size:9.5px;line-height:11.4px;height:11.4px;color:#d0d2d3;left:1322px;">23</div>
<div class="a" style="left:1331.74px;top:123px;width:1px;height:3px;background:#9a9c9e;opacity:0.6;"></div>
<div class="a" style="left:1343.77px;top:123px;width:1px;height:3px;background:#9a9c9e;opacity:0.6;"></div>
<div class="a" style="left:1355.81px;top:123px;width:1px;height:3px;background:#9a9c9e;opacity:0.6;"></div>
<div class="a" style="left:1367.75px;top:127px;width:1.2px;height:375px;background:#9a9ea2;opacity:0.8;"></div>
<div class="a" style="left:1367.85px;top:100px;width:1px;height:27px;background:#9a9ea2;opacity:0.8;"></div>
<div class="t" style="top:100.3px;font-size:9.5px;line-height:11.4px;height:11.4px;color:#d0d2d3;left:1370.15px;">24</div>
<div class="a" style="left:1379.89px;top:123px;width:1px;height:3px;background:#9a9c9e;opacity:0.6;"></div>
<div class="a" style="left:1391.92px;top:123px;width:1px;height:3px;background:#9a9c9e;opacity:0.6;"></div>
<div class="a" style="left:1403.96px;top:123px;width:1px;height:3px;background:#9a9c9e;opacity:0.6;"></div>
<div class="a" style="left:1415.9px;top:127px;width:1.2px;height:375px;background:#9a9ea2;opacity:0.8;"></div>
<div class="a" style="left:1416px;top:100px;width:1px;height:27px;background:#9a9ea2;opacity:0.8;"></div>
<div class="t" style="top:100.3px;font-size:9.5px;line-height:11.4px;height:11.4px;color:#d0d2d3;left:1418.3px;">25</div>
<div class="a" style="left:1428.04px;top:123px;width:1px;height:3px;background:#9a9c9e;opacity:0.6;"></div>
<div class="a" style="left:1440.08px;top:123px;width:1px;height:3px;background:#9a9c9e;opacity:0.6;"></div>
<div class="a" style="left:1452.11px;top:123px;width:1px;height:3px;background:#9a9c9e;opacity:0.6;"></div>
<div class="t" style="top:111px;font-size:7.5px;line-height:9px;height:9px;color:#bbb;left:264px;">4/4</div>
<div class="a" style="left:657.64px;top:113px;width:1.2px;height:389px;background:#cfd1d3;opacity:0.85;"></div>
<div class="a" style="left:1042.84px;top:113px;width:1.2px;height:389px;background:#cfd1d3;opacity:0.85;"></div>
<svg class="a" style="left:651.14px;top:112px;" width="20" height="14" viewBox="700.14 144 20 14"><path d="M707.1375 146.5 L712.1375 146.5 L716.1375 151 L712.1375 155.5 L707.1375 155.5 Z" fill="#e6e7e8"/></svg>
<svg class="a" style="left:1030.34px;top:112px;" width="20" height="14" viewBox="1079.34 144 20 14"><path d="M1093.3375 146.5 L1088.3375 146.5 L1084.3375 151 L1088.3375 155.5 L1093.3375 155.5 Z" fill="#e6e7e8"/></svg>
<svg class="a" style="left:256px;top:112px;" width="15" height="14" viewBox="305 144 15 14"><path d="M306 148 L316 148 L316 152 L311 156 L306 152 Z" fill="#e6e7e8"/></svg>
<div class="a" style="left:1425.5px;top:132px;width:7.5px;height:304px;background:#a4a7aa;border-radius:4px;opacity:0.85;"></div>
<div class="a" style="left:254.5px;top:98.5px;width:1183px;height:404.5px;box-sizing:border-box;border:1.6px solid #5a9fd6;"></div>
<div class="a" style="left:658.14px;top:169.5px;width:385.2px;height:20.5px;background:#e2612a;box-sizing:border-box;border:1px solid #8a3414;"></div>
<div class="a" style="left:850.74px;top:169.5px;width:1px;height:20.5px;background:#8a3414;"></div>
<div class="a" style="left:659.14px;top:185px;width:383.2px;height:1.3px;background:#b8430f;"></div>
<svg class="a" style="left:658.14px;top:169.5px;" width="385.2" height="20.5" viewBox="707.14 201.5 385.2 20.5"><rect x="710.1" y="205.5" width="4.9" height="1" fill="#d85a22"/><rect x="717.7" y="206.8" width="3.5" height="1" fill="#d85a22"/><rect x="723.4" y="211.2" width="4.7" height="1" fill="#d85a22"/><rect x="727.0" y="204.3" width="4.8" height="1" fill="#d85a22"/><rect x="732.6" y="212.4" width="1.5" height="1" fill="#d85a22"/><rect x="738.2" y="211.9" width="2.4" height="1" fill="#d85a22"/><rect x="746.9" y="213.9" width="1.6" height="1" fill="#d85a22"/><rect x="750.1" y="210.0" width="5.3" height="1" fill="#d85a22"/><rect x="755.4" y="206.4" width="3.2" height="1" fill="#d85a22"/><rect x="758.5" y="206.4" width="3.3" height="1" fill="#d85a22"/><rect x="764.5" y="206.6" width="2.4" height="1" fill="#d85a22"/><rect x="768.8" y="209.1" width="2.7" height="1" fill="#d85a22"/><rect x="772.0" y="213.2" width="3.7" height="1" fill="#d85a22"/><rect x="778.8" y="206.0" width="5.5" height="1" fill="#d85a22"/><rect x="787.0" y="205.3" width="2.8" height="1" fill="#d85a22"/><rect x="794.3" y="211.8" width="5.2" height="1" fill="#d85a22"/><rect x="799.8" y="213.1" width="4.2" height="1" fill="#d85a22"/><rect x="804.6" y="210.5" width="5.0" height="1" fill="#d85a22"/><rect x="812.7" y="209.6" width="3.9" height="1" fill="#d85a22"/><rect x="815.9" y="206.7" width="4.7" height="1" fill="#d85a22"/><rect x="821.4" y="205.9" width="3.7" height="1" fill="#d85a22"/><rect x="828.6" y="211.4" width="3.0" height="1" fill="#d85a22"/><rect x="834.3" y="209.6" width="4.6" height="1" fill="#d85a22"/><rect x="840.4" y="208.3" width="3.5" height="1" fill="#d85a22"/><rect x="843.6" y="204.5" width="4.3" height="1" fill="#d85a22"/><rect x="852.5" y="210.5" width="3.1" height="1" fill="#d85a22"/><rect x="856.5" y="209.5" width="5.4" height="1" fill="#d85a22"/><rect x="864.1" y="209.9" width="4.9" height="1" fill="#d85a22"/><rect x="868.5" y="209.7" width="5.3" height="1" fill="#d85a22"/><rect x="875.0" y="209.1" width="2.6" height="1" fill="#d85a22"/><rect x="881.3" y="214.5" width="1.5" height="1" fill="#d85a22"/><rect x="889.0" y="213.0" width="5.0" height="1" fill="#d85a22"/><rect x="896.4" y="212.9" width="3.6" height="1" fill="#d85a22"/><rect x="902.8" y="208.7" width="1.7" height="1" fill="#d85a22"/><rect x="911.0" y="210.3" width="2.3" height="1" fill="#d85a22"/><rect x="917.0" y="209.3" width="2.9" height="1" fill="#d85a22"/><rect x="922.1" y="209.9" width="4.0" height="1" fill="#d85a22"/><rect x="928.8" y="209.0" width="1.6" height="1" fill="#d85a22"/><rect x="933.2" y="205.9" width="3.8" height="1" fill="#d85a22"/><rect x="941.3" y="212.8" width="4.7" height="1" fill="#d85a22"/><rect x="949.2" y="206.8" width="4.9" height="1" fill="#d85a22"/><rect x="956.3" y="204.9" width="1.6" height="1" fill="#d85a22"/><rect x="959.3" y="212.3" width="2.5" height="1" fill="#d85a22"/><rect x="963.0" y="210.9" width="2.9" height="1" fill="#d85a22"/><rect x="966.4" y="205.8" width="3.6" height="1" fill="#d85a22"/><rect x="970.4" y="207.0" width="4.3" height="1" fill="#d85a22"/><rect x="976.2" y="207.5" width="3.4" height="1" fill="#d85a22"/><rect x="979.3" y="208.3" width="3.2" height="1" fill="#d85a22"/><rect x="983.4" y="205.2" width="5.1" height="1" fill="#d85a22"/><rect x="989.5" y="206.3" width="3.9" height="1" fill="#d85a22"/><rect x="997.4" y="204.2" width="1.6" height="1" fill="#d85a22"/><rect x="1001.3" y="211.9" width="2.1" height="1" fill="#d85a22"/><rect x="1008.5" y="211.5" width="3.7" height="1" fill="#d85a22"/><rect x="1012.8" y="214.7" width="4.7" height="1" fill="#d85a22"/><rect x="1018.9" y="206.5" width="4.1" height="1" fill="#d85a22"/><rect x="1024.3" y="210.3" width="2.8" height="1" fill="#d85a22"/><rect x="1031.1" y="204.6" width="2.7" height="1" fill="#d85a22"/><rect x="1039.9" y="213.6" width="2.7" height="1" fill="#d85a22"/><rect x="1048.0" y="207.4" width="5.3" height="1" fill="#d85a22"/><rect x="1055.5" y="208.6" width="2.5" height="1" fill="#d85a22"/><rect x="1058.5" y="213.7" width="1.7" height="1" fill="#d85a22"/><rect x="1066.5" y="214.6" width="3.8" height="1" fill="#d85a22"/><rect x="1070.5" y="213.5" width="5.4" height="1" fill="#d85a22"/><rect x="1077.7" y="209.6" width="3.0" height="1" fill="#d85a22"/><rect x="1082.8" y="206.3" width="4.2" height="1" fill="#d85a22"/><rect x="1088.4" y="206.1" width="1.9" height="1" fill="#d85a22"/></svg>
<div class="a" style="left:260.9px;top:206.5px;width:12.2px;height:20px;background:#e2612a;box-sizing:border-box;border:1px solid #8a3414;"></div>
<svg class="a" style="left:260.9px;top:206.5px;" width="12" height="20" viewBox="309.9 238.5 12 20"><rect x="312.9" y="252" width="6" height="1.5" fill="#9a3a12"/></svg>
<div class="a" style="left:838.7px;top:206.5px;width:12.2px;height:20px;background:#e2612a;box-sizing:border-box;border:1px solid #8a3414;"></div>
<svg class="a" style="left:838.7px;top:206.5px;" width="12" height="20" viewBox="887.7 238.5 12 20"><rect x="890.6999999999999" y="252" width="6" height="1.5" fill="#9a3a12"/></svg>
<div class="a" style="left:1031.3px;top:206.5px;width:12.2px;height:20px;background:#e2612a;box-sizing:border-box;border:1px solid #8a3414;"></div>
<svg class="a" style="left:1031.3px;top:206.5px;" width="12" height="20" viewBox="1080.3 238.5 12 20"><rect x="1083.3" y="252" width="6" height="1.5" fill="#9a3a12"/></svg>
<div class="a" style="left:1079.45px;top:206.5px;width:12.2px;height:20px;background:#e2612a;box-sizing:border-box;border:1px solid #8a3414;"></div>
<svg class="a" style="left:1079.45px;top:206.5px;" width="12" height="20" viewBox="1128.45 238.5 12 20"><rect x="1131.4499999999998" y="252" width="6" height="1.5" fill="#9a3a12"/></svg>
<div class="a" style="left:272.94px;top:231.5px;width:794.47px;height:20px;background:#e2612a;box-sizing:border-box;border:1px solid #8a3414;"></div>
<div class="a" style="left:465.54px;top:231.5px;width:1px;height:20px;background:#8a3414;"></div>
<div class="a" style="left:658.14px;top:231.5px;width:1px;height:20px;background:#8a3414;"></div>
<div class="a" style="left:850.74px;top:231.5px;width:1px;height:20px;background:#8a3414;"></div>
<svg class="a" style="left:272.94px;top:231.5px;" width="794.47" height="20" viewBox="321.94 263.5 794.47 20"><rect x="324.9" y="278.4" width="5.3" height="1" fill="#cc5520"/><rect x="328.3" y="267.1" width="4.8" height="1" fill="#cc5520"/><rect x="335.7" y="274.7" width="2.7" height="1" fill="#cc5520"/><rect x="342.3" y="273.9" width="3.8" height="1" fill="#cc5520"/><rect x="346.3" y="271.6" width="3.1" height="1" fill="#cc5520"/><rect x="353.6" y="278.9" width="5.3" height="1" fill="#cc5520"/><rect x="359.9" y="271.8" width="2.6" height="1" fill="#cc5520"/><rect x="363.1" y="266.4" width="3.4" height="1" fill="#cc5520"/><rect x="368.0" y="270.9" width="5.1" height="1" fill="#cc5520"/><rect x="374.2" y="273.3" width="2.4" height="1" fill="#cc5520"/><rect x="377.3" y="270.2" width="2.0" height="1" fill="#cc5520"/><rect x="383.4" y="279.0" width="4.2" height="1" fill="#cc5520"/><rect x="387.5" y="277.6" width="4.7" height="1" fill="#cc5520"/><rect x="394.9" y="277.8" width="4.6" height="1" fill="#cc5520"/><rect x="402.6" y="270.6" width="5.4" height="1" fill="#cc5520"/><rect x="411.4" y="268.1" width="4.5" height="1" fill="#cc5520"/><rect x="418.7" y="272.0" width="3.6" height="1" fill="#cc5520"/><rect x="424.6" y="278.0" width="3.5" height="1" fill="#cc5520"/><rect x="432.6" y="270.6" width="5.0" height="1" fill="#cc5520"/><rect x="441.0" y="272.0" width="3.8" height="1" fill="#cc5520"/><rect x="449.5" y="275.4" width="3.4" height="1" fill="#cc5520"/><rect x="453.8" y="270.2" width="4.3" height="1" fill="#cc5520"/><rect x="457.8" y="277.8" width="2.6" height="1" fill="#cc5520"/><rect x="466.3" y="270.0" width="5.3" height="1" fill="#cc5520"/><rect x="473.5" y="272.6" width="3.6" height="1" fill="#cc5520"/><rect x="480.5" y="273.6" width="2.7" height="1" fill="#cc5520"/><rect x="484.7" y="272.7" width="5.2" height="1" fill="#cc5520"/><rect x="491.4" y="267.0" width="4.8" height="1" fill="#cc5520"/><rect x="498.8" y="277.8" width="2.3" height="1" fill="#cc5520"/><rect x="506.3" y="266.8" width="4.1" height="1" fill="#cc5520"/><rect x="510.9" y="268.9" width="5.0" height="1" fill="#cc5520"/><rect x="514.5" y="272.8" width="4.9" height="1" fill="#cc5520"/><rect x="519.0" y="268.7" width="5.0" height="1" fill="#cc5520"/><rect x="524.5" y="275.3" width="1.6" height="1" fill="#cc5520"/><rect x="529.7" y="268.2" width="4.2" height="1" fill="#cc5520"/><rect x="533.2" y="278.4" width="1.6" height="1" fill="#cc5520"/><rect x="540.6" y="266.3" width="2.5" height="1" fill="#cc5520"/><rect x="548.5" y="268.0" width="2.2" height="1" fill="#cc5520"/><rect x="555.6" y="271.0" width="1.7" height="1" fill="#cc5520"/><rect x="564.6" y="268.0" width="1.6" height="1" fill="#cc5520"/><rect x="569.6" y="274.0" width="4.5" height="1" fill="#cc5520"/><rect x="573.3" y="270.4" width="1.6" height="1" fill="#cc5520"/><rect x="579.0" y="276.0" width="4.5" height="1" fill="#cc5520"/><rect x="587.4" y="275.8" width="4.9" height="1" fill="#cc5520"/><rect x="594.6" y="272.1" width="2.4" height="1" fill="#cc5520"/><rect x="601.6" y="270.1" width="1.9" height="1" fill="#cc5520"/><rect x="607.3" y="277.4" width="2.0" height="1" fill="#cc5520"/><rect x="613.8" y="271.1" width="3.6" height="1" fill="#cc5520"/><rect x="617.7" y="278.5" width="2.5" height="1" fill="#cc5520"/><rect x="624.3" y="271.5" width="1.6" height="1" fill="#cc5520"/><rect x="630.7" y="267.8" width="1.7" height="1" fill="#cc5520"/><rect x="633.9" y="268.1" width="1.9" height="1" fill="#cc5520"/><rect x="640.7" y="272.6" width="5.4" height="1" fill="#cc5520"/><rect x="649.3" y="278.9" width="2.4" height="1" fill="#cc5520"/><rect x="654.9" y="269.3" width="3.9" height="1" fill="#cc5520"/><rect x="661.7" y="276.4" width="4.3" height="1" fill="#cc5520"/><rect x="666.2" y="271.5" width="3.6" height="1" fill="#cc5520"/><rect x="669.3" y="266.5" width="3.1" height="1" fill="#cc5520"/><rect x="672.9" y="275.4" width="2.5" height="1" fill="#cc5520"/><rect x="676.5" y="268.4" width="2.4" height="1" fill="#cc5520"/><rect x="680.8" y="272.8" width="3.4" height="1" fill="#cc5520"/><rect x="685.7" y="274.3" width="2.3" height="1" fill="#cc5520"/><rect x="694.1" y="278.5" width="4.4" height="1" fill="#cc5520"/><rect x="699.7" y="272.6" width="3.8" height="1" fill="#cc5520"/><rect x="703.0" y="271.4" width="3.6" height="1" fill="#cc5520"/><rect x="707.1" y="267.2" width="4.7" height="1" fill="#cc5520"/><rect x="712.3" y="272.7" width="5.2" height="1" fill="#cc5520"/><rect x="719.0" y="269.8" width="5.4" height="1" fill="#cc5520"/><rect x="724.2" y="266.2" width="4.2" height="1" fill="#cc5520"/><rect x="727.8" y="270.0" width="4.9" height="1" fill="#cc5520"/><rect x="734.9" y="266.2" width="3.3" height="1" fill="#cc5520"/><rect x="740.3" y="272.3" width="2.3" height="1" fill="#cc5520"/><rect x="746.9" y="267.0" width="2.6" height="1" fill="#cc5520"/><rect x="752.1" y="278.2" width="1.8" height="1" fill="#cc5520"/><rect x="759.6" y="268.5" width="3.8" height="1" fill="#cc5520"/><rect x="765.0" y="272.0" width="4.5" height="1" fill="#cc5520"/><rect x="770.3" y="267.6" width="2.0" height="1" fill="#cc5520"/><rect x="773.8" y="277.1" width="4.1" height="1" fill="#cc5520"/><rect x="782.6" y="275.0" width="1.6" height="1" fill="#cc5520"/><rect x="789.5" y="276.1" width="4.4" height="1" fill="#cc5520"/><rect x="795.5" y="270.6" width="3.3" height="1" fill="#cc5520"/><rect x="803.3" y="269.5" width="3.6" height="1" fill="#cc5520"/><rect x="809.2" y="278.4" width="4.7" height="1" fill="#cc5520"/><rect x="817.8" y="276.9" width="2.7" height="1" fill="#cc5520"/><rect x="822.2" y="272.4" width="2.5" height="1" fill="#cc5520"/><rect x="827.7" y="274.8" width="5.2" height="1" fill="#cc5520"/><rect x="834.2" y="276.6" width="1.9" height="1" fill="#cc5520"/><rect x="839.4" y="279.0" width="2.1" height="1" fill="#cc5520"/><rect x="844.9" y="266.9" width="1.8" height="1" fill="#cc5520"/><rect x="853.3" y="278.9" width="4.1" height="1" fill="#cc5520"/><rect x="857.0" y="269.9" width="2.4" height="1" fill="#cc5520"/><rect x="864.0" y="274.9" width="3.3" height="1" fill="#cc5520"/><rect x="870.2" y="267.5" width="3.7" height="1" fill="#cc5520"/><rect x="878.9" y="275.8" width="1.9" height="1" fill="#cc5520"/><rect x="885.0" y="275.3" width="2.5" height="1" fill="#cc5520"/><rect x="893.4" y="272.0" width="4.3" height="1" fill="#cc5520"/><rect x="898.8" y="278.9" width="4.6" height="1" fill="#cc5520"/><rect x="905.2" y="267.9" width="3.3" height="1" fill="#cc5520"/><rect x="908.4" y="273.7" width="5.0" height="1" fill="#cc5520"/><rect x="912.5" y="272.6" width="3.4" height="1" fill="#cc5520"/><rect x="917.9" y="275.2" width="5.2" height="1" fill="#cc5520"/><rect x="925.1" y="272.1" width="5.3" height="1" fill="#cc5520"/><rect x="930.1" y="275.7" width="4.1" height="1" fill="#cc5520"/><rect x="937.7" y="277.1" width="2.4" height="1" fill="#cc5520"/><rect x="944.4" y="271.2" width="4.2" height="1" fill="#cc5520"/><rect x="953.3" y="274.3" width="1.5" height="1" fill="#cc5520"/><rect x="959.1" y="275.3" width="5.0" height="1" fill="#cc5520"/><rect x="966.0" y="276.6" width="1.6" height="1" fill="#cc5520"/><rect x="974.6" y="275.5" width="3.9" height="1" fill="#cc5520"/><rect x="983.1" y="277.5" width="1.9" height="1" fill="#cc5520"/><rect x="991.0" y="276.0" width="2.3" height="1" fill="#cc5520"/><rect x="998.4" y="273.6" width="2.3" height="1" fill="#cc5520"/><rect x="1006.3" y="267.8" width="3.9" height="1" fill="#cc5520"/><rect x="1011.9" y="269.3" width="3.8" height="1" fill="#cc5520"/><rect x="1017.7" y="268.7" width="5.4" height="1" fill="#cc5520"/><rect x="1021.1" y="266.0" width="3.4" height="1" fill="#cc5520"/><rect x="1029.1" y="274.6" width="4.5" height="1" fill="#cc5520"/><rect x="1035.0" y="274.8" width="2.8" height="1" fill="#cc5520"/><rect x="1039.6" y="272.5" width="1.6" height="1" fill="#cc5520"/><rect x="1043.1" y="275.8" width="2.2" height="1" fill="#cc5520"/><rect x="1050.6" y="276.2" width="3.1" height="1" fill="#cc5520"/><rect x="1057.7" y="276.2" width="5.0" height="1" fill="#cc5520"/><rect x="1061.5" y="268.1" width="3.0" height="1" fill="#cc5520"/><rect x="1067.3" y="269.8" width="1.5" height="1" fill="#cc5520"/><rect x="1073.6" y="278.6" width="3.0" height="1" fill="#cc5520"/><rect x="1079.8" y="271.0" width="3.3" height="1" fill="#cc5520"/><rect x="1088.1" y="270.0" width="4.1" height="1" fill="#cc5520"/></svg>
<svg class="a" style="left:1043.34px;top:231.5px;" width="24.07" height="20" viewBox="1092.34 263.5 24.07 20"><path d="M1074.3375 283 L1092.3375 264" stroke="#b5481a" stroke-width="2"/><path d="M1080.3375 283 L1098.3375 264" stroke="#b5481a" stroke-width="2"/><path d="M1086.3375 283 L1104.3375 264" stroke="#b5481a" stroke-width="2"/><path d="M1092.3375 283 L1110.3375 264" stroke="#b5481a" stroke-width="2"/><path d="M1098.3375 283 L1116.3375 264" stroke="#b5481a" stroke-width="2"/><path d="M1104.3375 283 L1122.3375 264" stroke="#b5481a" stroke-width="2"/><path d="M1110.3375 283 L1128.3375 264" stroke="#b5481a" stroke-width="2"/><path d="M1116.3375 283 L1134.3375 264" stroke="#b5481a" stroke-width="2"/></svg>
<div class="a" style="left:1091.49px;top:231.5px;width:334.51px;height:20px;background:#e2612a;box-sizing:border-box;border:1px solid #8a3414;"></div>
<div class="a" style="left:1235.94px;top:231.5px;width:1px;height:20px;background:#8a3414;"></div>
<svg class="a" style="left:1091.49px;top:231.5px;" width="334.51" height="20" viewBox="1140.49 263.5 334.51 20"><rect x="1143.5" y="269.1" width="3.7" height="1" fill="#cc5520"/><rect x="1148.7" y="273.9" width="4.0" height="1" fill="#cc5520"/><rect x="1152.1" y="266.2" width="4.8" height="1" fill="#cc5520"/><rect x="1156.7" y="269.0" width="5.5" height="1" fill="#cc5520"/><rect x="1162.5" y="276.9" width="3.4" height="1" fill="#cc5520"/><rect x="1169.3" y="268.0" width="4.0" height="1" fill="#cc5520"/><rect x="1177.5" y="272.8" width="4.5" height="1" fill="#cc5520"/><rect x="1184.5" y="266.8" width="4.5" height="1" fill="#cc5520"/><rect x="1191.1" y="269.9" width="1.6" height="1" fill="#cc5520"/><rect x="1199.3" y="272.1" width="4.4" height="1" fill="#cc5520"/><rect x="1207.6" y="275.3" width="5.2" height="1" fill="#cc5520"/><rect x="1212.9" y="276.4" width="3.3" height="1" fill="#cc5520"/><rect x="1221.5" y="277.4" width="1.9" height="1" fill="#cc5520"/><rect x="1225.4" y="268.8" width="5.4" height="1" fill="#cc5520"/><rect x="1231.0" y="274.1" width="2.7" height="1" fill="#cc5520"/><rect x="1237.0" y="271.0" width="2.9" height="1" fill="#cc5520"/><rect x="1243.5" y="273.6" width="5.1" height="1" fill="#cc5520"/><rect x="1250.6" y="278.1" width="4.9" height="1" fill="#cc5520"/><rect x="1259.6" y="274.7" width="2.2" height="1" fill="#cc5520"/><rect x="1267.7" y="278.5" width="5.1" height="1" fill="#cc5520"/><rect x="1274.1" y="275.3" width="2.3" height="1" fill="#cc5520"/><rect x="1282.1" y="273.5" width="2.6" height="1" fill="#cc5520"/><rect x="1285.5" y="277.1" width="5.5" height="1" fill="#cc5520"/><rect x="1289.0" y="276.4" width="3.1" height="1" fill="#cc5520"/><rect x="1293.0" y="269.8" width="4.6" height="1" fill="#cc5520"/><rect x="1301.2" y="266.6" width="4.0" height="1" fill="#cc5520"/><rect x="1304.5" y="275.3" width="2.8" height="1" fill="#cc5520"/><rect x="1312.7" y="278.7" width="3.5" height="1" fill="#cc5520"/><rect x="1321.7" y="270.0" width="1.8" height="1" fill="#cc5520"/><rect x="1328.3" y="266.4" width="2.3" height="1" fill="#cc5520"/><rect x="1333.8" y="273.9" width="2.1" height="1" fill="#cc5520"/><rect x="1337.0" y="277.3" width="2.8" height="1" fill="#cc5520"/><rect x="1345.8" y="277.7" width="3.0" height="1" fill="#cc5520"/><rect x="1351.6" y="272.8" width="4.1" height="1" fill="#cc5520"/><rect x="1358.1" y="273.3" width="4.0" height="1" fill="#cc5520"/><rect x="1366.8" y="272.6" width="3.2" height="1" fill="#cc5520"/><rect x="1374.1" y="269.1" width="2.7" height="1" fill="#cc5520"/><rect x="1383.0" y="272.8" width="3.7" height="1" fill="#cc5520"/><rect x="1386.0" y="271.4" width="3.8" height="1" fill="#cc5520"/><rect x="1389.1" y="274.0" width="4.0" height="1" fill="#cc5520"/><rect x="1392.5" y="274.2" width="3.4" height="1" fill="#cc5520"/><rect x="1399.6" y="270.6" width="4.3" height="1" fill="#cc5520"/><rect x="1407.0" y="266.3" width="1.7" height="1" fill="#cc5520"/><rect x="1414.1" y="278.5" width="2.5" height="1" fill="#cc5520"/><rect x="1419.8" y="273.7" width="2.8" height="1" fill="#cc5520"/><rect x="1425.0" y="270.1" width="3.0" height="1" fill="#cc5520"/><rect x="1431.6" y="269.9" width="3.0" height="1" fill="#cc5520"/><rect x="1439.2" y="266.3" width="3.8" height="1" fill="#cc5520"/><rect x="1446.6" y="270.0" width="2.4" height="1" fill="#cc5520"/><rect x="1454.4" y="269.1" width="2.2" height="1" fill="#cc5520"/><rect x="1460.0" y="275.1" width="1.9" height="1" fill="#cc5520"/><rect x="1465.0" y="270.3" width="4.8" height="1" fill="#cc5520"/><rect x="1470.6" y="277.1" width="2.2" height="1" fill="#cc5520"/></svg>
<div class="a" style="left:272.94px;top:320px;width:1153.06px;height:19.5px;background:#f5c332;box-sizing:border-box;border:1px solid #8f6a12;"></div>
<div class="a" style="left:465.54px;top:320px;width:1px;height:19.5px;background:#8f6a12;"></div>
<div class="a" style="left:658.14px;top:320px;width:1px;height:19.5px;background:#8f6a12;"></div>
<div class="a" style="left:850.74px;top:320px;width:1px;height:19.5px;background:#8f6a12;"></div>
<div class="a" style="left:1043.34px;top:320px;width:1px;height:19.5px;background:#8f6a12;"></div>
<div class="a" style="left:1235.94px;top:320px;width:1px;height:19.5px;background:#8f6a12;"></div>
<svg class="a" style="left:272.94px;top:320px;" width="1153.06" height="19.5" viewBox="321.94 352 1153.06 19.5"><path d="M324.9375 361.5 L1472 361.5" stroke="#7a5c10" stroke-width="1" stroke-dasharray="3 2"/><path d="M324.9375 362 L351.9375 362 Q361.9375 364 365.9375 367 L366.9375 367 L367.9375 360 L400.0875 362 Q410.0875 364 414.0875 367 L415.0875 367 L416.0875 360 L448.23749999999995 362 Q458.23749999999995 364 462.23749999999995 367 L463.23749999999995 367 L464.23749999999995 360 L496.38749999999993 362 Q506.38749999999993 364 510.38749999999993 367 L511.38749999999993 367 L512.3874999999999 360 L544.5374999999999 362 Q554.5374999999999 364 558.5374999999999 367 L559.5374999999999 367 L560.5374999999999 360 L592.6874999999999 362 Q602.6874999999999 364 606.6874999999999 367 L607.6874999999999 367 L608.6874999999999 360 L640.8374999999999 362 Q650.8374999999999 364 654.8374999999999 367 L655.8374999999999 367 L656.8374999999999 360 L688.9874999999998 362 Q698.9874999999998 364 702.9874999999998 367 L703.9874999999998 367 L704.9874999999998 360 L737.1374999999998 362 Q747.1374999999998 364 751.1374999999998 367 L752.1374999999998 367 L753.1374999999998 360 L785.2874999999998 362 Q795.2874999999998 364 799.2874999999998 367 L800.2874999999998 367 L801.2874999999998 360 L833.4374999999998 362 Q843.4374999999998 364 847.4374999999998 367 L848.4374999999998 367 L849.4374999999998 360 L881.5874999999997 362 Q891.5874999999997 364 895.5874999999997 367 L896.5874999999997 367 L897.5874999999997 360 L929.7374999999997 362 Q939.7374999999997 364 943.7374999999997 367 L944.7374999999997 367 L945.7374999999997 360 L977.8874999999997 362 Q987.8874999999997 364 991.8874999999997 367 L992.8874999999997 367 L993.8874999999997 360 L1026.0374999999997 362 Q1036.0374999999997 364 1040.0374999999997 367 L1041.0374999999997 367 L1042.0374999999997 360 L1074.1874999999998 362 Q1084.1874999999998 364 1088.1874999999998 367 L1089.1874999999998 367 L1090.1874999999998 360 L1122.3374999999999 362 Q1132.3374999999999 364 1136.3374999999999 367 L1137.3374999999999 367 L1138.3374999999999 360 L1170.4875 362 Q1180.4875 364 1184.4875 367 L1185.4875 367 L1186.4875 360 L1218.6375 362 Q1228.6375 364 1232.6375 367 L1233.6375 367 L1234.6375 360 L1266.7875000000001 362 Q1276.7875000000001 364 1280.7875000000001 367 L1281.7875000000001 367 L1282.7875000000001 360 L1314.9375000000002 362 Q1324.9375000000002 364 1328.9375000000002 367 L1329.9375000000002 367 L1330.9375000000002 360 L1363.0875000000003 362 Q1373.0875000000003 364 1377.0875000000003 367 L1378.0875000000003 367 L1379.0875000000003 360 L1411.2375000000004 362 Q1421.2375000000004 364 1425.2375000000004 367 L1426.2375000000004 367 L1427.2375000000004 360 L1459.3875000000005 362 Q1469.3875000000005 364 1473.3875000000005 367 L1474.3875000000005 367 L1475.3875000000005 360" fill="none" stroke="#5d4510" stroke-width="1"/></svg>
<div class="a" style="left:321.09px;top:345px;width:144.45px;height:19.5px;background:#f5c332;box-sizing:border-box;border:1px solid #8f6a12;"></div>
<div class="a" style="left:417.39px;top:345px;width:1px;height:19.5px;background:#8f6a12;"></div>
<svg class="a" style="left:321.09px;top:345px;" width="144.45" height="19.5" viewBox="370.09 377 144.45 19.5"><path d="M372.0875 391 L408.0875 391 L420.0875 382 L423.0875 391 L464.38749999999993 391" fill="none" stroke="#5d4510" stroke-width="1.1"/><path d="M468.38749999999993 391 L493.38749999999993 391 Q502.38749999999993 383 512.5374999999999 382" fill="none" stroke="#5d4510" stroke-width="1.1"/></svg>
<div class="a" style="left:513.69px;top:345px;width:144.45px;height:19.5px;background:#f5c332;box-sizing:border-box;border:1px solid #8f6a12;"></div>
<div class="a" style="left:609.99px;top:345px;width:1px;height:19.5px;background:#8f6a12;"></div>
<svg class="a" style="left:513.69px;top:345px;" width="144.45" height="19.5" viewBox="562.69 377 144.45 19.5"><path d="M564.6875 391 L600.6875 391 L612.6875 382 L615.6875 391 L656.9875 391" fill="none" stroke="#5d4510" stroke-width="1.1"/><path d="M660.9875 391 L685.9875 391 Q694.9875 383 705.1375 382" fill="none" stroke="#5d4510" stroke-width="1.1"/></svg>
<div class="a" style="left:1091.49px;top:345px;width:144.45px;height:19.5px;background:#f5c332;box-sizing:border-box;border:1px solid #8f6a12;"></div>
<div class="a" style="left:1187.79px;top:345px;width:1px;height:19.5px;background:#8f6a12;"></div>
<svg class="a" style="left:1091.49px;top:345px;" width="144.45" height="19.5" viewBox="1140.49 377 144.45 19.5"><path d="M1142.4875 391 L1178.4875 391 L1190.4875 382 L1193.4875 391 L1234.7875 391" fill="none" stroke="#5d4510" stroke-width="1.1"/><path d="M1238.7875 391 L1263.7875 391 Q1272.7875 383 1282.9375 382" fill="none" stroke="#5d4510" stroke-width="1.1"/></svg>
<div class="a" style="left:1284.09px;top:345px;width:141.91px;height:19.5px;background:#f5c332;box-sizing:border-box;border:1px solid #8f6a12;"></div>
<div class="a" style="left:1380.39px;top:345px;width:1px;height:19.5px;background:#8f6a12;"></div>
<svg class="a" style="left:1284.09px;top:345px;" width="141.91" height="19.5" viewBox="1333.09 377 141.91 19.5"><path d="M1335.0875 391 L1371.0875 391 L1383.0875 382 L1386.0875 391 L1427.3874999999998 391" fill="none" stroke="#5d4510" stroke-width="1.1"/><path d="M1431.3874999999998 391 L1456.3874999999998 391 Q1465.3874999999998 383 1473 382" fill="none" stroke="#5d4510" stroke-width="1.1"/></svg>
<div class="a" style="left:272.94px;top:381.5px;width:1153.06px;height:19px;background:#adc9e6;box-sizing:border-box;border:1px solid #5f7a96;"></div>
<div class="a" style="left:465.54px;top:381.5px;width:1px;height:19px;background:#5f7a96;"></div>
<div class="a" style="left:658.14px;top:381.5px;width:1px;height:19px;background:#5f7a96;"></div>
<div class="a" style="left:850.74px;top:381.5px;width:1px;height:19px;background:#5f7a96;"></div>
<div class="a" style="left:1043.34px;top:381.5px;width:1px;height:19px;background:#5f7a96;"></div>
<div class="a" style="left:1235.94px;top:381.5px;width:1px;height:19px;background:#5f7a96;"></div>
<svg class="a" style="left:272.94px;top:381.5px;" width="1153.06" height="19" viewBox="321.94 413.5 1153.06 19"><rect x="322.9375" y="422" width="1151.0625" height="2" fill="#2e3f52"/><path d="M323.9375 428 L335.9375 427 Q338.9375 420 341.9375 421 L345.9375 425 Q351.9375 430 359.9375 428 L369.9375 427 L432.2375 427 Q435.2375 420 438.2375 421 L442.2375 425 Q448.2375 430 456.2375 428 L466.2375 427 L528.5375 427 Q531.5375 420 534.5375 421 L538.5375 425 Q544.5375 430 552.5375 428 L562.5375 427 L624.8375 427 Q627.8375 420 630.8375 421 L634.8375 425 Q640.8375 430 648.8375 428 L658.8375 427 L721.1374999999999 427 Q724.1374999999999 420 727.1374999999999 421 L731.1374999999999 425 Q737.1374999999999 430 745.1374999999999 428 L755.1374999999999 427 L817.4374999999999 427 Q820.4374999999999 420 823.4374999999999 421 L827.4374999999999 425 Q833.4374999999999 430 841.4374999999999 428 L851.4374999999999 427 L913.7374999999998 427 Q916.7374999999998 420 919.7374999999998 421 L923.7374999999998 425 Q929.7374999999998 430 937.7374999999998 428 L947.7374999999998 427 L1010.0374999999998 427 Q1013.0374999999998 420 1016.0374999999998 421 L1020.0374999999998 425 Q1026.0375 430 1034.0375 428 L1044.0375 427 L1106.3374999999999 427 Q1109.3374999999999 420 1112.3374999999999 421 L1116.3374999999999 425 Q1122.3374999999999 430 1130.3374999999999 428 L1140.3374999999999 427 L1202.6374999999998 427 Q1205.6374999999998 420 1208.6374999999998 421 L1212.6374999999998 425 Q1218.6374999999998 430 1226.6374999999998 428 L1236.6374999999998 427 L1298.9374999999998 427 Q1301.9374999999998 420 1304.9374999999998 421 L1308.9374999999998 425 Q1314.9374999999998 430 1322.9374999999998 428 L1332.9374999999998 427 L1395.2374999999997 427 Q1398.2374999999997 420 1401.2374999999997 421 L1405.2374999999997 425 Q1411.2374999999997 430 1419.2374999999997 428 L1429.2374999999997 427" fill="none" stroke="#51657a" stroke-width="1"/></svg>
<div class="a" style="left:658.14px;top:418.5px;width:385.2px;height:19.5px;background:#4677c8;box-sizing:border-box;border:1px solid #1f3f7a;"></div>
<svg class="a" style="left:658.14px;top:418.5px;" width="385.2" height="19.5" viewBox="707.14 450.5 385.2 19.5"><rect x="719.6" y="454.0" width="20.0" height="4" fill="#1b3a78"/><rect x="719.6" y="460.5" width="20.0" height="1.5" fill="#1b3a78"/><rect x="719.6" y="464.5" width="20.0" height="1.5" fill="#2a4e90"/><rect x="744.1" y="454.0" width="40.0" height="4" fill="#1b3a78"/><rect x="744.1" y="460.5" width="40.0" height="1.5" fill="#1b3a78"/><rect x="744.1" y="464.5" width="40.0" height="1.5" fill="#2a4e90"/><rect x="791.4" y="454.0" width="20.0" height="4" fill="#1b3a78"/><rect x="791.4" y="460.5" width="20.0" height="1.5" fill="#1b3a78"/><rect x="791.4" y="464.5" width="20.0" height="1.5" fill="#2a4e90"/><rect x="815.9" y="454.0" width="20.0" height="4" fill="#1b3a78"/><rect x="815.9" y="460.5" width="20.0" height="1.5" fill="#1b3a78"/><rect x="815.9" y="464.5" width="20.0" height="1.5" fill="#2a4e90"/><rect x="840.4" y="454.0" width="40.0" height="4" fill="#1b3a78"/><rect x="840.4" y="460.5" width="40.0" height="1.5" fill="#1b3a78"/><rect x="840.4" y="464.5" width="40.0" height="1.5" fill="#2a4e90"/><rect x="887.7" y="454.0" width="20.0" height="4" fill="#1b3a78"/><rect x="887.7" y="460.5" width="20.0" height="1.5" fill="#1b3a78"/><rect x="887.7" y="464.5" width="20.0" height="1.5" fill="#2a4e90"/><rect x="912.2" y="454.0" width="20.0" height="4" fill="#1b3a78"/><rect x="912.2" y="460.5" width="20.0" height="1.5" fill="#1b3a78"/><rect x="912.2" y="464.5" width="20.0" height="1.5" fill="#2a4e90"/><rect x="936.7" y="454.0" width="40.0" height="4" fill="#1b3a78"/><rect x="936.7" y="460.5" width="40.0" height="1.5" fill="#1b3a78"/><rect x="936.7" y="464.5" width="40.0" height="1.5" fill="#2a4e90"/><rect x="984.0" y="454.0" width="20.0" height="4" fill="#1b3a78"/><rect x="984.0" y="460.5" width="20.0" height="1.5" fill="#1b3a78"/><rect x="984.0" y="464.5" width="20.0" height="1.5" fill="#2a4e90"/><rect x="1008.5" y="454.0" width="20.0" height="4" fill="#1b3a78"/><rect x="1008.5" y="460.5" width="20.0" height="1.5" fill="#1b3a78"/><rect x="1008.5" y="464.5" width="20.0" height="1.5" fill="#2a4e90"/><rect x="1033.0" y="454.0" width="40.0" height="4" fill="#1b3a78"/><rect x="1033.0" y="460.5" width="40.0" height="1.5" fill="#1b3a78"/><rect x="1033.0" y="464.5" width="40.0" height="1.5" fill="#2a4e90"/><rect x="1080.3" y="454.0" width="10.0" height="4" fill="#1b3a78"/><rect x="1080.3" y="460.5" width="10.0" height="1.5" fill="#1b3a78"/><rect x="1080.3" y="464.5" width="10.0" height="1.5" fill="#2a4e90"/></svg>
<div class="a" style="left:634.06px;top:455.5px;width:409.28px;height:19.5px;background:#4677c8;box-sizing:border-box;border:1px solid #1f3f7a;"></div>
<svg class="a" style="left:634.06px;top:455.5px;" width="409.28" height="19.5" viewBox="683.06 487.5 409.28 19.5"><rect x="719.6" y="491.0" width="20.0" height="4" fill="#1b3a78"/><rect x="719.6" y="497.5" width="20.0" height="1.5" fill="#1b3a78"/><rect x="719.6" y="501.5" width="20.0" height="1.5" fill="#2a4e90"/><rect x="744.1" y="491.0" width="40.0" height="4" fill="#1b3a78"/><rect x="744.1" y="497.5" width="40.0" height="1.5" fill="#1b3a78"/><rect x="744.1" y="501.5" width="40.0" height="1.5" fill="#2a4e90"/><rect x="791.4" y="491.0" width="20.0" height="4" fill="#1b3a78"/><rect x="791.4" y="497.5" width="20.0" height="1.5" fill="#1b3a78"/><rect x="791.4" y="501.5" width="20.0" height="1.5" fill="#2a4e90"/><rect x="815.9" y="491.0" width="20.0" height="4" fill="#1b3a78"/><rect x="815.9" y="497.5" width="20.0" height="1.5" fill="#1b3a78"/><rect x="815.9" y="501.5" width="20.0" height="1.5" fill="#2a4e90"/><rect x="840.4" y="491.0" width="40.0" height="4" fill="#1b3a78"/><rect x="840.4" y="497.5" width="40.0" height="1.5" fill="#1b3a78"/><rect x="840.4" y="501.5" width="40.0" height="1.5" fill="#2a4e90"/><rect x="887.7" y="491.0" width="20.0" height="4" fill="#1b3a78"/><rect x="887.7" y="497.5" width="20.0" height="1.5" fill="#1b3a78"/><rect x="887.7" y="501.5" width="20.0" height="1.5" fill="#2a4e90"/><rect x="912.2" y="491.0" width="20.0" height="4" fill="#1b3a78"/><rect x="912.2" y="497.5" width="20.0" height="1.5" fill="#1b3a78"/><rect x="912.2" y="501.5" width="20.0" height="1.5" fill="#2a4e90"/><rect x="936.7" y="491.0" width="40.0" height="4" fill="#1b3a78"/><rect x="936.7" y="497.5" width="40.0" height="1.5" fill="#1b3a78"/><rect x="936.7" y="501.5" width="40.0" height="1.5" fill="#2a4e90"/><rect x="984.0" y="491.0" width="20.0" height="4" fill="#1b3a78"/><rect x="984.0" y="497.5" width="20.0" height="1.5" fill="#1b3a78"/><rect x="984.0" y="501.5" width="20.0" height="1.5" fill="#2a4e90"/><rect x="1008.5" y="491.0" width="20.0" height="4" fill="#1b3a78"/><rect x="1008.5" y="497.5" width="20.0" height="1.5" fill="#1b3a78"/><rect x="1008.5" y="501.5" width="20.0" height="1.5" fill="#2a4e90"/><rect x="1033.0" y="491.0" width="40.0" height="4" fill="#1b3a78"/><rect x="1033.0" y="497.5" width="40.0" height="1.5" fill="#1b3a78"/><rect x="1033.0" y="501.5" width="40.0" height="1.5" fill="#2a4e90"/><rect x="1080.3" y="491.0" width="10.0" height="4" fill="#1b3a78"/><rect x="1080.3" y="497.5" width="10.0" height="1.5" fill="#1b3a78"/><rect x="1080.3" y="501.5" width="10.0" height="1.5" fill="#2a4e90"/><path d="M686.0625 503 L703.0625 495" stroke="#2a4e90" stroke-width="1"/></svg>
<div class="a" style="left:465.54px;top:480.5px;width:168.53px;height:18.5px;background:#4677c8;box-sizing:border-box;border:1px solid #1f3f7a;"></div>
<svg class="a" style="left:465.54px;top:480.5px;" width="168.53" height="18.5" viewBox="514.54 512.5 168.53 18.5"><rect x="515.5374999999999" y="516" width="4" height="3" fill="#1b3a78"/><rect x="562.5374999999999" y="516" width="4" height="3" fill="#1b3a78"/><rect x="592.5374999999999" y="516" width="10" height="3" fill="#1b3a78"/><rect x="646.5374999999999" y="516" width="14" height="3" fill="#1b3a78"/><path d="M517.5374999999999 528 Q594.5374999999999 522 653.0625 525" fill="none" stroke="#2a4e90"/></svg>
<div class="a" style="left:754.44px;top:260.5px;width:288.9px;height:42.5px;background:#f59a22;box-sizing:border-box;border:1px solid #9b5d10;"></div>
<div class="a" style="left:850.74px;top:260.5px;width:1px;height:42.5px;background:#9b5d10;"></div>
<div class="a" style="left:947.04px;top:260.5px;width:1px;height:42.5px;background:#9b5d10;"></div>
<div class="a" style="left:658.14px;top:257px;width:96.3px;height:48px;background:#fffdf5;"></div>
<div class="a" style="left:662.14px;top:261.5px;width:88.8px;height:39px;background:#f59a22;"></div>
<svg class="a" style="left:658.14px;top:257px;" width="385.2" height="48" viewBox="707.14 289 385.2 48"><use href="#tl" fill="#3b2608"/><line x1="711.1375" y1="304.5" x2="800.4375" y2="304.5" stroke="#fff3c4" stroke-width="0.8"/></svg>
<svg class="a" style="left:650.14px;top:264px;" width="112.3" height="22" viewBox="699.14 296 112.3 22"><ellipse cx="709.1375" cy="304" rx="2" ry="3" fill="#fff" stroke="#222" stroke-width="1"/><circle cx="743.1375" cy="304.5" r="3" fill="none" stroke="#222" stroke-width="1.2"/><ellipse cx="801.4375" cy="304" rx="2" ry="3" fill="#fff" stroke="#222" stroke-width="1"/><path d="M701.1375 312.5 L706.1375 309 L706.1375 316 Z" fill="#222" stroke="#ddd" stroke-width="0.6"/><path d="M810.4375 312.5 L805.4375 309 L805.4375 316 Z" fill="#222" stroke="#ddd" stroke-width="0.6"/></svg>
<div class="a" style="left:8px;top:127px;width:247px;height:375px;background:#4e5256;"></div>
<div class="a" style="left:9px;top:130px;width:64px;height:25px;background:#a7cbd6;"></div>
<div class="a" style="left:73px;top:130px;width:170px;height:25px;background:#56595d;"></div>
<svg class="a" style="left:11px;top:131px;" width="60" height="17" viewBox="60 163 60 17"><path d="M62 165 L68 165 L65 169 Z" fill="#4f7f93"/><rect x="72.0" y="171" width="1" height="5" fill="#6a98aa"/><rect x="75.7" y="171" width="1" height="5" fill="#6a98aa"/><rect x="79.4" y="171" width="1" height="5" fill="#6a98aa"/><rect x="83.1" y="171" width="1" height="5" fill="#6a98aa"/><rect x="86.8" y="171" width="1" height="5" fill="#6a98aa"/><rect x="90.5" y="171" width="1" height="5" fill="#6a98aa"/><rect x="94.2" y="171" width="1" height="5" fill="#6a98aa"/><rect x="97.9" y="171" width="1" height="5" fill="#6a98aa"/><rect x="101.6" y="171" width="1" height="5" fill="#6a98aa"/><rect x="105.30000000000001" y="171" width="1" height="5" fill="#6a98aa"/><rect x="109.0" y="171" width="1" height="5" fill="#6a98aa"/><rect x="112.7" y="171" width="1" height="5" fill="#6a98aa"/></svg>
<div class="t" style="top:131.8px;font-size:9.5px;line-height:11.4px;height:11.4px;color:#eeeff0;left:172px;width:0;"><span class="c">Transport</span></div>
<svg class="a" style="left:106px;top:131.5px;" width="12" height="12" viewBox="155 163.5 12 12"><path d="M157.5 167.5 L161 172.5 L164.5 170.5 L162.5 166.0" stroke="#9a9da1" stroke-width="0.6" fill="none" opacity="0.6"/><circle cx="157.5" cy="167.5" r="1.5" fill="#9a9da1"/><circle cx="161" cy="172.5" r="1.5" fill="#9a9da1"/><circle cx="164.5" cy="170.5" r="1.5" fill="#9a9da1"/><circle cx="162.5" cy="166.0" r="1.5" fill="#9a9da1"/></svg>
<div class="a" style="left:9px;top:155px;width:234px;height:12px;background:#3b3e41;"></div>
<div class="a" style="left:9px;top:167px;width:64px;height:25.5px;background:#e8631f;"></div>
<svg class="a" style="left:9px;top:155px;" width="42" height="12" viewBox="58 187 42 12"><path d="M58 188 L81 188 L89 199 L58 199 Z" fill="#e8631f"/><path d="M61 191 L67 191 L64 195 Z" fill="rgba(0,0,0,0.35)"/></svg>
<div class="t" style="top:154.98px;font-size:9.7px;line-height:11.64px;height:11.64px;color:#eeeff0;left:40.5px;text-shadow:0 0 0.4px #eeeff0;">Indie Kit</div>
<div class="a" style="left:73px;top:167px;width:170px;height:25.5px;background:#4e5256;"></div>
<div class="a" style="left:27px;top:170px;width:42px;height:16.5px;background:#d5d9dc;border:1px solid #5a5e62;box-sizing:border-box;box-shadow:0 1.5px 0 #3a1a0a;"></div>
<div class="a" style="left:28.5px;top:172px;width:14.5px;height:10.5px;background:#0f3540;"></div>
<svg class="a" style="left:44px;top:171px;" width="24" height="14" viewBox="93 203 24 14"><rect x="94" y="205.0" width="2" height="2" fill="#9aa0a5"/><rect x="94" y="208.5" width="2" height="2" fill="#9aa0a5"/><rect x="94" y="212.0" width="2" height="2" fill="#9aa0a5"/><rect x="97" y="205.0" width="2" height="2" fill="#9aa0a5"/><rect x="97" y="208.5" width="2" height="2" fill="#9aa0a5"/><rect x="97" y="212.0" width="2" height="2" fill="#9aa0a5"/><rect x="100" y="205.0" width="2" height="2" fill="#9aa0a5"/><rect x="100" y="208.5" width="2" height="2" fill="#9aa0a5"/><rect x="100" y="212.0" width="2" height="2" fill="#9aa0a5"/><rect x="103" y="205.0" width="2" height="2" fill="#9aa0a5"/><rect x="103" y="208.5" width="2" height="2" fill="#9aa0a5"/><rect x="103" y="212.0" width="2" height="2" fill="#9aa0a5"/><rect x="106" y="205.0" width="2" height="2" fill="#9aa0a5"/><rect x="106" y="208.5" width="2" height="2" fill="#9aa0a5"/><rect x="106" y="212.0" width="2" height="2" fill="#9aa0a5"/><rect x="109" y="205.0" width="2" height="2" fill="#9aa0a5"/><rect x="109" y="208.5" width="2" height="2" fill="#9aa0a5"/><rect x="109" y="212.0" width="2" height="2" fill="#9aa0a5"/><rect x="112" y="205.0" width="2" height="2" fill="#9aa0a5"/><rect x="112" y="208.5" width="2" height="2" fill="#9aa0a5"/><rect x="112" y="212.0" width="2" height="2" fill="#9aa0a5"/></svg>
<div class="t" style="top:168.9px;font-size:11px;line-height:13.2px;height:13.2px;color:#9a9da1;font-weight:700;left:81px;width:0;"><span class="c">M</span></div>
<div class="t" style="top:168.9px;font-size:11px;line-height:13.2px;height:13.2px;color:#9a9da1;font-weight:700;left:97px;width:0;"><span class="c">S</span></div>
<svg class="a" style="left:106px;top:169.5px;" width="12" height="12" viewBox="155 201.5 12 12"><path d="M157.5 205.5 L161 210.5 L164.5 208.5 L162.5 204.0" stroke="#9a9da1" stroke-width="0.6" fill="none" opacity="0.6"/><circle cx="157.5" cy="205.5" r="1.5" fill="#9a9da1"/><circle cx="161" cy="210.5" r="1.5" fill="#9a9da1"/><circle cx="164.5" cy="208.5" r="1.5" fill="#9a9da1"/><circle cx="162.5" cy="204.0" r="1.5" fill="#9a9da1"/></svg>
<div class="a" style="left:126.5px;top:166.5px;width:12px;height:21px;background:#474a4e;"></div>
<svg class="a" style="left:127px;top:166.5px;" width="12" height="21" viewBox="176 198.5 12 21"><path d="M180 206.5 L184 209.5 L180 212.5" fill="none" stroke="#5a5d61" stroke-width="1.2"/></svg>
<div class="a" style="left:145px;top:172px;width:7px;height:7px;background:#c92a2a;border-radius:50%;"></div>
<div class="t" style="top:169.8px;font-size:9.5px;line-height:11.4px;height:11.4px;color:#e6e7e8;left:160px;">&#8212;</div>
<svg class="a" style="left:194px;top:172.5px;" width="9" height="6" viewBox="243 204.5 9 6"><path d="M244 205.5 L251 205.5 L247.5 209.5 Z" fill="#d0d2d4"/></svg>
<div class="t" style="top:169.4px;font-size:11px;line-height:13.2px;height:13.2px;color:#9a9da1;font-weight:700;left:221px;width:0;"><span class="c">M</span></div>
<div class="t" style="top:170px;font-size:10px;line-height:12px;height:12px;color:#9a9da1;font-weight:700;left:237px;width:0;"><span class="c">&#10005;</span></div>
<div class="a" style="left:9px;top:192.5px;width:234px;height:11.5px;background:#3b3e41;"></div>
<div class="a" style="left:9px;top:204px;width:64px;height:50px;background:#e8631f;"></div>
<svg class="a" style="left:9px;top:192.5px;" width="42" height="11.5" viewBox="58 224.5 42 11.5"><path d="M58 225.5 L81 225.5 L89 236 L58 236 Z" fill="#e8631f"/><path d="M61 228.5 L67 228.5 L64 232.5 Z" fill="rgba(0,0,0,0.35)"/></svg>
<div class="t" style="top:192.48px;font-size:9.7px;line-height:11.64px;height:11.64px;color:#eeeff0;left:40.5px;text-shadow:0 0 0.4px #eeeff0;">Outrun Nights</div>
<div class="a" style="left:73px;top:204px;width:170px;height:50px;background:#4e5256;"></div>
<div class="a" style="left:25.5px;top:205px;width:45px;height:20px;background:#3b2417;border:1px solid #1a1008;box-sizing:border-box;"></div>
<svg class="a" style="left:25.5px;top:205px;" width="45" height="20" viewBox="74.5 237 45 20"><rect x="76" y="239" width="1" height="16" fill="#b8402a"/><rect x="78" y="239" width="1" height="16" fill="#b8402a"/><rect x="80" y="239" width="1" height="16" fill="#b8402a"/><rect x="82" y="239" width="1" height="16" fill="#b8402a"/><rect x="84" y="239" width="5" height="16" fill="#120a06"/><rect x="90" y="240" width="13" height="8" fill="#5a3a28"/><rect x="104" y="241" width="13" height="13" fill="#6a4a35"/><rect x="90" y="249" width="12" height="6" fill="#4a3020"/></svg>
<div class="t" style="top:205.4px;font-size:11px;line-height:13.2px;height:13.2px;color:#9a9da1;font-weight:700;left:81px;width:0;"><span class="c">M</span></div>
<div class="t" style="top:205.4px;font-size:11px;line-height:13.2px;height:13.2px;color:#9a9da1;font-weight:700;left:97px;width:0;"><span class="c">S</span></div>
<svg class="a" style="left:106px;top:206px;" width="12" height="12" viewBox="155 238 12 12"><path d="M157.5 242 L161 247 L164.5 245 L162.5 240.5" stroke="#9a9da1" stroke-width="0.6" fill="none" opacity="0.6"/><circle cx="157.5" cy="242" r="1.5" fill="#9a9da1"/><circle cx="161" cy="247" r="1.5" fill="#9a9da1"/><circle cx="164.5" cy="245" r="1.5" fill="#9a9da1"/><circle cx="162.5" cy="240.5" r="1.5" fill="#9a9da1"/></svg>
<div class="a" style="left:126.5px;top:203px;width:12px;height:21px;background:#474a4e;"></div>
<svg class="a" style="left:127px;top:203px;" width="12" height="21" viewBox="176 235 12 21"><path d="M180 243 L184 246 L180 249" fill="none" stroke="#5a5d61" stroke-width="1.2"/></svg>
<div class="a" style="left:145px;top:208.5px;width:7px;height:7px;background:#c92a2a;border-radius:50%;"></div>
<div class="t" style="top:206.3px;font-size:9.5px;line-height:11.4px;height:11.4px;color:#e6e7e8;left:160px;">A2</div>
<svg class="a" style="left:194px;top:209px;" width="9" height="6" viewBox="243 241 9 6"><path d="M244 242 L251 242 L247.5 246 Z" fill="#d0d2d4"/></svg>
<div class="t" style="top:205.9px;font-size:11px;line-height:13.2px;height:13.2px;color:#9a9da1;font-weight:700;left:221px;width:0;"><span class="c">M</span></div>
<div class="t" style="top:206.5px;font-size:10px;line-height:12px;height:12px;color:#9a9da1;font-weight:700;left:237px;width:0;"><span class="c">&#10005;</span></div>
<div class="a" style="left:126.5px;top:228px;width:12px;height:21px;background:#474a4e;"></div>
<svg class="a" style="left:127px;top:228px;" width="12" height="21" viewBox="176 260 12 21"><path d="M180 268 L184 271 L180 274" fill="none" stroke="#5a5d61" stroke-width="1.2"/></svg>
<div class="a" style="left:127px;top:225px;width:116px;height:1px;background:#44474a;"></div>
<div class="a" style="left:145px;top:233.5px;width:7px;height:7px;background:#c92a2a;border-radius:50%;"></div>
<div class="t" style="top:231.3px;font-size:9.5px;line-height:11.4px;height:11.4px;color:#e6e7e8;left:160px;">&#8212;</div>
<svg class="a" style="left:194px;top:234px;" width="9" height="6" viewBox="243 266 9 6"><path d="M244 267 L251 267 L247.5 271 Z" fill="#d0d2d4"/></svg>
<div class="t" style="top:230.9px;font-size:11px;line-height:13.2px;height:13.2px;color:#9a9da1;font-weight:700;left:221px;width:0;"><span class="c">M</span></div>
<div class="t" style="top:231.5px;font-size:10px;line-height:12px;height:12px;color:#9a9da1;font-weight:700;left:237px;width:0;"><span class="c">&#10005;</span></div>
<div class="a" style="left:9px;top:254px;width:234px;height:11px;background:#3b3e41;"></div>
<div class="a" style="left:9px;top:265px;width:64px;height:40px;background:#f5a01f;"></div>
<svg class="a" style="left:9px;top:254px;" width="42" height="11" viewBox="58 286 42 11"><path d="M58 287 L81 287 L89 297 L58 297 Z" fill="#f5a01f"/><path d="M61 290 L67 290 L64 294 Z" fill="rgba(0,0,0,0.35)"/></svg>
<div class="t" style="top:253.98px;font-size:9.7px;line-height:11.64px;height:11.64px;color:#eeeff0;left:40.5px;text-shadow:0 0 0.4px #eeeff0;">Top Loop</div>
<div class="a" style="left:73px;top:265px;width:170px;height:40px;background:#676b6f;"></div>
<div class="a" style="left:9px;top:257px;width:10px;height:48px;background:#6b4a14;"></div>
<svg class="a" style="left:21px;top:265px;" width="30" height="19" viewBox="70 297 30 19"><path d="M75 301 L86 301 L92 306.5 L86 312 L75 312 Z" fill="#5d6064" stroke="#2a2c2e" stroke-width="1.2"/><rect x="78" y="299" width="16" height="2" fill="#222"/></svg>
<div class="t" style="top:266.4px;font-size:11px;line-height:13.2px;height:13.2px;color:#9a9da1;font-weight:700;left:81px;width:0;"><span class="c">M</span></div>
<div class="t" style="top:266.4px;font-size:11px;line-height:13.2px;height:13.2px;color:#9a9da1;font-weight:700;left:97px;width:0;"><span class="c">S</span></div>
<div class="a" style="left:105.5px;top:266.5px;width:13px;height:13px;background:#d92b2b;border-radius:50%;"></div>
<svg class="a" style="left:106px;top:267px;" width="12" height="12" viewBox="155 299 12 12"><path d="M157.5 303 L161 308 L164.5 306 L162.5 301.5" stroke="#ffd0d0" stroke-width="0.6" fill="none" opacity="0.6"/><circle cx="157.5" cy="303" r="1.5" fill="#ffd0d0"/><circle cx="161" cy="308" r="1.5" fill="#ffd0d0"/><circle cx="164.5" cy="306" r="1.5" fill="#ffd0d0"/><circle cx="162.5" cy="301.5" r="1.5" fill="#ffd0d0"/></svg>
<div class="a" style="left:121.5px;top:266.5px;width:13px;height:13px;background:#d92b2b;border-radius:50%;"></div>
<div class="a" style="left:125px;top:270px;width:6px;height:6px;background:#fff;border-radius:50%;"></div>
<div class="a" style="left:137.5px;top:266.5px;width:13.5px;height:13px;background:#27a52a;border-radius:2px;"></div>
<svg class="a" style="left:137px;top:266px;" width="14" height="14" viewBox="186 298 14 14"><path d="M189 303 L191 303 L194 300.5 L194 309.5 L191 307 L189 307 Z" fill="#aef0a0"/><path d="M196 302.5 Q198 305 196 307.5" stroke="#aef0a0" fill="none"/></svg>
<div class="a" style="left:25px;top:285.5px;width:196px;height:15px;background:#0b0b0c;border-radius:3px;"></div>
<svg class="a" style="left:27px;top:286px;" width="20" height="14" viewBox="76 318 20 14"><path d="M80 329 L86 321 M84 320.5 L88 324.5" stroke="#bbb" stroke-width="1.3"/></svg>
<div class="t" style="top:287.3px;font-size:9.5px;line-height:11.4px;height:11.4px;color:#d8d8d8;left:47px;">IN&#9662;</div>
<div class="a" style="left:76px;top:288px;width:141px;height:10px;background:#1e1f20;"></div>
<svg class="a" style="left:76px;top:288px;" width="141" height="10" viewBox="125 320 141 10"><rect x="126.0" y="320" width="1.5" height="10" fill="#2e3032"/><rect x="129.5" y="320" width="1.5" height="10" fill="#2e3032"/><rect x="133.0" y="320" width="1.5" height="10" fill="#2e3032"/><rect x="136.5" y="320" width="1.5" height="10" fill="#2e3032"/><rect x="140.0" y="320" width="1.5" height="10" fill="#2e3032"/><rect x="143.5" y="320" width="1.5" height="10" fill="#2e3032"/><rect x="147.0" y="320" width="1.5" height="10" fill="#2e3032"/><rect x="150.5" y="320" width="1.5" height="10" fill="#2e3032"/><rect x="154.0" y="320" width="1.5" height="10" fill="#2e3032"/><rect x="157.5" y="320" width="1.5" height="10" fill="#2e3032"/><rect x="161.0" y="320" width="1.5" height="10" fill="#2e3032"/><rect x="164.5" y="320" width="1.5" height="10" fill="#2e3032"/><rect x="168.0" y="320" width="1.5" height="10" fill="#2e3032"/><rect x="171.5" y="320" width="1.5" height="10" fill="#2e3032"/><rect x="175.0" y="320" width="1.5" height="10" fill="#2e3032"/><rect x="178.5" y="320" width="1.5" height="10" fill="#2e3032"/><rect x="182.0" y="320" width="1.5" height="10" fill="#2e3032"/><rect x="185.5" y="320" width="1.5" height="10" fill="#2e3032"/><rect x="189.0" y="320" width="1.5" height="10" fill="#2e3032"/><rect x="192.5" y="320" width="1.5" height="10" fill="#2e3032"/><rect x="196.0" y="320" width="1.5" height="10" fill="#2e3032"/><rect x="199.5" y="320" width="1.5" height="10" fill="#2e3032"/><rect x="203.0" y="320" width="1.5" height="10" fill="#2e3032"/><rect x="206.5" y="320" width="1.5" height="10" fill="#2e3032"/><rect x="210.0" y="320" width="1.5" height="10" fill="#2e3032"/><rect x="213.5" y="320" width="1.5" height="10" fill="#2e3032"/><rect x="217.0" y="320" width="1.5" height="10" fill="#2e3032"/><rect x="220.5" y="320" width="1.5" height="10" fill="#2e3032"/><rect x="224.0" y="320" width="1.5" height="10" fill="#2e3032"/><rect x="227.5" y="320" width="1.5" height="10" fill="#2e3032"/><rect x="231.0" y="320" width="1.5" height="10" fill="#2e3032"/><rect x="234.5" y="320" width="1.5" height="10" fill="#2e3032"/><rect x="238.0" y="320" width="1.5" height="10" fill="#2e3032"/><rect x="241.5" y="320" width="1.5" height="10" fill="#2e3032"/><rect x="245.0" y="320" width="1.5" height="10" fill="#2e3032"/><rect x="248.5" y="320" width="1.5" height="10" fill="#2e3032"/><rect x="252.0" y="320" width="1.5" height="10" fill="#2e3032"/><rect x="255.5" y="320" width="1.5" height="10" fill="#2e3032"/><rect x="259.0" y="320" width="1.5" height="10" fill="#2e3032"/><rect x="262.5" y="320" width="1.5" height="10" fill="#2e3032"/></svg>
<div class="a" style="left:9px;top:305px;width:234px;height:12px;background:#3b3e41;"></div>
<div class="a" style="left:9px;top:317px;width:64px;height:51px;background:#f5c330;"></div>
<svg class="a" style="left:9px;top:305px;" width="42" height="12" viewBox="58 337 42 12"><path d="M58 338 L81 338 L89 349 L58 349 Z" fill="#f5c330"/><path d="M61 341 L67 341 L64 345 Z" fill="rgba(0,0,0,0.35)"/></svg>
<div class="t" style="top:304.98px;font-size:9.7px;line-height:11.64px;height:11.64px;color:#eeeff0;left:40.5px;text-shadow:0 0 0.4px #eeeff0;">Fat 80s Bass</div>
<div class="a" style="left:73px;top:317px;width:170px;height:51px;background:#4e5256;"></div>
<div class="a" style="left:25px;top:316.5px;width:45.5px;height:24px;background:#3e6ea8;border:1px solid #d0d8e0;box-sizing:border-box;"></div>
<svg class="a" style="left:25px;top:316.5px;" width="46" height="24" viewBox="74 348.5 46 24"><rect x="75" y="349.5" width="44" height="3" fill="#e0e4e8"/><rect x="77.0" y="355.5" width="3" height="2" fill="#8fb0d8"/><rect x="77.0" y="360.5" width="3" height="2" fill="#8fb0d8"/><rect x="77.0" y="365.5" width="3" height="2" fill="#8fb0d8"/><rect x="81.5" y="355.5" width="3" height="2" fill="#8fb0d8"/><rect x="81.5" y="360.5" width="3" height="2" fill="#8fb0d8"/><rect x="81.5" y="365.5" width="3" height="2" fill="#8fb0d8"/><rect x="86.0" y="355.5" width="3" height="2" fill="#8fb0d8"/><rect x="86.0" y="360.5" width="3" height="2" fill="#8fb0d8"/><rect x="86.0" y="365.5" width="3" height="2" fill="#8fb0d8"/><rect x="90.5" y="355.5" width="3" height="2" fill="#8fb0d8"/><rect x="90.5" y="360.5" width="3" height="2" fill="#8fb0d8"/><rect x="90.5" y="365.5" width="3" height="2" fill="#8fb0d8"/><rect x="95.0" y="355.5" width="3" height="2" fill="#8fb0d8"/><rect x="95.0" y="360.5" width="3" height="2" fill="#8fb0d8"/><rect x="95.0" y="365.5" width="3" height="2" fill="#8fb0d8"/><rect x="99.5" y="355.5" width="3" height="2" fill="#8fb0d8"/><rect x="99.5" y="360.5" width="3" height="2" fill="#8fb0d8"/><rect x="99.5" y="365.5" width="3" height="2" fill="#8fb0d8"/><rect x="104.0" y="355.5" width="3" height="2" fill="#8fb0d8"/><rect x="104.0" y="360.5" width="3" height="2" fill="#8fb0d8"/><rect x="104.0" y="365.5" width="3" height="2" fill="#8fb0d8"/><rect x="108.5" y="355.5" width="3" height="2" fill="#8fb0d8"/><rect x="108.5" y="360.5" width="3" height="2" fill="#8fb0d8"/><rect x="108.5" y="365.5" width="3" height="2" fill="#8fb0d8"/><rect x="113.0" y="355.5" width="3" height="2" fill="#8fb0d8"/><rect x="113.0" y="360.5" width="3" height="2" fill="#8fb0d8"/><rect x="113.0" y="365.5" width="3" height="2" fill="#8fb0d8"/></svg>
<div class="t" style="top:318.4px;font-size:11px;line-height:13.2px;height:13.2px;color:#9a9da1;font-weight:700;left:81px;width:0;"><span class="c">M</span></div>
<div class="t" style="top:318.4px;font-size:11px;line-height:13.2px;height:13.2px;color:#9a9da1;font-weight:700;left:97px;width:0;"><span class="c">S</span></div>
<svg class="a" style="left:106px;top:319px;" width="12" height="12" viewBox="155 351 12 12"><path d="M157.5 355 L161 360 L164.5 358 L162.5 353.5" stroke="#9a9da1" stroke-width="0.6" fill="none" opacity="0.6"/><circle cx="157.5" cy="355" r="1.5" fill="#9a9da1"/><circle cx="161" cy="360" r="1.5" fill="#9a9da1"/><circle cx="164.5" cy="358" r="1.5" fill="#9a9da1"/><circle cx="162.5" cy="353.5" r="1.5" fill="#9a9da1"/></svg>
<div class="a" style="left:126.5px;top:316px;width:12px;height:21px;background:#474a4e;"></div>
<svg class="a" style="left:127px;top:316px;" width="12" height="21" viewBox="176 348 12 21"><path d="M180 356 L184 359 L180 362" fill="none" stroke="#5a5d61" stroke-width="1.2"/></svg>
<div class="a" style="left:145px;top:321.5px;width:7px;height:7px;background:#c92a2a;border-radius:50%;"></div>
<div class="t" style="top:319.3px;font-size:9.5px;line-height:11.4px;height:11.4px;color:#e6e7e8;left:160px;">A2</div>
<svg class="a" style="left:194px;top:322px;" width="9" height="6" viewBox="243 354 9 6"><path d="M244 355 L251 355 L247.5 359 Z" fill="#d0d2d4"/></svg>
<div class="t" style="top:318.9px;font-size:11px;line-height:13.2px;height:13.2px;color:#9a9da1;font-weight:700;left:221px;width:0;"><span class="c">M</span></div>
<div class="t" style="top:319.5px;font-size:10px;line-height:12px;height:12px;color:#9a9da1;font-weight:700;left:237px;width:0;"><span class="c">&#10005;</span></div>
<svg class="a" style="left:127px;top:344px;" width="24" height="22" viewBox="176 376 24 22"><path d="M178 379 L184 379 L181 383 Z" fill="#9a9da1"/><rect x="187.5" y="375" width="2" height="22" fill="#d0d2d4"/></svg>
<div class="t" style="top:341.5px;font-size:7.5px;line-height:9px;height:9px;color:#e0e2e3;left:144px;">(Mod Wheel)</div>
<div class="t" style="top:343.9px;font-size:11px;line-height:13.2px;height:13.2px;color:#9a9da1;font-weight:700;left:221px;width:0;"><span class="c">M</span></div>
<div class="t" style="top:344.5px;font-size:10px;line-height:12px;height:12px;color:#9a9da1;font-weight:700;left:237px;width:0;"><span class="c">&#10005;</span></div>
<div class="a" style="left:9px;top:368px;width:234px;height:12px;background:#3b3e41;"></div>
<div class="a" style="left:9px;top:380px;width:64px;height:24px;background:#b4cfe7;"></div>
<svg class="a" style="left:9px;top:368px;" width="42" height="12" viewBox="58 400 42 12"><path d="M58 401 L81 401 L89 412 L58 412 Z" fill="#b4cfe7"/><path d="M61 404 L67 404 L64 408 Z" fill="rgba(0,0,0,0.35)"/></svg>
<div class="t" style="top:367.98px;font-size:9.7px;line-height:11.64px;height:11.64px;color:#eeeff0;left:40.5px;text-shadow:0 0 0.4px #eeeff0;">Glistening House</div>
<div class="a" style="left:73px;top:380px;width:170px;height:24px;background:#4e5256;"></div>
<div class="a" style="left:25px;top:379.5px;width:45.5px;height:23.5px;background:#3e6ea8;border:1px solid #d0d8e0;box-sizing:border-box;"></div>
<svg class="a" style="left:25px;top:379.5px;" width="46" height="24" viewBox="74 411.5 46 24"><rect x="75" y="412.5" width="44" height="3" fill="#e0e4e8"/><rect x="77.0" y="418.5" width="3" height="2" fill="#8fb0d8"/><rect x="77.0" y="423.5" width="3" height="2" fill="#8fb0d8"/><rect x="77.0" y="428.5" width="3" height="2" fill="#8fb0d8"/><rect x="81.5" y="418.5" width="3" height="2" fill="#8fb0d8"/><rect x="81.5" y="423.5" width="3" height="2" fill="#8fb0d8"/><rect x="81.5" y="428.5" width="3" height="2" fill="#8fb0d8"/><rect x="86.0" y="418.5" width="3" height="2" fill="#8fb0d8"/><rect x="86.0" y="423.5" width="3" height="2" fill="#8fb0d8"/><rect x="86.0" y="428.5" width="3" height="2" fill="#8fb0d8"/><rect x="90.5" y="418.5" width="3" height="2" fill="#8fb0d8"/><rect x="90.5" y="423.5" width="3" height="2" fill="#8fb0d8"/><rect x="90.5" y="428.5" width="3" height="2" fill="#8fb0d8"/><rect x="95.0" y="418.5" width="3" height="2" fill="#8fb0d8"/><rect x="95.0" y="423.5" width="3" height="2" fill="#8fb0d8"/><rect x="95.0" y="428.5" width="3" height="2" fill="#8fb0d8"/><rect x="99.5" y="418.5" width="3" height="2" fill="#8fb0d8"/><rect x="99.5" y="423.5" width="3" height="2" fill="#8fb0d8"/><rect x="99.5" y="428.5" width="3" height="2" fill="#8fb0d8"/><rect x="104.0" y="418.5" width="3" height="2" fill="#8fb0d8"/><rect x="104.0" y="423.5" width="3" height="2" fill="#8fb0d8"/><rect x="104.0" y="428.5" width="3" height="2" fill="#8fb0d8"/><rect x="108.5" y="418.5" width="3" height="2" fill="#8fb0d8"/><rect x="108.5" y="423.5" width="3" height="2" fill="#8fb0d8"/><rect x="108.5" y="428.5" width="3" height="2" fill="#8fb0d8"/><rect x="113.0" y="418.5" width="3" height="2" fill="#8fb0d8"/><rect x="113.0" y="423.5" width="3" height="2" fill="#8fb0d8"/><rect x="113.0" y="428.5" width="3" height="2" fill="#8fb0d8"/></svg>
<div class="t" style="top:380.4px;font-size:11px;line-height:13.2px;height:13.2px;color:#9a9da1;font-weight:700;left:81px;width:0;"><span class="c">M</span></div>
<div class="t" style="top:380.4px;font-size:11px;line-height:13.2px;height:13.2px;color:#9a9da1;font-weight:700;left:97px;width:0;"><span class="c">S</span></div>
<svg class="a" style="left:106px;top:381px;" width="12" height="12" viewBox="155 413 12 12"><path d="M157.5 417 L161 422 L164.5 420 L162.5 415.5" stroke="#9a9da1" stroke-width="0.6" fill="none" opacity="0.6"/><circle cx="157.5" cy="417" r="1.5" fill="#9a9da1"/><circle cx="161" cy="422" r="1.5" fill="#9a9da1"/><circle cx="164.5" cy="420" r="1.5" fill="#9a9da1"/><circle cx="162.5" cy="415.5" r="1.5" fill="#9a9da1"/></svg>
<div class="a" style="left:126.5px;top:378px;width:12px;height:21px;background:#474a4e;"></div>
<svg class="a" style="left:127px;top:378px;" width="12" height="21" viewBox="176 410 12 21"><path d="M180 418 L184 421 L180 424" fill="none" stroke="#5a5d61" stroke-width="1.2"/></svg>
<div class="a" style="left:145px;top:383.5px;width:7px;height:7px;background:#c92a2a;border-radius:50%;"></div>
<div class="t" style="top:381.3px;font-size:9.5px;line-height:11.4px;height:11.4px;color:#e6e7e8;left:160px;">&#8212;</div>
<svg class="a" style="left:194px;top:384px;" width="9" height="6" viewBox="243 416 9 6"><path d="M244 417 L251 417 L247.5 421 Z" fill="#d0d2d4"/></svg>
<div class="t" style="top:380.9px;font-size:11px;line-height:13.2px;height:13.2px;color:#9a9da1;font-weight:700;left:221px;width:0;"><span class="c">M</span></div>
<div class="t" style="top:381.5px;font-size:10px;line-height:12px;height:12px;color:#9a9da1;font-weight:700;left:237px;width:0;"><span class="c">&#10005;</span></div>
<div class="a" style="left:9px;top:404px;width:234px;height:11.5px;background:#3b3e41;"></div>
<div class="a" style="left:9px;top:415.5px;width:64px;height:25.5px;background:#4b7dca;"></div>
<svg class="a" style="left:9px;top:404px;" width="42" height="11.5" viewBox="58 436 42 11.5"><path d="M58 437 L81 437 L89 447.5 L58 447.5 Z" fill="#4b7dca"/><path d="M61 440 L67 440 L64 444 Z" fill="rgba(0,0,0,0.35)"/></svg>
<div class="t" style="top:403.98px;font-size:9.7px;line-height:11.64px;height:11.64px;color:#eeeff0;left:40.5px;text-shadow:0 0 0.4px #eeeff0;">Expander X Keys</div>
<div class="a" style="left:73px;top:415.5px;width:170px;height:25.5px;background:#4e5256;"></div>
<div class="a" style="left:25px;top:415px;width:45.5px;height:24px;background:#3e6ea8;border:1px solid #d0d8e0;box-sizing:border-box;"></div>
<svg class="a" style="left:25px;top:415px;" width="46" height="24" viewBox="74 447 46 24"><rect x="75" y="448.0" width="44" height="3" fill="#e0e4e8"/><rect x="77.0" y="454.0" width="3" height="2" fill="#8fb0d8"/><rect x="77.0" y="459.0" width="3" height="2" fill="#8fb0d8"/><rect x="77.0" y="464.0" width="3" height="2" fill="#8fb0d8"/><rect x="81.5" y="454.0" width="3" height="2" fill="#8fb0d8"/><rect x="81.5" y="459.0" width="3" height="2" fill="#8fb0d8"/><rect x="81.5" y="464.0" width="3" height="2" fill="#8fb0d8"/><rect x="86.0" y="454.0" width="3" height="2" fill="#8fb0d8"/><rect x="86.0" y="459.0" width="3" height="2" fill="#8fb0d8"/><rect x="86.0" y="464.0" width="3" height="2" fill="#8fb0d8"/><rect x="90.5" y="454.0" width="3" height="2" fill="#8fb0d8"/><rect x="90.5" y="459.0" width="3" height="2" fill="#8fb0d8"/><rect x="90.5" y="464.0" width="3" height="2" fill="#8fb0d8"/><rect x="95.0" y="454.0" width="3" height="2" fill="#8fb0d8"/><rect x="95.0" y="459.0" width="3" height="2" fill="#8fb0d8"/><rect x="95.0" y="464.0" width="3" height="2" fill="#8fb0d8"/><rect x="99.5" y="454.0" width="3" height="2" fill="#8fb0d8"/><rect x="99.5" y="459.0" width="3" height="2" fill="#8fb0d8"/><rect x="99.5" y="464.0" width="3" height="2" fill="#8fb0d8"/><rect x="104.0" y="454.0" width="3" height="2" fill="#8fb0d8"/><rect x="104.0" y="459.0" width="3" height="2" fill="#8fb0d8"/><rect x="104.0" y="464.0" width="3" height="2" fill="#8fb0d8"/><rect x="108.5" y="454.0" width="3" height="2" fill="#8fb0d8"/><rect x="108.5" y="459.0" width="3" height="2" fill="#8fb0d8"/><rect x="108.5" y="464.0" width="3" height="2" fill="#8fb0d8"/><rect x="113.0" y="454.0" width="3" height="2" fill="#8fb0d8"/><rect x="113.0" y="459.0" width="3" height="2" fill="#8fb0d8"/><rect x="113.0" y="464.0" width="3" height="2" fill="#8fb0d8"/></svg>
<div class="t" style="top:417.4px;font-size:11px;line-height:13.2px;height:13.2px;color:#9a9da1;font-weight:700;left:81px;width:0;"><span class="c">M</span></div>
<div class="t" style="top:417.4px;font-size:11px;line-height:13.2px;height:13.2px;color:#9a9da1;font-weight:700;left:97px;width:0;"><span class="c">S</span></div>
<div class="a" style="left:105.5px;top:417.5px;width:13px;height:13px;background:#d92b2b;border-radius:50%;"></div>
<svg class="a" style="left:106px;top:418px;" width="12" height="12" viewBox="155 450 12 12"><path d="M157.5 454 L161 459 L164.5 457 L162.5 452.5" stroke="#ffd0d0" stroke-width="0.6" fill="none" opacity="0.6"/><circle cx="157.5" cy="454" r="1.5" fill="#ffd0d0"/><circle cx="161" cy="459" r="1.5" fill="#ffd0d0"/><circle cx="164.5" cy="457" r="1.5" fill="#ffd0d0"/><circle cx="162.5" cy="452.5" r="1.5" fill="#ffd0d0"/></svg>
<div class="a" style="left:126.5px;top:415px;width:12px;height:21px;background:#474a4e;"></div>
<svg class="a" style="left:127px;top:415px;" width="12" height="21" viewBox="176 447 12 21"><path d="M180 455 L184 458 L180 461" fill="none" stroke="#5a5d61" stroke-width="1.2"/></svg>
<div class="a" style="left:145px;top:420.5px;width:7px;height:7px;background:#c92a2a;border-radius:50%;"></div>
<div class="t" style="top:418.3px;font-size:9.5px;line-height:11.4px;height:11.4px;color:#e6e7e8;left:160px;">&#8212;</div>
<svg class="a" style="left:194px;top:421px;" width="9" height="6" viewBox="243 453 9 6"><path d="M244 454 L251 454 L247.5 458 Z" fill="#d0d2d4"/></svg>
<div class="t" style="top:417.9px;font-size:11px;line-height:13.2px;height:13.2px;color:#9a9da1;font-weight:700;left:221px;width:0;"><span class="c">M</span></div>
<div class="t" style="top:418.5px;font-size:10px;line-height:12px;height:12px;color:#9a9da1;font-weight:700;left:237px;width:0;"><span class="c">&#10005;</span></div>
<div class="a" style="left:9px;top:441px;width:234px;height:12px;background:#3b3e41;"></div>
<div class="a" style="left:9px;top:453px;width:64px;height:49px;background:#4b7dca;"></div>
<svg class="a" style="left:9px;top:441px;" width="42" height="12" viewBox="58 473 42 12"><path d="M58 474 L81 474 L89 485 L58 485 Z" fill="#4b7dca"/><path d="M61 477 L67 477 L64 481 Z" fill="rgba(0,0,0,0.35)"/></svg>
<div class="t" style="top:440.98px;font-size:9.7px;line-height:11.64px;height:11.64px;color:#eeeff0;left:40.5px;text-shadow:0 0 0.4px #eeeff0;">Bass-Chord-Lead</div>
<div class="a" style="left:73px;top:453px;width:170px;height:49px;background:#4e5256;"></div>
<div class="a" style="left:25px;top:452.5px;width:45.5px;height:24px;background:#3e6ea8;border:1px solid #d0d8e0;box-sizing:border-box;"></div>
<svg class="a" style="left:25px;top:452.5px;" width="46" height="24" viewBox="74 484.5 46 24"><rect x="75" y="485.5" width="44" height="3" fill="#e0e4e8"/><rect x="77.0" y="491.5" width="3" height="2" fill="#8fb0d8"/><rect x="77.0" y="496.5" width="3" height="2" fill="#8fb0d8"/><rect x="77.0" y="501.5" width="3" height="2" fill="#8fb0d8"/><rect x="81.5" y="491.5" width="3" height="2" fill="#8fb0d8"/><rect x="81.5" y="496.5" width="3" height="2" fill="#8fb0d8"/><rect x="81.5" y="501.5" width="3" height="2" fill="#8fb0d8"/><rect x="86.0" y="491.5" width="3" height="2" fill="#8fb0d8"/><rect x="86.0" y="496.5" width="3" height="2" fill="#8fb0d8"/><rect x="86.0" y="501.5" width="3" height="2" fill="#8fb0d8"/><rect x="90.5" y="491.5" width="3" height="2" fill="#8fb0d8"/><rect x="90.5" y="496.5" width="3" height="2" fill="#8fb0d8"/><rect x="90.5" y="501.5" width="3" height="2" fill="#8fb0d8"/><rect x="95.0" y="491.5" width="3" height="2" fill="#8fb0d8"/><rect x="95.0" y="496.5" width="3" height="2" fill="#8fb0d8"/><rect x="95.0" y="501.5" width="3" height="2" fill="#8fb0d8"/><rect x="99.5" y="491.5" width="3" height="2" fill="#8fb0d8"/><rect x="99.5" y="496.5" width="3" height="2" fill="#8fb0d8"/><rect x="99.5" y="501.5" width="3" height="2" fill="#8fb0d8"/><rect x="104.0" y="491.5" width="3" height="2" fill="#8fb0d8"/><rect x="104.0" y="496.5" width="3" height="2" fill="#8fb0d8"/><rect x="104.0" y="501.5" width="3" height="2" fill="#8fb0d8"/><rect x="108.5" y="491.5" width="3" height="2" fill="#8fb0d8"/><rect x="108.5" y="496.5" width="3" height="2" fill="#8fb0d8"/><rect x="108.5" y="501.5" width="3" height="2" fill="#8fb0d8"/><rect x="113.0" y="491.5" width="3" height="2" fill="#8fb0d8"/><rect x="113.0" y="496.5" width="3" height="2" fill="#8fb0d8"/><rect x="113.0" y="501.5" width="3" height="2" fill="#8fb0d8"/></svg>
<div class="t" style="top:454.4px;font-size:11px;line-height:13.2px;height:13.2px;color:#9a9da1;font-weight:700;left:81px;width:0;"><span class="c">M</span></div>
<div class="t" style="top:454.4px;font-size:11px;line-height:13.2px;height:13.2px;color:#9a9da1;font-weight:700;left:97px;width:0;"><span class="c">S</span></div>
<svg class="a" style="left:106px;top:455px;" width="12" height="12" viewBox="155 487 12 12"><path d="M157.5 491 L161 496 L164.5 494 L162.5 489.5" stroke="#9a9da1" stroke-width="0.6" fill="none" opacity="0.6"/><circle cx="157.5" cy="491" r="1.5" fill="#9a9da1"/><circle cx="161" cy="496" r="1.5" fill="#9a9da1"/><circle cx="164.5" cy="494" r="1.5" fill="#9a9da1"/><circle cx="162.5" cy="489.5" r="1.5" fill="#9a9da1"/></svg>
<div class="a" style="left:126.5px;top:452px;width:12px;height:21px;background:#474a4e;"></div>
<svg class="a" style="left:127px;top:452px;" width="12" height="21" viewBox="176 484 12 21"><path d="M180 492 L184 495 L180 498" fill="none" stroke="#5a5d61" stroke-width="1.2"/></svg>
<div class="a" style="left:145px;top:457.5px;width:7px;height:7px;background:#c92a2a;border-radius:50%;"></div>
<div class="t" style="top:455.3px;font-size:9.5px;line-height:11.4px;height:11.4px;color:#e6e7e8;left:160px;">&#8212;</div>
<svg class="a" style="left:194px;top:458px;" width="9" height="6" viewBox="243 490 9 6"><path d="M244 491 L251 491 L247.5 495 Z" fill="#d0d2d4"/></svg>
<div class="t" style="top:454.9px;font-size:11px;line-height:13.2px;height:13.2px;color:#9a9da1;font-weight:700;left:221px;width:0;"><span class="c">M</span></div>
<div class="t" style="top:455.5px;font-size:10px;line-height:12px;height:12px;color:#9a9da1;font-weight:700;left:237px;width:0;"><span class="c">&#10005;</span></div>
<div class="a" style="left:126.5px;top:477px;width:12px;height:21px;background:#474a4e;"></div>
<svg class="a" style="left:127px;top:477px;" width="12" height="21" viewBox="176 509 12 21"><path d="M180 517 L184 520 L180 523" fill="none" stroke="#5a5d61" stroke-width="1.2"/></svg>
<div class="a" style="left:127px;top:474px;width:116px;height:1px;background:#44474a;"></div>
<div class="a" style="left:145px;top:482.5px;width:7px;height:7px;background:#c92a2a;border-radius:50%;"></div>
<div class="t" style="top:480.3px;font-size:9.5px;line-height:11.4px;height:11.4px;color:#e6e7e8;left:160px;">A1</div>
<svg class="a" style="left:194px;top:483px;" width="9" height="6" viewBox="243 515 9 6"><path d="M244 516 L251 516 L247.5 520 Z" fill="#d0d2d4"/></svg>
<div class="t" style="top:479.9px;font-size:11px;line-height:13.2px;height:13.2px;color:#9a9da1;font-weight:700;left:221px;width:0;"><span class="c">M</span></div>
<div class="t" style="top:480.5px;font-size:10px;line-height:12px;height:12px;color:#9a9da1;font-weight:700;left:237px;width:0;"><span class="c">&#10005;</span></div>
<div class="a" style="left:243.5px;top:133px;width:7.5px;height:305px;background:#8a8d90;border-radius:4px;"></div>
<div class="a" style="left:8px;top:502px;width:247px;height:21px;background:#1f2123;"></div>
<div class="a" style="left:255px;top:503px;width:1183px;height:20px;background:#1f2123;"></div>
<div class="a" style="left:256px;top:503.5px;width:1179px;height:18.5px;background:#5d6064;border-radius:9px;"></div>
<div class="a" style="left:468px;top:504px;width:1px;height:18px;background:#64676b;"></div>
<div class="a" style="left:570px;top:504px;width:1px;height:18px;background:#64676b;"></div>
<div class="a" style="left:672px;top:504px;width:1px;height:18px;background:#64676b;"></div>
<div class="a" style="left:774px;top:504px;width:1px;height:18px;background:#64676b;"></div>
<div class="a" style="left:876px;top:504px;width:1px;height:18px;background:#64676b;"></div>
<div class="a" style="left:978px;top:504px;width:1px;height:18px;background:#64676b;"></div>
<div class="a" style="left:1080px;top:504px;width:1px;height:18px;background:#64676b;"></div>
<div class="a" style="left:1182px;top:504px;width:1px;height:18px;background:#64676b;"></div>
<div class="a" style="left:1284px;top:504px;width:1px;height:18px;background:#64676b;"></div>
<div class="a" style="left:1386px;top:504px;width:1px;height:18px;background:#64676b;"></div>
<div class="a" style="left:1412.5px;top:505px;width:1px;height:16px;background:#222;"></div>
<div class="a" style="left:1410.5px;top:511px;width:5px;height:5px;background:#222;border-radius:50%;"></div>
<div class="a" style="left:256px;top:503.5px;width:173px;height:18.5px;background:#2b2d2f;border-radius:9px;border:1.5px solid #191a1b;box-sizing:border-box;"></div>
<svg class="a" style="left:261px;top:507px;" width="164" height="13" viewBox="310 539 164 13"><g opacity="0.55"><rect x="316" y="540" width="154" height="3" fill="#7a4a22"/><rect x="316" y="543" width="154" height="3" fill="#7d7031"/><rect x="316" y="546" width="154" height="3" fill="#3f5272"/><rect x="316" y="549" width="154" height="2" fill="#555"/><line x1="368" y1="539" x2="368" y2="552" stroke="#111"/><line x1="419" y1="539" x2="419" y2="552" stroke="#111"/></g></svg>
<svg class="a" style="left:17px;top:504px;" width="42" height="18" viewBox="66 536 42 18"><circle cx="73" cy="544" r="4.5" fill="none" stroke="#c3c5c7" stroke-width="1.4"/><path d="M76 547 L79.5 550.5 M71 544 L75 544" stroke="#c3c5c7" stroke-width="1.4"/><circle cx="97" cy="544" r="4.5" fill="none" stroke="#c3c5c7" stroke-width="1.4"/><path d="M100 547 L103.5 550.5 M95 544 L99 544 M97 542 L97 546" stroke="#c3c5c7" stroke-width="1.4"/></svg>
<div class="a" style="left:69px;top:506px;width:1px;height:15px;background:#45484b;"></div>
<div class="a" style="left:116.5px;top:503px;width:24.5px;height:20px;background:#c9cbcc;"></div>
<svg class="a" style="left:89px;top:504px;" width="80" height="18" viewBox="138 536 80 18"><path d="M139 545 L161 545" stroke="#c3c5c7" stroke-width="1.5"/><path d="M150 541 L151 545 L150 549 Z" fill="#c3c5c7"/><path d="M167 545 L188 545 M172 545 L177 540 L180 545 L177 550 Z" stroke="#2a2c2e" fill="#2a2c2e" stroke-width="1.5"/><path d="M193 545 L215 545 L205 545 L201 538 L198 545 L201 552 Z" fill="#c3c5c7" stroke="#c3c5c7" stroke-width="1"/></svg>
<div class="a" style="left:187px;top:506px;width:1px;height:15px;background:#45484b;"></div>
<div class="a" style="left:8px;top:523px;width:1430px;height:7.5px;background:#121314;"></div>
<div class="a" style="left:8px;top:530.5px;width:304px;height:30.5px;background:#222426;"></div>
<svg class="a" style="left:14px;top:534px;" width="20" height="20" viewBox="63 566 20 20"><circle cx="73" cy="576" r="7.3" fill="none" stroke="#c3c5c7" stroke-width="1.6"/><path d="M69.8 572.8 L76.2 579.2 M76.2 572.8 L69.8 579.2" stroke="#c3c5c7" stroke-width="2"/></svg>
<div class="a" style="left:41.5px;top:534px;width:1px;height:22px;background:#45484b;"></div>
<div class="a" style="left:50px;top:536px;width:30px;height:16.5px;background:#c5c7c8;"></div>
<div class="t" style="top:541px;font-size:5.5px;line-height:6.6px;height:6.6px;color:#505356;font-weight:700;left:65px;width:0;"><span class="c">SNAP</span></div>
<div class="t" style="top:537.4px;font-size:11px;line-height:13.2px;height:13.2px;color:#d5d7d8;font-weight:700;left:105px;">Grid (1/16)</div>
<svg class="a" style="left:168px;top:541px;" width="10" height="6" viewBox="217 573 10 6"><path d="M218.5 574.5 L225.5 574.5 L222 578.5 Z" fill="#c3c5c7"/></svg>
<div class="a" style="left:187px;top:534px;width:1px;height:22px;background:#45484b;"></div>
<svg class="a" style="left:194px;top:506px;" width="53" height="14" viewBox="243 538 53 14"><path d="M245 545 L249.5 539.5 L252.5 545 L249.5 550.5 Z M270.5 545 L266 539.5 L263 545 L266 550.5 Z" fill="#c3c5c7"/><path d="M279.8 549.5 L279.8 540.5 L285 540.5 M279.8 545 L284 545" fill="none" stroke="#c3c5c7" stroke-width="2"/><path d="M286.5 539.5 L293 545 L286.5 550.5 Z" fill="#c3c5c7"/></svg>
<div class="t" style="top:506.7px;font-size:11px;line-height:13.2px;height:13.2px;color:#c3c5c7;font-weight:700;left:208.7px;width:0;"><span class="c">Z</span></div>
<svg class="a" style="left:194px;top:537px;" width="53" height="14" viewBox="243 569 53 14"><path d="M245 576 L249.5 570.5 L252.5 576 L249.5 581.5 Z M270.5 576 L266 570.5 L263 576 L266 581.5 Z" fill="#c3c5c7"/><path d="M279.8 580.5 L279.8 571.5 L285 571.5 M279.8 576 L284 576" fill="none" stroke="#c3c5c7" stroke-width="2"/><path d="M286.5 570.5 L293 576 L286.5 581.5 Z" fill="#c3c5c7"/></svg>
<div class="t" style="top:537.7px;font-size:11px;line-height:13.2px;height:13.2px;color:#c3c5c7;font-weight:700;left:208.7px;width:0;"><span class="c">Z</span></div>
<div class="a" style="left:312px;top:531px;width:1112px;height:30px;background:#272a2c;"></div>
<div class="a" style="left:312px;top:531px;width:1112px;height:17px;background:#36383b;"></div>
<div class="a" style="left:312px;top:560px;width:1112px;height:1px;background:#9a9c9e;"></div>
<div class="a" style="left:1424px;top:530.5px;width:14px;height:317.5px;background:#2a2c2e;"></div>
<div class="a" style="left:1436.5px;top:561px;width:1px;height:287px;background:#3d4347;"></div>
<div class="a" style="left:333.9px;top:531px;width:1px;height:30px;background:#9a9c9e;opacity:0.7;"></div>
<div class="t" style="top:533.3px;font-size:9.5px;line-height:11.4px;height:11.4px;color:#d0d2d3;font-weight:700;left:336.4px;">9.2</div>
<div class="a" style="left:350.6px;top:556px;width:1px;height:4px;background:#9a9c9e;opacity:0.6;"></div>
<div class="a" style="left:367.3px;top:556px;width:1px;height:4px;background:#9a9c9e;opacity:0.6;"></div>
<div class="a" style="left:384px;top:556px;width:1px;height:4px;background:#9a9c9e;opacity:0.6;"></div>
<div class="a" style="left:400.7px;top:556px;width:1px;height:4px;background:#9a9c9e;opacity:0.6;"></div>
<div class="a" style="left:417.4px;top:556px;width:1px;height:4px;background:#9a9c9e;opacity:0.6;"></div>
<div class="a" style="left:434.1px;top:556px;width:1px;height:4px;background:#9a9c9e;opacity:0.6;"></div>
<div class="a" style="left:450.8px;top:556px;width:1px;height:4px;background:#9a9c9e;opacity:0.6;"></div>
<div class="a" style="left:467.5px;top:531px;width:1px;height:30px;background:#9a9c9e;opacity:0.7;"></div>
<div class="t" style="top:533.3px;font-size:9.5px;line-height:11.4px;height:11.4px;color:#d0d2d3;font-weight:700;left:470px;">9.3</div>
<div class="a" style="left:484.2px;top:556px;width:1px;height:4px;background:#9a9c9e;opacity:0.6;"></div>
<div class="a" style="left:500.9px;top:556px;width:1px;height:4px;background:#9a9c9e;opacity:0.6;"></div>
<div class="a" style="left:517.6px;top:556px;width:1px;height:4px;background:#9a9c9e;opacity:0.6;"></div>
<div class="a" style="left:534.3px;top:556px;width:1px;height:4px;background:#9a9c9e;opacity:0.6;"></div>
<div class="a" style="left:551px;top:556px;width:1px;height:4px;background:#9a9c9e;opacity:0.6;"></div>
<div class="a" style="left:567.7px;top:556px;width:1px;height:4px;background:#9a9c9e;opacity:0.6;"></div>
<div class="a" style="left:584.4px;top:556px;width:1px;height:4px;background:#9a9c9e;opacity:0.6;"></div>
<div class="a" style="left:601.1px;top:531px;width:1px;height:30px;background:#9a9c9e;opacity:0.7;"></div>
<div class="t" style="top:533.3px;font-size:9.5px;line-height:11.4px;height:11.4px;color:#d0d2d3;font-weight:700;left:603.6px;">9.4</div>
<div class="a" style="left:617.8px;top:556px;width:1px;height:4px;background:#9a9c9e;opacity:0.6;"></div>
<div class="a" style="left:634.5px;top:556px;width:1px;height:4px;background:#9a9c9e;opacity:0.6;"></div>
<div class="a" style="left:651.2px;top:556px;width:1px;height:4px;background:#9a9c9e;opacity:0.6;"></div>
<div class="a" style="left:667.9px;top:556px;width:1px;height:4px;background:#9a9c9e;opacity:0.6;"></div>
<div class="a" style="left:684.6px;top:556px;width:1px;height:4px;background:#9a9c9e;opacity:0.6;"></div>
<div class="a" style="left:701.3px;top:556px;width:1px;height:4px;background:#9a9c9e;opacity:0.6;"></div>
<div class="a" style="left:718px;top:556px;width:1px;height:4px;background:#9a9c9e;opacity:0.6;"></div>
<div class="a" style="left:734.7px;top:531px;width:1px;height:30px;background:#9a9c9e;opacity:0.7;"></div>
<div class="t" style="top:533.3px;font-size:9.5px;line-height:11.4px;height:11.4px;color:#d0d2d3;font-weight:700;left:737.2px;">10.1</div>
<div class="a" style="left:751.4px;top:556px;width:1px;height:4px;background:#9a9c9e;opacity:0.6;"></div>
<div class="a" style="left:768.1px;top:556px;width:1px;height:4px;background:#9a9c9e;opacity:0.6;"></div>
<div class="a" style="left:784.8px;top:556px;width:1px;height:4px;background:#9a9c9e;opacity:0.6;"></div>
<div class="a" style="left:801.5px;top:556px;width:1px;height:4px;background:#9a9c9e;opacity:0.6;"></div>
<div class="a" style="left:818.2px;top:556px;width:1px;height:4px;background:#9a9c9e;opacity:0.6;"></div>
<div class="a" style="left:834.9px;top:556px;width:1px;height:4px;background:#9a9c9e;opacity:0.6;"></div>
<div class="a" style="left:851.6px;top:556px;width:1px;height:4px;background:#9a9c9e;opacity:0.6;"></div>
<div class="a" style="left:868.3px;top:531px;width:1px;height:30px;background:#9a9c9e;opacity:0.7;"></div>
<div class="t" style="top:533.3px;font-size:9.5px;line-height:11.4px;height:11.4px;color:#d0d2d3;font-weight:700;left:870.8px;">10.2</div>
<div class="a" style="left:885px;top:556px;width:1px;height:4px;background:#9a9c9e;opacity:0.6;"></div>
<div class="a" style="left:901.7px;top:556px;width:1px;height:4px;background:#9a9c9e;opacity:0.6;"></div>
<div class="a" style="left:918.4px;top:556px;width:1px;height:4px;background:#9a9c9e;opacity:0.6;"></div>
<div class="a" style="left:935.1px;top:556px;width:1px;height:4px;background:#9a9c9e;opacity:0.6;"></div>
<div class="a" style="left:951.8px;top:556px;width:1px;height:4px;background:#9a9c9e;opacity:0.6;"></div>
<div class="a" style="left:968.5px;top:556px;width:1px;height:4px;background:#9a9c9e;opacity:0.6;"></div>
<div class="a" style="left:985.2px;top:556px;width:1px;height:4px;background:#9a9c9e;opacity:0.6;"></div>
<div class="a" style="left:1001.9px;top:531px;width:1px;height:30px;background:#9a9c9e;opacity:0.7;"></div>
<div class="t" style="top:533.3px;font-size:9.5px;line-height:11.4px;height:11.4px;color:#d0d2d3;font-weight:700;left:1004.4px;">10.3</div>
<div class="a" style="left:1018.6px;top:556px;width:1px;height:4px;background:#9a9c9e;opacity:0.6;"></div>
<div class="a" style="left:1035.3px;top:556px;width:1px;height:4px;background:#9a9c9e;opacity:0.6;"></div>
<div class="a" style="left:1052px;top:556px;width:1px;height:4px;background:#9a9c9e;opacity:0.6;"></div>
<div class="a" style="left:1068.7px;top:556px;width:1px;height:4px;background:#9a9c9e;opacity:0.6;"></div>
<div class="a" style="left:1085.4px;top:556px;width:1px;height:4px;background:#9a9c9e;opacity:0.6;"></div>
<div class="a" style="left:1102.1px;top:556px;width:1px;height:4px;background:#9a9c9e;opacity:0.6;"></div>
<div class="a" style="left:1118.8px;top:556px;width:1px;height:4px;background:#9a9c9e;opacity:0.6;"></div>
<div class="a" style="left:1135.5px;top:531px;width:1px;height:30px;background:#9a9c9e;opacity:0.7;"></div>
<div class="t" style="top:533.3px;font-size:9.5px;line-height:11.4px;height:11.4px;color:#d0d2d3;font-weight:700;left:1138px;">10.4</div>
<div class="a" style="left:1152.2px;top:556px;width:1px;height:4px;background:#9a9c9e;opacity:0.6;"></div>
<div class="a" style="left:1168.9px;top:556px;width:1px;height:4px;background:#9a9c9e;opacity:0.6;"></div>
<div class="a" style="left:1185.6px;top:556px;width:1px;height:4px;background:#9a9c9e;opacity:0.6;"></div>
<div class="a" style="left:1202.3px;top:556px;width:1px;height:4px;background:#9a9c9e;opacity:0.6;"></div>
<div class="a" style="left:1219px;top:556px;width:1px;height:4px;background:#9a9c9e;opacity:0.6;"></div>
<div class="a" style="left:1235.7px;top:556px;width:1px;height:4px;background:#9a9c9e;opacity:0.6;"></div>
<div class="a" style="left:1252.4px;top:556px;width:1px;height:4px;background:#9a9c9e;opacity:0.6;"></div>
<div class="a" style="left:1269.1px;top:531px;width:1px;height:30px;background:#9a9c9e;opacity:0.7;"></div>
<div class="t" style="top:533.3px;font-size:9.5px;line-height:11.4px;height:11.4px;color:#d0d2d3;font-weight:700;left:1271.6px;">11.1</div>
<div class="a" style="left:1285.8px;top:556px;width:1px;height:4px;background:#9a9c9e;opacity:0.6;"></div>
<div class="a" style="left:1302.5px;top:556px;width:1px;height:4px;background:#9a9c9e;opacity:0.6;"></div>
<div class="a" style="left:1319.2px;top:556px;width:1px;height:4px;background:#9a9c9e;opacity:0.6;"></div>
<div class="a" style="left:1335.9px;top:556px;width:1px;height:4px;background:#9a9c9e;opacity:0.6;"></div>
<div class="a" style="left:1352.6px;top:556px;width:1px;height:4px;background:#9a9c9e;opacity:0.6;"></div>
<div class="a" style="left:1369.3px;top:556px;width:1px;height:4px;background:#9a9c9e;opacity:0.6;"></div>
<div class="a" style="left:1386px;top:556px;width:1px;height:4px;background:#9a9c9e;opacity:0.6;"></div>
<div class="a" style="left:1402.7px;top:531px;width:1px;height:30px;background:#9a9c9e;opacity:0.7;"></div>
<div class="t" style="top:533.3px;font-size:9.5px;line-height:11.4px;height:11.4px;color:#d0d2d3;font-weight:700;left:1405.2px;">11.2</div>
<div class="a" style="left:1419.4px;top:556px;width:1px;height:4px;background:#9a9c9e;opacity:0.6;"></div>
<div class="t" style="top:542.3px;font-size:7px;line-height:8.4px;height:8.4px;color:#aaa;left:336px;">4/4</div>
<svg class="a" style="left:334px;top:546px;" width="14" height="13" viewBox="383 578 14 13"><path d="M384 579.5 L389 579.5 L393 584.5 L389 589.5 L384 589.5 Z" fill="#e6e7e8"/></svg>
<div class="a" style="left:8px;top:561px;width:247px;height:287px;background:#333538;"></div>
<div class="a" style="left:8px;top:564.5px;width:245px;height:70px;background:#4b4f53;"></div>
<div class="a" style="left:8px;top:634.5px;width:245px;height:8.5px;background:#35383b;"></div>
<div class="a" style="left:8px;top:643px;width:245px;height:27.5px;background:#4b4f53;"></div>
<div class="a" style="left:8px;top:670.5px;width:245px;height:8px;background:#35383b;"></div>
<div class="a" style="left:8px;top:678.5px;width:245px;height:53.5px;background:#4b4f53;"></div>
<div class="a" style="left:8px;top:732px;width:245px;height:8px;background:#35383b;"></div>
<div class="a" style="left:8px;top:740px;width:245px;height:48px;background:#4b4f53;"></div>
<div class="t" style="top:572.8px;font-size:9.5px;line-height:11.4px;height:11.4px;color:#dcdedf;font-weight:700;left:19px;">Recording</div>
<div class="a" style="left:70px;top:571px;width:169px;height:15.5px;background:#35383b;"></div>
<div class="t" style="top:573.82px;font-size:8.3px;line-height:9.96px;height:9.96px;color:#c8cacc;right:1207px;">ny_drm124_steady_top.rx2 (Imported)</div>
<div class="t" style="top:595.5px;font-size:8px;line-height:9.6px;height:9.6px;color:#b0b2b4;right:1263px;">Bounce to new recording</div>
<div class="a" style="left:187px;top:592px;width:52px;height:16px;background:#63676b;"></div>
<div class="t" style="top:595.2px;font-size:8.5px;line-height:10.2px;height:10.2px;color:#d8dadb;left:213px;width:0;"><span class="c">Bounce</span></div>
<div class="t" style="top:617.32px;font-size:8.3px;line-height:9.96px;height:9.96px;color:#b0b2b4;right:1380px;">Stretch Type</div>
<div class="a" style="left:70px;top:613.8px;width:112px;height:16.2px;background:#35383b;"></div>
<div class="t" style="top:615.2px;font-size:11px;line-height:13.2px;height:13.2px;color:#e6e7e8;font-weight:700;left:73px;">Allround</div>
<svg class="a" style="left:172px;top:619px;" width="10" height="6" viewBox="221 651 10 6"><path d="M223 652 L229 652 L226 655.5 Z" fill="#c8cacc"/></svg>
<div class="a" style="left:187px;top:614px;width:52px;height:16px;background:#63676b;"></div>
<div class="t" style="top:617.2px;font-size:8.5px;line-height:10.2px;height:10.2px;color:#d8dadb;left:213px;width:0;"><span class="c">Disable</span></div>
<svg class="a" style="left:11px;top:652px;" width="8" height="8" viewBox="60 684 8 8"><path d="M62 685 L67 688.5 L62 692 Z" fill="#b0b2b4"/></svg>
<div class="t" style="top:650.8px;font-size:9.5px;line-height:11.4px;height:11.4px;color:#dcdedf;font-weight:700;left:36px;">Tempo</div>
<div class="t" style="top:651.9px;font-size:8.5px;line-height:10.2px;height:10.2px;color:#b0b2b4;left:95px;">Original</div>
<div class="t" style="top:651.1px;font-size:9px;line-height:10.8px;height:10.8px;color:#dcdedf;font-weight:700;left:149px;">104.000</div>
<div class="t" style="top:687.3px;font-size:8.5px;line-height:10.2px;height:10.2px;color:#b0b2b4;right:1381px;">Quantize</div>
<div class="a" style="left:70.5px;top:684px;width:53.5px;height:16.5px;background:#35383b;"></div>
<div class="t" style="top:685.4px;font-size:11px;line-height:13.2px;height:13.2px;color:#e6e7e8;font-weight:700;left:73px;">1/16</div>
<svg class="a" style="left:114px;top:689px;" width="8" height="6" viewBox="163 721 8 6"><path d="M164 722 L170 722 L167 725.5 Z" fill="#c8cacc"/></svg>
<div class="a" style="left:128.3px;top:684px;width:54.7px;height:16.5px;background:#35383b;"></div>
<div class="t" style="top:685.4px;font-size:11px;line-height:13.2px;height:13.2px;color:#e6e7e8;font-weight:700;left:131px;">100%</div>
<svg class="a" style="left:173px;top:689px;" width="8" height="6" viewBox="222 721 8 6"><path d="M223 722 L229 722 L226 725.5 Z" fill="#c8cacc"/></svg>
<div class="a" style="left:186.5px;top:684px;width:52.5px;height:16.5px;background:#63676b;"></div>
<div class="t" style="top:687.3px;font-size:8.5px;line-height:10.2px;height:10.2px;color:#d8dadb;left:213px;width:0;"><span class="c">Quantize</span></div>
<div class="t" style="top:708.9px;font-size:8.5px;line-height:10.2px;height:10.2px;color:#b0b2b4;right:1380px;">Range (ticks)</div>
<div class="a" style="left:70.5px;top:707px;width:92.5px;height:13.5px;background:#35383b;"></div>
<div class="t" style="top:706.9px;font-size:11px;line-height:13.2px;height:13.2px;color:#e6e7e8;font-weight:700;left:116px;width:0;"><span class="c">16</span></div>
<div class="a" style="left:167px;top:706.5px;width:15px;height:15px;background:#63676b;"></div>
<svg class="a" style="left:167px;top:706px;" width="15" height="16" viewBox="216 738 15 16"><path d="M220 744 L223.5 740.5 L227 744 Z M220 748 L223.5 751.5 L227 748 Z" fill="#d8dadb"/></svg>
<div class="a" style="left:186.5px;top:706px;width:52.5px;height:16px;background:#63676b;"></div>
<div class="t" style="top:708.9px;font-size:8.5px;line-height:10.2px;height:10.2px;color:#d8dadb;left:213px;width:0;"><span class="c">Randomize</span></div>
<div class="a" style="left:70px;top:744.5px;width:169px;height:18px;background:#63676b;"></div>
<div class="t" style="top:748.9px;font-size:8.5px;line-height:10.2px;height:10.2px;color:#d8dadb;left:154px;width:0;"><span class="c">Reverse Clip</span></div>
<div class="a" style="left:70px;top:767px;width:169px;height:17.5px;background:#63676b;"></div>
<div class="t" style="top:770.9px;font-size:8.5px;line-height:10.2px;height:10.2px;color:#d8dadb;left:154px;width:0;"><span class="c">Normalize Clip</span></div>
<div class="a" style="left:23.6px;top:827px;width:66.4px;height:18px;background:#3c3f42;"></div>
<div class="t" style="top:830.1px;font-size:9px;line-height:10.8px;height:10.8px;color:#c4c6c8;font-weight:700;left:56.8px;width:0;"><span class="c">SLICE EDIT</span></div>
<div class="a" style="left:97px;top:827px;width:67px;height:18px;background:#3c3f42;"></div>
<div class="t" style="top:830.1px;font-size:9px;line-height:10.8px;height:10.8px;color:#c4c6c8;font-weight:700;left:130.5px;width:0;"><span class="c">VOCAL EDIT</span></div>
<div class="a" style="left:169.7px;top:827px;width:68px;height:18px;background:#3c3f42;"></div>
<div class="t" style="top:830.1px;font-size:9px;line-height:10.8px;height:10.8px;color:#c4c6c8;font-weight:700;left:203.7px;width:0;"><span class="c">COMP EDIT</span></div>
<div class="a" style="left:255px;top:561px;width:57px;height:287px;background:#5c401d;"></div>
<div class="a" style="left:312px;top:561px;width:22px;height:287px;background:#50555a;"></div>
<div class="a" style="left:1402px;top:561px;width:22px;height:22.5px;background:#50555a;"></div>
<div class="a" style="left:1402px;top:583.5px;width:21.5px;height:259.5px;background:#f59a22;"></div>
<div class="a" style="left:334px;top:561px;width:1068px;height:286px;background:#fffbe9;"></div>
<div class="a" style="left:255px;top:561px;width:57px;height:1.5px;background:#7d6545;"></div>
<div class="a" style="left:337px;top:565.5px;width:1062px;height:277.5px;background:#f59a22;"></div>
<div class="a" style="left:337px;top:582.5px;width:1062px;height:1.2px;background:#fcd79a;"></div>
<div class="a" style="left:365.5px;top:566px;width:1px;height:17px;background:#fcd79a;"></div>
<div class="a" style="left:380px;top:566px;width:1px;height:17px;background:#fcd79a;"></div>
<div class="a" style="left:402px;top:566px;width:1px;height:17px;background:#fcd79a;"></div>
<div class="a" style="left:466px;top:566px;width:1px;height:17px;background:#fcd79a;"></div>
<div class="a" style="left:494px;top:566px;width:1px;height:17px;background:#fcd79a;"></div>
<div class="a" style="left:534px;top:566px;width:1px;height:17px;background:#fcd79a;"></div>
<div class="a" style="left:575.5px;top:566px;width:1px;height:17px;background:#fcd79a;"></div>
<div class="a" style="left:603px;top:566px;width:1px;height:17px;background:#fcd79a;"></div>
<div class="a" style="left:641px;top:566px;width:1px;height:17px;background:#fcd79a;"></div>
<div class="a" style="left:669px;top:566px;width:1px;height:17px;background:#fcd79a;"></div>
<div class="a" style="left:733px;top:566px;width:1px;height:17px;background:#fcd79a;"></div>
<div class="a" style="left:761.6px;top:566px;width:1px;height:17px;background:#fcd79a;"></div>
<div class="a" style="left:800px;top:566px;width:1px;height:17px;background:#fcd79a;"></div>
<div class="a" style="left:868px;top:566px;width:1px;height:17px;background:#fcd79a;"></div>
<div class="a" style="left:908px;top:566px;width:1px;height:17px;background:#fcd79a;"></div>
<div class="a" style="left:936px;top:566px;width:1px;height:17px;background:#fcd79a;"></div>
<div class="a" style="left:974px;top:566px;width:1px;height:17px;background:#fcd79a;"></div>
<div class="a" style="left:1001px;top:566px;width:1px;height:17px;background:#fcd79a;"></div>
<div class="a" style="left:1029px;top:566px;width:1px;height:17px;background:#fcd79a;"></div>
<div class="a" style="left:1069px;top:566px;width:1px;height:17px;background:#fcd79a;"></div>
<div class="a" style="left:1109px;top:566px;width:1px;height:17px;background:#fcd79a;"></div>
<div class="a" style="left:1138px;top:566px;width:1px;height:17px;background:#fcd79a;"></div>
<div class="a" style="left:1179px;top:566px;width:1px;height:17px;background:#fcd79a;"></div>
<div class="a" style="left:1203px;top:566px;width:1px;height:17px;background:#fcd79a;"></div>
<div class="a" style="left:1244px;top:566px;width:1px;height:17px;background:#fcd79a;"></div>
<div class="a" style="left:1268px;top:566px;width:1px;height:17px;background:#fcd79a;"></div>
<div class="a" style="left:1295px;top:566px;width:1px;height:17px;background:#fcd79a;"></div>
<div class="a" style="left:1337px;top:566px;width:1px;height:17px;background:#fcd79a;"></div>
<div class="a" style="left:1376px;top:566px;width:1px;height:17px;background:#fcd79a;"></div>
<svg class="a" style="left:334px;top:562px;" width="1090" height="285" viewBox="383 594 1090 285"><use href="#w1" fill="#4d3510"/><use href="#w2" fill="#4d3510"/><use href="#g1" fill="#c98a2a"/><use href="#g2" fill="#c98a2a"/><rect x="386" y="683" width="1062" height="1" fill="#fde3b5"/></svg>
<svg class="a" style="left:321px;top:648px;" width="1092" height="65" viewBox="370 680 1092 65"><circle cx="386" cy="686" r="2.5" fill="none" stroke="#222" stroke-width="1.2"/><circle cx="918" cy="686" r="3" fill="none" stroke="#222" stroke-width="1.2"/><circle cx="1450" cy="686" r="2.5" fill="#fff" stroke="#222" stroke-width="1.2"/><path d="M374 736 L380 732.5 L380 739.5 Z" fill="#222" stroke="#ddd" stroke-width="0.6"/><path d="M1459 736 L1453 732.5 L1453 739.5 Z" fill="#222" stroke="#ddd" stroke-width="0.6"/></svg>
<div class="a" style="left:0px;top:847px;width:1445px;height:2px;background:#0e0f10;"></div>
<div class="a" style="left:0px;top:849px;width:1445px;height:51px;background:#232527;"></div>
<div class="a" style="left:207.7px;top:853px;width:1px;height:43px;background:#3a3d40;"></div>
<div class="a" style="left:254.6px;top:853px;width:1px;height:43px;background:#3a3d40;"></div>
<div class="a" style="left:323.6px;top:853px;width:1px;height:43px;background:#3a3d40;"></div>
<div class="a" style="left:404.5px;top:853px;width:1px;height:43px;background:#3a3d40;"></div>
<div class="a" style="left:551px;top:853px;width:1px;height:43px;background:#3a3d40;"></div>
<div class="a" style="left:695.8px;top:853px;width:1px;height:43px;background:#3a3d40;"></div>
<div class="a" style="left:726.5px;top:853px;width:1px;height:43px;background:#3a3d40;"></div>
<div class="a" style="left:756px;top:853px;width:1px;height:43px;background:#3a3d40;"></div>
<div class="a" style="left:786px;top:853px;width:1px;height:43px;background:#3a3d40;"></div>
<div class="a" style="left:816.5px;top:853px;width:1px;height:43px;background:#3a3d40;"></div>
<div class="a" style="left:846.6px;top:853px;width:1px;height:43px;background:#3a3d40;"></div>
<div class="a" style="left:876.2px;top:853px;width:1px;height:43px;background:#3a3d40;"></div>
<div class="a" style="left:906px;top:853px;width:1px;height:43px;background:#3a3d40;"></div>
<div class="a" style="left:1074.4px;top:853px;width:1px;height:43px;background:#3a3d40;"></div>
<div class="a" style="left:1198.6px;top:853px;width:1px;height:43px;background:#3a3d40;"></div>
<div class="t" style="top:861.7px;font-size:5.5px;line-height:6.6px;height:6.6px;color:#b5b7b9;font-weight:700;left:230.5px;width:0;"><span class="c">KEYS</span></div>
<div class="t" style="top:879.2px;font-size:5.5px;line-height:6.6px;height:6.6px;color:#b5b7b9;font-weight:700;left:230.5px;width:0;"><span class="c">GROOVE</span></div>
<div class="t" style="top:856px;font-size:5.5px;line-height:6.6px;height:6.6px;color:#b5b7b9;font-weight:700;left:288.5px;width:0;"><span class="c">Q RECORD</span></div>
<div class="t" style="top:865.4px;font-size:13.5px;line-height:16.2px;height:16.2px;color:#d4d6d7;font-weight:700;left:289px;width:0;"><span class="c">1/16</span></div>
<div class="t" style="top:885.7px;font-size:5.5px;line-height:6.6px;height:6.6px;color:#b5b7b9;font-weight:700;left:288.5px;width:0;"><span class="c">QUANTIZE</span></div>
<svg class="a" style="left:312px;top:870px;" width="10" height="7" viewBox="361 902 10 7"><path d="M362.5 904 L369.5 904 L366 908 Z" fill="#c9cbcc"/></svg>
<div class="t" style="top:854.7px;font-size:5.5px;line-height:6.6px;height:6.6px;color:#b5b7b9;font-weight:700;left:363px;width:0;"><span class="c">SYNC MODE</span></div>
<div class="t" style="top:863.5px;font-size:10px;line-height:12px;height:12px;color:#d4d6d7;font-weight:700;left:363px;width:0;"><span class="c">Internal</span></div>
<div class="t" style="top:887.7px;font-size:5.5px;line-height:6.6px;height:6.6px;color:#6c6f72;font-weight:700;left:363px;width:0;"><span class="c">SEND CLOCK</span></div>
<svg class="a" style="left:392px;top:866px;" width="10" height="7" viewBox="441 898 10 7"><path d="M442.5 900 L449.5 900 L446 904 Z" fill="#c9cbcc"/></svg>
<div class="t" style="top:857.6px;font-size:14px;line-height:16.8px;height:16.8px;color:#d4d6d7;font-weight:700;left:442px;width:0;letter-spacing:1.5px;"><span class="c">1.</span></div>
<div class="t" style="top:857.6px;font-size:14px;line-height:16.8px;height:16.8px;color:#d4d6d7;font-weight:700;left:464px;width:0;letter-spacing:1.5px;"><span class="c">1.</span></div>
<div class="t" style="top:857.6px;font-size:14px;line-height:16.8px;height:16.8px;color:#d4d6d7;font-weight:700;left:486px;width:0;letter-spacing:1.5px;"><span class="c">1.</span></div>
<div class="t" style="top:857.6px;font-size:14px;line-height:16.8px;height:16.8px;color:#d4d6d7;font-weight:700;left:511px;width:0;letter-spacing:1.5px;"><span class="c">0</span></div>
<div class="t" style="top:872.6px;font-size:14px;line-height:16.8px;height:16.8px;color:#d4d6d7;font-weight:700;left:473.5px;width:0;letter-spacing:0.3px;"><span class="c">0:00:00:000</span></div>
<svg class="a" style="left:526px;top:860px;" width="12" height="12" viewBox="575 892 12 12"><path d="M578 897 L581 893.5 L584 897 Z M578 899 L581 902.5 L584 899 Z" fill="#c9cbcc"/></svg>
<svg class="a" style="left:526px;top:875px;" width="12" height="12" viewBox="575 907 12 12"><path d="M578 912 L581 908.5 L584 912 Z M578 914 L581 917.5 L584 914 Z" fill="#c9cbcc"/></svg>
<svg class="a" style="left:577px;top:854px;" width="18" height="18" viewBox="626 886 18 18"><path d="M630 902 L633 889 L637 889 L639 902 Z" fill="#c9cbcc"/><path d="M634 898 L641 890" stroke="#232527" stroke-width="1.3"/></svg>
<div class="t" style="top:875.5px;font-size:5.5px;line-height:6.6px;height:6.6px;color:#b5b7b9;font-weight:700;left:586px;width:0;"><span class="c">CLICK</span></div>
<div class="a" style="left:570px;top:884px;width:32px;height:11px;background:#cfd1d2;"></div>
<div class="t" style="top:886.4px;font-size:5.5px;line-height:6.6px;height:6.6px;color:#444;font-weight:700;left:586px;width:0;"><span class="c">PRE</span></div>
<div class="a" style="left:609.3px;top:853px;width:11.2px;height:44px;background:#9ccbf0;border-radius:6px;"></div>
<div class="a" style="left:609.3px;top:853px;width:11.2px;height:11.5px;background:#2a2c2e;border-radius:6px;border:1px solid #8ab;box-sizing:border-box;"></div>
<div class="t" style="top:851.2px;font-size:13.5px;line-height:16.2px;height:16.2px;color:#d4d6d7;font-weight:700;left:656px;width:0;letter-spacing:0.3px;"><span class="c">104.000</span></div>
<div class="t" style="top:871px;font-size:5.5px;line-height:6.6px;height:6.6px;color:#b5b7b9;font-weight:700;left:655px;width:0;"><span class="c">TAP</span></div>
<div class="t" style="top:879.2px;font-size:13.5px;line-height:16.2px;height:16.2px;color:#d4d6d7;font-weight:700;left:657px;width:0;"><span class="c">4/&nbsp; 4</span></div>
<svg class="a" style="left:699px;top:861px;" width="212" height="27" viewBox="748 893 212 27"><path d="M752 906.3 L757.5 900.5 L761 900.5 L755.5 906.3 L761 912 L757.5 912 Z M758.5 906.3 L764 900.5 L767.5 900.5 L762 906.3 L767.5 912 L764 912 Z" fill="#c9cbcc"/><path d="M797 906.3 L791.5 900.5 L788 900.5 L793.5 906.3 L788 912 L791.5 912 Z M790.5 906.3 L785 900.5 L781.5 900.5 L787 906.3 L781.5 912 L785 912 Z" fill="#c9cbcc"/><rect x="813" y="899" width="14.5" height="14.5" fill="#c9cbcc"/><path d="M843 897.5 L858.5 906.3 L843 915 Z" fill="#c9cbcc"/><circle cx="880" cy="906.3" r="8.5" fill="#ea4a28" stroke="#5a1a10" stroke-width="0.8"/><path d="M933.5 908.5 A6.5 4.8 0 0 1 941 901.5 L944 901.5" fill="none" stroke="#c9cbcc" stroke-width="2.2"/><path d="M943 898 L947.5 901.5 L943 905 Z" fill="#c9cbcc"/><path d="M946.5 904 A6.5 4.8 0 0 1 939 911 L936 911" fill="none" stroke="#c9cbcc" stroke-width="2.2"/><path d="M937 907.5 L932.5 911 L937 914.5 Z" fill="#c9cbcc"/></svg>
<div class="t" style="top:860.2px;font-size:5.5px;line-height:6.6px;height:6.6px;color:#b5b7b9;font-weight:700;left:861px;width:0;"><span class="c">DUB</span></div>
<div class="t" style="top:883.2px;font-size:5.5px;line-height:6.6px;height:6.6px;color:#b5b7b9;font-weight:700;left:861px;width:0;"><span class="c">ALT</span></div>
<div class="t" style="top:857.6px;font-size:14px;line-height:16.8px;height:16.8px;color:#d4d6d7;font-weight:700;left:925px;width:0;"><span class="c">L</span></div>
<div class="t" style="top:872.6px;font-size:14px;line-height:16.8px;height:16.8px;color:#d4d6d7;font-weight:700;left:925px;width:0;"><span class="c">R</span></div>
<div class="t" style="top:857.6px;font-size:14px;line-height:16.8px;height:16.8px;color:#d4d6d7;font-weight:700;left:965px;width:0;letter-spacing:1.5px;"><span class="c">9.</span></div>
<div class="t" style="top:857.6px;font-size:14px;line-height:16.8px;height:16.8px;color:#d4d6d7;font-weight:700;left:987px;width:0;letter-spacing:1.5px;"><span class="c">2.</span></div>
<div class="t" style="top:857.6px;font-size:14px;line-height:16.8px;height:16.8px;color:#d4d6d7;font-weight:700;left:1009px;width:0;letter-spacing:1.5px;"><span class="c">1.</span></div>
<div class="t" style="top:857.6px;font-size:14px;line-height:16.8px;height:16.8px;color:#d4d6d7;font-weight:700;left:1036px;width:0;letter-spacing:1.5px;"><span class="c">0</span></div>
<div class="t" style="top:872.6px;font-size:14px;line-height:16.8px;height:16.8px;color:#d4d6d7;font-weight:700;left:961px;width:0;letter-spacing:1.5px;"><span class="c">17.</span></div>
<div class="t" style="top:872.6px;font-size:14px;line-height:16.8px;height:16.8px;color:#d4d6d7;font-weight:700;left:987px;width:0;letter-spacing:1.5px;"><span class="c">2.</span></div>
<div class="t" style="top:872.6px;font-size:14px;line-height:16.8px;height:16.8px;color:#d4d6d7;font-weight:700;left:1009px;width:0;letter-spacing:1.5px;"><span class="c">1.</span></div>
<div class="t" style="top:872.6px;font-size:14px;line-height:16.8px;height:16.8px;color:#d4d6d7;font-weight:700;left:1036px;width:0;letter-spacing:1.5px;"><span class="c">0</span></div>
<svg class="a" style="left:1049px;top:860px;" width="12" height="12" viewBox="1098 892 12 12"><path d="M1101 897 L1104 893.5 L1107 897 Z M1101 899 L1104 902.5 L1107 899 Z" fill="#c9cbcc"/></svg>
<svg class="a" style="left:1049px;top:875px;" width="12" height="12" viewBox="1098 907 12 12"><path d="M1101 912 L1104 908.5 L1107 912 Z M1101 914 L1104 917.5 L1107 914 Z" fill="#c9cbcc"/></svg>
<div class="a" style="left:1090px;top:857px;width:6px;height:6px;background:#4a4d50;"></div>
<div class="a" style="left:1090px;top:869px;width:6px;height:6px;background:#4a4d50;"></div>
<div class="a" style="left:1090px;top:881px;width:6px;height:6px;background:#4a4d50;"></div>
<div class="t" style="top:858px;font-size:5px;line-height:6px;height:6px;color:#4a4d50;font-weight:700;left:1100px;line-height:5px;">DEMO<br>MODE</div>
<div class="t" style="top:870px;font-size:5px;line-height:6px;height:6px;color:#4a4d50;font-weight:700;left:1100px;line-height:5px;">DISK<br>OVERLOAD</div>
<div class="t" style="top:882px;font-size:5px;line-height:6px;height:6px;color:#4a4d50;font-weight:700;left:1100px;line-height:5px;">AUTOMATION<br>OVERRIDE</div>
<div class="t" style="top:857.2px;font-size:5.5px;line-height:6.6px;height:6.6px;color:#b5b7b9;font-weight:700;left:1137px;width:0;"><span class="c">CALC</span></div>
<svg class="a" style="left:1148px;top:854px;" width="12" height="12" viewBox="1197 886 12 12"><circle cx="1203" cy="892" r="4" fill="none" stroke="#4a4d50" stroke-width="1.2" stroke-dasharray="1.5 1"/></svg>
<div class="a" style="left:1149px;top:870px;width:11px;height:18px;background:#111;border:1px solid #4a4d50;box-sizing:border-box;"></div>
<div class="a" style="left:1151px;top:882px;width:7px;height:4px;background:#ccc;"></div>
<div class="a" style="left:1165px;top:855px;width:11px;height:33px;background:#151617;border:1px solid #4a4d50;box-sizing:border-box;"></div>
<div class="a" style="left:1181px;top:855px;width:11px;height:33px;background:#151617;border:1px solid #4a4d50;box-sizing:border-box;"></div>
<svg class="a" style="left:1149px;top:854px;" width="44" height="35" viewBox="1198 886 44 35"><rect x="1215.5" y="889" width="8" height="1.6" fill="#4f5255"/><rect x="1231.5" y="889" width="8" height="1.6" fill="#4f5255"/><rect x="1215.5" y="892" width="8" height="1.6" fill="#4f5255"/><rect x="1231.5" y="892" width="8" height="1.6" fill="#4f5255"/><rect x="1215.5" y="895" width="8" height="1.6" fill="#4f5255"/><rect x="1231.5" y="895" width="8" height="1.6" fill="#4f5255"/><rect x="1215.5" y="898" width="8" height="1.6" fill="#4f5255"/><rect x="1231.5" y="898" width="8" height="1.6" fill="#4f5255"/><rect x="1215.5" y="901" width="8" height="1.6" fill="#4f5255"/><rect x="1231.5" y="901" width="8" height="1.6" fill="#4f5255"/><rect x="1215.5" y="904" width="8" height="1.6" fill="#4f5255"/><rect x="1231.5" y="904" width="8" height="1.6" fill="#4f5255"/><rect x="1215.5" y="907" width="8" height="1.6" fill="#4f5255"/><rect x="1231.5" y="907" width="8" height="1.6" fill="#4f5255"/><rect x="1215.5" y="910" width="8" height="1.6" fill="#4f5255"/><rect x="1231.5" y="910" width="8" height="1.6" fill="#4f5255"/><rect x="1215.5" y="913" width="8" height="1.6" fill="#4f5255"/><rect x="1231.5" y="913" width="8" height="1.6" fill="#4f5255"/><rect x="1215.5" y="916" width="8" height="1.6" fill="#4f5255"/><rect x="1231.5" y="916" width="8" height="1.6" fill="#4f5255"/><rect x="1199.5" y="904" width="8" height="1.5" fill="#4f5255"/><rect x="1199.5" y="907" width="8" height="1.5" fill="#4f5255"/><rect x="1199.5" y="910" width="8" height="1.5" fill="#4f5255"/><rect x="1199.5" y="913" width="8" height="1.5" fill="#4f5255"/></svg>
<div class="t" style="top:890.5px;font-size:5px;line-height:6px;height:6px;color:#b5b7b9;font-weight:700;left:1155px;width:0;"><span class="c">DSP</span></div>
<div class="t" style="top:890.5px;font-size:5px;line-height:6px;height:6px;color:#b5b7b9;font-weight:700;left:1170.5px;width:0;"><span class="c">IN</span></div>
<div class="t" style="top:890.5px;font-size:5px;line-height:6px;height:6px;color:#b5b7b9;font-weight:700;left:1186.5px;width:0;"><span class="c">OUT</span></div>
<div class="a" style="left:1206.8px;top:854px;width:29.6px;height:33px;background:#2a2c2e;border:1px solid #777;border-radius:2px;box-sizing:border-box;"></div>
<div class="a" style="left:1207.5px;top:871.5px;width:28.2px;height:15px;background:#cfd1d2;"></div>
<div class="t" style="top:857.7px;font-size:5.5px;line-height:6.6px;height:6.6px;color:#bbb;left:1221.5px;width:0;line-height:5.5px;"><span class="c">DELAY<br>COMP</span></div>
<div class="t" style="top:874.2px;font-size:8.5px;line-height:10.2px;height:10.2px;color:#333;font-weight:700;left:1221.5px;width:0;"><span class="c">ON</span></div>
<div class="t" style="top:889.6px;font-size:6.5px;line-height:7.8px;height:7.8px;color:#d4d6d7;font-weight:700;left:1221px;width:0;"><span class="c">3022</span></div>
<div class="a" style="left:0;top:0;width:1445px;height:900px;box-sizing:border-box;border:1px solid #3d4043;border-radius:9px 9px 7px 7px;"></div>
</div>
</body></html>
